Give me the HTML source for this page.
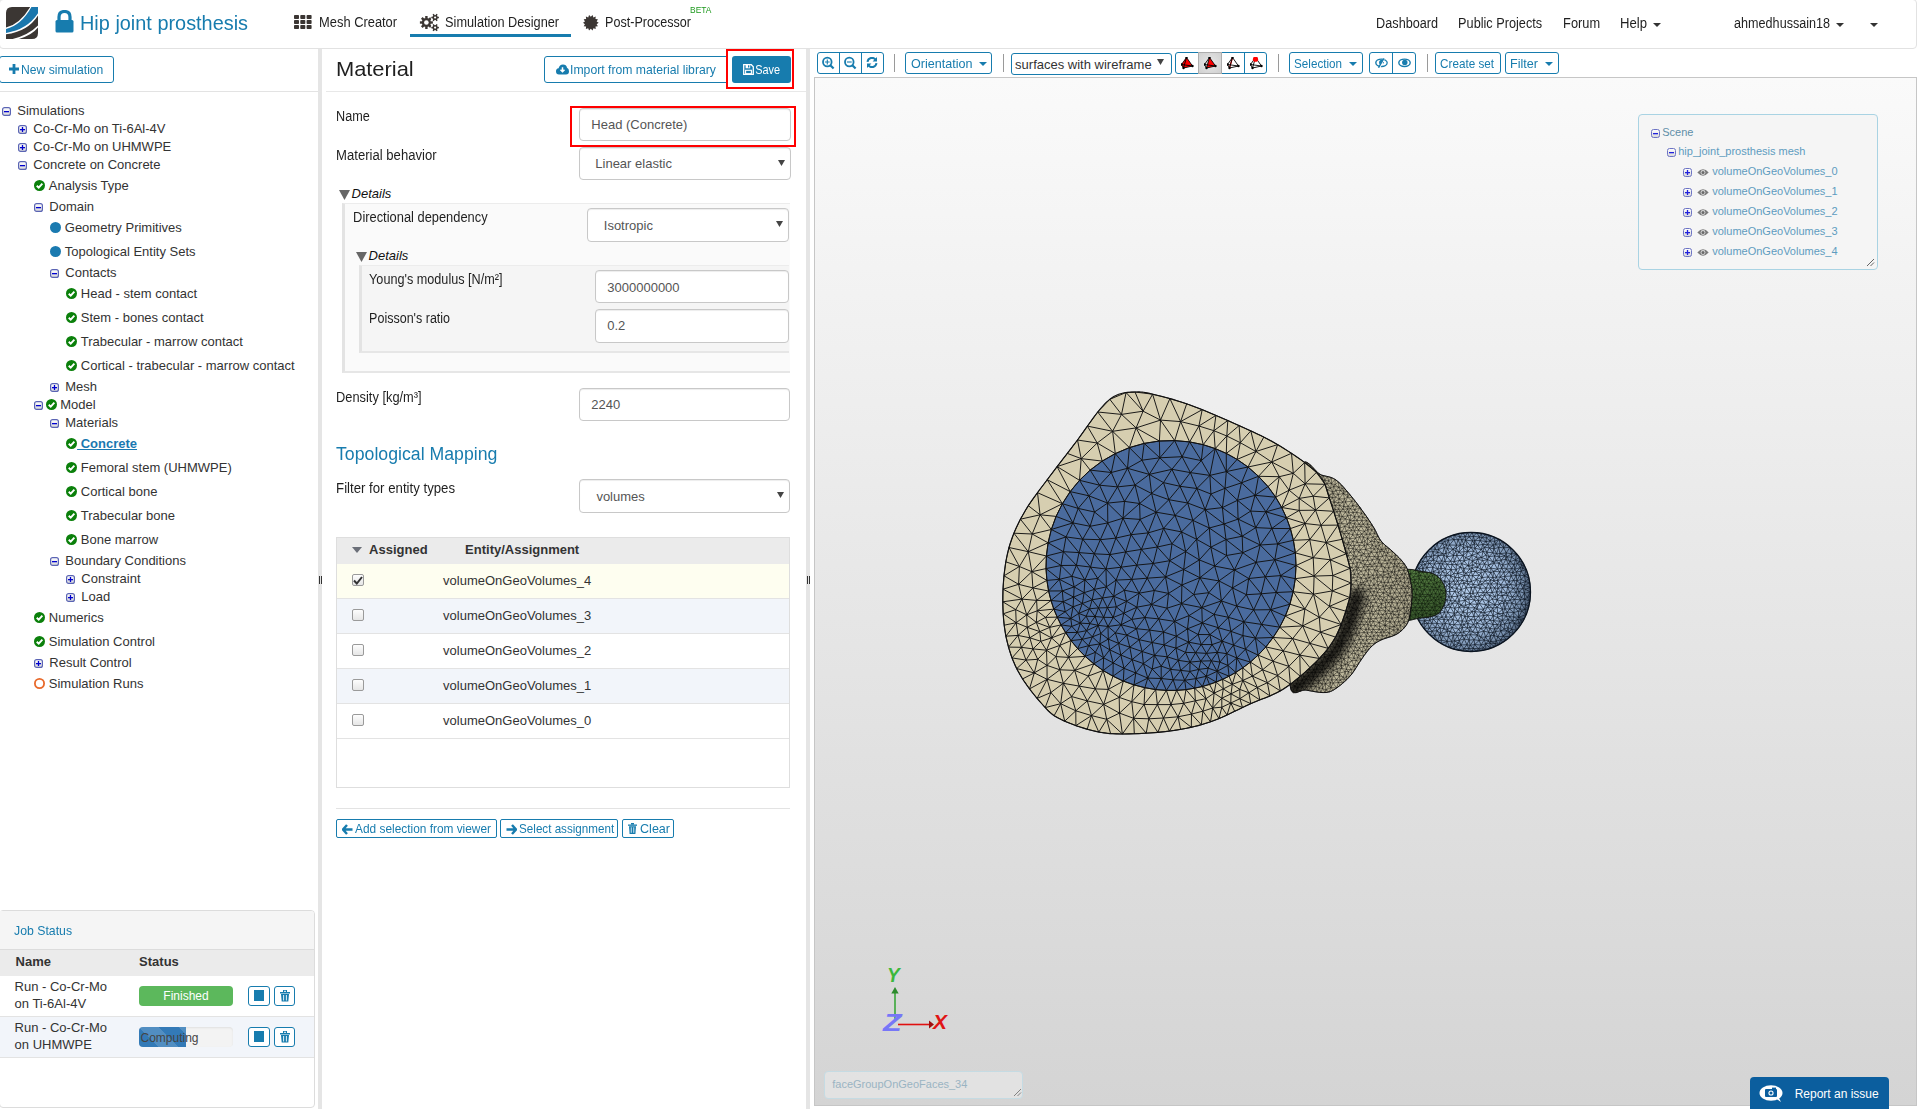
<!DOCTYPE html><html><head><meta charset="utf-8"><style>
*{box-sizing:border-box}
html,body{margin:0;padding:0}
body{width:1918px;height:1109px;overflow:hidden;position:relative;background:#fff;font-family:"Liberation Sans", sans-serif}
.a{position:absolute}
.t{position:absolute;white-space:nowrap}
</style></head><body>
<div class="a" style="left:-1px;top:-1px;width:1918px;height:50px;border:1px solid #e2e2e2;border-radius:4px;background:#fff"></div>
<svg class="a" style="left:6px;top:7px;" width="32" height="32" viewBox="0 0 32 32">
<defs><clipPath id="lc"><path d="M6 0 H32 V26 Q32 32 26 32 H0 V6 Q0 0 6 0Z"/></clipPath></defs>
<g clip-path="url(#lc)">
<rect x="0" y="0" width="32" height="32" fill="#3b3633"/>
<path d="M24.2 0 Q14 17 0 20.6 L0 27.2 Q22 24.4 32 8.4 L32 0Z" fill="#fff"/>
<path d="M25.4 0 Q15.5 18 0 22.1 L0 25.9 Q21 22.8 32 6.3 L32 0Z" fill="#1a77ad"/>
<path d="M32 18.4 Q21 29.5 0 33.5 L6 33.5 Q24 30.5 32 20.6Z" fill="#fff"/>
</g></svg>
<svg class="a" style="left:55px;top:10px;" width="19" height="23" viewBox="0 0 19 23"><path d="M4 11 V7 Q4 1.5 9.5 1.5 Q15 1.5 15 7 V11" fill="none" stroke="#177cae" stroke-width="3.2"/>
<rect x="0.5" y="10" width="18" height="12.5" rx="1.5" fill="#177cae"/></svg>
<div class="t" style="left:79.60px;top:13.07px;font-size:20px;line-height:20px;color:#177cae;font-weight:normal;font-style:normal;transform:scaleX(0.9944);transform-origin:1.40px 0;">Hip joint prosthesis</div>
<svg class="a" style="left:294px;top:15px;" width="19" height="15" viewBox="0 0 19 15"><rect x="0.0" y="0" width="5" height="4" rx="0.8" fill="#3b3633"/><rect x="6.3" y="0" width="5" height="4" rx="0.8" fill="#3b3633"/><rect x="12.6" y="0" width="5" height="4" rx="0.8" fill="#3b3633"/><rect x="0.0" y="5" width="5" height="4" rx="0.8" fill="#3b3633"/><rect x="6.3" y="5" width="5" height="4" rx="0.8" fill="#3b3633"/><rect x="12.6" y="5" width="5" height="4" rx="0.8" fill="#3b3633"/><rect x="0.0" y="10" width="5" height="4" rx="0.8" fill="#3b3633"/><rect x="6.3" y="10" width="5" height="4" rx="0.8" fill="#3b3633"/><rect x="12.6" y="10" width="5" height="4" rx="0.8" fill="#3b3633"/></svg>
<div class="t" style="left:319.02px;top:15.15px;font-size:14px;line-height:14px;color:#1f1f1f;font-weight:normal;font-style:normal;transform:scaleX(0.9196);transform-origin:0.98px 0;">Mesh Creator</div>
<svg class="a" style="left:418px;top:12px;" width="22" height="22" viewBox="0 0 22 22"><circle cx="8.4" cy="10.5" r="4.6" fill="#3b3633"/><rect x="7.20" y="4.00" width="2.4" height="2.70" fill="#3b3633" transform="rotate(0.0 8.4 10.5)"/><rect x="7.20" y="4.00" width="2.4" height="2.70" fill="#3b3633" transform="rotate(45.0 8.4 10.5)"/><rect x="7.20" y="4.00" width="2.4" height="2.70" fill="#3b3633" transform="rotate(90.0 8.4 10.5)"/><rect x="7.20" y="4.00" width="2.4" height="2.70" fill="#3b3633" transform="rotate(135.0 8.4 10.5)"/><rect x="7.20" y="4.00" width="2.4" height="2.70" fill="#3b3633" transform="rotate(180.0 8.4 10.5)"/><rect x="7.20" y="4.00" width="2.4" height="2.70" fill="#3b3633" transform="rotate(225.0 8.4 10.5)"/><rect x="7.20" y="4.00" width="2.4" height="2.70" fill="#3b3633" transform="rotate(270.0 8.4 10.5)"/><rect x="7.20" y="4.00" width="2.4" height="2.70" fill="#3b3633" transform="rotate(315.0 8.4 10.5)"/><circle cx="8.4" cy="10.5" r="2.3" fill="#fff"/><circle cx="17.1" cy="5.5" r="4.4" fill="#fff"/><circle cx="17.1" cy="15.6" r="4.4" fill="#fff"/><circle cx="17.1" cy="5.5" r="2.6" fill="#3b3633"/><rect x="16.35" y="1.70" width="1.5" height="2.00" fill="#3b3633" transform="rotate(30.0 17.1 5.5)"/><rect x="16.35" y="1.70" width="1.5" height="2.00" fill="#3b3633" transform="rotate(90.0 17.1 5.5)"/><rect x="16.35" y="1.70" width="1.5" height="2.00" fill="#3b3633" transform="rotate(150.0 17.1 5.5)"/><rect x="16.35" y="1.70" width="1.5" height="2.00" fill="#3b3633" transform="rotate(210.0 17.1 5.5)"/><rect x="16.35" y="1.70" width="1.5" height="2.00" fill="#3b3633" transform="rotate(270.0 17.1 5.5)"/><rect x="16.35" y="1.70" width="1.5" height="2.00" fill="#3b3633" transform="rotate(330.0 17.1 5.5)"/><circle cx="17.1" cy="5.5" r="1.1" fill="#fff"/><circle cx="17.1" cy="15.6" r="2.6" fill="#3b3633"/><rect x="16.35" y="11.80" width="1.5" height="2.00" fill="#3b3633" transform="rotate(30.0 17.1 15.6)"/><rect x="16.35" y="11.80" width="1.5" height="2.00" fill="#3b3633" transform="rotate(90.0 17.1 15.6)"/><rect x="16.35" y="11.80" width="1.5" height="2.00" fill="#3b3633" transform="rotate(150.0 17.1 15.6)"/><rect x="16.35" y="11.80" width="1.5" height="2.00" fill="#3b3633" transform="rotate(210.0 17.1 15.6)"/><rect x="16.35" y="11.80" width="1.5" height="2.00" fill="#3b3633" transform="rotate(270.0 17.1 15.6)"/><rect x="16.35" y="11.80" width="1.5" height="2.00" fill="#3b3633" transform="rotate(330.0 17.1 15.6)"/><circle cx="17.1" cy="15.6" r="1.1" fill="#fff"/></svg>
<div class="t" style="left:445.02px;top:15.15px;font-size:14px;line-height:14px;color:#1f1f1f;font-weight:normal;font-style:normal;transform:scaleX(0.9095);transform-origin:0.98px 0;">Simulation Designer</div>
<div class="a" style="left:410px;top:34px;width:161px;height:3px;background:#177cae"></div>
<svg class="a" style="left:583px;top:15px;" width="16" height="16" viewBox="0 0 16 16"><path d="M15.70 7.80 L13.65 9.14 L14.92 11.23 L12.49 11.54 L12.73 13.98 L10.40 13.21 L9.56 15.50 L7.80 13.80 L6.04 15.50 L5.20 13.21 L2.87 13.98 L3.11 11.54 L0.68 11.23 L1.95 9.14 L-0.10 7.80 L1.95 6.46 L0.68 4.37 L3.11 4.06 L2.87 1.62 L5.20 2.39 L6.04 0.10 L7.80 1.80 L9.56 0.10 L10.40 2.39 L12.73 1.62 L12.49 4.06 L14.92 4.37 L13.65 6.46Z" fill="#3b3633"/></svg>
<div class="t" style="left:605.02px;top:15.15px;font-size:14px;line-height:14px;color:#1f1f1f;font-weight:normal;font-style:normal;transform:scaleX(0.8981);transform-origin:0.98px 0;">Post-Processor</div>
<div class="t" style="left:690.34px;top:4.96px;font-size:9.5px;line-height:9.5px;color:#1f9a1f;font-weight:normal;font-style:normal;transform:scaleX(0.8880);transform-origin:0.67px 0;">BETA</div>
<div class="t" style="left:1376.02px;top:16.15px;font-size:14px;line-height:14px;color:#1f1f1f;font-weight:normal;font-style:normal;transform:scaleX(0.9054);transform-origin:0.98px 0;">Dashboard</div>
<div class="t" style="left:1458.02px;top:16.15px;font-size:14px;line-height:14px;color:#1f1f1f;font-weight:normal;font-style:normal;transform:scaleX(0.9078);transform-origin:0.98px 0;">Public Projects</div>
<div class="t" style="left:1563.02px;top:16.15px;font-size:14px;line-height:14px;color:#1f1f1f;font-weight:normal;font-style:normal;transform:scaleX(0.9149);transform-origin:0.98px 0;">Forum</div>
<div class="t" style="left:1620.02px;top:16.15px;font-size:14px;line-height:14px;color:#1f1f1f;font-weight:normal;font-style:normal;transform:scaleX(0.9375);transform-origin:0.98px 0;">Help</div>
<svg class="a" style="left:1653px;top:23px;" width="8" height="4" viewBox="0 0 8 4"><path d="M0 0 H8 L4.0 4Z" fill="#333"/></svg>
<div class="t" style="left:1734.02px;top:16.15px;font-size:14px;line-height:14px;color:#1f1f1f;font-weight:normal;font-style:normal;transform:scaleX(0.9000);transform-origin:0.98px 0;">ahmedhussain18</div>
<svg class="a" style="left:1836px;top:23px;" width="8" height="4" viewBox="0 0 8 4"><path d="M0 0 H8 L4.0 4Z" fill="#333"/></svg>
<svg class="a" style="left:1870px;top:23px;" width="8" height="4" viewBox="0 0 8 4"><path d="M0 0 H8 L4.0 4Z" fill="#333"/></svg>
<div class="a" style="left:-1px;top:56px;width:115px;height:27px;border:1px solid #177cae;border-radius:3px"></div>
<svg class="a" style="left:9px;top:64px;" width="10" height="10" viewBox="0 0 10 10"><path d="M3.6 0 H6.4 V3.6 H10 V6.4 H6.4 V10 H3.6 V6.4 H0 V3.6 H3.6Z" fill="#177cae"/></svg>
<div class="t" style="left:20.59px;top:63.00px;font-size:13px;line-height:13px;color:#177cae;font-weight:normal;font-style:normal;transform:scaleX(0.9336);transform-origin:0.91px 0;">New simulation</div>
<div class="a" style="left:0px;top:91px;width:318px;height:1px;background:#e3e3e3"></div>
<div class="a" style="left:318px;top:49px;width:4px;height:1060px;background:#e5e5e5"></div>
<svg class="a" style="left:319px;top:576px;" width="3" height="8" viewBox="0 0 3 8"><rect x="0" y="0" width="1" height="8" fill="#333"/><rect x="2" y="0" width="1" height="8" fill="#333"/></svg>
<svg width="0" height="0" style="position:absolute"><defs><linearGradient id="eg" x1="0" y1="0" x2="0" y2="1"><stop offset="0" stop-color="#ffffff"/><stop offset="1" stop-color="#d8d8d8"/></linearGradient></defs></svg>
<svg class="a" style="left:2px;top:107px;" width="9" height="9" viewBox="0 0 9 9"><rect x="0.6" y="0.6" width="7.8" height="7.8" rx="2" fill="url(#eg)" stroke="#5a64b4" stroke-width="1.2"/><rect x="2" y="4" width="5" height="1.3" fill="#0000d0"/></svg>
<div class="t" style="left:17.29px;top:104.00px;font-size:13px;line-height:13px;color:#333;font-weight:normal;font-style:normal;">Simulations</div>
<svg class="a" style="left:18px;top:125px;" width="9" height="9" viewBox="0 0 9 9"><rect x="0.6" y="0.6" width="7.8" height="7.8" rx="2" fill="url(#eg)" stroke="#5a64b4" stroke-width="1.2"/><rect x="2" y="4" width="5" height="1.3" fill="#0000d0"/><rect x="3.85" y="2" width="1.3" height="5" fill="#0000d0"/></svg>
<div class="t" style="left:33.29px;top:122.00px;font-size:13px;line-height:13px;color:#333;font-weight:normal;font-style:normal;">Co-Cr-Mo on Ti-6Al-4V</div>
<svg class="a" style="left:18px;top:143px;" width="9" height="9" viewBox="0 0 9 9"><rect x="0.6" y="0.6" width="7.8" height="7.8" rx="2" fill="url(#eg)" stroke="#5a64b4" stroke-width="1.2"/><rect x="2" y="4" width="5" height="1.3" fill="#0000d0"/><rect x="3.85" y="2" width="1.3" height="5" fill="#0000d0"/></svg>
<div class="t" style="left:33.29px;top:140.00px;font-size:13px;line-height:13px;color:#333;font-weight:normal;font-style:normal;">Co-Cr-Mo on UHMWPE</div>
<svg class="a" style="left:18px;top:161px;" width="9" height="9" viewBox="0 0 9 9"><rect x="0.6" y="0.6" width="7.8" height="7.8" rx="2" fill="url(#eg)" stroke="#5a64b4" stroke-width="1.2"/><rect x="2" y="4" width="5" height="1.3" fill="#0000d0"/></svg>
<div class="t" style="left:33.29px;top:158.00px;font-size:13px;line-height:13px;color:#333;font-weight:normal;font-style:normal;">Concrete on Concrete</div>
<svg class="a" style="left:34px;top:180px;" width="11" height="11" viewBox="0 0 11 11"><circle cx="5.5" cy="5.5" r="5.5" fill="#0b800b"/><path d="M2.75 5.72 L4.73 7.70 L8.36 3.63" fill="none" stroke="#fff" stroke-width="1.9"/></svg>
<div class="t" style="left:48.79px;top:179.00px;font-size:13px;line-height:13px;color:#333;font-weight:normal;font-style:normal;">Analysis Type</div>
<svg class="a" style="left:34px;top:203px;" width="9" height="9" viewBox="0 0 9 9"><rect x="0.6" y="0.6" width="7.8" height="7.8" rx="2" fill="url(#eg)" stroke="#5a64b4" stroke-width="1.2"/><rect x="2" y="4" width="5" height="1.3" fill="#0000d0"/></svg>
<div class="t" style="left:49.29px;top:200.00px;font-size:13px;line-height:13px;color:#333;font-weight:normal;font-style:normal;">Domain</div>
<svg class="a" style="left:50px;top:222px;" width="11" height="11" viewBox="0 0 11 11"><circle cx="5.5" cy="5.5" r="5.5" fill="#1a7ab0"/></svg>
<div class="t" style="left:64.79px;top:221.00px;font-size:13px;line-height:13px;color:#333;font-weight:normal;font-style:normal;">Geometry Primitives</div>
<svg class="a" style="left:50px;top:246px;" width="11" height="11" viewBox="0 0 11 11"><circle cx="5.5" cy="5.5" r="5.5" fill="#1a7ab0"/></svg>
<div class="t" style="left:64.79px;top:245.00px;font-size:13px;line-height:13px;color:#333;font-weight:normal;font-style:normal;">Topological Entity Sets</div>
<svg class="a" style="left:50px;top:269px;" width="9" height="9" viewBox="0 0 9 9"><rect x="0.6" y="0.6" width="7.8" height="7.8" rx="2" fill="url(#eg)" stroke="#5a64b4" stroke-width="1.2"/><rect x="2" y="4" width="5" height="1.3" fill="#0000d0"/></svg>
<div class="t" style="left:65.29px;top:266.00px;font-size:13px;line-height:13px;color:#333;font-weight:normal;font-style:normal;">Contacts</div>
<svg class="a" style="left:66px;top:288px;" width="11" height="11" viewBox="0 0 11 11"><circle cx="5.5" cy="5.5" r="5.5" fill="#0b800b"/><path d="M2.75 5.72 L4.73 7.70 L8.36 3.63" fill="none" stroke="#fff" stroke-width="1.9"/></svg>
<div class="t" style="left:80.79px;top:287.00px;font-size:13px;line-height:13px;color:#333;font-weight:normal;font-style:normal;">Head - stem contact</div>
<svg class="a" style="left:66px;top:312px;" width="11" height="11" viewBox="0 0 11 11"><circle cx="5.5" cy="5.5" r="5.5" fill="#0b800b"/><path d="M2.75 5.72 L4.73 7.70 L8.36 3.63" fill="none" stroke="#fff" stroke-width="1.9"/></svg>
<div class="t" style="left:80.79px;top:311.00px;font-size:13px;line-height:13px;color:#333;font-weight:normal;font-style:normal;">Stem - bones contact</div>
<svg class="a" style="left:66px;top:336px;" width="11" height="11" viewBox="0 0 11 11"><circle cx="5.5" cy="5.5" r="5.5" fill="#0b800b"/><path d="M2.75 5.72 L4.73 7.70 L8.36 3.63" fill="none" stroke="#fff" stroke-width="1.9"/></svg>
<div class="t" style="left:80.79px;top:335.00px;font-size:13px;line-height:13px;color:#333;font-weight:normal;font-style:normal;">Trabecular - marrow contact</div>
<svg class="a" style="left:66px;top:360px;" width="11" height="11" viewBox="0 0 11 11"><circle cx="5.5" cy="5.5" r="5.5" fill="#0b800b"/><path d="M2.75 5.72 L4.73 7.70 L8.36 3.63" fill="none" stroke="#fff" stroke-width="1.9"/></svg>
<div class="t" style="left:80.79px;top:359.00px;font-size:13px;line-height:13px;color:#333;font-weight:normal;font-style:normal;">Cortical - trabecular - marrow contact</div>
<svg class="a" style="left:50px;top:383px;" width="9" height="9" viewBox="0 0 9 9"><rect x="0.6" y="0.6" width="7.8" height="7.8" rx="2" fill="url(#eg)" stroke="#5a64b4" stroke-width="1.2"/><rect x="2" y="4" width="5" height="1.3" fill="#0000d0"/><rect x="3.85" y="2" width="1.3" height="5" fill="#0000d0"/></svg>
<div class="t" style="left:65.29px;top:380.00px;font-size:13px;line-height:13px;color:#333;font-weight:normal;font-style:normal;">Mesh</div>
<svg class="a" style="left:34px;top:401px;" width="9" height="9" viewBox="0 0 9 9"><rect x="0.6" y="0.6" width="7.8" height="7.8" rx="2" fill="url(#eg)" stroke="#5a64b4" stroke-width="1.2"/><rect x="2" y="4" width="5" height="1.3" fill="#0000d0"/></svg>
<svg class="a" style="left:46px;top:399px;" width="11" height="11" viewBox="0 0 11 11"><circle cx="5.5" cy="5.5" r="5.5" fill="#0b800b"/><path d="M2.75 5.72 L4.73 7.70 L8.36 3.63" fill="none" stroke="#fff" stroke-width="1.9"/></svg>
<div class="t" style="left:60.29px;top:398.00px;font-size:13px;line-height:13px;color:#333;font-weight:normal;font-style:normal;">Model</div>
<svg class="a" style="left:50px;top:419px;" width="9" height="9" viewBox="0 0 9 9"><rect x="0.6" y="0.6" width="7.8" height="7.8" rx="2" fill="url(#eg)" stroke="#5a64b4" stroke-width="1.2"/><rect x="2" y="4" width="5" height="1.3" fill="#0000d0"/></svg>
<div class="t" style="left:65.29px;top:416.00px;font-size:13px;line-height:13px;color:#333;font-weight:normal;font-style:normal;">Materials</div>
<svg class="a" style="left:66px;top:438px;" width="11" height="11" viewBox="0 0 11 11"><circle cx="5.5" cy="5.5" r="5.5" fill="#0b800b"/><path d="M2.75 5.72 L4.73 7.70 L8.36 3.63" fill="none" stroke="#fff" stroke-width="1.9"/></svg>
<div class="t" style="left:77.09px;top:437.00px;font-size:13px;line-height:13px;color:#1a78b0;font-weight:bold;font-style:normal;text-decoration:underline;">&nbsp;Concrete</div>
<svg class="a" style="left:66px;top:462px;" width="11" height="11" viewBox="0 0 11 11"><circle cx="5.5" cy="5.5" r="5.5" fill="#0b800b"/><path d="M2.75 5.72 L4.73 7.70 L8.36 3.63" fill="none" stroke="#fff" stroke-width="1.9"/></svg>
<div class="t" style="left:80.79px;top:461.00px;font-size:13px;line-height:13px;color:#333;font-weight:normal;font-style:normal;">Femoral stem (UHMWPE)</div>
<svg class="a" style="left:66px;top:486px;" width="11" height="11" viewBox="0 0 11 11"><circle cx="5.5" cy="5.5" r="5.5" fill="#0b800b"/><path d="M2.75 5.72 L4.73 7.70 L8.36 3.63" fill="none" stroke="#fff" stroke-width="1.9"/></svg>
<div class="t" style="left:80.79px;top:485.00px;font-size:13px;line-height:13px;color:#333;font-weight:normal;font-style:normal;">Cortical bone</div>
<svg class="a" style="left:66px;top:510px;" width="11" height="11" viewBox="0 0 11 11"><circle cx="5.5" cy="5.5" r="5.5" fill="#0b800b"/><path d="M2.75 5.72 L4.73 7.70 L8.36 3.63" fill="none" stroke="#fff" stroke-width="1.9"/></svg>
<div class="t" style="left:80.79px;top:509.00px;font-size:13px;line-height:13px;color:#333;font-weight:normal;font-style:normal;">Trabecular bone</div>
<svg class="a" style="left:66px;top:534px;" width="11" height="11" viewBox="0 0 11 11"><circle cx="5.5" cy="5.5" r="5.5" fill="#0b800b"/><path d="M2.75 5.72 L4.73 7.70 L8.36 3.63" fill="none" stroke="#fff" stroke-width="1.9"/></svg>
<div class="t" style="left:80.79px;top:533.00px;font-size:13px;line-height:13px;color:#333;font-weight:normal;font-style:normal;">Bone marrow</div>
<svg class="a" style="left:50px;top:557px;" width="9" height="9" viewBox="0 0 9 9"><rect x="0.6" y="0.6" width="7.8" height="7.8" rx="2" fill="url(#eg)" stroke="#5a64b4" stroke-width="1.2"/><rect x="2" y="4" width="5" height="1.3" fill="#0000d0"/></svg>
<div class="t" style="left:65.29px;top:554.00px;font-size:13px;line-height:13px;color:#333;font-weight:normal;font-style:normal;">Boundary Conditions</div>
<svg class="a" style="left:66px;top:575px;" width="9" height="9" viewBox="0 0 9 9"><rect x="0.6" y="0.6" width="7.8" height="7.8" rx="2" fill="url(#eg)" stroke="#5a64b4" stroke-width="1.2"/><rect x="2" y="4" width="5" height="1.3" fill="#0000d0"/><rect x="3.85" y="2" width="1.3" height="5" fill="#0000d0"/></svg>
<div class="t" style="left:81.29px;top:572.00px;font-size:13px;line-height:13px;color:#333;font-weight:normal;font-style:normal;">Constraint</div>
<svg class="a" style="left:66px;top:593px;" width="9" height="9" viewBox="0 0 9 9"><rect x="0.6" y="0.6" width="7.8" height="7.8" rx="2" fill="url(#eg)" stroke="#5a64b4" stroke-width="1.2"/><rect x="2" y="4" width="5" height="1.3" fill="#0000d0"/><rect x="3.85" y="2" width="1.3" height="5" fill="#0000d0"/></svg>
<div class="t" style="left:81.29px;top:590.00px;font-size:13px;line-height:13px;color:#333;font-weight:normal;font-style:normal;">Load</div>
<svg class="a" style="left:34px;top:612px;" width="11" height="11" viewBox="0 0 11 11"><circle cx="5.5" cy="5.5" r="5.5" fill="#0b800b"/><path d="M2.75 5.72 L4.73 7.70 L8.36 3.63" fill="none" stroke="#fff" stroke-width="1.9"/></svg>
<div class="t" style="left:48.79px;top:611.00px;font-size:13px;line-height:13px;color:#333;font-weight:normal;font-style:normal;">Numerics</div>
<svg class="a" style="left:34px;top:636px;" width="11" height="11" viewBox="0 0 11 11"><circle cx="5.5" cy="5.5" r="5.5" fill="#0b800b"/><path d="M2.75 5.72 L4.73 7.70 L8.36 3.63" fill="none" stroke="#fff" stroke-width="1.9"/></svg>
<div class="t" style="left:48.79px;top:635.00px;font-size:13px;line-height:13px;color:#333;font-weight:normal;font-style:normal;">Simulation Control</div>
<svg class="a" style="left:34px;top:659px;" width="9" height="9" viewBox="0 0 9 9"><rect x="0.6" y="0.6" width="7.8" height="7.8" rx="2" fill="url(#eg)" stroke="#5a64b4" stroke-width="1.2"/><rect x="2" y="4" width="5" height="1.3" fill="#0000d0"/><rect x="3.85" y="2" width="1.3" height="5" fill="#0000d0"/></svg>
<div class="t" style="left:49.29px;top:656.00px;font-size:13px;line-height:13px;color:#333;font-weight:normal;font-style:normal;">Result Control</div>
<svg class="a" style="left:34px;top:678px;" width="11" height="11" viewBox="0 0 11 11"><circle cx="5.5" cy="5.5" r="4.6" fill="none" stroke="#e8692a" stroke-width="1.8"/></svg>
<div class="t" style="left:48.79px;top:677.00px;font-size:13px;line-height:13px;color:#333;font-weight:normal;font-style:normal;">Simulation Runs</div>
<div class="a" style="left:-1px;top:910px;width:316px;height:198px;border:1px solid #dcdcdc;border-radius:4px;background:#fff"></div>
<div class="a" style="left:0px;top:911px;width:314px;height:38px;background:#f5f5f5;border-radius:0 3px 0 0"></div>
<div class="a" style="left:0px;top:949px;width:314px;height:1px;background:#dcdcdc"></div>
<div class="t" style="left:13.59px;top:923.50px;font-size:13px;line-height:13px;color:#177cae;font-weight:normal;font-style:normal;transform:scaleX(0.9443);transform-origin:0.91px 0;">Job Status</div>
<div class="a" style="left:0px;top:950px;width:314px;height:26px;background:#ebebeb"></div>
<div class="t" style="left:15.59px;top:955.00px;font-size:13px;line-height:13px;color:#333;font-weight:bold;font-style:normal;">Name</div>
<div class="t" style="left:139.09px;top:955.00px;font-size:13px;line-height:13px;color:#333;font-weight:bold;font-style:normal;">Status</div>
<div class="a" style="left:0px;top:1016px;width:314px;height:1px;background:#e3e3e3"></div>
<div class="a" style="left:0px;top:1017px;width:314px;height:40px;background:#f2f5fa"></div>
<div class="a" style="left:0px;top:1057px;width:314px;height:1px;background:#e3e3e3"></div>
<div class="t" style="left:14.59px;top:979.50px;font-size:13px;line-height:13px;color:#333;font-weight:normal;font-style:normal;">Run - Co-Cr-Mo</div>
<div class="t" style="left:14.59px;top:997.00px;font-size:13px;line-height:13px;color:#333;font-weight:normal;font-style:normal;">on Ti-6Al-4V</div>
<div class="t" style="left:14.59px;top:1020.50px;font-size:13px;line-height:13px;color:#333;font-weight:normal;font-style:normal;">Run - Co-Cr-Mo</div>
<div class="t" style="left:14.59px;top:1038.00px;font-size:13px;line-height:13px;color:#333;font-weight:normal;font-style:normal;">on UHMWPE</div>
<div class="a" style="left:139px;top:986px;width:94px;height:20px;background:#5cb85c;border-radius:4px"></div>
<div class="t" style="left:139px;top:989px;width:94px;text-align:center;font-size:12px;line-height:14px;color:#fff">Finished</div>
<div class="a" style="left:139px;top:1027px;width:94px;height:20px;background:#f3f3f3;border-radius:4px;box-shadow:inset 0 1px 2px rgba(0,0,0,.08)"></div>
<div class="a" style="left:139px;top:1027px;width:47px;height:20px;border-radius:4px 0 0 4px;background-color:#337ab7;background-image:linear-gradient(45deg,rgba(255,255,255,.15) 25%,transparent 25%,transparent 50%,rgba(255,255,255,.15) 50%,rgba(255,255,255,.15) 75%,transparent 75%,transparent);background-size:40px 40px"></div>
<div class="t" style="left:140.5px;top:1030.5px;font-size:12px;line-height:14px;color:#444">Computing</div>
<div class="a" style="left:248px;top:986px;width:22px;height:20px;border:1px solid #177cae;border-radius:3px;background:#fff"></div>
<div class="a" style="left:254px;top:990px;width:10px;height:11px;background:#177cae"></div>
<div class="a" style="left:274px;top:986px;width:21px;height:20px;border:1px solid #177cae;border-radius:3px;background:#fff"></div>
<svg class="a" style="left:280px;top:990px;" width="10" height="12" viewBox="0 0 10 12"><rect x="0" y="2" width="10" height="1.5" fill="#177cae"/><rect x="3.5" y="0.3" width="3" height="2" fill="none" stroke="#177cae" stroke-width="1"/><path d="M1 4 H9 L8.3 11.5 H1.7Z" fill="#177cae"/><rect x="3.2" y="5" width="0.9" height="5.5" fill="#fff"/><rect x="5.9" y="5" width="0.9" height="5.5" fill="#fff"/></svg>
<div class="a" style="left:248px;top:1027px;width:22px;height:20px;border:1px solid #177cae;border-radius:3px;background:#fff"></div>
<div class="a" style="left:254px;top:1031px;width:10px;height:11px;background:#177cae"></div>
<div class="a" style="left:274px;top:1027px;width:21px;height:20px;border:1px solid #177cae;border-radius:3px;background:#fff"></div>
<svg class="a" style="left:280px;top:1031px;" width="10" height="12" viewBox="0 0 10 12"><rect x="0" y="2" width="10" height="1.5" fill="#177cae"/><rect x="3.5" y="0.3" width="3" height="2" fill="none" stroke="#177cae" stroke-width="1"/><path d="M1 4 H9 L8.3 11.5 H1.7Z" fill="#177cae"/><rect x="3.2" y="5" width="0.9" height="5.5" fill="#fff"/><rect x="5.9" y="5" width="0.9" height="5.5" fill="#fff"/></svg>
<div class="t" style="left:336.06px;top:59.31px;font-size:20.6px;line-height:20.6px;color:#1f1f1f;font-weight:normal;font-style:normal;transform:scaleX(1.0621);transform-origin:1.44px 0;">Material</div>
<div class="a" style="left:544px;top:56px;width:184px;height:27px;border:1px solid #177cae;border-radius:3px 0 0 3px;background:#fff"></div>
<svg class="a" style="left:556px;top:64px;" width="13" height="11" viewBox="0 0 13 11"><path d="M3 10.5 Q0 10.5 0 7.3 Q0 4.6 2.6 4.3 Q3.4 0.5 7 0.5 Q10.4 0.5 11 3.8 Q13 4.4 13 7.2 Q13 10.5 10 10.5Z" fill="#177cae"/><path d="M6.5 3.2 V7.6 M4.5 5.8 L6.5 7.8 L8.5 5.8" stroke="#fff" stroke-width="1.5" fill="none"/></svg>
<div class="t" style="left:569.59px;top:63.00px;font-size:13px;line-height:13px;color:#177cae;font-weight:normal;font-style:normal;transform:scaleX(0.9391);transform-origin:0.91px 0;">Import from material library</div>
<div class="a" style="left:732px;top:56px;width:59px;height:27px;background:#177cae;border-radius:3px"></div>
<svg class="a" style="left:743px;top:64px;" width="11" height="11" viewBox="0 0 11 11"><path d="M0.7 0.7 H8.3 L10.3 2.7 V10.3 H0.7Z" fill="none" stroke="#fff" stroke-width="1.3"/><rect x="2.6" y="0.7" width="4.6" height="3.6" fill="#fff"/><rect x="5" y="1.3" width="1.3" height="2.2" fill="#177cae"/><rect x="2.6" y="6.3" width="5.8" height="3.4" fill="none" stroke="#fff" stroke-width="1.1"/></svg>
<div class="t" style="left:754.59px;top:63.00px;font-size:13px;line-height:13px;color:#fff;font-weight:normal;font-style:normal;transform:scaleX(0.8400);transform-origin:0.91px 0;">Save</div>
<div class="a" style="left:726px;top:49px;width:68px;height:40px;border:2px solid #ff0000"></div>
<div class="a" style="left:326px;top:91px;width:480px;height:1px;background:#e8e8e8"></div>
<div class="a" style="left:806px;top:49px;width:4px;height:1060px;background:#e5e5e5"></div>
<svg class="a" style="left:807px;top:576px;" width="3" height="8" viewBox="0 0 3 8"><rect x="0" y="0" width="1" height="8" fill="#333"/><rect x="2" y="0" width="1" height="8" fill="#333"/></svg>
<div class="t" style="left:335.52px;top:109.15px;font-size:14px;line-height:14px;color:#1f1f1f;font-weight:normal;font-style:normal;transform:scaleX(0.9036);transform-origin:0.98px 0;">Name</div>
<div class="a" style="left:579px;top:108px;width:212px;height:33px;border:1px solid #c8c8c8;border-radius:4px;background:#fff;box-shadow:inset 0 1px 1px rgba(0,0,0,.075)"></div>
<div class="t" style="left:591.29px;top:118.00px;font-size:13px;line-height:13px;color:#555;font-weight:normal;font-style:normal;">Head (Concrete)</div>
<div class="a" style="left:570px;top:106px;width:226px;height:41px;border:2px solid #ff0000"></div>
<div class="t" style="left:335.52px;top:148.15px;font-size:14px;line-height:14px;color:#1f1f1f;font-weight:normal;font-style:normal;transform:scaleX(0.9359);transform-origin:0.98px 0;">Material behavior</div>
<div class="a" style="left:579px;top:147px;width:212px;height:33px;border:1px solid #c8c8c8;border-radius:4px;background:#fff;box-shadow:inset 0 1px 1px rgba(0,0,0,.075)"></div>
<div class="t" style="left:595.29px;top:157.00px;font-size:13px;line-height:13px;color:#555;font-weight:normal;font-style:normal;">Linear elastic</div>
<svg class="a" style="left:778px;top:160px;" width="7" height="6" viewBox="0 0 7 6"><path d="M0 0 H7 L3.5 6Z" fill="#444"/></svg>
<svg class="a" style="left:339px;top:190px;" width="11" height="10" viewBox="0 0 11 10"><path d="M0 0 H11 L5.5 10Z" fill="#666"/></svg>
<div class="t" style="left:351.59px;top:187.00px;font-size:13px;line-height:13px;color:#111;font-weight:normal;font-style:italic;">Details</div>
<div class="a" style="left:342px;top:203px;width:448px;height:170px;background:#fafafa;border-left:3px solid #e3e3e3;border-top:1px solid #ececec;border-bottom:2px solid #e6e6e6"></div>
<div class="t" style="left:352.52px;top:210.15px;font-size:14px;line-height:14px;color:#1f1f1f;font-weight:normal;font-style:normal;transform:scaleX(0.9196);transform-origin:0.98px 0;">Directional dependency</div>
<div class="a" style="left:587px;top:208px;width:202px;height:34px;border:1px solid #c8c8c8;border-radius:4px;background:#fff;box-shadow:inset 0 1px 1px rgba(0,0,0,.075)"></div>
<div class="t" style="left:603.79px;top:219.00px;font-size:13px;line-height:13px;color:#555;font-weight:normal;font-style:normal;">Isotropic</div>
<svg class="a" style="left:776px;top:221px;" width="7" height="6" viewBox="0 0 7 6"><path d="M0 0 H7 L3.5 6Z" fill="#444"/></svg>
<svg class="a" style="left:356px;top:252px;" width="11" height="10" viewBox="0 0 11 10"><path d="M0 0 H11 L5.5 10Z" fill="#666"/></svg>
<div class="t" style="left:368.59px;top:249.00px;font-size:13px;line-height:13px;color:#111;font-weight:normal;font-style:italic;">Details</div>
<div class="a" style="left:359px;top:265px;width:430px;height:88px;background:#f5f5f5;border-left:3px solid #e3e3e3;border-top:1px solid #ececec;border-bottom:2px solid #e6e6e6"></div>
<div class="t" style="left:369.02px;top:272.15px;font-size:14px;line-height:14px;color:#1f1f1f;font-weight:normal;font-style:normal;transform:scaleX(0.9033);transform-origin:0.98px 0;">Young's modulus [N/m²]</div>
<div class="a" style="left:595px;top:270px;width:194px;height:33px;border:1px solid #c8c8c8;border-radius:4px;background:#fff;box-shadow:inset 0 1px 1px rgba(0,0,0,.075)"></div>
<div class="t" style="left:607.29px;top:280.50px;font-size:13px;line-height:13px;color:#555;font-weight:normal;font-style:normal;">3000000000</div>
<div class="t" style="left:369.02px;top:310.90px;font-size:14px;line-height:14px;color:#1f1f1f;font-weight:normal;font-style:normal;transform:scaleX(0.8934);transform-origin:0.98px 0;">Poisson's ratio</div>
<div class="a" style="left:595px;top:309px;width:194px;height:34px;border:1px solid #c8c8c8;border-radius:4px;background:#fff;box-shadow:inset 0 1px 1px rgba(0,0,0,.075)"></div>
<div class="t" style="left:607.29px;top:319.00px;font-size:13px;line-height:13px;color:#555;font-weight:normal;font-style:normal;">0.2</div>
<div class="t" style="left:335.52px;top:390.15px;font-size:14px;line-height:14px;color:#1f1f1f;font-weight:normal;font-style:normal;transform:scaleX(0.9160);transform-origin:0.98px 0;">Density [kg/m³]</div>
<div class="a" style="left:579px;top:388px;width:211px;height:33px;border:1px solid #c8c8c8;border-radius:4px;background:#fff;box-shadow:inset 0 1px 1px rgba(0,0,0,.075)"></div>
<div class="t" style="left:591.29px;top:398.00px;font-size:13px;line-height:13px;color:#555;font-weight:normal;font-style:normal;">2240</div>
<div class="t" style="left:336.24px;top:444.76px;font-size:18px;line-height:18px;color:#177cae;font-weight:normal;font-style:normal;transform:scaleX(0.9835);transform-origin:1.26px 0;">Topological Mapping</div>
<div class="t" style="left:335.52px;top:480.65px;font-size:14px;line-height:14px;color:#1f1f1f;font-weight:normal;font-style:normal;transform:scaleX(0.9441);transform-origin:0.98px 0;">Filter for entity types</div>
<div class="a" style="left:579px;top:479px;width:211px;height:34px;border:1px solid #c8c8c8;border-radius:4px;background:#fff;box-shadow:inset 0 1px 1px rgba(0,0,0,.075)"></div>
<div class="t" style="left:596.39px;top:489.60px;font-size:13px;line-height:13px;color:#555;font-weight:normal;font-style:normal;">volumes</div>
<svg class="a" style="left:777px;top:492px;" width="7" height="6" viewBox="0 0 7 6"><path d="M0 0 H7 L3.5 6Z" fill="#444"/></svg>
<div class="a" style="left:336px;top:537px;width:454px;height:251px;border:1px solid #dedede;background:#fff"></div>
<div class="a" style="left:337px;top:538px;width:452px;height:26px;background:#ebebeb"></div>
<svg class="a" style="left:352px;top:547px;" width="10" height="6" viewBox="0 0 10 6"><path d="M0 0 H10 L5.0 6Z" fill="#6b6f78"/></svg>
<div class="t" style="left:369.09px;top:543.00px;font-size:13px;line-height:13px;color:#333;font-weight:bold;font-style:normal;">Assigned</div>
<div class="t" style="left:465.09px;top:543.00px;font-size:13px;line-height:13px;color:#333;font-weight:bold;font-style:normal;">Entity/Assignment</div>
<div class="a" style="left:337px;top:564px;width:452px;height:35px;background:#fefef0;border-bottom:1px solid #e3e3e3"></div>
<div class="a" style="left:352px;top:574px;width:12px;height:12px;border:1px solid #9a9a9a;border-radius:2px;background:linear-gradient(#fdfdfd,#e6e6e6)"></div>
<div class="t" style="left:443.09px;top:574.00px;font-size:13px;line-height:13px;color:#333;font-weight:normal;font-style:normal;">volumeOnGeoVolumes_4</div>
<div class="a" style="left:337px;top:599px;width:452px;height:35px;background:#f2f5fa;border-bottom:1px solid #e3e3e3"></div>
<div class="a" style="left:352px;top:609px;width:12px;height:12px;border:1px solid #9a9a9a;border-radius:2px;background:linear-gradient(#fdfdfd,#e6e6e6)"></div>
<div class="t" style="left:443.09px;top:609.00px;font-size:13px;line-height:13px;color:#333;font-weight:normal;font-style:normal;">volumeOnGeoVolumes_3</div>
<div class="a" style="left:337px;top:634px;width:452px;height:35px;background:#ffffff;border-bottom:1px solid #e3e3e3"></div>
<div class="a" style="left:352px;top:644px;width:12px;height:12px;border:1px solid #9a9a9a;border-radius:2px;background:linear-gradient(#fdfdfd,#e6e6e6)"></div>
<div class="t" style="left:443.09px;top:644.00px;font-size:13px;line-height:13px;color:#333;font-weight:normal;font-style:normal;">volumeOnGeoVolumes_2</div>
<div class="a" style="left:337px;top:669px;width:452px;height:35px;background:#f2f5fa;border-bottom:1px solid #e3e3e3"></div>
<div class="a" style="left:352px;top:679px;width:12px;height:12px;border:1px solid #9a9a9a;border-radius:2px;background:linear-gradient(#fdfdfd,#e6e6e6)"></div>
<div class="t" style="left:443.09px;top:679.00px;font-size:13px;line-height:13px;color:#333;font-weight:normal;font-style:normal;">volumeOnGeoVolumes_1</div>
<div class="a" style="left:337px;top:704px;width:452px;height:35px;background:#ffffff;border-bottom:1px solid #e3e3e3"></div>
<div class="a" style="left:352px;top:714px;width:12px;height:12px;border:1px solid #9a9a9a;border-radius:2px;background:linear-gradient(#fdfdfd,#e6e6e6)"></div>
<div class="t" style="left:443.09px;top:714.00px;font-size:13px;line-height:13px;color:#333;font-weight:normal;font-style:normal;">volumeOnGeoVolumes_0</div>
<svg class="a" style="left:353px;top:576px;" width="10" height="9" viewBox="0 0 10 9"><path d="M1 4.5 L3.8 7.5 L9 1" fill="none" stroke="#333" stroke-width="2"/></svg>
<div class="a" style="left:336px;top:808px;width:454px;height:1px;background:#e3e3e3"></div>
<div class="a" style="left:336px;top:819px;width:161px;height:19px;border:1px solid #177cae;border-radius:2px;background:#fff"></div>
<svg class="a" style="left:342px;top:823.5px" width="11" height="11" viewBox="0 0 11 11"><path d="M5 1 L1 5.5 L5 10 M1.5 5.5 H10.5" stroke="#177cae" stroke-width="2.4" fill="none"/></svg>
<div class="t" style="left:355.09px;top:822.00px;font-size:13px;line-height:13px;color:#177cae;font-weight:normal;font-style:normal;transform:scaleX(0.9129);transform-origin:0.91px 0;">Add selection from viewer</div>
<div class="a" style="left:500px;top:819px;width:118px;height:19px;border:1px solid #177cae;border-radius:2px;background:#fff"></div>
<svg class="a" style="left:506px;top:823.5px" width="11" height="11" viewBox="0 0 11 11"><path d="M6 1 L10 5.5 L6 10 M0.5 5.5 H9.5" stroke="#177cae" stroke-width="2.4" fill="none"/></svg>
<div class="t" style="left:519.09px;top:822.00px;font-size:13px;line-height:13px;color:#177cae;font-weight:normal;font-style:normal;transform:scaleX(0.8946);transform-origin:0.91px 0;">Select assignment</div>
<div class="a" style="left:622px;top:819px;width:52px;height:19px;border:1px solid #177cae;border-radius:2px;background:#fff"></div>
<svg class="a" style="left:628px;top:823px" width="9" height="11" viewBox="0 0 9 11"><rect x="0" y="1.5" width="9" height="1.3" fill="#177cae"/><rect x="3" y="0" width="3" height="1.6" fill="#177cae"/><path d="M1 3.3 H8 L7.4 11 H1.6Z" fill="#177cae"/><rect x="2.8" y="4.3" width="0.8" height="5.5" fill="#fff"/><rect x="5.4" y="4.3" width="0.8" height="5.5" fill="#fff"/></svg>
<div class="t" style="left:640.09px;top:822.00px;font-size:13px;line-height:13px;color:#177cae;font-weight:normal;font-style:normal;transform:scaleX(0.9652);transform-origin:0.91px 0;">Clear</div>
<div class="a" style="left:814px;top:77px;width:1103px;height:1029px;border:1px solid #c6c6c6;background:linear-gradient(#fafafa,#d4d4d4)"></div>
<div class="a" style="left:817px;top:52px;width:67px;height:22px;border:1px solid #177cae;border-radius:3px;background:#fff"></div>
<div class="a" style="left:839px;top:52px;width:1px;height:22px;background:#177cae"></div>
<div class="a" style="left:861px;top:52px;width:1px;height:22px;background:#177cae"></div>
<svg class="a" style="left:822px;top:56px" width="13" height="14" viewBox="0 0 13 14"><circle cx="5.3" cy="6" r="4.3" fill="none" stroke="#177cae" stroke-width="1.8"/><path d="M8.3 9.2 L11.6 12.6" stroke="#177cae" stroke-width="2.2"/><path d="M2.9 6 H7.7 M5.3 3.6 V8.4" stroke="#177cae" stroke-width="1.1"/></svg>
<svg class="a" style="left:844px;top:56px" width="13" height="14" viewBox="0 0 13 14"><circle cx="5.3" cy="6" r="4.3" fill="none" stroke="#177cae" stroke-width="1.8"/><path d="M8.3 9.2 L11.6 12.6" stroke="#177cae" stroke-width="2.2"/><path d="M2.9 6 H7.7" stroke="#177cae" stroke-width="1.1"/></svg>
<svg class="a" style="left:866px;top:57px" width="12" height="11" viewBox="0 0 12 11"><path d="M1.5 4.8 A4.6 4.6 0 0 1 9.6 2.6" fill="none" stroke="#177cae" stroke-width="2"/><path d="M11 0 V4.6 H6.6Z" fill="#177cae"/><path d="M10.5 6.2 A4.6 4.6 0 0 1 2.4 8.4" fill="none" stroke="#177cae" stroke-width="2"/><path d="M1 11 V6.4 H5.4Z" fill="#177cae"/></svg>
<div class="a" style="left:894px;top:54px;width:1px;height:18px;background:#9a9a9a"></div>
<div class="a" style="left:905px;top:52px;width:87px;height:22px;border:1px solid #177cae;border-radius:3px;background:#fff"></div>
<div class="t" style="left:910.59px;top:57.00px;font-size:13px;line-height:13px;color:#177cae;font-weight:normal;font-style:normal;transform:scaleX(0.9670);transform-origin:0.91px 0;">Orientation</div>
<svg class="a" style="left:979px;top:62px;" width="8" height="4" viewBox="0 0 8 4"><path d="M0 0 H8 L4.0 4Z" fill="#177cae"/></svg>
<div class="a" style="left:1003px;top:54px;width:1px;height:18px;background:#9a9a9a"></div>
<div class="a" style="left:1011px;top:53px;width:161px;height:22px;border:1px solid #177cae;border-radius:3px;background:#fff"></div>
<div class="t" style="left:1015.09px;top:58.00px;font-size:13px;line-height:13px;color:#333;font-weight:normal;font-style:normal;">surfaces with wireframe</div>
<svg class="a" style="left:1157px;top:59px;" width="7" height="6" viewBox="0 0 7 6"><path d="M0 0 H7 L3.5 6Z" fill="#444"/></svg>
<div class="a" style="left:1175px;top:52px;width:92px;height:22px;border:1px solid #177cae;border-radius:3px;background:#fff"></div>
<div class="a" style="left:1198px;top:52px;width:24px;height:22px;border:1px solid #adadad;background:radial-gradient(#e8e8e8,#d0d0d0)"></div>
<div class="a" style="left:1244px;top:52px;width:1px;height:22px;background:#177cae"></div>
<svg class="a" style="left:1180.5px;top:57px" width="13" height="13" viewBox="0 0 13 13"><path d="M5.5 0.5 L0.5 7.5 L2.5 11 L11.5 9Z" fill="#f00"/><path d="M5.5 0.5 L0.5 7.5 L2.5 11 L11.5 9Z M5.5 0.5 L2.5 11 M0.5 7.5 L11.5 9" fill="none" stroke="#000" stroke-width="0.9"/><circle cx="5.5" cy="0.5" r="1.2" fill="#000"/><circle cx="0.5" cy="7.5" r="1.2" fill="#000"/><circle cx="2.5" cy="11" r="1.2" fill="#000"/><circle cx="11.5" cy="9" r="1.2" fill="#000"/></svg>
<svg class="a" style="left:1203.5px;top:57px" width="13" height="13" viewBox="0 0 13 13"><path d="M5.5 0.5 L2.5 11 L11.5 9Z" fill="#f00"/><path d="M5.5 0.5 L0.5 7.5 L2.5 11 L11.5 9Z M5.5 0.5 L2.5 11 M0.5 7.5 L11.5 9" fill="none" stroke="#000" stroke-width="0.9"/><circle cx="5.5" cy="0.5" r="1.2" fill="#000"/><circle cx="0.5" cy="7.5" r="1.2" fill="#000"/><circle cx="2.5" cy="11" r="1.2" fill="#000"/><circle cx="11.5" cy="9" r="1.2" fill="#000"/></svg>
<svg class="a" style="left:1226.5px;top:57px" width="13" height="13" viewBox="0 0 13 13"><path d="M5.5 0.5 L2.5 11" stroke="#f00" stroke-width="1.2"/><path d="M5.5 0.5 L0.5 7.5 L2.5 11 L11.5 9Z M5.5 0.5 L2.5 11 M0.5 7.5 L11.5 9" fill="none" stroke="#000" stroke-width="0.9"/><circle cx="5.5" cy="0.5" r="1.2" fill="#000"/><circle cx="0.5" cy="7.5" r="1.2" fill="#000"/><circle cx="2.5" cy="11" r="1.2" fill="#000"/><circle cx="11.5" cy="9" r="1.2" fill="#000"/></svg>
<svg class="a" style="left:1249.5px;top:57px" width="13" height="13" viewBox="0 0 13 13"><path d="M5.5 0.5 L0.5 7.5 L2.5 11 L11.5 9Z M5.5 0.5 L2.5 11 M0.5 7.5 L11.5 9" fill="none" stroke="#000" stroke-width="0.9"/><circle cx="5.5" cy="0.5" r="1.2" fill="#000"/><circle cx="0.5" cy="7.5" r="1.2" fill="#000"/><circle cx="2.5" cy="11" r="1.2" fill="#000"/><circle cx="11.5" cy="9" r="1.2" fill="#000"/><circle cx="5.5" cy="2.2" r="2.6" fill="#f00"/></svg>
<div class="a" style="left:1278px;top:54px;width:1px;height:18px;background:#9a9a9a"></div>
<div class="a" style="left:1289px;top:52px;width:74px;height:22px;border:1px solid #177cae;border-radius:3px;background:#fff"></div>
<div class="t" style="left:1294.09px;top:57.00px;font-size:13px;line-height:13px;color:#177cae;font-weight:normal;font-style:normal;transform:scaleX(0.8968);transform-origin:0.91px 0;">Selection</div>
<svg class="a" style="left:1349px;top:62px;" width="8" height="4" viewBox="0 0 8 4"><path d="M0 0 H8 L4.0 4Z" fill="#177cae"/></svg>
<div class="a" style="left:1369px;top:52px;width:47px;height:22px;border:1px solid #177cae;border-radius:3px;background:#fff"></div>
<div class="a" style="left:1392px;top:52px;width:1px;height:22px;background:#177cae"></div>
<svg class="a" style="left:1374.5px;top:58px" width="14" height="11" viewBox="0 0 14 11"><defs><clipPath id="ecl"><path d="M0 0 H8.6 L3.2 11 H0Z"/></clipPath><clipPath id="ecr"><path d="M10.2 0 H14 V11 H4.8Z"/></clipPath></defs><g clip-path="url(#ecl)"><ellipse cx="6.5" cy="4.8" rx="5.7" ry="3.7" fill="none" stroke="#177cae" stroke-width="1.4"/><circle cx="6.8" cy="4.4" r="2.7" fill="#177cae"/></g><g clip-path="url(#ecr)"><ellipse cx="6.5" cy="4.8" rx="5.7" ry="3.7" fill="none" stroke="#177cae" stroke-width="1.3"/><circle cx="8.2" cy="4.8" r="0.8" fill="#177cae"/></g><path d="M8.2 0.2 L9.6 0.6 L4.2 10 L2.9 9.4Z" fill="#177cae"/></svg>
<svg class="a" style="left:1397.5px;top:58px" width="14" height="11" viewBox="0 0 14 11"><ellipse cx="6.5" cy="4.8" rx="5.7" ry="3.7" fill="none" stroke="#177cae" stroke-width="1.4"/><circle cx="6.8" cy="4.4" r="2.7" fill="#177cae"/></svg>
<div class="a" style="left:1427px;top:54px;width:1px;height:18px;background:#9a9a9a"></div>
<div class="a" style="left:1435px;top:52px;width:66px;height:22px;border:1px solid #177cae;border-radius:3px;background:#fff"></div>
<div class="t" style="left:1440.09px;top:57.00px;font-size:13px;line-height:13px;color:#177cae;font-weight:normal;font-style:normal;transform:scaleX(0.9009);transform-origin:0.91px 0;">Create set</div>
<div class="a" style="left:1505px;top:52px;width:54px;height:22px;border:1px solid #177cae;border-radius:3px;background:#fff"></div>
<div class="t" style="left:1510.09px;top:57.00px;font-size:13px;line-height:13px;color:#177cae;font-weight:normal;font-style:normal;transform:scaleX(0.9688);transform-origin:0.91px 0;">Filter</div>
<svg class="a" style="left:1545px;top:62px;" width="8" height="4" viewBox="0 0 8 4"><path d="M0 0 H8 L4.0 4Z" fill="#177cae"/></svg>
<svg class="a" style="left:0;top:0" width="1918" height="1109" viewBox="0 0 1918 1109"><defs>
<radialGradient id="ballg" cx="0.45" cy="0.48" r="0.56"><stop offset="0" stop-color="#b6d0ef"/><stop offset="0.6" stop-color="#a0badb"/><stop offset="0.88" stop-color="#7890ae"/><stop offset="1" stop-color="#3c4b60"/></radialGradient>
<linearGradient id="stemg" x1="0" y1="0" x2="1" y2="0"><stop offset="0" stop-color="#a8a288"/><stop offset="0.5" stop-color="#c2bca0"/><stop offset="1" stop-color="#b0aa8f"/></linearGradient>
<filter id="blr" x="-50%" y="-50%" width="200%" height="200%"><feGaussianBlur stdDeviation="5"/></filter><clipPath id="stemclip"><path d="M1300.0 470.0L1302.4 463.0L1305.7 461.7L1309.6 464.1L1313.7 468.3L1317.6 472.6L1321.0 475.0L1323.8 475.7L1326.4 476.3L1328.9 476.8L1331.2 477.5L1333.6 478.5L1336.0 480.0L1338.5 482.0L1341.1 484.5L1343.6 487.2L1346.1 490.2L1348.6 493.1L1351.0 496.0L1353.3 498.8L1355.6 501.7L1357.8 504.6L1360.0 507.4L1362.0 510.3L1364.0 513.0L1365.9 515.6L1367.7 518.2L1369.4 520.8L1371.0 523.2L1372.5 525.6L1374.0 528.0L1375.3 530.3L1376.4 532.6L1377.4 534.8L1378.5 537.0L1379.6 539.0L1381.0 541.0L1382.6 542.8L1384.4 544.6L1386.3 546.2L1388.3 547.8L1390.2 549.4L1392.0 551.0L1393.8 552.7L1395.6 554.3L1397.3 556.0L1399.0 557.7L1400.6 559.3L1402.0 561.0L1403.3 562.6L1404.4 564.0L1405.4 565.4L1406.3 566.9L1407.2 568.8L1408.0 571.0L1408.8 573.8L1409.7 576.9L1410.5 580.4L1411.1 584.0L1411.7 587.6L1412.0 591.0L1412.1 594.4L1412.0 597.9L1411.7 601.4L1411.4 604.9L1410.9 608.1L1410.5 611.0L1410.1 613.6L1409.7 616.0L1409.3 618.1L1408.7 620.1L1408.0 622.1L1407.0 624.0L1405.8 625.9L1404.4 627.7L1402.8 629.4L1401.0 631.1L1399.1 632.6L1397.0 634.0L1394.6 635.2L1391.9 636.3L1389.0 637.2L1386.1 638.1L1383.4 639.0L1381.0 640.0L1379.0 641.0L1377.2 642.0L1375.6 643.1L1374.1 644.2L1372.6 645.5L1371.0 647.0L1369.3 648.8L1367.7 650.8L1366.0 653.0L1364.3 655.3L1362.7 657.6L1361.0 660.0L1359.4 662.4L1357.8 665.0L1356.2 667.6L1354.6 670.1L1352.8 672.7L1351.0 675.0L1349.0 677.2L1346.9 679.5L1344.6 681.6L1342.4 683.6L1340.1 685.4L1338.0 687.0L1336.0 688.4L1334.2 689.6L1332.4 690.7L1330.6 691.5L1328.5 692.1L1326.0 692.5L1323.1 692.6L1319.8 692.4L1316.2 691.9L1312.7 691.3L1309.2 690.7L1306.0 690.0L1302.8 690.2L1299.4 691.5L1296.1 692.7L1293.3 692.7L1291.1 690.5L1290.0 685.0L1290.3 676.0L1291.8 664.3L1294.0 650.3L1296.4 634.6L1298.6 617.7L1300.0 600.0L1300.3 579.4L1300.0 555.0L1299.3 529.4L1298.8 505.0L1298.9 484.4Z"/></clipPath><linearGradient id="neckg" x1="0" y1="0" x2="0" y2="1"><stop offset="0" stop-color="#557d42"/><stop offset="1" stop-color="#36542a"/></linearGradient>
</defs><circle cx="1471" cy="592" r="59.5" fill="url(#ballg)"/><path d="M1449.4 591.6L1451.6 596.7M1422.9 601.4L1421.0 605.3M1470.8 619.6L1475.0 619.8M1519.4 626.6L1516.6 630.2M1511.6 553.8L1511.6 557.2M1411.5 594.3L1411.5 589.7M1489.5 595.1L1488.7 601.5M1461.2 589.6L1466.1 587.8M1460.9 605.3L1459.2 607.1M1427.5 561.3L1425.3 564.3M1426.2 556.6L1422.5 561.5M1411.5 589.7L1411.9 585.1M1519.4 557.4L1521.9 561.3M1524.8 599.2L1525.6 604.9M1495.9 560.5L1499.1 563.2M1465.8 605.1L1464.4 607.2M1501.4 592.0L1506.4 593.3M1502.4 609.4L1503.0 613.5M1521.9 561.3L1524.2 565.3M1470.3 545.7L1474.4 543.6M1415.1 612.3L1418.3 607.2M1437.9 569.2L1433.3 571.5M1428.3 617.0L1429.9 620.2M1504.9 608.7L1507.2 612.1M1422.9 601.4L1426.5 599.1M1474.4 543.6L1477.6 545.4M1494.1 563.0L1497.6 569.2M1480.9 620.3L1477.0 622.9M1480.9 573.1L1479.1 575.2M1458.7 643.1L1455.6 646.7M1460.9 605.3L1465.8 605.1M1458.4 650.1L1461.1 645.0M1477.7 553.4L1483.0 551.4M1429.9 620.2L1431.9 623.3M1431.0 573.0L1433.3 576.1M1470.0 627.3L1469.8 630.9M1431.9 623.3L1429.3 628.2M1465.8 605.1L1470.0 603.9M1502.4 609.4L1504.9 608.7M1460.0 536.9L1458.1 539.8M1444.9 561.6L1450.6 561.0M1516.8 580.9L1516.3 585.4M1504.9 608.7L1509.7 609.2M1467.3 581.3L1467.9 584.0M1494.1 563.0L1499.1 563.2M1437.3 542.9L1435.2 549.4M1438.4 587.4L1441.4 592.7M1445.9 616.9L1451.1 617.1M1498.8 547.3L1496.6 553.7M1499.1 563.2L1502.8 565.3M1431.0 573.0L1433.3 571.5M1477.5 592.8L1479.2 596.3M1502.7 541.7L1503.8 547.9M1500.1 621.2L1502.4 620.4M1503.8 547.9L1499.9 553.7M1530.3 587.4L1523.9 585.4M1446.9 556.8L1444.9 561.6M1433.3 571.5L1438.6 572.7M1483.6 592.3L1484.4 595.0M1517.6 595.6L1514.7 599.3M1452.1 627.4L1458.8 629.3M1453.5 555.5L1450.6 561.0M1479.1 575.2L1482.0 577.6M1521.4 597.5L1520.4 599.9M1530.5 592.0L1524.3 593.2M1411.5 589.7L1414.7 594.9M1459.6 560.3L1456.3 564.6M1439.8 635.0L1442.8 635.9M1470.7 596.8L1474.6 600.1M1464.4 607.2L1463.1 612.0M1521.2 579.4L1525.6 581.7M1444.1 605.4L1445.2 607.6M1442.8 635.9L1448.4 636.8M1525.6 604.9L1524.9 609.4M1470.2 645.4L1474.7 644.5M1507.2 612.1L1509.8 616.8M1454.5 615.3L1452.9 619.6M1444.6 581.0L1443.9 587.8M1474.7 644.5L1481.0 645.1M1418.9 563.3L1422.5 561.5M1416.1 588.8L1414.7 594.9M1418.8 568.6L1421.9 572.9M1513.9 612.5L1513.6 616.8M1506.2 552.9L1511.6 553.8M1461.2 614.9L1457.9 621.0M1498.4 627.7L1495.3 631.6M1501.8 568.0L1499.8 571.8M1461.0 624.8L1458.8 629.3M1486.4 537.8L1486.1 541.6M1447.3 629.4L1450.2 631.6M1463.3 571.8L1464.4 575.5M1472.4 561.3L1477.6 559.0M1462.1 620.9L1463.7 624.8M1437.3 576.2L1433.7 580.2M1493.8 581.0L1497.5 583.7M1477.6 559.0L1482.6 560.7M1504.8 576.4L1509.0 581.5M1490.0 540.9L1493.3 545.3M1510.1 547.2L1503.8 547.9M1516.3 585.4L1513.4 588.6M1444.6 581.0L1449.4 583.9M1446.4 545.2L1444.3 547.3M1497.7 580.3L1500.9 584.9M1418.8 568.6L1422.8 568.6M1431.1 584.8L1430.5 587.2M1474.8 548.2L1477.7 553.4M1449.5 545.0L1447.4 548.6M1463.3 571.8L1465.7 573.6M1471.2 587.6L1470.3 593.5M1481.2 549.7L1483.0 551.4M1504.8 576.4L1511.1 576.0M1509.7 591.9L1507.4 595.3M1430.9 556.7L1433.4 559.8M1431.1 584.8L1436.2 585.3M1436.3 561.4L1439.6 563.3M1513.5 633.7L1510.1 636.8M1502.2 595.5L1505.0 601.0M1436.2 585.3L1440.1 583.7M1471.2 587.6L1474.6 587.2M1484.6 563.9L1481.4 569.5M1412.6 580.5L1413.7 576.0M1445.2 607.6L1447.7 612.1M1474.6 587.2L1480.1 588.4M1434.4 564.2L1437.9 569.2M1509.7 591.9L1516.1 592.4M1487.5 615.1L1484.5 619.1M1421.9 572.9L1418.9 576.2M1526.1 569.5L1527.7 573.8M1519.4 557.4L1515.5 559.9M1436.7 616.7L1438.3 619.2M1516.1 592.4L1519.0 591.4M1514.3 607.6L1518.4 611.3M1437.0 623.3L1440.1 628.0M1424.5 573.1L1422.4 577.5M1465.3 536.6L1465.5 540.0M1442.0 617.2L1444.0 619.4M1480.6 628.6L1483.9 631.0M1490.3 620.1L1486.3 622.8M1466.9 644.7L1468.8 648.5M1435.7 598.9L1440.1 601.3M1447.3 631.3L1442.8 635.9M1468.7 575.6L1467.3 581.3M1469.3 536.9L1472.5 541.0M1445.2 607.6L1450.3 607.1M1493.5 620.7L1493.0 624.5M1450.2 631.6L1448.4 636.8M1477.2 604.4L1479.3 603.4M1477.6 545.4L1474.8 548.2M1525.6 581.7L1523.9 585.4M1514.3 607.6L1520.1 609.0M1467.5 651.4L1468.8 648.5M1482.8 544.4L1481.2 549.7M1415.1 583.4L1416.1 588.8M1449.6 587.0L1449.4 591.6M1454.5 615.3L1461.2 614.9M1524.2 618.7L1518.6 617.3M1449.6 552.4L1446.9 556.8M1451.6 587.4L1454.8 591.4M1483.0 551.4L1485.8 555.1M1528.9 605.7L1525.6 604.9M1508.2 619.6L1512.9 621.0M1460.8 595.3L1459.0 601.2M1490.3 648.3L1485.8 649.6M1430.2 635.3L1432.2 631.2M1492.1 592.5L1494.8 596.7M1500.6 625.2L1500.9 630.8M1462.2 627.3L1467.5 628.0M1449.6 536.5L1448.4 540.3M1497.1 599.9L1499.6 604.0M1463.1 555.4L1459.6 560.3M1424.0 555.6L1426.9 552.0M1414.9 601.4L1417.1 605.5M1469.4 559.2L1468.1 565.6M1426.9 552.0L1430.2 548.7M1465.3 536.6L1469.3 536.9M1474.8 607.7L1472.0 611.5M1452.3 603.2L1454.7 608.4M1465.0 616.6L1466.6 621.4M1468.1 565.6L1469.8 569.1M1469.3 536.9L1473.4 536.3M1476.8 609.0L1474.8 611.7M1438.4 549.7L1444.3 547.3M1518.4 611.3L1518.6 617.3M1467.9 616.6L1470.8 619.6M1511.8 568.4L1512.6 573.0M1433.6 638.3L1434.8 635.4M1485.7 643.7L1489.9 643.1M1444.3 547.3L1447.4 548.6M1426.7 567.6L1431.0 573.0M1508.0 627.6L1507.1 631.0M1521.2 619.9L1519.1 623.2M1467.6 623.3L1467.5 628.0M1445.7 575.4L1449.5 581.3M1448.4 636.8L1451.7 641.3M1430.9 556.7L1433.7 555.5M1471.3 571.5L1472.5 575.8M1470.8 619.6L1473.7 624.7M1511.6 629.4L1509.1 631.9M1468.1 565.6L1472.2 565.1M1424.0 555.6L1426.2 556.6M1487.6 559.6L1492.9 561.8M1516.3 575.4L1516.8 580.9M1490.3 648.3L1489.9 643.1M1440.5 613.2L1444.6 612.0M1523.9 585.4L1523.1 588.6M1460.3 545.0L1463.4 547.4M1426.9 552.0L1430.9 556.7M1509.0 581.5L1510.5 584.4M1426.7 567.6L1432.9 567.1M1440.1 583.7L1438.4 587.4M1487.5 615.1L1493.2 615.9M1449.4 591.6L1449.1 596.8M1471.3 571.5L1475.2 571.5M1513.5 633.7L1509.1 631.9M1489.4 547.9L1492.9 552.8M1454.8 591.4L1451.6 596.7M1437.0 623.3L1442.6 624.3M1433.1 551.6L1433.7 555.5M1516.3 575.4L1519.8 575.2M1438.2 555.8L1441.8 560.8M1494.7 629.1L1498.4 627.7M1495.9 560.5L1494.1 563.0M1494.7 555.9L1492.9 561.8M1507.4 595.3L1510.1 600.2M1447.1 599.8L1448.5 604.8M1444.9 561.6L1447.3 564.3M1444.0 555.2L1444.9 561.6M1504.9 608.7L1503.0 613.5M1485.7 604.8L1487.7 606.9M1450.6 561.0L1452.1 564.6M1494.1 563.0L1490.8 568.1M1454.8 591.4L1458.5 592.6M1454.7 608.4L1457.5 612.0M1486.1 588.0L1490.8 588.0M1497.5 617.3L1493.5 620.7M1499.1 563.2L1497.6 569.2M1431.0 573.0L1427.7 576.9M1494.8 596.7L1497.7 595.3M1500.1 621.2L1500.6 625.2M1433.3 571.5L1433.3 576.1M1417.1 605.5L1421.0 605.3M1489.8 628.4L1492.8 632.8M1502.4 620.4L1504.6 623.8M1418.9 563.3L1418.8 568.6M1455.5 633.1L1453.3 635.0M1449.7 624.3L1452.1 627.4M1479.1 575.2L1476.4 579.4M1479.4 537.1L1480.2 540.6M1416.8 616.6L1423.0 614.8M1454.7 608.4L1459.2 607.1M1497.8 613.5L1503.0 613.5M1507.0 584.9L1507.7 587.3M1483.6 592.3L1479.2 596.3M1506.5 544.3L1503.8 547.9M1503.8 572.3L1509.4 571.7M1418.9 563.3L1421.8 565.1M1412.6 603.5L1414.9 601.4M1431.9 591.2L1435.4 597.5M1416.8 616.6L1419.6 612.3M1492.9 552.8L1494.7 555.9M1440.3 579.3L1444.6 581.0M1470.7 596.8L1468.5 599.0M1481.3 650.6L1476.8 651.2M1471.8 555.2L1472.4 561.3M1444.1 605.4L1441.0 609.2M1505.0 601.0L1507.1 603.2M1477.6 559.0L1479.5 564.4M1448.5 604.8L1445.2 607.6M1483.5 609.3L1484.1 612.8M1472.6 631.8L1477.8 632.7M1487.7 606.9L1490.9 611.1M1456.4 545.2L1460.3 545.0M1421.3 559.3L1422.5 561.5M1475.9 563.1L1477.8 567.4M1479.4 537.1L1482.2 537.6M1478.6 616.3L1480.9 620.3M1458.8 552.2L1464.0 551.8M1520.4 567.5L1521.1 571.3M1465.7 573.6L1464.4 575.5M1504.8 576.4L1504.3 579.5M1452.9 549.3L1456.3 548.3M1448.5 604.8L1452.3 603.2M1488.7 632.4L1485.5 637.0M1427.5 561.3L1433.4 559.8M1455.1 577.4L1457.7 581.1M1497.7 580.3L1497.5 583.7M1511.1 576.0L1509.0 581.5M1438.2 555.8L1444.0 555.2M1487.7 606.9L1492.8 608.2M1437.0 630.7L1439.8 635.0M1530.3 587.4L1525.3 589.3M1449.5 581.3L1449.4 583.9M1475.9 563.1L1479.5 564.4M1428.3 617.0L1431.2 615.2M1447.7 612.1L1454.3 613.4M1520.4 567.5L1522.8 568.4M1470.3 545.7L1471.2 547.6M1480.9 620.3L1484.5 619.1M1424.8 589.1L1421.8 593.5M1497.5 617.3L1502.2 615.7M1464.5 593.2L1465.4 597.3M1435.7 627.3L1440.1 628.0M1433.7 555.5L1433.4 559.8M1502.2 595.5L1502.1 600.9M1449.6 647.5L1445.3 645.7M1440.1 628.0L1443.8 628.7M1500.9 630.8L1507.1 631.0M1504.3 579.5L1509.0 581.5M1426.0 605.5L1426.7 609.5M1504.9 555.7L1501.2 560.2M1412.6 580.5L1415.1 583.4M1507.1 631.0L1509.1 631.9M1502.8 565.3L1506.5 569.2M1424.8 589.1L1430.5 587.2M1510.1 561.7L1508.4 563.7M1514.3 607.6L1513.9 612.5M1458.7 643.1L1461.1 645.0M1495.0 605.0L1497.2 607.1M1506.5 639.7L1503.0 636.1M1508.4 563.7L1511.8 568.4M1442.0 617.2L1438.3 619.2M1520.1 609.0L1518.4 611.3M1469.3 536.9L1465.5 540.0M1524.2 618.7L1521.2 619.9M1442.5 571.5L1445.7 575.4M1508.2 619.6L1509.5 622.9M1473.4 536.3L1472.5 541.0M1463.5 632.0L1466.3 635.2M1459.6 560.3L1464.1 561.1M1488.1 576.9L1490.6 579.8M1512.9 621.0L1514.3 623.2M1467.5 651.4L1463.9 648.6M1469.8 630.9L1470.2 634.7M1480.0 581.4L1481.5 584.1M1493.1 577.7L1493.8 581.0M1508.4 563.7L1514.1 564.5M1504.2 629.1L1507.1 631.0M1425.3 564.3L1429.3 563.3M1419.7 584.3L1416.1 588.8M1442.5 571.5L1447.4 573.7M1451.6 587.4L1449.4 591.6M1500.3 543.9L1503.8 547.9M1462.9 651.0L1463.9 648.6M1469.8 569.1L1472.2 568.0M1421.3 559.3L1426.2 556.6M1456.8 588.6L1454.8 591.4M1488.1 576.9L1493.1 577.7M1492.1 592.5L1489.5 595.1M1479.2 596.3L1482.3 599.1M1493.1 577.7L1496.3 576.9M1426.9 632.0L1432.2 631.2M1496.9 591.8L1494.8 596.7M1415.1 583.4L1419.7 584.3M1524.2 618.7L1521.9 622.7M1419.7 584.3L1422.1 584.6M1417.8 599.8L1417.1 605.5M1481.6 557.5L1482.6 560.7M1451.6 587.4L1456.8 588.6M1452.3 603.2L1450.3 607.1M1411.9 598.9L1411.5 594.3M1487.6 559.6L1488.5 565.4M1456.8 588.6L1461.2 589.6M1457.8 603.2L1454.7 608.4M1492.8 608.2L1493.5 610.9M1467.9 616.6L1466.6 621.4M1440.5 613.2L1442.0 617.2M1516.6 553.8L1519.4 557.4M1492.9 561.8L1494.1 563.0M1426.7 567.6L1424.5 573.1M1521.8 611.1L1518.6 617.3M1496.9 591.8L1501.4 592.0M1497.2 607.1L1497.8 613.5M1448.4 636.8L1447.2 641.4M1432.9 567.1L1431.0 573.0M1471.3 571.5L1468.7 575.6M1417.8 599.8L1422.9 601.4M1524.2 565.3L1522.8 568.4M1475.2 571.5L1472.5 575.8M1516.3 575.4L1513.7 580.2M1457.8 603.2L1460.9 605.3M1415.1 571.7L1418.8 568.6M1495.3 631.6L1494.0 635.4M1460.3 545.0L1456.3 548.3M1426.9 552.0L1426.2 556.6M1509.0 581.5L1507.0 584.9M1519.8 575.2L1516.8 580.9M1497.2 607.1L1502.4 609.4M1463.6 544.3L1463.4 547.4M1513.7 580.2L1510.5 584.4M1430.5 587.2L1431.9 591.2M1431.3 605.0L1430.6 610.8M1436.7 616.7L1442.0 617.2M1489.4 547.9L1486.9 552.2M1433.5 587.0L1438.1 592.5M1433.1 551.6L1430.9 556.7M1442.0 617.2L1445.9 616.9M1490.3 620.1L1493.5 620.7M1529.8 582.8L1523.9 585.4M1506.5 639.7L1502.7 642.3M1473.0 593.3L1475.2 596.8M1447.1 599.8L1444.1 605.4M1493.5 620.7L1500.1 621.2M1443.8 628.7L1447.3 629.4M1502.7 642.3L1498.7 644.6M1444.0 555.2L1441.8 560.8M1415.1 571.7L1416.8 567.4M1512.2 597.1L1510.1 600.2M1485.7 604.8L1483.5 609.3M1447.3 629.4L1452.1 627.4M1450.6 561.0L1447.3 564.3M1416.8 567.4L1418.9 563.3M1528.9 578.3L1529.8 582.8M1433.5 604.1L1436.4 607.3M1526.1 614.5L1521.8 611.1M1434.8 635.4L1439.8 635.0M1529.8 582.8L1530.3 587.4M1514.1 564.5L1514.8 569.3M1440.4 604.2L1441.0 609.2M1519.5 561.7L1517.4 563.4M1451.1 617.1L1452.9 619.6M1447.1 599.8L1450.5 600.6M1466.9 644.7L1470.2 645.4M1472.0 611.5L1467.9 616.6M1495.6 544.2L1500.3 543.9M1517.4 563.4L1520.4 567.5M1447.4 573.7L1450.7 575.8M1502.4 620.4L1500.6 625.2M1503.8 572.3L1500.2 577.2M1481.0 645.1L1483.4 647.8M1419.6 612.3L1423.0 614.8M1449.7 624.3L1447.3 629.4M1485.7 604.8L1488.6 604.8M1518.6 617.3L1521.2 619.9M1479.4 537.1L1474.6 540.6M1499.9 553.7L1506.2 552.9M1453.6 573.7L1455.1 577.4M1454.1 624.7L1452.1 627.4M1482.2 537.6L1480.2 540.6M1469.4 559.2L1472.4 561.3M1496.3 576.9L1497.7 580.3M1448.4 540.3L1446.4 545.2M1477.8 632.7L1480.8 637.3M1442.6 543.5L1444.3 547.3M1490.6 579.8L1490.9 584.1M1517.4 563.4L1521.8 565.3M1422.1 584.6L1420.1 589.2M1481.3 533.4L1479.4 537.1M1461.2 589.6L1464.5 593.2M1467.9 616.6L1474.0 616.4M1426.4 585.6L1424.8 589.1M1453.6 573.7L1457.7 573.3M1438.4 549.7L1437.8 552.3M1501.4 592.0L1502.2 595.5M1471.2 547.6L1473.5 551.3M1415.1 612.3L1419.6 612.3M1471.8 555.2L1469.4 559.2M1457.7 573.3L1463.3 571.8M1466.1 587.8L1464.5 593.2M1496.3 576.9L1500.2 577.2M1422.9 601.4L1426.0 605.5M1475.7 626.9L1480.6 628.6M1476.1 557.0L1472.4 561.3M1489.5 595.1L1492.2 598.9M1500.2 577.2L1504.8 576.4M1506.4 593.3L1502.2 595.5M1422.1 584.6L1426.4 585.6M1460.9 605.3L1464.4 607.2M1426.2 556.6L1427.5 561.3M1480.6 628.6L1486.2 627.4M1462.4 635.8L1466.3 635.2M1494.8 596.7L1497.1 599.9M1426.4 585.6L1431.1 584.8M1426.5 599.1L1426.0 605.5M1465.8 605.1L1468.2 607.9M1466.3 635.2L1470.2 634.7M1437.9 569.2L1438.6 572.7M1466.1 587.8L1471.2 587.6M1478.6 616.3L1475.0 619.8M1447.7 612.1L1451.1 617.1M1480.9 573.1L1482.0 577.6M1506.4 593.3L1509.7 591.9M1483.7 615.6L1480.9 620.3M1427.7 623.4L1429.3 628.2M1497.5 617.3L1502.4 620.4M1441.0 568.2L1438.6 572.7M1484.9 571.2L1488.1 576.9M1495.9 560.5L1501.2 560.2M1426.5 599.1L1431.3 601.1M1431.9 623.3L1435.7 627.3M1437.0 630.7L1434.8 635.4M1460.0 536.9L1461.8 539.6M1462.4 635.8L1459.2 640.4M1419.8 581.3L1415.1 583.4M1440.7 633.5L1439.8 635.0M1470.3 545.7L1467.5 547.1M1455.3 584.2L1451.6 587.4M1470.0 603.9L1477.2 604.4M1474.4 543.6L1471.2 547.6M1462.9 533.0L1465.3 536.6M1521.2 579.4L1520.3 583.4M1484.9 571.2L1490.9 572.8M1494.7 587.8L1492.1 592.5M1509.7 609.2L1514.3 607.6M1503.8 547.9L1506.2 552.9M1443.9 587.8L1445.5 591.4M1442.7 553.8L1438.2 555.8M1419.8 581.3L1424.3 580.6M1441.3 540.5L1444.9 541.5M1498.7 644.6L1494.6 646.6M1453.5 555.5L1454.3 561.7M1446.0 553.4L1444.0 555.2M1521.4 597.5L1524.8 599.2M1455.3 584.2L1459.4 584.3M1455.1 601.0L1452.3 603.2M1459.6 560.3L1461.9 563.6M1494.6 646.6L1490.3 648.3M1456.7 555.5L1459.6 560.3M1418.9 563.3L1421.3 559.3M1459.4 584.3L1463.8 583.0M1459.0 601.2L1457.8 603.2M1494.7 587.8L1497.8 588.5M1495.0 605.0L1492.8 608.2M1421.3 559.3L1424.0 555.6M1425.3 564.3L1422.8 568.6M1497.8 588.5L1502.2 587.5M1499.6 604.0L1497.2 607.1M1419.9 595.7L1425.0 597.1M1460.0 536.9L1465.3 536.6M1513.9 612.5L1518.6 617.3M1516.6 630.2L1511.6 629.4M1469.8 569.1L1465.7 573.6M1461.2 614.9L1462.1 620.9M1425.0 597.1L1429.6 596.8M1455.1 601.0L1459.0 601.2M1461.0 624.8L1462.2 627.3M1435.2 549.4L1438.4 549.7M1486.4 537.8L1490.0 540.9M1512.9 621.0L1509.5 622.9M1459.0 601.2L1465.0 600.3M1469.8 630.9L1466.3 635.2M1495.0 605.0L1499.6 604.0M1439.8 635.0L1441.3 640.2M1493.1 577.7L1490.6 579.8M1517.8 619.5L1514.3 623.2M1504.2 629.1L1500.9 630.8M1463.7 624.8L1462.2 627.3M1499.6 604.0L1503.9 603.0M1500.3 543.9L1498.8 547.3M1431.1 584.8L1433.5 587.0M1411.9 585.1L1416.1 588.8M1430.6 610.8L1434.3 612.8M1449.5 545.0L1452.9 549.3M1482.6 560.7L1487.6 559.6M1436.2 585.3L1438.4 587.4M1471.2 587.6L1473.0 593.3M1478.6 616.3L1483.7 615.6M1456.4 545.2L1456.3 548.3M1504.3 579.5L1507.0 584.9M1422.8 568.6L1426.7 567.6M1474.6 587.2L1477.5 592.8M1509.7 591.9L1512.2 597.1M1427.7 623.4L1431.9 623.3M1467.5 651.4L1462.9 651.0M1481.6 557.5L1477.6 559.0M1516.1 592.4L1517.6 595.6M1486.2 627.4L1489.8 628.4M1441.3 540.5L1445.3 538.3M1440.5 613.2L1436.7 616.7M1489.8 628.4L1494.7 629.1M1421.3 624.7L1424.5 620.8M1492.9 561.8L1488.5 565.4M1470.2 634.7L1477.3 635.1M1497.2 607.1L1493.5 610.9M1477.2 604.4L1476.8 609.0M1477.3 635.1L1480.8 637.3M1463.9 648.6L1468.8 648.5M1444.9 541.5L1448.4 540.3M1519.4 557.4L1519.5 561.7M1463.4 547.4L1467.5 547.1M1424.5 573.1L1427.7 576.9M1468.8 648.5L1473.1 648.3M1467.5 547.1L1471.2 547.6M1451.0 569.7L1453.6 573.7M1446.9 556.8L1453.5 555.5M1493.2 615.9L1490.3 620.1M1447.3 631.3L1448.4 636.8M1493.0 624.5L1489.8 628.4M1468.7 575.6L1471.4 581.5M1453.5 555.5L1456.7 555.5M1493.5 620.7L1497.4 624.5M1493.4 571.4L1496.3 576.9M1416.8 567.4L1418.8 568.6M1450.2 631.6L1453.3 635.0M1442.6 624.3L1443.8 628.7M1418.9 620.7L1423.0 614.8M1470.2 634.7L1469.1 640.1M1477.6 545.4L1481.2 549.7M1510.1 561.7L1515.5 559.9M1482.8 544.4L1484.3 547.3M1451.0 569.7L1456.2 569.7M1463.8 583.0L1461.2 589.6M1472.2 532.5L1473.4 536.3M1449.6 552.4L1453.5 555.5M1493.4 571.4L1499.8 571.8M1413.7 576.0L1418.9 576.2M1516.6 630.2L1514.3 623.2M1502.2 587.5L1501.4 592.0M1498.7 644.6L1495.6 643.6M1461.0 624.8L1463.7 624.8M1430.7 581.6L1433.7 580.2M1465.5 540.0L1467.5 547.1M1449.6 536.5L1454.0 539.5M1463.1 555.4L1464.1 561.1M1432.2 631.2L1437.0 630.7M1433.7 580.2L1440.3 579.3M1463.8 583.0L1467.9 584.0M1453.9 535.0L1458.1 539.8M1465.5 557.7L1469.4 559.2M1440.4 604.2L1436.4 607.3M1467.9 584.0L1473.3 584.4M1502.2 587.5L1507.7 587.3M1510.1 547.2L1506.2 552.9M1517.4 563.4L1514.8 569.3M1476.8 609.0L1481.0 612.2M1507.7 587.3L1513.4 588.6M1507.1 603.2L1504.9 608.7M1429.6 596.8L1435.4 597.5M1518.6 617.3L1517.8 619.5M1521.8 565.3L1520.4 567.5M1426.6 611.2L1423.0 614.8M1435.4 597.5L1440.0 596.9M1467.6 623.3L1470.0 627.3M1457.7 573.3L1455.1 577.4M1440.4 604.2L1444.1 605.4M1474.0 616.4L1475.0 619.8M1468.5 599.0L1474.6 600.1M1477.8 632.7L1477.3 635.1M1473.7 624.7L1475.7 626.9M1429.3 628.2L1432.2 631.2M1500.2 577.2L1497.7 580.3M1483.9 631.0L1480.8 637.3M1507.1 603.2L1511.9 603.0M1498.7 644.6L1500.8 639.7M1440.1 583.7L1443.9 587.8M1497.5 583.7L1494.7 587.8M1430.2 548.7L1435.2 549.4M1446.8 585.5L1449.6 587.0M1421.8 593.5L1419.9 595.7M1454.8 591.4L1457.5 596.3M1486.1 588.0L1486.5 592.7M1494.8 596.7L1492.2 598.9M1458.4 650.1L1453.9 649.0M1494.7 555.9L1495.9 560.5M1524.3 593.2L1527.3 597.4M1497.5 583.7L1500.9 584.9M1417.1 605.5L1418.3 607.2M1453.9 649.0L1449.6 647.5M1431.3 601.1L1426.0 605.5M1449.6 536.5L1453.9 535.0M1447.7 612.1L1445.9 616.9M1411.9 598.9L1414.7 594.9M1421.8 593.5L1426.6 593.3M1501.2 560.2L1499.1 563.2M1453.9 535.0L1458.4 533.9M1448.4 540.3L1454.0 539.5M1454.3 613.4L1451.1 617.1M1497.5 617.3L1500.1 621.2M1499.1 563.2L1501.8 568.0M1505.9 559.2L1502.8 565.3M1484.9 571.2L1482.0 577.6M1454.0 539.5L1458.1 539.8M1509.7 609.2L1507.2 612.1M1502.2 615.7L1502.4 620.4M1483.0 551.4L1486.9 552.2M1433.3 571.5L1437.3 576.2M1474.8 548.2L1481.2 549.7M1460.4 567.0L1463.3 571.8M1455.5 633.1L1457.5 635.6M1502.1 600.9L1505.0 601.0M1450.6 561.0L1454.3 561.7M1500.6 625.2L1498.4 627.7M1463.1 555.4L1465.5 557.7M1460.7 632.5L1462.4 635.8M1462.9 533.0L1460.0 536.9M1451.1 617.1L1454.5 615.3M1472.0 611.5L1474.8 611.7M1443.9 587.8L1441.4 592.7M1493.3 545.3L1493.9 548.9M1460.4 567.0L1463.8 568.7M1502.4 620.4L1508.2 619.6M1437.3 641.1L1441.3 640.2M1411.5 589.7L1416.1 588.8M1458.8 629.3L1462.2 627.3M1456.7 555.5L1454.3 561.7M1486.5 592.7L1484.4 595.0M1467.6 623.3L1473.7 624.7M1442.4 596.9L1440.1 601.3M1448.5 604.8L1450.3 607.1M1481.3 533.4L1485.8 534.4M1478.5 600.8L1479.3 603.4M1426.9 552.0L1433.1 551.6M1430.6 610.8L1431.2 615.2M1481.0 645.1L1485.7 643.7M1516.1 604.4L1520.1 609.0M1441.3 540.5L1442.6 543.5M1482.6 560.7L1484.6 563.9M1486.5 592.7L1492.1 592.5M1434.3 612.8L1436.7 616.7M1422.8 568.6L1421.9 572.9M1465.7 573.6L1468.7 575.6M1433.1 551.6L1437.8 552.3M1442.8 635.9L1441.3 640.2M1488.7 632.4L1490.6 635.8M1511.1 576.0L1513.7 580.2M1461.8 539.6L1460.3 545.0M1494.7 555.9L1499.3 557.0M1492.8 632.8L1494.0 635.4M1483.6 625.0L1486.2 627.4M1436.2 585.3L1433.5 587.0M1419.8 581.3L1422.1 584.6M1447.3 564.3L1452.1 564.6M1421.3 624.7L1424.3 623.6M1456.4 545.2L1452.9 549.3M1504.3 579.5L1500.9 584.9M1465.7 573.6L1471.3 571.5M1474.6 587.2L1473.0 593.3M1490.8 568.1L1497.6 569.2M1424.8 589.1L1426.6 593.3M1480.1 588.4L1477.5 592.8M1511.1 576.0L1516.3 575.4M1516.1 592.4L1512.2 597.1M1427.7 576.9L1433.3 576.1M1521.9 561.3L1521.8 565.3M1519.0 591.4L1517.6 595.6M1435.7 598.9L1433.5 604.1M1419.9 595.7L1422.9 601.4M1471.4 581.5L1476.4 579.4M1504.9 555.7L1505.9 559.2M1440.1 601.3L1440.4 604.2M1477.2 604.4L1474.8 607.7M1418.9 620.7L1424.5 620.8M1510.1 636.8L1503.0 636.1M1510.1 561.7L1514.1 564.5M1480.1 588.4L1486.1 588.0M1479.3 603.4L1476.8 609.0M1527.7 573.8L1528.9 578.3M1521.9 561.3L1519.5 561.7M1515.5 559.9L1517.4 563.4M1451.0 569.7L1447.4 573.7M1519.0 591.4L1524.3 593.2M1520.1 609.0L1521.8 611.1M1463.1 612.0L1461.2 614.9M1487.7 544.7L1493.3 545.3M1456.2 569.7L1453.6 573.7M1493.4 571.4L1493.1 577.7M1440.1 601.3L1447.1 599.8M1442.6 624.3L1440.1 628.0M1509.8 616.8L1512.9 621.0M1473.4 536.3L1474.6 540.6M1492.9 552.8L1496.6 553.7M1459.2 640.4L1461.1 645.0M1499.8 571.8L1496.3 576.9M1445.1 623.2L1443.8 628.7M1479.3 603.4L1485.7 604.8M1444.9 541.5L1446.4 545.2M1520.1 609.0L1524.9 609.4M1529.8 601.2L1527.3 597.4M1436.4 607.3L1441.0 609.2M1419.7 584.3L1420.1 589.2M1472.2 532.5L1469.3 536.9M1461.2 614.9L1465.0 616.6M1476.8 532.8L1473.4 536.3M1481.0 612.2L1484.1 612.8M1456.8 588.6L1458.5 592.6M1415.1 571.7L1418.9 576.2M1494.6 646.6L1495.6 643.6M1512.9 621.0L1517.8 619.5M1481.3 650.6L1478.4 648.8M1485.8 649.6L1481.3 650.6M1496.9 591.8L1497.7 595.3M1517.8 619.5L1521.2 619.9M1467.5 628.0L1470.0 627.3M1453.9 535.0L1454.0 539.5M1465.5 557.7L1464.1 561.1M1417.8 599.8L1421.0 605.3M1481.6 557.5L1487.6 559.6M1470.0 627.3L1475.7 626.9M1453.3 635.0L1457.5 635.6M1457.8 603.2L1459.2 607.1M1415.1 571.7L1421.9 572.9M1457.5 635.6L1462.4 635.8M1488.7 601.5L1488.6 604.8M1473.4 536.3L1479.4 537.1M1489.9 643.1L1495.6 643.6M1493.5 610.9L1493.2 615.9M1447.4 548.6L1452.9 549.3M1432.9 567.1L1433.3 571.5M1481.4 569.5L1475.2 571.5M1474.0 616.4L1470.8 619.6M1444.6 612.0L1445.9 616.9M1473.7 624.7L1470.0 627.3M1444.0 619.4L1442.6 624.3M1433.7 555.5L1438.2 555.8M1475.2 571.5L1479.1 575.2M1477.0 622.9L1475.7 626.9M1498.7 644.6L1496.1 641.2M1435.7 627.3L1432.2 631.2M1453.3 635.0L1451.7 641.3M1495.3 631.6L1497.8 637.0M1492.9 561.8L1495.9 560.5M1519.8 575.2L1521.2 579.4M1472.5 541.0L1470.3 545.7M1504.9 555.7L1506.8 556.9M1500.9 630.8L1503.0 636.1M1463.6 544.3L1467.5 547.1M1513.7 580.2L1516.3 585.4M1524.5 575.8L1525.6 581.7M1432.9 567.1L1437.9 569.2M1446.8 585.5L1443.9 587.8M1430.7 581.6L1431.1 584.8M1528.9 578.3L1524.5 575.8M1456.3 564.6L1461.9 563.6M1449.4 583.9L1449.6 587.0M1475.2 571.5L1480.9 573.1M1486.1 588.0L1483.6 592.3M1463.4 547.4L1458.8 552.2M1490.8 588.0L1486.5 592.7M1519.8 575.2L1524.5 575.8M1524.3 593.2L1521.4 597.5M1437.8 552.3L1433.7 555.5M1512.2 597.1L1514.7 599.3M1446.8 585.5L1449.4 583.9M1429.6 596.8L1431.3 601.1M1485.5 637.0L1490.6 635.8M1449.4 583.9L1455.3 584.2M1450.5 600.6L1448.5 604.8M1426.7 609.5L1426.6 611.2M1478.4 648.8L1483.4 647.8M1519.5 561.7L1521.8 565.3M1490.8 588.0L1494.7 587.8M1488.6 604.8L1487.7 606.9M1472.0 611.5L1474.0 616.4M1421.8 565.1L1418.8 568.6M1461.2 589.6L1460.8 595.3M1460.4 567.0L1457.7 573.3M1503.8 572.3L1504.8 576.4M1414.7 594.9L1419.9 595.7M1506.2 616.2L1502.4 620.4M1509.1 631.9L1503.0 636.1M1463.8 568.7L1463.3 571.8M1426.9 632.0L1429.3 628.2M1450.5 600.6L1455.1 601.0M1454.1 624.7L1458.8 629.3M1460.7 632.5L1457.5 635.6M1482.2 537.6L1486.1 541.6M1485.5 637.0L1484.2 639.9M1457.7 573.3L1464.4 575.5M1469.1 640.1L1470.2 645.4M1448.4 540.3L1449.5 545.0M1509.4 571.7L1504.8 576.4M1488.6 604.8L1495.0 605.0M1493.3 545.3L1489.4 547.9M1454.0 539.5L1456.4 545.2M1422.1 584.6L1424.8 589.1M1481.3 533.4L1482.2 537.6M1478.8 585.1L1474.6 587.2M1495.6 544.2L1493.9 548.9M1426.4 585.6L1430.5 587.2M1438.4 549.7L1442.7 553.8M1517.5 589.0L1516.1 592.4M1426.6 611.2L1430.6 610.8M1485.8 534.4L1482.2 537.6M1466.1 587.8L1470.3 593.5M1464.0 551.8L1463.1 555.4M1474.0 616.4L1478.6 616.3M1411.9 598.9L1414.9 601.4M1476.8 651.2L1472.2 651.5M1476.1 557.0L1477.6 559.0M1467.8 551.3L1465.5 557.7M1506.4 593.3L1507.4 595.3M1449.6 647.5L1451.7 641.3M1478.8 585.1L1481.5 584.1M1478.5 600.8L1477.2 604.4M1424.3 623.6L1427.7 623.4M1472.2 651.5L1467.5 651.4M1433.6 545.7L1437.3 542.9M1482.3 599.1L1479.3 603.4M1517.5 589.0L1523.1 588.6M1516.1 604.4L1514.3 607.6M1482.6 560.7L1479.5 564.4M1437.3 542.9L1441.3 540.5M1460.3 545.0L1458.8 552.2M1431.3 601.1L1433.5 604.1M1447.3 564.3L1445.3 569.0M1434.3 612.8L1431.2 615.2M1521.5 604.0L1520.1 609.0M1442.4 596.9L1449.1 596.8M1482.2 537.6L1486.4 537.8M1470.0 603.9L1474.8 607.7M1490.8 568.1L1490.9 572.8M1483.7 615.6L1484.5 619.1M1449.1 596.8L1451.6 596.7M1478.5 600.8L1482.3 599.1M1503.0 613.5L1502.2 615.7M1516.6 553.8L1515.5 559.9M1441.0 568.2L1442.5 571.5M1427.7 576.9L1424.3 580.6M1482.3 599.1L1488.7 601.5M1483.6 625.0L1480.6 628.6M1492.8 632.8L1490.6 635.8M1516.1 604.4L1521.5 604.0M1413.7 608.0L1417.1 605.5M1462.4 635.8L1464.2 638.9M1452.9 619.6L1449.7 624.3M1444.0 555.2L1446.9 556.8M1419.8 581.3L1419.7 584.3M1440.7 633.5L1442.8 635.9M1486.3 622.8L1486.2 627.4M1521.5 604.0L1525.6 604.9M1466.3 635.2L1469.1 640.1M1443.8 628.7L1440.7 633.5M1501.2 560.2L1505.9 559.2M1455.3 584.2L1456.8 588.6M1530.5 592.0L1527.3 597.4M1454.3 613.4L1457.5 612.0M1474.4 543.6L1474.8 548.2M1505.9 559.2L1510.1 561.7M1441.0 568.2L1445.3 569.0M1459.4 584.3L1461.2 589.6M1494.7 587.8L1496.9 591.8M1472.2 651.5L1468.8 648.5M1502.2 615.7L1506.2 616.2M1442.7 553.8L1444.0 555.2M1445.3 569.0L1451.0 569.7M1497.8 588.5L1501.4 592.0M1530.3 596.6L1527.3 597.4M1419.9 595.7L1417.8 599.8M1506.2 616.2L1509.8 616.8M1449.7 624.3L1454.1 624.7M1446.0 553.4L1446.9 556.8M1440.1 601.3L1433.5 604.1M1490.9 572.8L1493.4 571.4M1425.0 597.1L1422.9 601.4M1455.1 601.0L1457.8 603.2M1454.1 624.7L1461.0 624.8M1508.0 627.6L1511.6 629.4M1494.6 537.4L1494.7 541.3M1506.8 556.9L1505.9 559.2M1462.9 533.0L1467.5 532.6M1424.3 580.6L1430.7 581.6M1459.0 601.2L1460.9 605.3M1445.3 538.3L1448.4 540.3M1515.5 559.9L1514.1 564.5M1494.0 635.4L1497.8 637.0M1461.8 539.6L1465.5 540.0M1425.3 564.3L1426.7 567.6M1499.6 604.0L1502.4 609.4M1436.4 607.3L1434.3 612.8M1497.8 637.0L1503.0 636.1M1429.3 563.3L1432.9 567.1M1484.3 547.3L1489.4 547.9M1469.8 569.1L1471.3 571.5M1509.8 616.8L1508.2 619.6M1481.0 612.2L1483.7 615.6M1459.2 640.4L1458.7 643.1M1472.2 568.0L1475.2 571.5M1471.8 555.2L1476.1 557.0M1513.6 616.8L1512.9 621.0M1514.3 623.2L1511.6 629.4M1444.9 541.5L1442.6 543.5M1461.1 645.0L1463.9 648.6M1476.1 557.0L1481.6 557.5M1517.8 619.5L1519.1 623.2M1516.4 571.8L1519.8 575.2M1463.7 624.8L1467.5 628.0M1494.0 635.4L1490.6 641.4M1429.3 563.3L1434.4 564.2M1472.6 631.8L1470.2 634.7M1494.6 646.6L1489.9 643.1M1472.2 568.0L1477.8 567.4M1488.3 583.7L1486.1 588.0M1477.8 567.4L1481.4 569.5M1516.4 571.8L1521.1 571.3M1525.3 589.3L1524.3 593.2M1476.8 651.2L1478.4 648.8M1473.5 551.3L1471.8 555.2M1453.8 581.1L1457.7 581.1M1485.8 555.1L1487.6 559.6M1477.7 553.4L1476.1 557.0M1457.7 581.1L1462.5 580.3M1488.3 583.7L1490.9 584.1M1488.7 601.5L1485.7 604.8M1462.9 651.0L1458.4 650.1M1488.9 556.6L1492.9 561.8M1459.2 640.4L1464.2 638.9M1490.9 584.1L1497.5 583.7M1526.1 569.5L1521.1 571.3M1468.2 607.9L1467.1 613.2M1445.3 538.3L1449.6 536.5M1444.6 612.0L1442.0 617.2M1456.3 564.6L1456.2 569.7M1417.8 592.7L1421.8 593.5M1418.3 607.2L1419.6 612.3M1451.6 596.7L1457.5 596.3M1493.2 615.9L1493.5 620.7M1529.8 601.2L1524.8 599.2M1457.5 596.3L1460.8 595.3M1488.7 601.5L1492.2 598.9M1493.0 624.5L1494.7 629.1M1492.2 598.9L1497.1 599.9M1500.9 630.8L1497.8 637.0M1526.1 569.5L1522.8 568.4M1497.4 624.5L1498.4 627.7M1470.2 634.7L1474.1 639.7M1524.5 575.8L1521.2 579.4M1452.1 627.4L1455.5 633.1M1430.7 581.6L1426.4 585.6M1507.1 631.0L1503.0 636.1M1418.3 607.2L1424.1 608.8M1477.3 635.1L1479.2 640.5M1433.7 580.2L1431.1 584.8M1463.8 583.0L1466.1 587.8M1463.1 612.0L1467.1 613.2M1467.9 584.0L1471.2 587.6M1502.2 587.5L1506.4 593.3M1509.8 616.8L1513.6 616.8M1487.7 544.7L1489.4 547.9M1507.7 587.3L1509.7 591.9M1506.2 552.9L1504.9 555.7M1429.6 596.8L1426.5 599.1M1455.7 551.1L1456.7 555.5M1437.3 641.1L1433.6 638.3M1435.4 597.5L1431.3 601.1M1520.4 599.9L1516.1 604.4M1463.7 624.8L1467.6 623.3M1433.6 638.3L1430.2 635.3M1472.2 532.5L1476.8 532.8M1468.5 599.0L1470.0 603.9M1510.1 547.2L1511.6 553.8M1437.0 630.7L1440.7 633.5M1476.8 532.8L1481.3 533.4M1472.5 541.0L1474.6 540.6M1507.1 603.2L1509.7 609.2M1488.5 565.4L1486.6 569.7M1474.8 611.7L1474.0 616.4M1521.8 565.3L1522.8 568.4M1484.4 595.0L1489.5 595.1M1441.3 640.2L1447.2 641.4M1474.6 540.6L1480.2 540.6M1439.6 563.3L1441.0 568.2M1426.6 611.2L1428.3 617.0M1493.9 548.9L1498.8 547.3M1424.5 620.8L1424.3 623.6M1457.7 573.3L1459.1 577.6M1520.4 599.9L1524.8 599.2M1469.1 640.1L1466.9 644.7M1446.8 585.5L1445.5 591.4M1424.0 628.4L1429.3 628.2M1481.4 569.5L1484.9 571.2M1498.8 547.3L1503.8 547.9M1481.6 557.5L1485.8 555.1M1500.2 577.2L1504.3 579.5M1474.1 639.7L1470.2 645.4M1454.0 539.5L1449.5 545.0M1470.2 645.4L1473.1 648.3M1485.8 555.1L1488.9 556.6M1418.9 576.2L1419.8 581.3M1483.9 631.0L1485.5 637.0M1450.3 607.1L1454.7 608.4M1458.1 539.8L1456.4 545.2M1439.6 563.3L1442.3 563.9M1497.5 583.7L1497.8 588.5M1493.5 610.9L1497.8 613.5M1444.3 547.3L1442.7 553.8M1481.4 569.5L1486.6 569.7M1421.8 593.5L1425.0 597.1M1467.8 551.3L1463.1 555.4M1444.0 619.4L1448.0 620.1M1449.6 647.5L1447.2 641.4M1418.9 576.2L1422.4 577.5M1493.0 624.5L1497.4 624.5M1486.9 552.2L1488.9 556.6M1422.4 577.5L1427.7 576.9M1462.5 580.3L1467.3 581.3M1465.4 597.3L1465.0 600.3M1445.3 645.7L1447.2 641.4M1431.3 601.1L1431.3 605.0M1463.5 632.0L1469.8 630.9M1414.7 594.9L1417.8 599.8M1467.3 581.3L1471.4 581.5M1502.1 600.9L1503.9 603.0M1501.2 560.2L1502.8 565.3M1499.3 557.0L1501.2 560.2M1470.0 603.9L1468.2 607.9M1469.1 640.1L1474.1 639.7M1454.3 613.4L1454.5 615.3M1500.9 584.9L1507.0 584.9M1505.9 559.2L1508.4 563.7M1452.9 549.3L1453.5 555.5M1509.7 609.2L1513.9 612.5M1449.6 647.5L1454.1 645.3M1457.5 612.0L1461.2 614.9M1426.6 593.3L1431.9 591.2M1445.3 569.0L1442.5 571.5M1431.3 601.1L1435.7 598.9M1412.6 603.5L1417.1 605.5M1466.3 635.2L1464.2 638.9M1500.6 625.2L1504.2 629.1M1451.7 641.3L1454.1 645.3M1490.9 572.8L1488.1 576.9M1440.3 579.3L1440.1 583.7M1450.7 575.8L1453.8 581.1M1504.6 623.8L1508.0 627.6M1462.2 627.3L1463.5 632.0M1459.4 584.3L1456.8 588.6M1472.2 565.1L1475.9 563.1M1497.8 588.5L1496.9 591.8M1444.6 581.0L1440.1 583.7M1514.8 569.3L1520.4 567.5M1467.5 532.6L1465.3 536.6M1450.7 575.8L1455.1 577.4M1494.6 537.4L1490.0 540.9M1486.5 592.7L1489.5 595.1M1442.4 596.9L1447.1 599.8M1445.3 538.3L1444.9 541.5M1493.8 581.0L1497.7 580.3M1498.7 539.4L1494.7 541.3M1527.3 597.4L1524.8 599.2M1430.2 635.3L1426.9 632.0M1465.0 600.3L1460.9 605.3M1416.1 588.8L1420.1 589.2M1429.3 563.3L1426.7 567.6M1426.9 632.0L1424.0 628.4M1503.9 603.0L1502.4 609.4M1481.0 612.2L1478.6 616.3M1413.7 608.0L1418.3 607.2M1472.2 568.0L1471.3 571.5M1485.8 534.4L1490.3 535.7M1484.1 612.8L1483.7 615.6M1422.8 568.6L1424.5 573.1M1513.5 633.7L1511.6 629.4M1461.1 645.0L1455.6 646.7M1477.8 567.4L1475.2 571.5M1516.4 571.8L1516.3 575.4M1486.1 541.6L1490.0 540.9M1465.0 600.3L1468.5 599.0M1442.8 635.9L1447.2 641.4M1433.2 619.1L1431.9 623.3M1497.7 595.3L1502.2 595.5M1426.2 556.6L1430.9 556.7M1521.1 571.3L1519.8 575.2M1461.8 539.6L1463.6 544.3M1503.9 603.0L1507.1 603.2M1421.0 605.3L1426.0 605.5M1484.2 639.9L1481.0 645.1M1434.3 612.8L1440.5 613.2M1471.4 581.5L1467.9 584.0M1459.2 607.1L1464.4 607.2M1465.5 540.0L1463.6 544.3M1476.8 651.2L1473.1 648.3M1483.7 615.6L1487.5 615.1M1503.0 613.5L1507.2 612.1M1480.1 588.4L1483.6 592.3M1516.6 553.8L1511.6 557.2M1452.9 549.3L1449.6 552.4M1431.9 623.3L1437.0 623.3M1451.0 569.7L1450.7 575.8M1477.7 553.4L1471.8 555.2M1452.9 619.6L1457.9 621.0M1519.0 591.4L1521.4 597.5M1527.7 610.2L1526.1 614.5M1438.1 592.5L1440.0 596.9M1488.9 556.6L1487.6 559.6M1500.6 625.2L1504.6 623.8M1440.1 601.3L1444.1 605.4M1496.6 553.7L1499.3 557.0M1413.7 608.0L1412.6 603.5M1475.2 596.8L1474.6 600.1M1468.2 607.9L1463.1 612.0M1479.3 603.4L1483.5 609.3M1510.1 547.2L1513.5 550.3M1480.8 637.3L1485.5 637.0M1510.1 600.2L1511.9 603.0M1424.1 608.8L1419.6 612.3M1463.1 612.0L1465.0 616.6M1473.1 648.3L1478.4 648.8M1456.2 569.7L1457.7 573.3M1467.1 613.2L1467.9 616.6M1497.4 624.5L1494.7 629.1M1452.1 627.4L1450.2 631.6M1466.6 621.4L1463.7 624.8M1456.7 555.5L1463.1 555.4M1499.8 571.8L1500.2 577.2M1445.1 623.2L1447.3 629.4M1464.0 551.8L1467.8 551.3M1477.3 635.1L1474.1 639.7M1458.8 629.3L1455.5 633.1M1515.5 559.9L1519.5 561.7M1494.7 541.3L1493.3 545.3M1433.4 559.8L1436.3 561.4M1480.8 637.3L1479.2 640.5M1456.2 569.7L1460.4 567.0M1467.9 584.0L1466.1 587.8M1453.8 581.1L1455.3 584.2M1479.5 564.4L1484.6 563.9M1487.7 544.7L1484.3 547.3M1476.8 532.8L1479.4 537.1M1473.3 584.4L1471.2 587.6M1499.8 571.8L1503.8 572.3M1507.7 587.3L1506.4 593.3M1484.3 547.3L1483.0 551.4M1481.3 650.6L1483.4 647.8M1455.7 551.1L1453.5 555.5M1435.2 549.4L1437.8 552.3M1513.4 588.6L1509.7 591.9M1484.5 619.1L1490.3 620.1M1459.1 577.6L1464.4 575.5M1458.8 552.2L1456.7 555.5M1451.6 596.7L1455.1 601.0M1473.3 584.4L1478.8 585.1M1474.6 600.1L1470.0 603.9M1513.5 550.3L1511.6 553.8M1450.3 607.1L1447.7 612.1M1488.7 601.5L1495.0 605.0M1430.2 548.7L1433.6 545.7M1439.6 563.3L1437.9 569.2M1513.4 588.6L1517.5 589.0M1511.9 603.0L1509.7 609.2M1442.3 563.9L1441.0 568.2M1481.4 569.5L1480.9 573.1M1528.9 578.3L1525.6 581.7M1440.0 596.9L1442.4 596.9M1444.0 619.4L1445.1 623.2M1502.7 541.7L1500.3 543.9M1503.0 636.1L1500.8 639.7M1470.2 645.4L1468.8 648.5M1486.6 569.7L1484.9 571.2M1474.6 600.1L1478.5 600.8M1477.0 622.9L1480.6 628.6M1453.3 635.0L1454.3 640.9M1435.7 627.3L1437.0 630.7M1448.0 620.1L1449.7 624.3M1474.7 644.5L1473.1 648.3M1490.6 641.4L1495.6 643.6M1422.4 577.5L1419.8 581.3M1472.5 541.0L1474.4 543.6M1511.9 603.0L1516.1 604.4M1457.5 635.6L1459.2 640.4M1431.3 605.0L1433.5 604.1M1474.6 540.6L1477.6 545.4M1444.6 612.0L1447.7 612.1M1453.9 535.0L1460.0 536.9M1449.4 583.9L1451.6 587.4M1463.4 547.4L1464.0 551.8M1493.2 615.9L1497.5 617.3M1486.9 552.2L1485.8 555.1M1490.8 588.0L1492.1 592.5M1467.5 547.1L1467.8 551.3M1442.6 624.3L1445.1 623.2M1437.8 552.3L1438.2 555.8M1502.1 600.9L1499.6 604.0M1445.1 623.2L1449.7 624.3M1484.4 595.0L1488.7 601.5M1441.3 643.5L1447.2 641.4M1499.3 557.0L1495.9 560.5M1450.5 600.6L1452.3 603.2M1472.4 561.3L1468.1 565.6M1426.7 609.5L1430.6 610.8M1504.2 629.1L1508.0 627.6M1490.3 535.7L1490.0 540.9M1458.4 533.9L1462.9 533.0M1422.5 561.5L1421.8 565.1M1488.6 604.8L1492.8 608.2M1457.5 612.0L1454.5 615.3M1432.8 607.0L1434.3 612.8M1465.4 597.3L1470.7 596.8M1490.6 635.8L1494.0 635.4M1458.1 539.8L1461.8 539.6M1421.8 565.1L1422.8 568.6M1506.2 616.2L1508.2 619.6M1514.8 569.3L1512.6 573.0M1423.0 614.8L1424.5 620.8M1481.2 549.7L1484.3 547.3M1463.8 568.7L1465.7 573.6M1450.7 575.8L1449.5 581.3M1504.6 623.8L1504.2 629.1M1454.3 640.9L1454.1 645.3M1485.5 637.0L1488.4 641.2M1462.2 627.3L1460.7 632.5M1475.0 619.8L1473.7 624.7M1465.5 557.7L1471.8 555.2M1509.4 571.7L1511.1 576.0M1473.5 551.3L1477.7 553.4M1509.5 622.9L1508.0 627.6M1432.8 607.0L1436.4 607.3M1467.5 628.0L1463.5 632.0M1512.6 573.0L1516.3 575.4M1421.8 565.1L1425.3 564.3M1478.8 585.1L1480.1 588.4M1441.8 560.8L1444.9 561.6M1490.6 635.8L1488.4 641.2M1474.8 611.7L1481.0 612.2M1495.6 544.2L1498.8 547.3M1463.8 568.7L1469.8 569.1M1517.5 589.0L1519.0 591.4M1462.5 580.3L1463.8 583.0M1424.5 620.8L1429.9 620.2M1485.8 534.4L1486.4 537.8M1481.5 584.1L1480.1 588.4M1510.1 636.8L1509.1 631.9M1509.4 571.7L1512.6 573.0M1493.9 548.9L1492.9 552.8M1424.0 628.4L1427.7 623.4M1411.9 598.9L1417.8 599.8M1473.7 624.7L1477.0 622.9M1467.8 551.3L1471.8 555.2M1512.6 573.0L1516.4 571.8M1523.1 588.6L1519.0 591.4M1444.6 581.0L1449.5 581.3M1449.1 596.8L1447.1 599.8M1477.0 622.9L1483.6 625.0M1447.3 631.3L1450.2 631.6M1449.5 581.3L1453.8 581.1M1482.3 599.1L1485.7 604.8M1530.5 592.0L1530.3 587.4M1450.2 631.6L1455.5 633.1M1451.7 641.3L1454.3 640.9M1447.3 564.3L1451.0 569.7M1481.5 584.1L1488.3 583.7M1454.3 561.7L1452.1 564.6M1521.5 604.0L1524.9 609.4M1459.2 607.1L1457.5 612.0M1454.3 640.9L1459.2 640.4M1430.2 548.7L1433.1 551.6M1490.8 568.1L1493.4 571.4M1523.1 588.6L1525.3 589.3M1503.0 613.5L1506.2 616.2M1452.1 564.6L1451.0 569.7M1497.6 569.2L1499.8 571.8M1427.7 576.9L1430.7 581.6M1452.9 619.6L1454.1 624.7M1494.7 629.1L1492.8 632.8M1433.3 576.1L1433.7 580.2M1482.0 577.6L1476.4 579.4M1486.3 622.8L1489.8 628.4M1443.8 628.7L1447.3 631.3M1457.9 621.0L1461.0 624.8M1485.7 643.7L1483.4 647.8M1424.3 580.6L1422.1 584.6M1486.1 541.6L1487.7 544.7M1472.2 651.5L1473.1 648.3M1510.5 584.4L1507.7 587.3M1497.6 569.2L1501.8 568.0M1433.3 576.1L1437.3 576.2M1438.1 592.5L1435.4 597.5M1412.6 580.5L1418.9 576.2M1519.4 626.6L1514.3 623.2M1496.6 553.7L1494.7 555.9M1425.0 597.1L1426.5 599.1M1441.4 592.7L1440.0 596.9M1476.4 579.4L1480.0 581.4M1445.3 645.7L1441.3 643.5M1506.8 556.9L1510.1 561.7M1499.9 553.7L1499.3 557.0M1480.0 581.4L1485.4 581.0M1510.5 584.4L1516.3 585.4M1510.1 600.2L1507.1 603.2M1441.3 643.5L1437.3 641.1M1511.6 557.2L1515.5 559.9M1465.0 600.3L1470.0 603.9M1433.4 559.8L1434.4 564.2M1516.3 585.4L1520.3 583.4M1514.7 599.3L1511.9 603.0M1438.1 592.5L1441.4 592.7M1436.4 607.3L1440.5 613.2M1467.5 532.6L1472.2 532.5M1479.5 564.4L1477.8 567.4M1467.1 613.2L1465.0 616.6M1441.4 592.7L1445.5 591.4M1441.0 609.2L1444.6 612.0M1475.2 596.8L1479.2 596.3M1465.5 540.0L1472.5 541.0M1522.8 568.4L1521.1 571.3M1513.6 616.8L1517.8 619.5M1479.2 596.3L1484.4 595.0M1510.1 600.2L1514.7 599.3M1431.2 615.2L1433.2 619.1M1484.5 619.1L1486.3 622.8M1489.4 547.9L1493.9 548.9M1459.1 577.6L1457.7 581.1M1514.7 599.3L1520.4 599.9M1506.5 639.7L1500.8 639.7M1464.2 638.9L1461.1 645.0M1475.7 626.9L1477.8 632.7M1494.0 635.4L1496.1 641.2M1453.8 581.1L1449.4 583.9M1472.6 631.8L1477.3 635.1M1464.4 575.5L1462.5 580.3M1441.0 609.2L1445.2 607.6M1497.8 637.0L1500.8 639.7M1457.7 581.1L1455.3 584.2M1488.3 583.7L1490.8 588.0M1484.1 612.8L1490.9 611.1M1435.2 549.4L1433.1 551.6M1434.4 564.2L1439.6 563.3M1490.9 584.1L1494.7 587.8M1526.1 569.5L1524.5 575.8M1490.9 611.1L1493.5 610.9M1433.2 619.1L1438.3 619.2M1530.5 592.0L1530.3 596.6M1417.8 592.7L1419.9 595.7M1451.6 596.7L1450.5 600.6M1438.3 619.2L1444.0 619.4M1483.6 625.0L1486.3 622.8M1477.7 553.4L1481.6 557.5M1421.3 624.7L1418.9 620.7M1457.5 596.3L1455.1 601.0M1486.3 622.8L1493.0 624.5M1455.5 633.1L1460.7 632.5M1418.9 620.7L1416.8 616.6M1494.6 537.4L1498.7 539.4M1492.2 598.9L1495.0 605.0M1468.2 607.9L1472.0 611.5M1460.7 632.5L1463.5 632.0M1498.7 539.4L1502.7 541.7M1456.3 564.6L1460.4 567.0M1464.1 561.1L1461.9 563.6M1464.2 638.9L1469.1 640.1M1529.8 582.8L1525.6 581.7M1442.6 543.5L1446.4 545.2M1461.9 563.6L1463.8 568.7M1442.7 553.8L1446.0 553.4M1497.8 613.5L1493.2 615.9M1521.9 622.7L1521.2 619.9M1448.0 620.1L1445.1 623.2M1490.6 641.4L1489.9 643.1M1446.0 553.4L1449.6 552.4M1506.5 569.2L1509.4 571.7M1457.5 635.6L1454.3 640.9M1440.1 628.0L1437.0 630.7M1496.1 641.2L1495.6 643.6M1474.6 540.6L1474.4 543.6M1468.2 607.9L1474.8 607.7M1506.8 556.9L1511.6 557.2M1480.2 540.6L1477.6 545.4M1433.7 580.2L1436.2 585.3M1461.9 563.6L1468.1 565.6M1458.4 533.9L1460.0 536.9M1458.4 650.1L1463.9 648.6M1506.5 569.2L1511.8 568.4M1520.3 583.4L1517.5 589.0M1466.6 621.4L1470.8 619.6M1506.2 552.9L1506.8 556.9M1511.8 568.4L1514.8 569.3M1440.7 575.1L1445.7 575.4M1445.5 591.4L1442.4 596.9M1484.4 595.0L1482.3 599.1M1441.3 643.5L1441.3 640.2M1514.3 623.2L1519.1 623.2M1435.4 597.5L1435.7 598.9M1445.7 575.4L1450.7 575.8M1485.4 581.0L1490.6 579.8M1520.4 599.9L1521.5 604.0M1488.7 632.4L1492.8 632.8M1511.6 553.8L1506.8 556.9M1440.0 596.9L1440.1 601.3M1432.8 607.0L1430.6 610.8M1490.6 579.8L1493.8 581.0M1520.3 583.4L1523.9 585.4M1492.8 632.8L1495.3 631.6M1490.6 641.4L1496.1 641.2M1441.8 560.8L1442.3 563.9M1488.5 565.4L1490.8 568.1M1474.8 611.7L1478.6 616.3M1524.8 599.2L1521.5 604.0M1445.5 591.4L1449.4 591.6M1502.4 609.4L1497.8 613.5M1496.1 641.2L1500.8 639.7M1426.6 611.2L1431.2 615.2M1437.3 542.9L1442.6 543.5M1424.5 620.8L1427.7 623.4M1449.4 591.6L1454.8 591.4M1428.3 617.0L1424.5 620.8M1489.5 595.1L1494.8 596.7M1474.1 639.7L1474.7 644.5M1512.6 573.0L1511.1 576.0M1429.9 620.2L1427.7 623.4M1472.5 575.8L1476.4 579.4M1488.5 565.4L1494.1 563.0M1479.2 640.5L1481.0 645.1M1458.1 539.8L1460.3 545.0M1486.2 627.4L1488.7 632.4M1524.3 593.2L1524.8 599.2M1462.5 580.3L1459.4 584.3M1444.3 547.3L1446.0 553.4M1467.3 581.3L1463.8 583.0M1424.0 628.4L1424.3 623.6M1438.4 587.4L1438.1 592.5M1490.3 535.7L1486.4 537.8M1447.4 548.6L1449.6 552.4M1500.9 584.9L1502.2 587.5M1472.5 575.8L1479.1 575.2M1477.5 592.8L1475.2 596.8M1529.8 601.2L1528.9 605.7M1426.6 593.3L1429.6 596.8M1465.4 597.3L1468.5 599.0M1516.8 580.9L1521.2 579.4M1528.9 605.7L1527.7 610.2M1416.8 616.6L1415.1 612.3M1438.4 587.4L1443.9 587.8M1415.1 612.3L1413.7 608.0M1502.7 541.7L1506.5 544.3M1472.4 561.3L1475.9 563.1M1477.5 592.8L1483.6 592.3M1497.6 569.2L1493.4 571.4M1506.5 544.3L1510.1 547.2M1446.4 545.2L1449.5 545.0M1472.2 565.1L1477.8 567.4M1507.2 612.1L1506.2 616.2M1483.6 592.3L1486.5 592.7M1445.3 569.0L1447.4 573.7M1517.6 595.6L1521.4 597.5M1433.3 576.1L1430.7 581.6M1449.5 545.0L1456.4 545.2M1513.9 612.5L1509.8 616.8M1457.9 621.0L1454.1 624.7M1490.9 572.8L1493.1 577.7M1530.5 592.0L1525.3 589.3M1455.7 551.1L1458.8 552.2M1447.3 629.4L1447.3 631.3M1462.1 620.9L1461.0 624.8M1444.1 605.4L1448.5 604.8M1486.1 541.6L1482.8 544.4M1422.5 561.5L1427.5 561.3M1457.5 612.0L1463.1 612.0M1493.8 581.0L1490.9 584.1M1483.5 609.3L1487.7 606.9M1490.0 540.9L1487.7 544.7M1444.6 581.0L1446.8 585.5M1416.1 588.8L1417.8 592.7M1467.5 532.6L1469.3 536.9M1423.0 614.8L1428.3 617.0M1474.8 548.2L1473.5 551.3M1420.1 589.2L1421.8 593.5M1485.8 649.6L1483.4 647.8M1475.0 619.8L1480.9 620.3M1481.2 549.7L1477.7 553.4M1516.6 630.2L1513.5 633.7M1458.5 592.6L1460.8 595.3M1511.6 557.2L1510.1 561.7M1429.3 628.2L1435.7 627.3M1465.0 600.3L1465.8 605.1M1433.4 559.8L1429.3 563.3M1430.9 556.7L1427.5 561.3M1411.9 585.1L1412.6 580.5M1455.1 577.4L1459.1 577.6M1497.7 595.3L1497.1 599.9M1411.9 585.1L1415.1 583.4M1495.3 631.6L1500.9 630.8M1436.3 561.4L1434.4 564.2M1503.9 603.0L1504.9 608.7M1524.2 565.3L1526.1 569.5M1441.0 609.2L1440.5 613.2M1421.0 605.3L1424.1 608.8M1445.2 607.6L1444.6 612.0M1477.6 545.4L1482.8 544.4M1484.1 612.8L1487.5 615.1M1431.2 615.2L1429.9 620.2M1484.5 619.1L1483.6 625.0M1434.4 564.2L1432.9 567.1M1454.1 645.3L1458.7 643.1M1482.8 544.4L1487.7 544.7M1490.9 611.1L1493.2 615.9M1433.2 619.1L1437.0 623.3M1436.7 616.7L1433.2 619.1M1498.7 539.4L1500.3 543.9M1475.7 626.9L1472.6 631.8M1437.0 623.3L1435.7 627.3M1521.1 571.3L1524.5 575.8M1465.3 536.6L1461.8 539.6M1502.7 642.3L1500.8 639.7M1438.3 619.2L1442.6 624.3M1438.6 572.7L1440.7 575.1M1486.9 552.2L1492.9 552.8M1497.8 637.0L1496.1 641.2M1480.6 628.6L1477.8 632.7M1466.9 644.7L1463.9 648.6M1484.2 639.9L1485.7 643.7M1471.4 581.5L1473.3 584.4M1454.3 561.7L1459.6 560.3M1482.0 577.6L1485.4 581.0M1488.4 641.2L1489.9 643.1M1465.5 540.0L1470.3 545.7M1490.9 584.1L1490.8 588.0M1476.4 579.4L1478.8 585.1M1502.8 565.3L1508.4 563.7M1525.6 581.7L1520.3 583.4M1452.9 549.3L1455.7 551.1M1527.7 573.8L1524.5 575.8M1417.8 592.7L1414.7 594.9M1438.6 572.7L1442.5 571.5M1449.6 587.0L1445.5 591.4M1456.3 548.3L1458.8 552.2M1521.9 622.7L1519.1 623.2M1482.0 577.6L1488.1 576.9M1483.0 551.4L1481.6 557.5M1475.2 596.8L1478.5 600.8M1526.1 614.5L1524.2 618.7M1497.1 599.9L1495.0 605.0M1448.4 636.8L1453.3 635.0M1449.6 587.0L1451.6 587.4M1461.9 563.6L1460.4 567.0M1424.1 608.8L1426.6 611.2M1465.0 616.6L1462.1 620.9M1468.1 565.6L1463.8 568.7M1506.5 569.2L1503.8 572.3M1460.8 595.3L1465.4 597.3M1466.6 621.4L1467.6 623.3M1492.1 592.5L1496.9 591.8M1471.2 547.6L1474.8 548.2M1511.8 568.4L1509.4 571.7M1440.7 575.1L1440.3 579.3M1497.1 599.9L1502.1 600.9M1458.8 629.3L1460.7 632.5M1414.9 601.4L1417.8 599.8M1494.7 541.3L1495.6 544.2M1445.7 575.4L1444.6 581.0M1424.1 608.8L1426.7 609.5M1480.8 637.3L1484.2 639.9M1470.8 619.6L1467.6 623.3M1452.3 603.2L1457.8 603.2M1458.4 650.1L1455.6 646.7M1467.1 613.2L1472.0 611.5M1490.3 648.3L1485.7 643.7M1492.8 608.2L1497.2 607.1M1473.3 584.4L1474.6 587.2M1484.3 547.3L1486.9 552.2M1513.6 616.8L1518.6 617.3M1431.2 615.2L1436.7 616.7M1513.4 588.6L1516.1 592.4M1458.8 552.2L1463.1 555.4M1440.0 596.9L1435.7 598.9M1510.1 636.8L1506.5 639.7M1470.3 593.5L1470.7 596.8M1474.6 600.1L1477.2 604.4M1441.8 560.8L1439.6 563.3M1438.2 555.8L1436.3 561.4M1413.7 576.0L1415.1 571.7M1450.3 607.1L1454.3 613.4M1440.7 633.5L1447.3 631.3M1507.4 595.3L1505.0 601.0M1444.9 561.6L1442.3 563.9M1511.9 603.0L1514.3 607.6M1447.2 641.4L1451.7 641.3M1431.3 605.0L1432.8 607.0M1480.2 540.6L1486.1 541.6M1442.3 563.9L1445.3 569.0M1454.7 608.4L1454.3 613.4M1445.9 616.9L1448.0 620.1M1486.6 569.7L1490.9 572.8M1472.5 575.8L1471.4 581.5M1493.3 545.3L1495.6 544.2M1497.8 613.5L1502.2 615.7M1479.2 640.5L1474.7 644.5M1500.1 621.2L1497.4 624.5M1486.2 627.4L1483.9 631.0M1474.7 644.5L1478.4 648.8M1488.9 556.6L1494.7 555.9M1422.4 577.5L1424.3 580.6M1527.7 610.2L1524.9 609.4M1437.3 641.1L1439.8 635.0M1496.6 553.7L1499.9 553.7M1489.8 628.4L1488.7 632.4M1442.3 563.9L1447.3 564.3M1464.1 561.1L1469.4 559.2M1447.4 548.6L1446.0 553.4M1526.1 614.5L1524.9 609.4M1486.6 569.7L1490.8 568.1M1463.4 547.4L1467.8 551.3M1500.9 584.9L1497.8 588.5M1485.4 581.0L1488.3 583.7M1514.1 564.5L1517.4 563.4M1448.0 620.1L1452.9 619.6M1507.0 584.9L1502.2 587.5M1465.0 616.6L1467.9 616.6M1426.6 593.3L1425.0 597.1M1497.4 624.5L1500.6 625.2M1431.9 591.2L1429.6 596.8M1469.8 630.9L1472.6 631.8M1492.9 552.8L1488.9 556.6M1472.4 561.3L1472.2 565.1M1474.1 639.7L1479.2 640.5M1422.5 561.5L1425.3 564.3M1472.2 565.1L1472.2 568.0M1507.0 584.9L1510.5 584.4M1505.0 601.0L1503.9 603.0M1477.6 559.0L1475.9 563.1M1483.5 609.3L1481.0 612.2M1479.2 640.5L1484.2 639.9M1427.5 561.3L1429.3 563.3M1514.8 569.3L1516.4 571.8M1431.9 591.2L1438.1 592.5M1487.7 606.9L1484.1 612.8M1430.2 635.3L1434.8 635.4M1470.7 596.8L1475.2 596.8M1454.3 640.9L1458.7 643.1M1475.0 619.8L1477.0 622.9M1454.1 645.3L1455.6 646.7M1432.2 631.2L1434.8 635.4M1520.4 567.5L1516.4 571.8M1505.0 601.0L1510.1 600.2M1509.5 622.9L1511.6 629.4M1480.9 620.3L1483.6 625.0M1467.5 628.0L1469.8 630.9M1455.1 577.4L1453.8 581.1M1490.6 635.8L1490.6 641.4M1470.0 627.3L1472.6 631.8M1420.1 589.2L1417.8 592.7M1433.6 545.7L1435.2 549.4M1516.8 580.9L1520.3 583.4M1437.9 569.2L1441.0 568.2M1481.5 584.1L1486.1 588.0M1493.9 548.9L1496.6 553.7M1458.5 592.6L1457.5 596.3M1437.3 542.9L1438.4 549.7M1480.9 573.1L1484.9 571.2M1523.1 588.6L1524.3 593.2M1498.8 547.3L1499.9 553.7M1449.1 596.8L1450.5 600.6M1464.5 593.2L1460.8 595.3M1497.7 580.3L1504.3 579.5M1429.9 620.2L1433.2 619.1M1502.2 595.5L1497.1 599.9M1446.9 556.8L1450.6 561.0M1420.1 589.2L1424.8 589.1M1421.0 605.3L1418.3 607.2M1517.6 595.6L1520.4 599.9M1424.0 628.4L1421.3 624.7M1411.5 594.3L1414.7 594.9M1454.3 561.7L1456.3 564.6M1426.0 605.5L1424.1 608.8M1459.2 607.1L1463.1 612.0M1490.3 535.7L1494.6 537.4M1490.9 611.1L1487.5 615.1M1502.8 565.3L1501.8 568.0M1464.5 593.2L1470.3 593.5M1498.7 539.4L1495.6 544.2M1490.0 540.9L1494.7 541.3M1452.1 564.6L1456.2 569.7M1508.4 563.7L1506.5 569.2M1438.3 619.2L1437.0 623.3M1438.6 572.7L1437.3 576.2M1502.2 595.5L1507.4 595.3M1454.5 615.3L1457.9 621.0M1494.7 629.1L1495.3 631.6M1437.8 552.3L1442.7 553.8M1442.5 571.5L1440.7 575.1M1482.0 577.6L1480.0 581.4M1426.0 605.5L1431.3 605.0M1488.4 641.2L1485.7 643.7M1508.2 619.6L1504.6 623.8M1498.4 627.7L1500.9 630.8M1412.6 580.5L1419.8 581.3M1501.8 568.0L1503.8 572.3M1463.5 632.0L1462.4 635.8M1499.3 557.0L1504.9 555.7M1476.4 579.4L1473.3 584.4M1488.1 576.9L1485.4 581.0M1464.4 607.2L1468.2 607.9M1424.3 580.6L1426.4 585.6M1437.3 576.2L1440.3 579.3M1452.1 564.6L1456.3 564.6M1480.0 581.4L1478.8 585.1M1510.5 584.4L1513.4 588.6M1507.2 612.1L1513.9 612.5M1456.3 548.3L1455.7 551.1M1424.1 608.8L1423.0 614.8M1516.3 585.4L1517.5 589.0M1446.4 545.2L1447.4 548.6M1513.9 612.5L1518.4 611.3M1457.9 621.0L1462.1 620.9M1519.4 626.6L1519.1 623.2M1501.8 568.0L1506.5 569.2M1441.4 592.7L1442.4 596.9M1462.1 620.9L1466.6 621.4M1504.6 623.8L1509.5 622.9M1499.9 553.7L1504.9 555.7M1412.6 603.5L1411.9 598.9M1437.3 576.2L1440.7 575.1M1479.2 596.3L1478.5 600.8M1509.5 622.9L1514.3 623.2M1477.8 632.7L1483.9 631.0M1513.5 550.3L1516.6 553.8M1514.7 599.3L1516.1 604.4M1483.9 631.0L1488.7 632.4M1484.2 639.9L1488.4 641.2M1460.3 545.0L1463.6 544.3M1479.5 564.4L1481.4 569.5M1487.6 559.6L1484.6 563.9M1492.8 608.2L1490.9 611.1M1488.4 641.2L1490.6 641.4M1484.6 563.9L1486.6 569.7M1487.5 615.1L1490.3 620.1M1445.7 575.4L1440.3 579.3M1467.8 551.3L1473.5 551.3M1421.9 572.9L1422.4 577.5M1459.1 577.6L1462.5 580.3M1464.2 638.9L1466.9 644.7M1436.3 561.4L1441.8 560.8M1464.4 575.5L1467.3 581.3M1453.9 649.0L1455.6 646.7M1490.3 620.1L1493.0 624.5M1457.7 581.1L1459.4 584.3M1484.6 563.9L1488.5 565.4M1485.8 649.6L1485.7 643.7M1528.9 605.7L1524.9 609.4M1421.9 572.9L1424.5 573.1M1430.5 587.2L1426.6 593.3M1424.5 573.1L1431.0 573.0M1433.5 587.0L1431.9 591.2M1524.2 565.3L1521.8 565.3M1464.4 575.5L1468.7 575.6M1470.3 593.5L1465.4 597.3M1526.1 614.5L1518.6 617.3M1529.8 601.2L1525.6 604.9M1438.2 555.8L1433.4 559.8M1457.5 596.3L1459.0 601.2M1468.7 575.6L1472.5 575.8M1473.0 593.3L1470.7 596.8M1509.0 581.5L1513.7 580.2M1530.3 596.6L1529.8 601.2M1460.8 595.3L1465.0 600.3M1513.7 580.2L1516.8 580.9M1430.5 587.2L1433.5 587.0M1431.3 605.0L1426.7 609.5M1461.1 645.0L1466.9 644.7M1516.6 553.8L1511.6 553.8M1464.1 561.1L1468.1 565.6M1433.5 587.0L1438.4 587.4M1433.5 604.1L1432.8 607.0M1470.3 593.5L1473.0 593.3M1445.9 616.9L1444.0 619.4M1524.9 609.4L1521.8 611.1M1497.8 613.5L1497.5 617.3M1514.1 564.5L1511.8 568.4M1473.0 593.3L1477.5 592.8M1451.1 617.1L1448.0 620.1M1474.8 607.7L1474.8 611.7M1507.4 595.3L1512.2 597.1M1453.9 649.0L1454.1 645.3M1468.1 565.6L1472.2 568.0M1437.3 641.1L1434.8 635.4M1440.1 628.0L1440.7 633.5M1447.4 573.7L1445.7 575.4M1512.2 597.1L1517.6 595.6M1481.0 645.1L1478.4 648.8M1453.6 573.7L1450.7 575.8M1433.5 604.1L1440.4 604.2M1480.2 540.6L1482.8 544.4M1508.0 627.6L1509.1 631.9M1433.7 580.2L1440.1 583.7M1485.4 581.0L1481.5 584.1M1496.3 576.9L1493.8 581.0M1474.8 607.7L1476.8 609.0M1442.6 543.5L1438.4 549.7M1490.6 579.8L1488.3 583.7M1520.3 583.4L1523.1 588.6M1461.2 589.6L1458.5 592.6M1476.8 609.0L1483.5 609.3M1518.4 611.3L1521.8 611.1M1523.9 585.4L1525.3 589.3M1445.5 591.4L1449.1 596.8M1501.4 592.0L1497.7 595.3M1471.2 547.6L1467.8 551.3M1521.9 622.7L1519.4 626.6" stroke="#0b1420" stroke-width="0.7" stroke-opacity="0.95" fill="none"/><circle cx="1471" cy="592" r="59.5" fill="none" stroke="#0b1420" stroke-width="1.3"/><path d="M1400.0 573.0L1402.9 570.3L1407.0 569.3L1411.8 569.5L1416.7 570.4L1421.3 571.4L1425.0 572.0L1427.8 572.3L1430.1 572.8L1432.1 573.4L1433.9 574.1L1435.4 575.0L1437.0 576.0L1438.5 577.2L1439.9 578.6L1441.1 580.1L1442.2 581.7L1443.2 583.3L1444.0 585.0L1444.7 586.7L1445.2 588.5L1445.6 590.4L1445.9 592.3L1446.0 594.1L1446.0 596.0L1445.8 597.9L1445.5 599.8L1445.1 601.7L1444.5 603.6L1443.8 605.3L1443.0 607.0L1442.2 608.6L1441.3 610.1L1440.3 611.5L1439.1 612.8L1437.7 614.0L1436.0 615.0L1433.9 615.8L1431.5 616.5L1428.8 617.1L1426.0 617.5L1423.0 617.8L1420.0 618.0L1416.7 618.6L1412.9 619.6L1409.0 620.4L1405.3 620.7L1402.2 619.7L1400.0 617.0L1398.6 611.7L1397.6 603.9L1397.2 595.0L1397.4 586.1L1398.3 578.3Z" fill="url(#neckg)"/><path d="M1406.1 582.8L1408.4 583.9M1400.2 593.6L1402.8 593.9M1401.5 590.3L1402.8 593.9M1412.3 610.2L1416.1 610.4M1407.7 608.6L1408.9 611.8M1418.9 618.2L1415.6 614.6M1418.0 583.4L1419.6 587.0M1431.1 573.1L1434.8 574.6M1412.3 610.2L1415.6 614.6M1402.8 593.9L1408.4 594.0M1440.7 597.5L1442.6 600.5M1438.7 599.6L1442.6 600.5M1411.1 607.9L1412.3 610.2M1404.1 572.6L1408.0 572.7M1428.6 583.4L1433.8 584.3M1407.0 569.3L1404.1 572.6M1445.7 591.0L1446.0 595.0M1433.8 584.3L1436.4 582.9M1427.7 594.7L1431.5 594.4M1430.0 590.0L1431.5 594.4M1411.0 569.5L1408.0 572.7M1402.5 615.1L1406.2 615.1M1446.0 595.0L1445.6 599.1M1401.2 576.9L1405.0 577.4M1401.2 576.9L1403.1 578.6M1433.7 589.8L1435.6 593.5M1431.5 594.4L1435.6 593.5M1423.7 600.0L1424.9 603.8M1410.3 579.0L1408.4 583.9M1405.0 577.4L1408.1 575.6M1414.1 582.0L1415.2 585.7M1411.3 586.6L1415.2 585.7M1446.0 595.0L1443.8 592.9M1405.0 577.4L1407.8 579.7M1411.3 586.6L1410.2 589.7M1427.7 601.2L1428.3 604.1M1408.3 595.9L1406.5 599.7M1424.9 603.8L1428.3 604.1M1415.2 585.7L1419.6 587.0M1410.5 593.2L1414.2 597.4M1415.2 585.7L1413.4 589.3M1416.2 573.6L1418.3 576.1M1430.1 614.6L1435.5 613.3M1431.0 616.6L1427.0 617.3M1414.2 597.4L1416.2 597.7M1439.1 586.7L1441.0 590.3M1415.8 594.3L1416.2 597.7M1403.0 619.9L1404.4 617.2M1408.9 611.8L1406.2 615.1M1397.8 605.3L1398.5 606.5M1444.8 587.0L1439.1 586.7M1432.5 575.6L1434.4 580.2M1401.5 590.3L1400.2 593.6M1409.4 604.3L1411.1 607.9M1407.7 608.6L1411.1 607.9M1407.7 608.6L1404.2 610.7M1407.8 579.7L1406.1 582.8M1440.7 597.5L1438.7 599.6M1435.0 606.5L1436.2 610.8M1410.4 573.9L1413.5 576.9M1436.2 610.8L1435.5 613.3M1410.4 573.9L1410.3 579.0M1430.0 590.0L1427.7 594.7M1436.4 605.1L1440.2 607.1M1434.4 580.2L1433.8 584.3M1401.2 576.9L1400.3 578.5M1423.7 600.0L1422.0 603.4M1434.9 615.4L1431.0 616.6M1414.1 582.0L1411.3 586.6M1408.3 595.9L1414.2 597.4M1428.4 577.2L1432.5 575.6M1398.0 580.9L1401.7 584.1M1428.4 577.2L1430.8 580.2M1410.5 593.2L1408.3 595.9M1402.2 606.8L1407.7 608.6M1402.2 606.8L1400.7 610.8M1443.2 583.3L1440.4 582.6M1439.1 586.7L1437.7 589.4M1405.8 604.3L1402.2 606.8M1407.0 620.6L1403.0 619.9M1438.4 613.4L1435.5 613.3M1401.5 590.3L1406.2 590.1M1440.4 582.6L1439.1 586.7M1439.6 594.5L1440.7 597.5M1437.6 596.5L1440.7 597.5M1419.0 570.9L1418.9 572.1M1409.4 604.3L1407.7 608.6M1403.0 619.9L1400.2 617.2M1419.1 578.7L1422.7 580.2M1419.1 578.7L1421.4 582.3M1423.0 617.8L1422.1 615.2M1423.0 571.7L1422.9 572.5M1434.0 602.8L1435.0 606.5M1432.3 607.5L1435.0 606.5M1407.0 569.3L1411.0 569.5M1432.3 607.5L1430.2 610.4M1422.7 580.2L1426.8 579.0M1424.2 589.7L1430.0 590.0M1435.5 600.0L1440.0 603.5M1443.8 592.9L1440.7 597.5M1435.0 606.5L1440.2 607.1M1411.0 569.5L1415.0 570.1M1435.0 606.5L1433.8 610.2M1397.3 597.1L1397.2 593.1M1410.4 573.9L1408.1 575.6M1430.0 590.0L1433.7 589.8M1419.0 599.9L1423.7 600.0M1420.1 596.2L1423.7 600.0M1436.4 605.1L1435.0 606.5M1397.2 593.1L1397.3 589.0M1408.4 583.9L1414.1 582.0M1445.7 591.0L1441.0 590.3M1408.4 583.9L1404.1 585.6M1423.7 600.0L1427.7 601.2M1425.4 596.8L1427.7 601.2M1416.1 610.4L1421.9 610.5M1416.1 610.4L1418.4 613.6M1414.1 582.0L1418.0 583.4M1408.4 594.0L1410.5 593.2M1410.2 589.7L1410.5 593.2M1421.9 610.5L1424.6 610.6M1400.7 604.3L1398.5 606.5M1438.2 576.9L1441.0 579.9M1421.9 610.5L1422.1 615.2M1398.0 580.9L1400.3 578.5M1410.5 593.2L1415.8 594.3M1436.4 582.9L1435.6 587.8M1413.4 589.3L1415.8 594.3M1402.2 600.9L1405.8 604.3M1428.4 577.2L1426.8 579.0M1415.0 570.1L1416.2 573.6M1410.4 573.9L1416.2 573.6M1411.0 620.0L1409.4 618.0M1405.8 604.3L1409.4 604.3M1406.5 599.7L1409.4 604.3M1435.6 593.5L1434.0 598.1M1397.3 589.0L1399.6 585.8M1397.8 605.3L1400.7 604.3M1437.7 589.4L1439.6 594.5M1439.6 594.5L1437.6 596.5M1410.1 615.2L1415.6 614.6M1398.3 609.3L1400.7 610.8M1441.0 590.3L1443.8 592.9M1431.1 573.1L1432.5 575.6M1419.6 587.0L1421.8 591.3M1419.1 578.7L1418.0 583.4M1434.0 602.8L1432.3 607.5M1424.3 585.9L1424.2 589.7M1435.5 600.0L1436.4 605.1M1416.2 597.7L1415.9 600.0M1425.3 576.8L1422.7 580.2M1424.6 584.2L1427.5 586.7M1420.1 596.2L1419.0 599.9M1434.8 574.6L1438.2 576.9M1406.2 590.1L1402.8 593.9M1427.0 617.3L1430.1 614.6M1415.4 607.2L1416.1 610.4M1416.1 610.4L1415.6 614.6M1408.0 572.7L1410.4 573.9M1410.2 589.7L1408.4 594.0M1400.7 604.3L1405.8 604.3M1414.7 579.9L1414.1 582.0M1444.6 603.0L1440.0 603.5M1436.4 582.9L1440.4 582.6M1402.2 600.9L1400.7 604.3M1415.0 570.1L1410.4 573.9M1445.6 599.1L1444.6 603.0M1435.6 593.5L1439.6 594.5M1408.1 575.6L1410.3 579.0M1439.6 594.5L1443.8 592.9M1427.1 572.2L1425.3 576.8M1437.7 589.4L1435.6 593.5M1431.1 600.2L1434.0 602.8M1398.3 609.3L1402.2 606.8M1413.5 576.9L1418.3 576.1M1421.4 582.3L1424.3 585.9M1419.6 587.0L1424.3 585.9M1400.0 573.0L1404.1 572.6M1431.1 573.1L1428.4 577.2M1419.6 587.0L1416.7 589.0M1434.0 602.8L1436.4 605.1M1427.0 617.3L1423.0 617.8M1414.9 619.0L1415.6 614.6M1424.3 585.9L1427.5 586.7M1416.2 597.7L1420.1 596.2M1420.0 594.3L1420.1 596.2M1404.4 617.2L1409.4 618.0M1423.0 617.8L1418.9 618.2M1400.3 578.5L1403.1 578.6M1400.3 578.5L1401.7 584.1M1400.2 617.2L1402.5 615.1M1420.1 596.2L1425.4 596.8M1422.5 594.3L1425.4 596.8M1412.2 603.6L1415.4 607.2M1400.2 617.2L1404.4 617.2M1406.2 615.1L1410.1 615.2M1403.1 578.6L1407.8 579.7M1406.2 590.1L1410.2 589.7M1418.1 603.5L1420.0 607.5M1415.4 607.2L1420.0 607.5M1427.0 617.3L1426.1 613.2M1415.4 607.2L1412.3 610.2M1400.2 617.2L1399.0 613.3M1445.6 599.1L1442.6 600.5M1410.2 589.7L1413.4 589.3M1402.2 596.8L1402.2 600.9M1428.3 604.1L1434.0 602.8M1399.0 613.3L1398.3 609.3M1402.2 600.9L1406.5 599.7M1404.5 596.2L1406.5 599.7M1418.9 572.1L1420.2 575.2M1430.8 580.2L1434.4 580.2M1400.7 610.8L1404.2 610.7M1419.0 570.9L1423.0 571.7M1400.7 610.8L1402.5 615.1M1437.7 589.4L1441.0 590.3M1418.0 583.4L1415.2 585.7M1412.3 610.2L1410.1 615.2M1430.2 595.8L1431.1 600.2M1397.2 593.1L1401.5 590.3M1431.1 600.2L1428.3 604.1M1411.1 607.9L1415.4 607.2M1411.1 607.9L1408.9 611.8M1421.4 582.3L1419.6 587.0M1434.0 598.1L1435.5 600.0M1400.0 573.0L1398.8 576.9M1443.1 606.8L1440.2 607.1M1414.9 619.0L1410.1 615.2M1398.4 600.7L1402.2 600.9M1421.8 591.3L1422.5 594.3M1402.5 615.1L1404.4 617.2M1441.1 610.4L1436.2 610.8M1412.2 603.6L1411.1 607.9M1433.7 589.8L1431.5 594.4M1404.1 585.6L1406.2 590.1M1415.9 600.0L1418.1 603.5M1406.2 615.1L1409.4 618.0M1405.0 577.4L1403.1 578.6M1427.7 601.2L1424.9 603.8M1426.8 579.0L1430.8 580.2M1426.8 579.0L1428.6 583.4M1402.2 596.8L1398.4 600.7M1415.0 570.1L1419.0 570.9M1416.2 573.6L1413.5 576.9M1440.0 603.5L1440.2 607.1M1438.2 576.9L1436.4 582.9M1415.8 594.3L1414.2 597.4M1397.3 589.0L1397.5 584.9M1418.9 572.1L1418.3 576.1M1432.1 586.9L1433.7 589.8M1432.5 575.6L1430.8 580.2M1418.0 583.4L1421.4 582.3M1431.1 600.2L1435.5 600.0M1430.2 595.8L1427.7 601.2M1397.3 597.1L1398.4 600.7M1399.6 585.8L1401.5 590.3M1441.0 579.9L1443.2 583.3M1416.7 589.0L1420.0 594.3M1422.5 608.2L1424.6 610.6M1430.2 610.4L1433.8 610.2M1422.7 580.2L1424.6 584.2M1404.1 572.6L1408.1 575.6M1416.2 573.6L1418.9 572.1M1411.0 600.1L1412.2 603.6M1401.7 584.1L1404.1 585.6M1440.2 607.1L1436.2 610.8M1434.9 615.4L1435.5 613.3M1412.2 603.6L1418.1 603.5M1433.7 589.8L1437.7 589.4M1443.1 606.8L1441.1 610.4M1397.5 601.2L1398.4 600.7M1397.3 597.1L1400.2 593.6M1400.2 593.6L1402.2 596.8M1418.9 618.2L1422.1 615.2M1434.8 574.6L1434.4 580.2M1418.4 613.6L1422.1 615.2M1427.7 601.2L1431.1 600.2M1402.2 596.8L1404.5 596.2M1402.8 593.9L1404.5 596.2M1438.7 599.6L1440.0 603.5M1424.6 610.6L1430.2 610.4M1428.6 583.4L1432.1 586.9M1424.6 610.6L1426.1 613.2M1415.8 594.3L1420.0 594.3M1432.1 586.9L1435.6 587.8M1427.7 594.7L1430.2 595.8M1409.4 604.3L1412.2 603.6M1431.5 594.4L1434.0 598.1M1430.2 595.8L1434.0 598.1M1422.0 603.4L1422.5 608.2M1399.6 585.8L1404.1 585.6M1398.8 576.9L1401.2 576.9M1423.0 571.7L1418.9 572.1M1415.6 614.6L1418.4 613.6M1398.8 576.9L1400.3 578.5M1446.0 595.0L1440.7 597.5M1416.7 589.0L1415.8 594.3M1424.9 603.8L1426.6 606.7M1422.5 608.2L1426.6 606.7M1422.7 580.2L1421.4 582.3M1443.1 606.8L1440.0 603.5M1407.0 620.6L1409.4 618.0M1418.3 576.1L1420.2 575.2M1411.0 600.1L1409.4 604.3M1418.3 576.1L1419.1 578.7M1427.5 586.7L1430.0 590.0M1436.4 605.1L1440.0 603.5M1401.7 584.1L1399.6 585.8M1414.2 597.4L1415.9 600.0M1434.9 615.4L1430.1 614.6M1425.4 596.8L1423.7 600.0M1434.8 574.6L1432.5 575.6M1418.9 618.2L1418.4 613.6M1420.0 607.5L1421.9 610.5M1421.9 610.5L1418.4 613.6M1413.4 589.3L1410.5 593.2M1418.9 618.2L1414.9 619.0M1428.6 583.4L1427.5 586.7M1424.6 610.6L1422.1 615.2M1407.0 569.3L1408.0 572.7M1406.5 599.7L1405.8 604.3M1444.6 603.0L1443.1 606.8M1427.7 594.7L1425.4 596.8M1445.7 591.0L1443.8 592.9M1397.5 584.9L1399.6 585.8M1397.5 601.2L1400.7 604.3M1422.0 603.4L1420.0 607.5M1413.5 576.9L1414.7 579.9M1441.0 590.3L1439.6 594.5M1411.3 586.6L1413.4 589.3M1408.3 595.9L1411.0 600.1M1435.5 600.0L1434.0 602.8M1407.0 620.6L1404.4 617.2M1424.6 584.2L1424.3 585.9M1427.5 586.7L1432.1 586.9M1418.3 576.1L1414.7 579.9M1403.0 570.3L1404.1 572.6M1427.5 586.7L1424.2 589.7M1443.2 583.3L1439.1 586.7M1403.1 578.6L1406.1 582.8M1425.4 596.8L1430.2 595.8M1437.6 596.5L1438.7 599.6M1407.8 579.7L1410.3 579.0M1407.8 579.7L1408.4 583.9M1420.0 607.5L1422.5 608.2M1420.0 607.5L1416.1 610.4M1413.4 589.3L1416.7 589.0M1424.2 589.7L1427.7 594.7M1398.3 609.3L1397.8 605.3M1430.8 580.2L1433.8 584.3M1406.5 599.7L1411.0 600.1M1422.9 572.5L1425.3 576.8M1419.0 599.9L1422.0 603.4M1434.4 580.2L1436.4 582.9M1408.1 575.6L1407.8 579.7M1404.2 610.7L1408.9 611.8M1408.4 583.9L1411.3 586.6M1423.0 571.7L1427.1 572.2M1398.3 609.3L1398.5 606.5M1404.2 610.7L1406.2 615.1M1410.1 615.2L1409.4 618.0M1422.0 603.4L1424.9 603.8M1413.5 576.9L1410.3 579.0M1408.4 594.0L1408.3 595.9M1398.0 580.9L1398.8 576.9M1426.1 613.2L1430.1 614.6M1435.5 600.0L1438.7 599.6M1441.0 579.9L1440.4 582.6M1424.6 584.2L1428.6 583.4M1402.2 606.8L1404.2 610.7M1422.5 594.3L1420.1 596.2M1433.8 610.2L1436.2 610.8M1433.8 610.2L1435.5 613.3M1405.8 604.3L1407.7 608.6M1397.3 589.0L1401.5 590.3M1403.1 578.6L1401.7 584.1M1399.0 613.3L1402.5 615.1M1418.1 603.5L1415.4 607.2M1427.0 617.3L1422.1 615.2M1437.6 596.5L1435.5 600.0M1407.4 587.6L1410.2 589.7M1444.6 603.0L1442.6 600.5M1432.3 607.5L1433.8 610.2M1404.5 596.2L1402.2 600.9M1424.2 589.7L1422.5 594.3M1430.8 580.2L1428.6 583.4M1397.5 584.9L1398.0 580.9M1422.9 572.5L1420.2 575.2M1419.0 599.9L1418.1 603.5M1435.6 587.8L1437.7 589.4M1397.5 584.9L1401.7 584.1M1408.4 583.9L1407.4 587.6M1404.2 610.7L1402.5 615.1M1421.4 582.3L1424.6 584.2M1434.0 598.1L1431.1 600.2M1443.2 583.3L1444.8 587.0M1430.2 610.4L1430.1 614.6M1408.4 594.0L1404.5 596.2M1400.7 604.3L1402.2 606.8M1420.0 594.3L1422.5 594.3M1441.0 579.9L1436.4 582.9M1426.6 606.7L1430.2 610.4M1436.4 582.9L1439.1 586.7M1444.8 587.0L1445.7 591.0M1415.0 570.1L1418.9 572.1M1418.9 572.1L1422.9 572.5M1441.1 610.4L1440.2 607.1M1421.8 591.3L1420.0 594.3M1411.0 620.0L1410.1 615.2M1422.5 594.3L1427.7 594.7M1433.8 610.2L1430.1 614.6M1435.6 593.5L1437.6 596.5M1404.1 585.6L1407.4 587.6M1399.0 613.3L1400.7 610.8M1404.1 585.6L1401.5 590.3M1406.2 615.1L1404.4 617.2M1427.1 572.2L1422.9 572.5M1418.1 603.5L1422.0 603.4M1415.9 600.0L1412.2 603.6M1438.4 613.4L1436.2 610.8M1441.1 610.4L1438.4 613.4M1407.4 587.6L1411.3 586.6M1407.4 587.6L1406.2 590.1M1426.8 579.0L1424.6 584.2M1408.0 572.7L1408.1 575.6M1422.1 615.2L1426.1 613.2M1419.6 587.0L1424.2 589.7M1438.4 613.4L1434.9 615.4M1420.2 575.2L1425.3 576.8M1420.2 575.2L1422.7 580.2M1404.5 596.2L1408.3 595.9M1438.2 576.9L1434.4 580.2M1416.2 597.7L1419.0 599.9M1425.3 576.8L1428.4 577.2M1433.8 584.3L1435.6 587.8M1425.3 576.8L1426.8 579.0M1432.1 586.9L1430.0 590.0M1398.5 606.5L1402.2 606.8M1414.9 619.0L1411.0 620.0M1435.6 587.8L1439.1 586.7M1435.6 587.8L1433.7 589.8M1406.2 590.1L1408.4 594.0M1411.0 620.0L1407.0 620.6M1434.0 598.1L1437.6 596.5M1422.5 608.2L1421.9 610.5M1400.0 573.0L1401.2 576.9M1404.1 572.6L1405.0 577.4M1430.2 610.4L1426.1 613.2M1414.7 579.9L1419.1 578.7M1414.7 579.9L1418.0 583.4M1428.3 604.1L1432.3 607.5M1426.6 606.7L1432.3 607.5M1403.0 570.3L1407.0 569.3M1426.6 606.7L1424.6 610.6M1421.8 591.3L1424.2 589.7M1444.8 587.0L1441.0 590.3M1406.1 582.8L1404.1 585.6M1415.9 600.0L1419.0 599.9M1427.1 572.2L1428.4 577.2M1445.6 599.1L1440.7 597.5M1397.2 593.1L1400.2 593.6M1402.8 593.9L1402.2 596.8M1431.0 616.6L1430.1 614.6M1420.2 575.2L1419.1 578.7M1442.6 600.5L1440.0 603.5M1433.8 584.3L1432.1 586.9M1398.4 600.7L1400.7 604.3M1411.0 569.5L1410.4 573.9M1410.3 579.0L1414.7 579.9M1410.3 579.0L1414.1 582.0M1431.5 594.4L1430.2 595.8M1397.3 597.1L1402.2 596.8M1400.0 573.0L1403.0 570.3M1416.7 589.0L1421.8 591.3M1424.9 603.8L1422.5 608.2M1397.8 605.3L1397.5 601.2M1404.1 572.6L1401.2 576.9M1415.2 585.7L1416.7 589.0M1411.0 600.1L1415.9 600.0M1428.3 604.1L1426.6 606.7M1397.5 601.2L1397.3 597.1M1401.7 584.1L1406.1 582.8M1415.8 594.3L1420.1 596.2M1414.2 597.4L1411.0 600.1M1408.9 611.8L1412.3 610.2M1427.1 572.2L1431.1 573.1M1408.9 611.8L1410.1 615.2" stroke="#0a1408" stroke-width="0.5" fill="none"/><path d="M1400.0 573.0L1402.9 570.3L1407.0 569.3L1411.8 569.5L1416.7 570.4L1421.3 571.4L1425.0 572.0L1427.8 572.3L1430.1 572.8L1432.1 573.4L1433.9 574.1L1435.4 575.0L1437.0 576.0L1438.5 577.2L1439.9 578.6L1441.1 580.1L1442.2 581.7L1443.2 583.3L1444.0 585.0L1444.7 586.7L1445.2 588.5L1445.6 590.4L1445.9 592.3L1446.0 594.1L1446.0 596.0L1445.8 597.9L1445.5 599.8L1445.1 601.7L1444.5 603.6L1443.8 605.3L1443.0 607.0L1442.2 608.6L1441.3 610.1L1440.3 611.5L1439.1 612.8L1437.7 614.0L1436.0 615.0L1433.9 615.8L1431.5 616.5L1428.8 617.1L1426.0 617.5L1423.0 617.8L1420.0 618.0L1416.7 618.6L1412.9 619.6L1409.0 620.4L1405.3 620.7L1402.2 619.7L1400.0 617.0L1398.6 611.7L1397.6 603.9L1397.2 595.0L1397.4 586.1L1398.3 578.3Z" fill="none" stroke="#111" stroke-width="0.8"/><path d="M1300.0 470.0L1302.4 463.0L1305.7 461.7L1309.6 464.1L1313.7 468.3L1317.6 472.6L1321.0 475.0L1323.8 475.7L1326.4 476.3L1328.9 476.8L1331.2 477.5L1333.6 478.5L1336.0 480.0L1338.5 482.0L1341.1 484.5L1343.6 487.2L1346.1 490.2L1348.6 493.1L1351.0 496.0L1353.3 498.8L1355.6 501.7L1357.8 504.6L1360.0 507.4L1362.0 510.3L1364.0 513.0L1365.9 515.6L1367.7 518.2L1369.4 520.8L1371.0 523.2L1372.5 525.6L1374.0 528.0L1375.3 530.3L1376.4 532.6L1377.4 534.8L1378.5 537.0L1379.6 539.0L1381.0 541.0L1382.6 542.8L1384.4 544.6L1386.3 546.2L1388.3 547.8L1390.2 549.4L1392.0 551.0L1393.8 552.7L1395.6 554.3L1397.3 556.0L1399.0 557.7L1400.6 559.3L1402.0 561.0L1403.3 562.6L1404.4 564.0L1405.4 565.4L1406.3 566.9L1407.2 568.8L1408.0 571.0L1408.8 573.8L1409.7 576.9L1410.5 580.4L1411.1 584.0L1411.7 587.6L1412.0 591.0L1412.1 594.4L1412.0 597.9L1411.7 601.4L1411.4 604.9L1410.9 608.1L1410.5 611.0L1410.1 613.6L1409.7 616.0L1409.3 618.1L1408.7 620.1L1408.0 622.1L1407.0 624.0L1405.8 625.9L1404.4 627.7L1402.8 629.4L1401.0 631.1L1399.1 632.6L1397.0 634.0L1394.6 635.2L1391.9 636.3L1389.0 637.2L1386.1 638.1L1383.4 639.0L1381.0 640.0L1379.0 641.0L1377.2 642.0L1375.6 643.1L1374.1 644.2L1372.6 645.5L1371.0 647.0L1369.3 648.8L1367.7 650.8L1366.0 653.0L1364.3 655.3L1362.7 657.6L1361.0 660.0L1359.4 662.4L1357.8 665.0L1356.2 667.6L1354.6 670.1L1352.8 672.7L1351.0 675.0L1349.0 677.2L1346.9 679.5L1344.6 681.6L1342.4 683.6L1340.1 685.4L1338.0 687.0L1336.0 688.4L1334.2 689.6L1332.4 690.7L1330.6 691.5L1328.5 692.1L1326.0 692.5L1323.1 692.6L1319.8 692.4L1316.2 691.9L1312.7 691.3L1309.2 690.7L1306.0 690.0L1302.8 690.2L1299.4 691.5L1296.1 692.7L1293.3 692.7L1291.1 690.5L1290.0 685.0L1290.3 676.0L1291.8 664.3L1294.0 650.3L1296.4 634.6L1298.6 617.7L1300.0 600.0L1300.3 579.4L1300.0 555.0L1299.3 529.4L1298.8 505.0L1298.9 484.4Z" fill="url(#stemg)"/><g clip-path="url(#stemclip)"><path d="M1357.0 589.3L1357.0 591.4L1356.8 593.6L1356.6 595.9L1356.2 598.4L1355.7 601.0L1354.9 603.9L1354.0 607.0L1352.9 610.5L1351.7 614.3L1350.5 618.3L1349.0 622.6L1347.4 627.0L1345.6 631.5L1343.6 636.0L1341.4 640.4L1338.8 644.8L1336.0 649.0L1332.8 653.2L1329.1 657.5L1325.0 661.8L1320.7 666.2L1316.2 670.5L1311.7 674.7L1307.1 678.7L1302.5 682.4L1298.1 685.9L1294.0 689.0L1290.0 691.7L1286.2 694.0" stroke="#000" stroke-width="16" fill="none" opacity="0.85" filter="url(#blr)"/></g><path d="M1375.9 618.4L1379.2 622.7M1340.6 607.5L1345.3 607.2M1329.0 577.0L1328.8 581.2M1329.5 546.0L1332.5 548.3M1378.7 562.7L1381.4 564.0M1383.3 586.5L1384.4 589.2M1323.2 475.6L1327.3 476.5M1409.2 575.0L1410.2 579.1M1381.1 617.6L1382.8 620.8M1299.4 625.0L1301.7 629.4M1340.0 549.7L1342.0 551.5M1368.6 610.4L1371.8 611.6M1332.7 497.8L1334.0 502.3M1360.5 582.5L1358.4 585.4M1326.6 530.2L1330.0 531.5M1311.7 572.0L1314.4 570.2M1297.5 666.5L1302.7 666.5M1410.2 579.1L1411.0 583.2M1343.3 682.7L1340.1 685.4M1305.2 625.0L1306.3 628.4M1331.0 630.1L1334.2 632.3M1371.8 611.6L1375.5 611.2M1319.2 505.0L1322.5 510.1M1387.6 553.1L1391.7 557.2M1394.0 614.6L1398.6 614.8M1349.8 494.5L1347.6 497.1M1304.1 509.4L1303.8 513.8M1385.8 585.7L1384.4 589.2M1299.8 550.0L1300.9 553.2M1313.0 537.0L1316.1 539.2M1303.0 593.1L1305.1 597.0M1376.3 532.4L1374.7 533.5M1311.9 672.4L1315.2 672.3M1340.1 685.4L1336.7 687.9M1301.8 635.6L1300.6 640.3M1336.4 629.2L1337.9 632.7M1299.3 608.9L1299.6 604.7M1340.1 511.5L1339.3 515.8M1398.6 614.8L1404.4 613.5M1314.1 622.6L1319.5 622.7M1374.4 541.5L1378.4 542.4M1329.0 595.6L1333.1 599.9M1298.9 644.1L1295.1 646.6M1299.6 604.7L1300.0 600.5M1301.7 519.8L1304.1 524.6M1345.4 512.0L1342.1 516.7M1319.5 622.7L1324.0 622.6M1332.1 652.0L1330.1 655.4M1363.3 560.7L1364.7 564.7M1353.1 548.6L1356.3 549.8M1357.6 600.8L1359.3 603.3M1339.7 562.7L1339.3 566.9M1351.4 624.1L1355.5 626.0M1394.0 566.4L1394.6 572.0M1309.1 662.6L1311.0 665.8M1356.3 549.8L1360.2 549.9M1312.0 555.4L1315.3 556.5M1385.5 602.6L1385.5 607.6M1299.1 520.5L1301.7 519.8M1350.4 632.3L1356.1 633.3M1302.3 527.5L1304.5 529.6M1308.5 479.2L1307.0 483.8M1318.3 488.4L1320.4 486.9M1367.8 529.6L1366.7 534.3M1382.4 629.7L1386.0 629.9M1396.9 566.0L1398.9 570.5M1365.1 514.6L1361.4 513.3M1317.3 574.9L1319.0 578.4M1315.3 556.5L1319.2 556.9M1388.6 602.6L1390.8 605.9M1299.8 611.4L1302.8 613.9M1343.3 682.7L1338.4 682.4M1313.3 480.1L1309.9 483.1M1371.8 530.1L1369.9 534.2M1325.7 675.4L1323.8 679.6M1311.6 533.3L1313.0 537.0M1319.4 635.7L1323.5 636.2M1300.3 575.2L1303.2 578.6M1321.2 573.4L1322.4 576.9M1363.3 560.7L1367.6 560.4M1304.4 611.9L1306.8 614.6M1327.5 614.1L1329.5 619.3M1319.5 499.2L1324.3 499.3M1347.9 506.4L1352.5 505.8M1383.6 571.9L1388.7 573.7M1362.9 640.0L1366.6 640.1M1333.2 690.2L1331.0 687.6M1353.4 577.7L1356.2 580.7M1304.5 567.2L1308.2 566.2M1332.5 614.8L1333.1 617.6M1352.5 505.8L1356.8 506.4M1354.1 545.7L1353.1 548.6M1373.4 621.2L1370.9 625.7M1384.3 582.5L1383.3 586.5M1335.9 571.8L1340.2 571.6M1347.8 495.0L1347.6 497.1M1404.9 617.2L1404.1 622.3M1308.3 516.2L1312.4 516.0M1365.6 549.4L1364.0 553.9M1308.4 500.5L1311.7 504.4M1388.1 582.3L1385.8 585.7M1298.9 486.8L1302.8 483.7M1368.5 574.5L1373.1 575.4M1329.6 625.9L1328.2 628.1M1313.3 524.2L1316.1 523.9M1327.0 635.2L1326.7 640.8M1323.4 555.1L1322.2 560.8M1314.4 618.6L1316.4 617.2M1335.3 509.7L1333.0 512.1M1305.7 588.4L1303.0 593.1M1328.5 593.8L1325.4 596.5M1373.1 575.4L1377.0 574.8M1400.0 577.9L1404.3 577.9M1359.3 639.2L1360.8 643.0M1376.5 632.5L1378.0 635.8M1318.9 512.4L1322.0 516.8M1300.3 579.5L1300.3 575.2M1360.5 628.5L1359.2 633.1M1347.9 506.4L1347.9 509.0M1322.4 644.7L1321.4 646.1M1332.6 637.2L1331.1 641.0M1309.2 529.8L1313.1 531.1M1305.1 517.1L1301.7 519.8M1344.0 620.7L1349.0 622.3M1357.8 650.3L1355.1 653.4M1324.9 559.1L1323.1 563.6M1328.3 555.9L1324.9 559.1M1331.1 593.4L1329.0 595.6M1354.3 596.5L1352.0 599.4M1404.3 577.9L1407.7 578.3M1381.0 632.4L1382.0 635.8M1319.1 584.6L1323.1 586.2M1324.0 512.8L1324.5 516.3M1328.7 644.7L1326.8 646.9M1328.4 519.7L1324.7 522.7M1308.5 675.8L1313.4 676.8M1312.1 651.5L1312.2 653.2M1328.9 559.5L1328.9 564.7M1363.7 656.1L1362.0 651.6M1300.3 579.5L1303.9 582.9M1358.5 596.9L1357.6 600.8M1299.0 512.1L1304.1 509.4M1382.6 600.1L1381.5 604.0M1323.1 586.2L1327.9 585.3M1331.9 520.0L1329.6 522.8M1315.9 649.9L1316.7 654.7M1370.0 564.4L1367.7 566.6M1333.0 683.2L1338.4 682.4M1315.6 593.6L1319.3 592.0M1338.0 660.9L1341.5 665.9M1386.5 600.1L1385.5 602.6M1408.4 604.2L1407.1 607.1M1354.4 523.8L1356.3 527.0M1350.0 588.2L1356.2 589.9M1327.7 526.4L1326.6 530.2M1354.0 666.1L1351.2 669.5M1303.4 490.4L1305.6 490.5M1303.5 633.4L1307.8 633.8M1293.9 679.9L1292.1 682.7M1314.4 570.2L1312.2 574.4M1307.1 462.6L1303.8 465.3M1303.7 606.9L1299.8 611.4M1351.5 530.0L1352.7 535.1M1377.3 592.3L1383.3 592.9M1406.4 567.0L1403.9 570.2M1344.5 498.8L1347.6 497.1M1309.3 669.7L1311.9 672.4M1297.5 680.1L1296.8 683.7M1319.7 571.7L1317.3 574.9M1349.8 636.3L1351.9 635.0M1345.9 574.9L1344.7 578.2M1329.7 610.7L1327.5 614.1M1316.8 692.0L1315.8 686.3M1339.5 538.1L1337.0 541.2M1405.7 596.1L1409.9 595.2M1308.5 675.8L1311.4 680.6M1318.4 508.9L1322.5 510.1M1349.9 574.5L1347.8 578.1M1311.6 642.3L1314.7 643.1M1323.6 540.6L1325.3 546.4M1312.1 614.1L1316.4 617.2M1356.8 614.9L1355.5 618.1M1408.0 570.9L1403.9 570.2M1300.2 587.9L1300.2 588.0M1324.3 499.3L1320.3 502.9M1322.5 602.6L1324.9 604.4M1301.3 653.3L1304.3 655.2M1369.9 521.5L1367.4 524.1M1333.4 515.0L1339.3 515.8M1363.4 582.6L1364.6 584.8M1382.9 576.9L1381.2 582.1M1298.0 649.6L1301.8 650.9M1385.6 618.5L1385.8 621.2M1337.5 546.1L1340.0 549.7M1338.9 523.6L1341.3 523.1M1367.2 580.8L1369.4 585.6M1391.0 585.8L1391.7 588.0M1295.0 658.5L1299.0 657.8M1331.4 477.6L1335.1 479.5M1348.4 548.4L1350.3 552.2M1360.0 624.5L1357.0 628.2M1341.3 523.1L1347.4 524.3M1333.7 531.4L1337.6 530.1M1394.5 585.1L1396.5 589.2M1353.8 555.9L1350.7 559.7M1307.3 593.7L1307.7 596.0M1411.6 587.3L1412.0 591.5M1336.7 534.9L1337.0 541.2M1313.0 626.3L1316.4 629.5M1348.5 512.1L1350.6 515.2M1307.0 555.3L1310.0 559.3M1389.5 628.6L1389.2 633.1M1337.6 530.1L1341.9 532.0M1300.1 596.3L1301.4 595.7M1320.5 538.6L1325.9 537.5M1312.2 593.6L1313.4 596.2M1370.7 618.8L1375.9 618.4M1333.2 690.2L1329.3 691.9M1384.1 597.4L1382.6 600.1M1307.9 644.3L1309.4 647.4M1343.9 628.8L1347.6 631.8M1314.3 636.8L1317.3 640.8M1310.0 559.3L1312.1 563.7M1357.0 520.4L1354.4 523.8M1339.5 675.7L1343.2 677.4M1411.0 583.2L1407.3 586.3M1338.5 482.0L1338.8 487.4M1325.9 537.5L1328.7 537.1M1337.8 595.3L1341.3 599.4M1311.8 520.0L1313.3 524.2M1307.9 469.0L1305.2 472.1M1348.0 563.7L1351.7 567.6M1392.0 571.9L1390.2 576.9M1362.0 520.7L1359.0 524.3M1297.1 629.8L1297.0 632.4M1300.1 592.1L1301.4 595.7M1304.9 662.2L1302.7 666.5M1315.8 686.3L1319.2 688.0M1341.5 485.0L1342.1 488.4M1299.3 528.9L1299.7 526.6M1340.5 650.4L1338.6 654.8M1372.2 560.0L1374.4 563.8M1353.1 526.9L1351.5 530.0M1308.7 546.3L1313.0 544.6M1366.7 599.0L1367.4 604.4M1328.9 686.3L1325.8 690.0M1328.2 628.1L1331.0 630.1M1315.4 519.4L1316.1 523.9M1324.6 656.8L1322.1 662.2M1350.3 552.2L1353.9 551.9M1301.6 533.2L1300.4 538.1M1411.6 587.3L1407.3 586.3M1356.3 527.0L1354.4 531.1M1313.7 472.7L1315.2 476.2M1361.3 659.6L1356.2 660.5M1298.8 499.4L1299.6 501.0M1400.6 567.7L1403.9 570.2M1365.6 549.4L1370.8 548.1M1313.1 567.7L1308.0 570.8M1369.1 600.5L1370.8 602.4M1391.9 602.3L1395.1 608.3M1359.2 633.1L1364.1 632.2M1309.8 527.2L1313.1 531.1M1305.0 640.4L1304.7 646.4M1335.6 664.1L1337.1 669.2M1316.7 478.7L1316.2 484.0M1372.2 525.1L1371.8 530.1M1299.2 524.7L1299.7 526.6M1333.4 675.3L1336.6 679.8M1323.4 555.1L1328.3 555.9M1397.3 603.3L1398.2 608.2M1307.7 611.1L1312.1 614.1M1377.0 574.8L1374.0 578.6M1321.9 479.7L1320.1 482.9M1359.2 610.7L1356.8 614.9M1367.6 538.6L1364.8 541.2M1324.6 600.7L1327.4 598.7M1302.8 483.7L1299.9 487.4M1339.5 675.7L1340.0 680.2M1331.0 573.9L1331.0 578.0M1291.4 667.3L1293.6 671.4M1372.2 560.0L1377.3 558.6M1312.3 611.2L1316.2 614.1M1310.9 491.8L1309.9 494.1M1374.4 528.7L1371.8 530.1M1386.1 613.9L1385.6 618.5M1350.2 604.4L1354.2 602.7M1349.8 619.2L1349.0 622.3M1361.1 577.9L1363.4 582.6M1313.1 567.7L1316.5 568.2M1339.3 614.6L1343.5 618.7M1341.5 610.9L1347.1 611.8M1305.6 546.2L1302.1 548.7M1307.2 499.2L1308.4 500.5M1349.8 494.5L1352.5 497.8M1347.1 491.3L1343.3 493.4M1305.8 620.6L1309.0 624.8M1378.3 606.4L1381.2 607.9M1374.2 549.3L1377.0 552.6M1367.2 544.3L1370.8 548.1M1392.8 582.2L1391.0 585.8M1335.1 479.5L1331.4 483.5M1308.8 588.2L1312.2 593.6M1345.6 570.4L1347.8 572.0M1410.3 612.5L1409.6 616.7M1338.8 626.0L1340.7 627.9M1331.3 556.5L1332.9 558.8M1338.5 482.0L1335.1 484.7M1314.9 512.0L1312.4 516.0M1337.1 593.1L1337.8 595.3M1409.6 616.7L1408.5 620.7M1308.5 690.5L1304.3 690.1M1328.7 511.9L1333.4 515.0M1368.6 629.1L1371.9 631.9M1378.0 548.7L1377.0 552.6M1397.9 633.4L1395.9 632.5M1331.7 643.5L1334.9 647.6M1312.6 587.8L1312.2 593.6M1362.6 597.1L1366.7 599.0M1366.6 640.1L1368.8 643.5M1304.3 690.1L1300.3 691.2M1300.2 571.0L1300.1 566.8M1332.9 558.8L1332.9 563.8M1339.8 636.2L1337.9 640.9M1312.4 516.0L1311.8 520.0M1335.3 555.7L1332.9 558.8M1304.7 646.4L1301.8 650.9M1381.2 582.1L1384.3 582.5M1339.8 592.9L1337.8 595.3M1303.9 582.9L1308.1 582.4M1326.5 625.9L1329.6 625.9M1300.1 566.8L1300.1 562.6M1340.4 519.2L1341.3 523.1M1337.1 560.3L1335.5 564.5M1348.5 657.4L1347.4 662.7M1336.7 644.4L1334.9 647.6M1296.3 654.8L1299.0 657.8M1331.4 483.5L1335.1 484.7M1367.8 596.5L1366.7 599.0M1394.1 598.9L1397.3 603.3M1299.7 474.2L1302.2 469.7M1302.8 657.6L1304.9 662.2M1357.0 628.2L1360.5 628.5M1310.2 475.8L1315.2 476.2M1378.7 562.7L1376.8 566.3M1335.1 526.7L1337.6 530.1M1300.7 669.1L1298.7 673.6M1354.0 658.4L1351.9 660.6M1359.3 603.3L1357.3 608.0M1324.8 650.5L1324.6 654.3M1323.0 593.7L1328.5 593.8M1338.3 494.6L1343.3 493.4M1310.7 606.5L1312.3 611.2M1339.9 528.2L1341.9 532.0M1304.7 668.6L1302.6 671.5M1310.9 491.8L1314.5 491.6M1344.3 488.1L1343.8 491.2M1385.5 607.6L1385.4 611.2M1341.5 575.4L1336.1 577.4M1360.2 507.8L1361.4 513.3M1302.1 680.3L1299.7 684.5M1350.8 597.5L1354.3 596.5M1296.8 683.7L1297.5 687.7M1301.3 479.0L1302.8 483.7M1353.8 555.9L1356.0 556.9M1337.2 611.7L1339.3 614.6M1378.1 536.2L1372.9 537.1M1295.2 642.3L1295.1 646.6M1346.4 536.9L1348.5 542.7M1403.9 570.2L1402.1 574.4M1337.9 640.9L1341.8 640.8M1299.6 501.0L1303.6 502.1M1306.3 678.8L1303.9 682.9M1357.1 635.1L1360.6 636.4M1358.2 573.7L1361.1 577.9M1353.0 614.6L1347.0 617.3M1320.4 486.9L1320.4 491.3M1302.5 564.5L1307.4 563.5M1364.7 613.5L1368.5 618.8M1329.0 577.0L1325.9 582.5M1318.3 648.2L1321.4 646.1M1329.5 546.0L1328.8 549.2M1325.2 510.1L1328.8 509.1M1318.3 642.7L1322.4 644.7M1390.2 576.9L1392.8 582.2M1381.1 617.6L1379.2 622.7M1341.7 566.6L1347.9 568.2M1370.0 613.2L1370.7 618.8M1332.7 497.8L1329.1 501.0M1290.2 679.9L1292.1 682.7M1334.7 544.1L1332.5 548.3M1309.2 654.1L1312.2 653.2M1342.1 516.7L1347.7 515.8M1310.6 585.0L1308.8 588.2M1305.2 625.0L1301.7 629.4M1374.7 569.9L1377.2 570.8M1335.4 497.0L1334.0 502.3M1312.2 653.2L1316.7 654.7M1312.8 662.7L1316.1 662.1M1347.4 524.3L1349.8 522.8M1377.1 581.3L1378.1 584.8M1312.2 551.6L1312.0 555.4M1325.7 610.2L1329.7 610.7M1336.4 629.2L1334.2 632.3M1323.2 505.1L1322.5 510.1M1337.3 589.0L1337.1 593.1M1352.5 497.8L1347.6 497.1M1316.1 662.1L1322.1 662.2M1403.0 586.3L1405.3 588.3M1361.3 555.1L1359.5 559.7M1364.5 591.4L1362.6 597.1M1348.9 533.5L1352.7 535.1M1319.4 635.7L1321.3 639.0M1356.7 512.3L1358.8 516.8M1333.0 670.2L1337.1 669.2M1360.8 643.0L1359.5 648.4M1363.3 560.7L1360.7 562.6M1346.2 531.3L1351.5 530.0M1323.5 636.2L1326.7 640.8M1316.4 559.3L1319.8 562.6M1361.4 513.3L1362.5 517.0M1367.6 560.4L1364.7 564.7M1309.1 662.6L1307.7 664.4M1347.9 651.5L1351.8 653.4M1326.0 588.0L1329.1 587.9M1331.4 657.5L1333.9 662.1M1311.5 548.5L1314.3 548.5M1396.9 566.0L1394.6 572.0M1312.8 662.7L1311.0 665.8M1353.8 650.8L1355.1 653.4M1388.6 602.6L1385.5 607.6M1300.0 470.0L1299.7 474.2M1354.0 592.8L1357.0 592.3M1311.9 604.3L1310.7 606.5M1351.7 567.6L1353.7 570.0M1352.5 497.8L1351.9 501.2M1324.8 480.3L1327.1 483.8M1358.9 551.8L1364.0 553.9M1311.6 533.3L1307.8 536.8M1366.7 527.5L1364.5 531.6M1299.6 541.6L1302.1 542.3M1304.4 611.9L1302.8 613.9M1340.1 685.4L1338.4 682.4M1379.8 596.0L1384.1 597.4M1328.8 481.0L1331.4 483.5M1314.9 535.5L1313.0 537.0M1305.1 597.0L1307.7 596.0M1372.9 537.1L1370.5 541.6M1343.2 677.4L1344.3 679.1M1332.5 614.8L1329.5 619.3M1295.9 638.2L1300.6 640.3M1368.6 610.4L1364.7 613.5M1320.4 491.3L1322.6 494.0M1333.1 599.9L1335.2 599.7M1374.9 538.9L1374.4 541.5M1329.3 691.9L1331.0 687.6M1357.7 576.9L1356.2 580.7M1360.3 617.6L1361.5 621.6M1322.4 606.7L1326.9 606.0M1313.0 544.6L1314.3 548.5M1394.0 614.6L1392.0 618.3M1308.4 500.5L1306.4 505.1M1306.2 520.9L1311.8 520.0M1390.1 621.9L1394.2 626.6M1400.4 581.0L1403.0 586.3M1326.9 606.0L1333.0 606.4M1350.7 611.1L1356.3 609.7M1314.2 497.1L1316.1 501.1M1355.1 501.0L1357.7 504.4M1314.1 622.6L1317.6 624.9M1381.5 549.8L1384.2 551.7M1375.7 546.6L1378.0 548.7M1299.0 482.6L1302.8 483.7M1404.4 582.9L1407.3 586.3M1302.6 504.2L1304.1 509.4M1356.3 609.7L1359.2 610.7M1319.5 499.2L1320.3 502.9M1378.4 613.9L1382.6 614.7M1303.5 633.4L1305.6 635.7M1326.1 573.4L1331.0 573.9M1385.7 548.7L1387.6 553.1M1293.6 671.4L1298.7 673.6M1322.7 589.5L1323.0 593.7M1381.0 632.4L1378.0 635.8M1324.0 512.8L1322.0 516.8M1382.6 614.7L1386.1 613.9M1341.6 643.5L1341.7 646.1M1349.8 636.3L1351.2 639.4M1313.4 596.2L1316.4 600.1M1344.0 555.5L1346.5 559.3M1314.3 679.7L1318.8 681.0M1298.1 621.5L1298.6 617.3M1349.4 593.8L1350.8 597.5M1301.8 622.4L1305.8 620.6M1315.9 649.9L1312.2 653.2M1296.3 692.6L1292.5 691.9M1343.7 643.5L1347.2 647.1M1346.5 559.3L1348.0 563.7M1341.3 599.4L1341.3 604.8M1313.7 646.1L1312.1 651.5M1338.0 660.9L1335.6 664.1M1299.0 482.6L1299.4 478.4M1376.0 595.9L1378.6 598.9M1334.0 625.2L1338.8 626.0M1303.8 465.3L1307.9 469.0M1300.0 558.4L1299.9 554.2M1350.0 520.4L1349.8 522.8M1357.9 657.7L1356.2 660.5M1387.4 563.4L1388.6 567.9M1340.0 549.7L1345.6 547.9M1304.3 655.2L1306.3 657.5M1299.9 487.4L1305.3 488.3M1404.1 600.4L1404.5 603.6M1366.0 629.6L1368.6 629.1M1296.5 634.0L1301.4 632.6M1296.2 662.2L1297.5 666.5M1381.4 566.0L1383.6 571.9M1344.8 526.1L1346.2 531.3M1309.3 669.7L1307.7 672.7M1293.6 671.4L1292.6 675.2M1304.5 567.2L1308.0 570.8M1299.8 550.0L1302.1 548.7M1318.7 607.4L1322.2 610.5M1308.5 675.8L1306.3 678.8M1301.8 635.6L1305.6 635.7M1305.6 574.9L1305.7 577.4M1313.9 669.9L1311.9 672.4M1346.5 559.3L1350.7 559.7M1323.6 540.6L1321.5 546.0M1314.3 679.7L1318.4 682.9M1335.9 571.8L1339.1 573.9M1312.6 691.3L1315.8 686.3M1330.6 488.3L1332.6 491.9M1361.3 555.1L1366.5 557.1M1332.1 505.0L1335.1 505.5M1347.1 611.8L1347.8 613.4M1355.7 538.0L1357.1 542.4M1347.4 640.4L1351.2 639.4M1336.1 577.4L1338.3 581.6M1387.4 563.4L1390.9 562.7M1368.5 574.5L1369.1 577.3M1312.1 563.7L1314.1 562.3M1373.0 614.3L1375.9 618.4M1359.6 536.8L1362.0 542.5M1351.2 639.4L1354.2 641.0M1337.5 546.1L1336.1 549.4M1326.8 646.9L1329.5 646.0M1367.2 580.8L1364.6 584.8M1290.3 675.7L1290.8 672.5M1319.7 571.7L1323.9 571.2M1400.0 577.9L1400.4 581.0M1388.7 618.1L1385.8 621.2M1344.5 498.8L1345.5 502.0M1329.5 646.0L1334.9 647.6M1372.2 525.1L1374.4 528.7M1343.3 545.5L1340.0 549.7M1344.0 620.7L1345.5 624.3M1394.5 585.1L1391.7 588.0M1323.9 571.2L1328.2 570.5M1349.9 574.5L1354.1 574.3M1319.1 584.6L1316.4 589.3M1313.0 626.3L1312.2 628.6M1318.4 508.9L1314.9 512.0M1320.9 653.5L1324.6 654.3M1365.6 549.4L1371.4 552.0M1354.1 574.3L1358.2 573.7M1380.2 539.8L1378.4 542.4M1343.9 628.8L1342.4 632.6M1314.3 636.8L1314.3 641.1M1361.1 526.3L1366.7 527.5M1332.1 505.0L1328.8 509.1M1393.7 629.9L1389.2 633.1M1327.9 622.9L1330.9 621.6M1326.9 661.5L1330.7 660.7M1315.6 593.6L1313.4 596.2M1352.1 673.6L1351.2 669.5M1331.4 477.6L1331.4 483.5M1387.7 577.5L1390.2 576.9M1307.2 512.9L1308.3 516.2M1349.3 628.0L1347.6 631.8M1341.5 485.0L1338.8 487.4M1360.0 624.5L1364.0 624.8M1378.0 635.8L1377.0 639.5M1372.2 560.0L1370.0 564.4M1342.4 595.6L1341.3 599.4M1368.8 643.5L1367.2 646.4M1307.7 584.1L1310.6 585.0M1315.4 519.4L1313.3 524.2M1299.3 528.9L1301.6 533.2M1313.7 472.7L1310.2 475.8M1389.5 628.6L1393.7 629.9M1377.3 558.6L1374.4 563.8M1310.0 524.7L1307.7 526.9M1322.1 662.2L1323.2 665.7M1369.1 600.5L1367.4 604.4M1331.0 687.6L1325.8 690.0M1334.9 588.3L1337.3 589.0M1412.0 591.5L1409.9 595.2M1309.8 527.2L1309.2 529.8M1330.6 488.3L1333.7 486.3M1341.0 658.1L1341.6 662.2M1393.7 629.9L1398.1 629.7M1359.0 663.1L1356.2 660.5M1404.3 567.6L1403.9 570.2M1304.5 529.6L1301.6 533.2M1337.1 669.2L1337.4 672.0M1397.3 603.3L1395.1 608.3M1360.7 592.0L1364.5 591.4M1328.3 496.9L1332.7 497.8M1349.2 606.5L1350.7 611.1M1339.5 675.7L1336.6 679.8M1301.5 570.2L1301.6 573.9M1332.6 637.2L1334.9 636.1M1331.0 573.9L1329.0 577.0M1341.5 668.2L1339.3 673.2M1300.2 495.4L1303.7 494.1M1312.3 611.2L1312.1 614.1M1388.4 595.3L1392.0 597.3M1303.7 606.9L1307.7 611.1M1293.3 654.8L1296.3 654.8M1293.9 650.7L1295.1 646.6M1301.6 508.3L1304.1 509.4M1375.5 611.2L1378.4 613.9M1324.6 535.1L1320.5 538.6M1334.0 573.3L1331.0 578.0M1307.5 540.6L1308.7 546.3M1338.6 502.6L1343.0 502.0M1339.3 614.6L1338.9 618.1M1392.0 597.3L1397.3 596.9M1304.4 603.1L1309.4 603.4M1305.8 620.6L1305.2 625.0M1316.4 517.1L1322.0 516.8M1366.1 578.7L1363.4 582.6M1355.2 646.9L1359.5 648.4M1367.2 544.3L1365.6 549.4M1368.5 618.8L1369.9 621.8M1309.4 603.4L1311.9 604.3M1333.0 606.4L1337.2 608.2M1312.0 621.5L1309.0 624.8M1322.0 516.8L1324.5 516.3M1324.3 499.3L1329.1 501.0M1338.8 626.0L1336.4 629.2M1321.8 523.1L1324.7 522.7M1350.4 580.8L1352.1 584.3M1332.6 491.9L1333.0 493.5M1321.5 546.0L1324.3 549.1M1359.5 648.4L1363.5 646.6M1316.3 471.2L1319.4 473.9M1370.7 618.8L1373.4 621.2M1302.1 548.7L1300.9 553.2M1398.7 621.7L1400.4 625.0M1337.2 608.2L1340.6 607.5M1332.5 548.3L1334.0 551.5M1341.7 625.5L1340.7 627.9M1324.7 522.7L1329.6 522.8M1368.6 629.1L1367.4 633.2M1356.8 506.4L1354.8 509.9M1320.3 502.9L1319.2 505.0M1378.1 584.8L1379.3 589.2M1318.5 531.9L1322.6 532.0M1351.8 653.4L1355.1 653.4M1351.9 660.6L1356.2 660.5M1408.0 570.9L1409.2 575.0M1302.0 584.3L1305.7 588.4M1364.0 611.8L1368.6 610.4M1380.2 551.4L1382.5 556.2M1373.2 629.5L1371.9 631.9M1322.6 532.0L1326.6 530.2M1312.2 633.8L1314.3 636.8M1405.3 588.3L1407.1 593.0M1316.4 589.3L1312.2 593.6M1305.5 552.8L1307.0 555.3M1302.6 671.5L1307.7 672.7M1346.4 679.9L1343.3 682.7M1329.1 587.9L1331.1 593.4M1316.3 504.5L1318.4 508.9M1330.9 585.3L1336.4 584.1M1390.9 613.3L1394.0 614.6M1337.1 560.3L1332.9 563.8M1307.8 536.8L1313.0 537.0M1296.3 654.8L1295.0 658.5M1357.1 635.1L1359.3 639.2M1350.7 559.7L1353.1 563.4M1322.0 596.4L1324.6 600.7M1307.7 672.7L1311.9 672.4M1321.4 646.1L1324.8 650.5M1323.8 679.6L1327.8 680.0M1394.1 598.9L1391.9 602.3M1357.0 592.3L1358.5 596.9M1337.0 511.7L1333.4 515.0M1358.5 588.6L1362.9 588.6M1345.6 518.8L1341.3 523.1M1324.8 650.5L1320.9 653.5M1301.3 653.3L1299.0 657.8M1352.6 643.7L1355.2 646.9M1354.1 558.6L1357.1 562.8M1370.5 541.6L1374.4 541.5M1347.9 600.3L1350.2 604.4M1327.8 680.0L1331.9 679.9M1386.2 591.9L1390.0 593.5M1339.9 528.2L1337.6 530.1M1348.4 548.4L1353.1 548.6M1394.6 564.0L1396.9 566.0M1316.7 668.9L1319.8 672.3M1375.9 602.4L1378.3 606.4M1351.9 660.6L1348.0 664.9M1382.2 639.5L1378.0 635.8M1296.8 683.7L1295.0 686.0M1347.1 491.3L1343.8 491.2M1317.5 676.4L1318.8 681.0M1388.6 567.9L1392.0 571.9M1322.1 669.6L1323.1 672.5M1307.0 555.3L1312.0 555.4M1358.2 573.7L1357.7 576.9M1302.6 671.5L1301.3 675.1M1341.5 610.9L1339.3 614.6M1297.5 687.7L1297.0 690.3M1299.4 478.4L1301.3 479.0M1306.0 600.8L1312.0 599.0M1379.3 629.4L1382.4 629.7M1312.2 574.4L1315.2 579.1M1352.7 535.1L1349.7 538.7M1354.1 558.6L1359.5 559.7M1390.2 576.9L1388.1 582.3M1323.8 679.6L1325.3 683.7M1345.6 570.4L1345.9 574.9M1370.0 613.2L1368.5 618.8M1338.8 487.4L1340.3 490.4M1333.8 604.0L1339.0 602.6M1306.8 533.3L1307.8 536.8M1347.7 544.4L1348.4 548.4M1344.7 578.2L1347.1 581.8M1359.5 559.7L1363.3 560.7M1337.0 541.2L1334.7 544.1M1394.6 564.0L1398.5 563.6M1324.1 614.4L1325.0 618.8M1338.5 482.0L1341.5 485.0M1398.0 617.2L1398.7 621.7M1362.1 608.2L1366.3 605.9M1350.3 545.2L1353.1 548.6M1377.1 581.3L1374.0 585.0M1328.2 570.5L1333.1 571.0M1341.5 485.0L1344.3 488.1M1412.0 595.8L1411.8 600.0M1339.2 499.0L1334.0 502.3M1320.7 625.2L1324.4 629.8M1366.3 605.9L1370.3 606.9M1388.9 610.6L1392.7 611.9M1299.6 501.0L1302.6 504.2M1381.2 582.1L1378.1 584.8M1374.9 643.6L1377.0 639.5M1403.0 586.3L1401.4 588.3M1333.1 571.0L1335.9 571.8M1300.0 600.5L1302.9 601.1M1411.8 600.0L1411.4 604.2M1325.2 692.5L1320.9 692.4M1326.5 625.9L1328.2 628.1M1353.9 629.2L1356.1 633.3M1339.4 505.2L1343.2 509.3M1360.2 549.9L1358.9 551.8M1392.7 611.9L1397.5 611.1M1304.0 617.4L1308.7 618.6M1398.1 629.7L1395.9 632.5M1325.2 510.1L1324.0 512.8M1407.3 586.3L1405.3 588.3M1364.1 575.3L1368.5 574.5M1320.9 692.4L1316.8 692.0M1357.0 628.2L1359.2 633.1M1343.7 506.5L1347.9 509.0M1323.5 636.2L1321.3 639.0M1361.4 513.3L1358.8 516.8M1308.7 618.6L1314.4 618.6M1319.2 556.9L1316.4 559.3M1335.5 622.4L1339.4 620.9M1323.0 593.7L1322.0 596.4M1317.4 546.3L1321.5 546.0M1379.2 559.7L1381.4 564.0M1396.1 578.7L1400.0 577.9M1382.5 556.2L1385.2 560.5M1296.8 683.7L1299.7 684.5M1300.3 583.7L1300.3 579.5M1323.8 520.7L1324.7 522.7M1339.4 620.9L1344.0 620.7M1353.8 650.8L1351.8 653.4M1368.1 624.5L1370.9 625.7M1350.8 597.5L1347.9 600.3M1385.2 560.5L1387.4 563.4M1374.2 549.3L1378.0 548.7M1378.6 598.9L1381.5 604.0M1316.4 584.9L1319.1 584.6M1306.0 650.6L1309.2 654.1M1308.6 473.4L1313.7 472.7M1320.0 527.6L1322.6 532.0M1302.9 601.1L1304.4 603.1M1370.9 625.7L1375.1 625.7M1316.1 523.9L1314.4 525.9M1330.7 660.7L1333.2 666.0M1403.9 607.8L1404.4 613.5M1331.3 556.5L1335.3 555.7M1404.5 603.6L1407.1 607.1M1310.5 465.0L1311.2 469.4M1328.8 481.0L1327.1 483.8M1338.8 487.4L1342.1 488.4M1329.5 603.5L1333.0 606.4M1297.0 632.4L1301.4 632.6M1409.6 616.7L1404.9 617.2M1313.1 531.1L1311.6 533.3M1346.4 669.4L1345.1 671.6M1322.2 610.5L1324.1 614.4M1295.9 638.2L1297.4 640.7M1335.4 497.0L1339.2 499.0M1316.2 484.0L1314.2 488.2M1346.4 676.8L1344.3 679.1M1311.7 572.0L1307.9 575.3M1339.8 636.2L1343.8 635.5M1332.3 534.8L1332.8 538.2M1341.5 575.4L1344.7 578.2M1351.2 669.5L1348.4 671.4M1385.2 560.5L1388.9 560.0M1292.0 663.1L1296.2 662.2M1361.3 659.6L1358.4 655.0M1373.9 591.4L1377.3 592.3M1339.2 499.0L1344.5 498.8M1308.6 508.3L1312.3 510.2M1343.9 659.1L1345.3 664.3M1314.1 541.4L1317.4 546.3M1374.0 578.6L1377.1 581.3M1325.7 610.2L1324.1 614.4M1324.5 567.7L1330.2 567.3M1353.0 614.6L1355.5 618.1M1312.3 510.2L1318.4 508.9M1314.1 622.6L1313.0 626.3M1324.5 516.3L1328.6 516.0M1368.8 649.4L1367.2 646.4M1356.7 666.7L1354.0 666.1M1375.7 546.6L1374.2 549.3M1363.5 646.6L1367.2 646.4M1404.4 582.9L1403.0 586.3M1356.8 569.7L1361.1 571.4M1319.5 499.2L1316.1 501.1M1319.5 622.7L1317.6 624.9M1328.6 516.0L1333.4 515.0M1303.5 633.4L1301.8 635.6M1329.6 522.8L1334.9 522.6M1385.7 548.7L1384.2 551.7M1299.0 613.1L1302.8 613.9M1379.3 545.1L1378.0 548.7M1360.5 582.5L1361.2 584.4M1355.1 653.4L1358.4 655.0M1322.7 589.5L1319.3 592.0M1361.1 571.4L1365.7 570.3M1351.4 624.1L1349.3 628.0M1334.9 522.6L1338.9 523.6M1349.8 636.3L1347.4 640.4M1304.1 509.4L1307.2 512.9M1329.1 501.0L1327.1 505.3M1344.0 555.5L1343.2 559.4M1412.0 591.5L1409.1 588.2M1354.8 509.9L1353.2 512.6M1385.8 585.7L1389.7 587.9M1326.0 588.0L1323.0 593.7M1349.4 593.8L1346.0 597.0M1394.1 574.6L1397.0 575.3M1313.7 581.0L1316.3 580.5M1301.8 635.6L1305.0 640.4M1340.1 511.5L1342.1 516.7M1382.4 629.7L1381.0 632.4M1343.7 643.5L1341.7 646.1M1308.6 508.3L1310.9 512.0M1348.1 555.6L1346.5 559.3M1330.0 531.5L1333.7 531.4M1305.0 640.4L1307.9 644.3M1302.7 666.5L1307.7 664.4M1376.0 595.9L1374.4 599.2M1316.3 580.5L1321.5 581.2M1298.9 644.1L1300.1 647.0M1341.1 585.8L1344.9 586.0M1345.4 512.0L1347.7 515.8M1349.3 643.9L1347.2 647.1M1332.1 652.0L1333.6 655.2M1316.1 539.2L1320.5 538.6M1304.3 655.2L1302.8 657.6M1396.4 625.6L1400.4 625.0M1315.2 672.3L1319.8 672.3M1312.1 563.7L1308.2 566.2M1379.8 596.0L1378.6 598.9M1404.1 600.4L1401.5 602.4M1344.9 586.0L1349.7 585.7M1307.9 465.4L1307.9 469.0M1368.8 589.5L1371.0 588.4M1354.0 520.5L1349.8 522.8M1296.5 634.0L1297.0 632.4M1337.0 651.7L1338.6 654.8M1320.4 491.3L1323.8 490.2M1309.2 654.1L1306.3 657.5M1304.5 567.2L1301.5 570.2M1336.6 679.8L1340.0 680.2M1298.1 621.5L1301.8 622.4M1407.1 600.3L1404.5 603.6M1297.5 666.5L1300.7 669.1M1318.7 607.4L1318.0 611.7M1371.0 588.4L1376.1 588.3M1349.5 527.9L1346.2 531.3M1305.2 472.1L1307.5 476.9M1308.2 566.2L1308.0 570.8M1361.1 600.6L1364.4 604.2M1314.3 679.7L1312.7 683.9M1335.9 571.8L1334.0 573.3M1299.7 545.8L1302.1 548.7M1312.6 691.3L1311.0 686.5M1311.9 672.4L1313.4 676.8M1322.4 606.7L1322.2 610.5M1313.3 480.1L1316.2 484.0M1410.9 608.3L1407.1 607.1M1399.7 593.2L1404.6 592.6M1371.8 530.1L1374.7 533.5M1325.7 675.4L1327.8 680.0M1360.2 549.9L1365.6 549.4M1330.5 668.1L1331.3 672.3M1340.2 571.6L1339.1 573.9M1368.5 574.5L1366.1 578.7M1309.4 683.7L1306.5 687.0M1350.7 611.1L1347.8 613.4M1296.3 692.6L1297.0 690.3M1359.6 536.8L1357.1 542.4M1316.4 600.1L1318.2 599.8M1303.4 490.4L1303.7 494.1M1314.4 618.6L1312.0 621.5M1338.7 509.1L1343.2 509.3M1319.2 556.9L1323.4 555.1M1361.6 533.9L1359.6 536.8M1373.1 575.4L1369.1 577.3M1331.7 643.5L1336.7 644.4M1400.0 577.9L1396.5 581.1M1378.4 613.9L1375.9 618.4M1341.3 604.8L1347.6 603.5M1326.1 573.4L1329.0 577.0M1290.9 671.5L1290.8 672.5M1354.5 516.7L1358.8 516.8M1329.3 691.9L1325.8 690.0M1344.0 620.7L1341.7 625.5M1344.0 542.9L1343.3 545.5M1384.3 582.5L1385.8 585.7M1354.1 545.7L1356.3 549.8M1404.3 577.9L1400.4 581.0M1318.9 649.9L1324.8 650.5M1344.3 488.1L1347.1 491.3M1305.6 490.5L1303.7 494.1M1300.2 571.0L1301.6 573.9M1370.3 606.9L1372.8 606.0M1359.4 545.2L1360.2 549.9M1359.0 524.3L1363.0 524.2M1388.1 582.3L1391.0 585.8M1314.8 657.5L1320.5 657.8M1347.1 491.3L1349.8 494.5M1411.4 604.2L1410.9 608.3M1301.8 622.4L1305.2 625.0M1329.6 625.9L1331.0 630.1M1372.8 606.0L1378.3 606.4M1370.8 548.1L1371.4 552.0M1397.5 611.1L1400.3 610.1M1363.0 524.2L1367.4 524.1M1335.3 509.7L1337.0 511.7M1354.4 531.1L1358.5 529.9M1305.7 588.4L1307.3 593.7M1328.4 666.2L1333.2 666.0M1410.9 608.3L1410.3 612.5M1316.8 692.0L1312.6 691.3M1334.0 625.2L1336.4 629.2M1347.9 506.4L1350.4 508.5M1360.5 628.5L1364.1 632.2M1332.6 637.2L1334.3 639.4M1305.1 517.1L1306.2 520.9M1328.3 555.9L1328.9 559.5M1338.7 509.1L1340.1 511.5M1358.5 529.9L1364.5 531.6M1342.9 538.6L1346.4 536.9M1331.1 593.4L1333.4 596.9M1339.3 673.2L1345.1 671.6M1312.6 691.3L1308.5 690.5M1324.0 512.8L1328.6 516.0M1366.0 629.6L1367.4 633.2M1352.5 505.8L1354.8 509.9M1328.7 644.7L1329.5 646.0M1328.9 559.5L1332.9 563.8M1316.4 617.2L1322.5 617.4M1406.7 624.5L1404.1 622.3M1354.5 516.7L1350.0 520.4M1295.2 642.3L1298.9 644.1M1346.4 536.9L1349.7 538.7M1333.6 655.2L1331.4 657.5M1358.5 596.9L1361.1 600.6M1325.3 546.4L1329.5 546.0M1300.3 575.2L1300.2 571.0M1334.9 636.1L1334.3 639.4M1331.9 520.0L1334.9 522.6M1308.3 516.2L1306.2 520.9M1370.0 564.4L1372.2 566.3M1349.0 622.3L1353.2 621.3M1362.0 651.6L1358.4 655.0M1329.5 546.0L1334.7 544.1M1393.9 559.5L1394.6 564.0M1412.0 595.8L1409.9 595.2M1381.5 549.8L1385.7 548.7M1386.5 600.1L1388.6 602.6M1309.4 683.7L1312.7 683.9M1349.3 628.0L1353.9 629.2M1303.3 475.0L1307.5 476.9M1349.2 606.5L1347.1 611.8M1327.7 526.4L1330.0 531.5M1379.9 626.3L1385.2 625.4M1341.5 668.2L1337.4 672.0M1314.4 570.2L1317.3 574.9M1307.1 462.6L1307.9 465.4M1391.6 599.4L1391.9 602.3M1303.7 606.9L1304.4 611.9M1333.1 527.2L1333.7 531.4M1375.5 611.2L1373.0 614.3M1297.5 680.1L1299.7 684.5M1319.7 571.7L1321.2 573.4M1344.0 555.5L1348.1 555.6M1307.1 606.1L1307.7 611.1M1329.7 610.7L1332.5 614.8M1316.8 692.0L1319.2 688.0M1293.9 650.7L1296.3 654.8M1305.6 490.5L1310.9 491.8M1316.3 471.2L1315.2 476.2M1323.2 482.9L1320.4 486.9M1339.2 534.3L1342.9 538.6M1349.9 574.5L1353.4 577.7M1292.1 682.7L1295.0 686.0M1393.9 559.5L1395.9 559.2M1333.9 609.7L1335.9 614.8M1356.8 614.9L1360.3 617.6M1332.6 491.9L1329.3 495.4M1355.1 501.0L1352.5 505.8M1370.8 602.4L1375.9 602.4M1370.7 618.8L1369.9 621.8M1382.9 576.9L1384.3 582.5M1335.0 568.4L1339.3 566.9M1361.7 614.4L1362.9 618.1M1299.0 482.6L1301.3 479.0M1328.3 496.9L1329.1 501.0M1290.0 684.1L1292.1 682.7M1362.7 511.2L1365.1 514.6M1357.7 504.4L1356.8 506.4M1335.9 490.6L1333.0 493.5M1327.9 622.9L1329.6 625.9M1320.3 502.9L1316.3 504.5M1398.2 608.2L1403.9 607.8M1387.7 577.5L1388.1 582.3M1404.1 622.3L1400.4 625.0M1365.7 570.3L1368.6 569.6M1401.2 630.9L1397.9 633.4M1360.0 624.5L1360.5 628.5M1312.2 633.8L1310.5 636.7M1305.5 552.8L1301.7 557.2M1382.2 639.5L1377.0 639.5M1338.6 502.6L1339.4 505.2M1316.2 614.1L1319.5 615.2M1353.8 555.9L1354.1 558.6M1307.7 584.1L1305.7 588.4M1316.3 504.5L1312.3 510.2M1368.6 569.6L1374.7 569.9M1329.1 587.9L1328.5 593.8M1397.0 575.3L1402.1 574.4M1290.7 688.2L1290.0 684.1M1318.3 631.6L1314.3 636.8M1357.1 635.1L1354.2 641.0M1309.7 553.4L1307.0 555.3M1343.5 618.7L1347.0 617.3M1321.4 646.1L1318.9 649.9M1334.9 588.3L1331.1 593.4M1357.0 592.3L1354.3 596.5M1402.1 574.4L1405.0 573.5M1384.1 597.4L1386.5 600.1M1321.5 581.2L1325.9 582.5M1290.7 688.2L1295.0 686.0M1290.0 684.1L1290.2 679.9M1324.9 668.6L1330.5 668.1M1360.6 636.4L1359.3 639.2M1352.6 643.7L1350.5 646.8M1299.8 550.0L1299.7 545.8M1356.0 556.9L1354.1 558.6M1333.4 515.0L1331.9 520.0M1314.3 641.1L1314.7 643.1M1360.7 592.0L1358.5 596.9M1325.9 582.5L1328.8 581.2M1353.2 512.6L1354.5 516.7M1356.6 644.1L1355.2 646.9M1362.0 520.7L1363.0 524.2M1299.7 545.8L1299.6 541.6M1304.9 662.2L1307.7 664.4M1304.3 480.8L1308.5 479.2M1359.5 559.7L1357.1 562.8M1340.5 650.4L1341.4 654.8M1316.7 654.7L1320.5 657.8M1316.4 589.3L1322.7 589.5M1388.4 595.3L1386.5 600.1M1352.1 584.3L1358.4 585.4M1324.6 656.8L1326.9 661.5M1308.5 479.2L1313.3 480.1M1398.5 563.6L1396.9 566.0M1356.3 527.0L1358.5 529.9M1322.1 669.6L1319.8 672.3M1344.6 650.4L1345.8 653.8M1301.7 629.4L1306.3 628.4M1345.8 592.9L1349.4 593.8M1313.1 567.7L1311.7 572.0M1304.4 603.1L1303.7 606.9M1311.2 469.4L1308.6 473.4M1379.3 589.2L1384.4 589.2M1314.3 636.8L1319.4 635.7M1332.6 491.9L1335.9 490.6M1316.5 568.2L1314.4 570.2M1334.2 632.3L1337.9 632.7M1323.8 679.6L1322.2 684.0M1345.6 570.4L1341.5 575.4M1377.0 574.8L1377.8 577.3M1333.0 606.4L1329.7 610.7M1321.9 479.7L1323.2 482.9M1359.2 610.7L1361.7 614.4M1306.8 533.3L1304.1 536.9M1367.6 538.6L1370.5 541.6M1359.3 639.2L1362.9 640.0M1302.8 483.7L1305.3 488.3M1320.3 502.9L1325.4 502.0M1327.8 680.0L1325.3 683.7M1369.9 534.2L1372.9 537.1M1378.0 635.8L1382.0 635.8M1347.8 572.0L1345.9 574.9M1318.4 682.9L1315.8 686.3M1310.9 491.8L1313.1 494.8M1386.1 613.9L1388.7 618.1M1307.0 483.8L1309.9 488.1M1350.3 545.2L1348.4 548.4M1339.4 646.1L1341.7 646.1M1347.9 509.0L1350.4 508.5M1353.0 541.3L1354.1 545.7M1341.6 643.5L1343.7 643.5M1380.5 575.2L1377.8 577.3M1327.3 476.5L1328.8 481.0M1305.6 546.2L1307.3 547.9M1363.7 566.9L1367.7 566.6M1314.5 491.6L1316.8 495.6M1347.1 491.3L1347.8 495.0M1392.8 582.2L1394.5 585.1M1326.7 651.1L1332.1 652.0M1326.5 625.9L1324.4 629.8M1330.9 585.3L1329.1 587.9M1394.6 572.0L1398.9 570.5M1303.6 502.1L1302.6 504.2M1356.3 622.0L1355.5 626.0M1301.7 519.8L1306.2 520.9M1396.5 581.1L1398.3 584.2M1334.0 551.5L1331.3 556.5M1357.0 628.2L1356.1 633.3M1343.7 506.5L1343.2 509.3M1358.5 588.6L1357.0 592.3M1319.0 578.4L1322.4 576.9M1378.0 548.7L1380.2 551.4M1299.7 526.6L1302.3 527.5M1339.2 551.4L1335.3 555.7M1364.5 531.6L1367.8 529.6M1382.5 556.2L1379.2 559.7M1301.4 632.6L1301.8 635.6M1299.1 520.5L1300.2 516.4M1339.8 636.2L1341.8 640.8M1335.3 555.7L1337.1 560.3M1290.8 672.5L1293.6 671.4M1304.7 646.4L1306.0 650.6M1385.2 560.5L1381.4 564.0M1367.8 529.6L1371.8 530.1M1386.2 555.4L1385.2 560.5M1312.4 516.0L1315.4 519.4M1349.7 538.7L1355.7 538.0M1339.8 592.9L1342.4 595.6M1341.8 640.8L1343.7 643.5M1402.5 618.9L1404.9 617.2M1302.9 601.1L1300.5 604.7M1395.5 554.3L1391.7 557.2M1343.8 635.5L1347.4 640.4M1337.1 560.3L1339.7 562.7M1336.7 644.4L1339.4 646.1M1339.6 556.3L1343.2 559.4M1316.4 517.1L1318.9 519.1M1311.4 680.6L1314.3 679.7M1355.7 538.0L1359.6 536.8M1346.4 679.9L1344.3 679.1M1367.8 596.5L1369.1 600.5M1306.0 600.8L1304.4 603.1M1329.5 603.5L1326.9 606.0M1383.3 586.5L1385.8 585.7M1354.0 658.4L1356.2 660.5M1378.7 562.7L1381.4 566.0M1332.5 548.3L1336.1 549.4M1333.9 662.1L1333.2 666.0M1337.5 546.1L1343.3 545.5M1372.7 595.2L1374.4 599.2M1341.7 566.6L1340.2 571.6M1333.8 604.0L1333.0 606.4M1304.7 668.6L1307.7 672.7M1305.5 552.8L1309.7 553.4M1399.6 600.1L1401.5 602.4M1401.6 596.2L1405.7 596.1M1374.7 569.9L1373.1 575.4M1378.1 536.2L1374.9 538.9M1362.1 608.2L1359.2 610.7M1336.7 534.9L1332.8 538.2M1325.4 596.5L1329.0 595.6M1306.3 678.8L1309.4 683.7M1328.2 570.5L1331.0 573.9M1353.0 614.6L1349.8 619.2M1315.0 606.3L1318.0 611.7M1317.9 603.1L1322.5 602.6M1388.9 610.6L1386.1 613.9M1319.4 540.6L1317.4 546.3M1352.0 599.4L1357.6 600.8M1311.4 680.6L1312.7 683.9M1345.3 607.2L1349.2 606.5M1304.0 617.4L1305.8 620.6M1340.3 490.4L1338.3 494.6M1354.5 670.2L1354.0 666.1M1381.5 604.0L1385.5 602.6M1310.6 585.0L1312.6 587.8M1357.8 650.3L1362.0 651.6M1367.5 518.0L1369.9 521.5M1343.8 491.2L1343.3 493.4M1335.5 622.4L1338.8 626.0M1312.2 551.6L1315.3 556.5M1323.1 527.2L1327.7 526.4M1337.3 589.0L1339.8 592.9M1323.2 505.1L1325.2 510.1M1339.2 499.0L1343.0 502.0M1369.9 521.5L1372.2 525.1M1308.6 508.3L1307.2 512.9M1394.2 635.4L1390.2 636.8M1368.1 624.5L1368.6 629.1M1305.0 640.4L1301.8 642.9M1318.2 553.7L1319.2 556.9M1361.3 555.1L1363.3 560.7M1316.4 584.9L1312.6 587.8M1320.2 534.4L1324.6 535.1M1342.8 588.1L1345.8 592.9M1364.5 591.4L1367.8 596.5M1404.4 613.5L1407.9 613.6M1312.3 510.2L1310.9 512.0M1390.2 636.8L1386.2 638.1M1309.7 639.4L1307.9 644.3M1290.2 679.9L1290.3 675.7M1325.0 632.0L1323.5 636.2M1360.8 643.0L1363.5 646.6M1377.8 577.3L1382.9 576.9M1366.5 557.1L1367.6 560.4M1382.9 543.1L1381.5 549.8M1370.5 592.1L1372.7 595.2M1324.0 622.6L1327.9 622.9M1337.0 651.7L1333.6 655.2M1290.3 675.7L1290.9 671.5M1370.3 636.7L1366.6 640.1M1367.6 560.4L1370.0 564.4M1365.1 643.9L1367.2 646.4M1342.1 516.7L1340.4 519.2M1334.9 647.6L1332.1 652.0M1297.5 666.5L1297.3 667.8M1302.2 469.7L1307.9 469.0M1397.3 596.9L1399.6 600.1M1355.5 626.0L1360.0 624.5M1305.2 472.1L1303.3 475.0M1299.5 537.3L1299.4 533.1M1312.8 662.7L1315.8 664.1M1361.1 600.6L1359.3 603.3M1311.9 672.4L1308.5 675.8M1367.2 544.3L1372.2 545.0M1320.4 486.9L1324.9 486.5M1311.9 604.3L1315.0 606.3M1308.6 473.4L1307.5 476.9M1386.0 629.9L1389.5 628.6M1304.1 524.6L1302.3 527.5M1316.1 662.1L1318.2 664.9M1366.7 527.5L1367.8 529.6M1316.7 478.7L1321.9 479.7M1330.5 668.1L1327.3 671.9M1324.5 567.7L1328.2 570.5M1334.0 551.5L1339.2 551.4M1340.6 607.5L1341.5 610.9M1314.9 535.5L1316.1 539.2M1323.5 636.2L1327.0 635.2M1369.0 527.0L1371.8 530.1M1340.3 490.4L1343.8 491.2M1333.0 670.2L1331.3 672.3M1367.6 560.4L1372.2 560.0M1301.3 466.0L1303.8 465.3M1342.4 632.6L1347.6 631.8M1356.8 569.7L1358.2 573.7M1292.5 691.9L1297.0 690.3M1325.3 683.7L1328.9 686.3M1382.5 556.2L1386.2 555.4M1368.6 610.4L1370.0 613.2M1326.1 573.4L1322.4 576.9M1366.6 640.1L1372.7 638.8M1374.9 538.9L1378.4 542.4M1316.2 484.0L1320.4 486.9M1329.1 501.0L1334.0 502.3M1308.2 566.2L1313.1 567.7M1336.6 679.8L1333.0 683.2M1388.7 573.7L1390.2 576.9M1332.9 563.8L1335.5 564.5M1371.8 611.6L1373.0 614.3M1302.1 542.3L1305.6 546.2M1394.0 614.6L1398.0 617.2M1359.4 545.2L1356.3 549.8M1347.2 647.1L1350.5 646.8M1322.6 494.0L1319.5 499.2M1340.2 571.6L1345.6 570.4M1313.7 581.0L1310.6 585.0M1301.8 622.4L1299.4 625.0M1372.2 566.3L1376.8 566.3M1398.6 614.8L1402.5 618.9M1323.8 490.2L1325.4 494.0M1364.5 545.8L1360.2 549.9M1350.5 646.8L1355.2 646.9M1338.6 654.8L1341.4 654.8M1334.0 625.2L1331.0 630.1M1341.1 585.8L1337.3 589.0M1291.4 667.3L1297.5 666.5M1295.9 638.2L1301.8 635.6M1313.6 502.5L1311.7 504.4M1338.7 509.1L1337.0 511.7M1341.4 654.8L1345.8 653.8M1368.8 649.4L1366.2 652.7M1396.4 625.6L1398.1 629.7M1342.0 551.5L1339.6 556.3M1352.5 505.8L1350.4 508.5M1366.0 629.6L1364.1 632.2M1368.8 589.5L1364.5 591.4M1347.4 662.7L1351.9 660.6M1356.1 633.3L1351.9 635.0M1391.7 557.2L1388.9 560.0M1349.4 593.8L1354.3 596.5M1307.8 633.8L1310.5 636.7M1404.2 627.9L1404.1 622.3M1300.4 538.1L1304.1 536.9M1298.7 673.6L1302.6 671.5M1313.7 646.1L1315.9 649.9M1393.9 559.5L1390.9 562.7M1327.9 585.3L1330.9 585.3M1404.0 563.5L1398.5 563.6M1362.0 542.5L1364.8 541.2M1351.9 635.0L1354.2 641.0M1324.5 516.3L1328.4 519.7M1318.3 648.2L1318.9 649.9M1395.9 559.2L1394.6 564.0M1318.8 681.0L1323.8 679.6M1411.8 600.0L1409.9 595.2M1298.9 507.9L1298.8 503.7M1391.6 599.4L1388.6 602.6M1356.2 589.9L1358.5 588.6M1333.1 527.2L1330.0 531.5M1292.5 691.9L1295.0 686.0M1341.6 662.2L1341.5 665.9M1316.2 484.0L1320.1 482.9M1293.6 671.4L1296.0 676.0M1383.3 592.9L1386.2 591.9M1341.3 604.8L1340.6 607.5M1307.3 593.7L1312.2 593.6M1313.9 669.9L1315.2 672.3M1323.9 571.2L1321.2 573.4M1339.2 534.3L1339.5 538.1M1322.6 494.0L1325.4 494.0M1333.9 609.7L1332.5 614.8M1299.0 512.1L1303.8 513.8M1370.3 606.9L1368.6 610.4M1322.5 510.1L1325.2 510.1M1344.2 533.6L1342.9 538.6M1333.4 596.9L1337.8 595.3M1354.1 574.3L1353.4 577.7M1298.7 673.6L1296.0 676.0M1314.7 643.1L1318.3 642.7M1306.4 505.1L1311.7 504.4M1361.7 614.4L1360.3 617.6M1324.9 604.4L1329.5 603.5M1357.7 504.4L1352.5 505.8M1327.9 622.9L1326.5 625.9M1339.3 515.8L1342.1 516.7M1397.5 611.1L1394.0 614.6M1314.4 618.6L1319.5 622.7M1300.2 495.4L1302.8 498.3M1328.1 542.6L1325.3 546.4M1387.7 577.5L1384.3 582.5M1318.8 681.0L1322.2 684.0M1301.8 650.9L1306.0 650.6M1328.7 511.9L1333.0 512.1M1388.7 618.1L1390.1 621.9M1360.2 507.8L1356.8 506.4M1352.5 608.1L1357.3 608.0M1343.3 545.5L1345.6 547.9M1303.7 494.1L1307.2 499.2M1338.6 502.6L1335.1 505.5M1299.0 657.8L1302.8 657.6M1335.1 521.0L1340.4 519.2M1299.1 520.5L1300.6 522.9M1319.1 584.6L1322.7 589.5M1357.3 608.0L1362.1 608.2M1379.1 610.2L1385.4 611.2M1318.4 508.9L1318.9 512.4M1343.0 502.0L1339.4 505.2M1365.1 514.6L1362.5 517.0M1311.0 665.8L1315.8 664.1M1299.6 541.6L1300.4 538.1M1323.1 586.2L1326.0 588.0M1371.4 552.0L1369.2 556.4M1332.1 505.0L1335.3 509.7M1385.4 611.2L1388.9 610.6M1347.6 497.1L1351.9 501.2M1393.7 629.9L1395.9 632.5M1322.5 510.1L1324.0 512.8M1341.9 532.0L1346.2 531.3M1314.3 641.1L1311.6 642.3M1315.6 593.6L1317.4 597.1M1334.2 632.3L1334.9 636.1M1326.2 552.6L1328.3 555.9M1315.8 664.1L1318.2 664.9M1323.1 672.5L1327.3 671.9M1329.3 691.9L1325.2 692.5M1349.3 628.0L1350.4 632.3M1350.0 588.2L1354.0 592.8M1290.0 684.1L1295.0 686.0M1353.2 512.6L1350.6 515.2M1300.7 617.3L1304.0 617.4M1317.3 640.8L1314.7 643.1M1328.7 537.1L1332.8 538.2M1316.7 654.7L1314.8 657.5M1342.4 595.6L1344.4 598.8M1374.5 556.6L1377.3 558.6M1327.3 671.9L1331.3 672.3M1341.7 646.1L1344.6 650.4M1300.1 592.1L1300.2 587.9M1377.3 592.3L1379.8 596.0M1330.9 621.6L1335.5 622.4M1344.6 650.4L1341.4 654.8M1313.0 544.6L1317.4 546.3M1377.3 558.6L1378.7 562.7M1310.0 524.7L1309.8 527.2M1292.1 682.7L1296.8 683.7M1405.7 596.1L1407.1 600.3M1364.0 624.8L1368.1 624.5M1370.8 548.1L1374.2 549.3M1304.5 529.6L1306.8 533.3M1311.0 665.8L1309.3 669.7M1408.0 570.9L1405.0 573.5M1322.5 602.6L1322.4 606.7M1301.5 570.2L1305.6 574.9M1326.9 661.5L1328.4 666.2M1341.5 668.2L1345.1 671.6M1369.9 534.2L1367.6 538.6M1328.3 555.9L1331.3 556.5M1323.1 672.5L1322.5 676.0M1335.0 568.4L1335.9 571.8M1342.0 551.5L1347.3 553.6M1307.0 483.8L1305.3 488.3M1324.6 535.1L1325.9 537.5M1309.2 529.8L1306.8 533.3M1334.0 573.3L1336.1 577.4M1374.7 533.5L1372.9 537.1M1377.3 558.6L1379.2 559.7M1353.0 541.3L1350.3 545.2M1327.3 476.5L1324.8 480.3M1365.7 570.3L1368.5 574.5M1314.5 491.6L1313.1 494.8M1309.9 483.1L1309.9 488.1M1300.0 558.4L1301.7 557.2M1334.9 636.1L1339.8 636.2M1401.2 630.9L1400.4 625.0M1327.7 533.4L1328.7 537.1M1366.1 578.7L1367.2 580.8M1357.1 542.4L1354.1 545.7M1316.5 568.2L1320.9 567.7M1395.5 554.3L1393.9 559.5M1352.5 497.8L1355.1 501.0M1397.0 575.3L1400.0 577.9M1312.0 621.5L1313.0 626.3M1381.2 607.9L1385.5 607.6M1312.1 541.8L1313.0 544.6M1298.9 644.1L1301.8 642.9M1359.0 663.1L1354.0 666.1M1343.5 618.7L1344.0 620.7M1396.5 581.1L1394.5 585.1M1320.9 567.7L1324.5 567.7M1329.3 495.4L1328.3 496.9M1347.8 572.0L1353.7 570.0M1302.1 548.7L1305.5 552.8M1321.5 581.2L1319.1 584.6M1341.7 625.5L1343.9 628.8M1320.3 502.9L1323.2 505.1M1372.2 545.0L1370.8 548.1M1353.7 570.0L1356.8 569.7M1380.5 575.2L1383.9 575.0M1373.2 629.5L1376.5 632.5M1325.0 618.8L1329.5 619.3M1347.9 509.0L1345.4 512.0M1316.4 589.3L1315.6 593.6M1341.8 640.8L1341.6 643.5M1383.9 575.0L1388.7 573.7M1353.9 551.9L1356.0 556.9M1300.3 691.2L1296.3 692.6M1345.5 624.3L1343.9 628.8M1299.0 516.3L1300.2 516.4M1343.8 635.5L1341.8 640.8M1410.3 612.5L1408.5 610.1M1339.6 556.3L1337.1 560.3M1329.5 619.3L1333.1 617.6M1297.4 640.7L1298.9 644.1M1350.4 508.5L1348.5 512.1M1356.3 622.0L1361.5 621.6M1299.9 554.2L1300.9 553.2M1316.4 517.1L1315.4 519.4M1364.1 632.2L1360.6 636.4M1345.8 592.9L1342.4 595.6M1302.5 564.5L1304.5 567.2M1308.1 582.4L1313.7 581.0M1337.0 511.7L1339.3 515.8M1379.3 629.4L1376.5 632.5M1345.6 518.8L1347.4 524.3M1300.1 562.6L1300.0 558.4M1407.1 593.0L1409.9 595.2M1322.0 516.8L1318.9 519.1M1300.6 640.3L1301.8 642.9M1361.5 621.6L1366.6 622.1M1301.3 653.3L1302.8 657.6M1389.8 626.3L1394.2 626.6M1372.7 595.2L1369.1 600.5M1336.4 584.1L1341.1 585.8M1315.2 476.2L1319.4 476.9M1324.6 600.7L1324.9 604.4M1394.2 626.6L1396.4 625.6M1312.2 633.8L1318.3 631.6M1338.9 523.6L1335.1 526.7M1307.4 563.5L1304.5 567.2M1351.9 660.6L1354.0 666.1M1382.2 639.5L1382.0 635.8M1399.6 600.1L1397.3 603.3M1362.9 588.6L1368.8 589.5M1314.5 491.6L1320.4 491.3M1350.2 604.4L1352.5 608.1M1318.3 631.6L1321.1 632.9M1328.2 570.5L1326.1 573.4M1323.2 482.9L1327.1 483.8M1333.7 531.4L1332.3 534.8M1302.6 671.5L1303.9 676.8M1315.0 606.3L1312.3 611.2M1341.5 610.9L1344.9 613.6M1390.0 593.5L1394.6 592.7M1380.2 539.8L1374.9 538.9M1303.6 502.1L1308.4 500.5M1378.3 606.4L1379.1 610.2M1311.4 680.6L1309.4 683.7M1333.1 571.0L1331.0 573.9M1360.6 636.4L1366.4 636.2M1352.7 535.1L1355.7 538.0M1307.7 672.7L1308.5 675.8M1299.7 684.5L1297.5 687.7M1329.3 495.4L1333.0 493.5M1394.6 592.7L1399.7 593.2M1300.3 691.2L1297.0 690.3M1304.0 617.4L1301.8 622.4M1328.8 509.1L1335.3 509.7M1324.9 668.6L1327.3 671.9M1357.1 534.8L1359.6 536.8M1364.1 575.3L1361.1 577.9M1303.9 682.9L1302.2 686.7M1322.4 644.7L1328.7 644.7M1337.0 541.2L1337.5 546.1M1312.0 599.0L1316.4 600.1M1319.2 556.9L1319.8 562.6M1308.7 618.6L1305.8 620.6M1335.5 622.4L1334.0 625.2M1347.7 515.8L1350.6 515.2M1340.7 542.3L1343.3 545.5M1328.7 644.7L1331.7 643.5M1396.1 578.7L1392.8 582.2M1312.1 651.5L1315.9 649.9M1377.2 570.8L1383.6 571.9M1339.2 499.0L1338.6 502.6M1339.0 602.6L1341.3 604.8M1339.4 620.9L1338.8 626.0M1350.6 515.2L1354.5 516.7M1368.1 624.5L1366.0 629.6M1349.8 522.8L1354.4 523.8M1381.2 582.1L1383.3 586.5M1313.1 494.8L1314.2 497.1M1318.2 553.7L1315.3 556.5M1315.9 649.9L1318.9 649.9M1306.3 657.5L1312.0 658.1M1342.8 588.1L1339.8 592.9M1303.9 582.9L1307.7 584.1M1402.5 618.9L1404.1 622.3M1303.2 578.6L1305.7 577.4M1360.2 549.9L1364.0 553.9M1370.9 625.7L1368.6 629.1M1354.4 523.8L1359.0 524.3M1325.2 510.1L1328.7 511.9M1351.9 501.2L1347.9 506.4M1407.3 586.3L1409.1 588.2M1366.5 557.1L1363.3 560.7M1312.0 658.1L1314.8 657.5M1318.2 664.9L1323.2 665.7M1370.5 592.1L1367.8 596.5M1410.2 579.1L1407.7 578.3M1333.3 581.5L1338.3 581.6M1319.2 556.9L1322.2 560.8M1365.1 643.9L1363.5 646.6M1328.8 509.1L1333.0 512.1M1351.5 530.0L1354.4 531.1M1292.6 659.0L1295.0 658.5M1369.2 556.4L1367.6 560.4M1342.4 632.6L1343.8 635.5M1386.0 545.9L1381.5 549.8M1323.0 593.7L1325.4 596.5M1326.7 640.8L1328.7 644.7M1323.2 665.7L1328.4 666.2M1397.3 596.9L1394.1 598.9M1338.3 581.6L1341.5 580.6M1361.2 584.4L1364.6 584.8M1300.2 516.4L1301.7 519.8M1332.8 538.2L1334.7 544.1M1339.5 538.1L1342.9 538.6M1324.6 654.3L1324.6 656.8M1350.8 597.5L1352.0 599.4M1337.4 672.0L1339.3 673.2M1401.6 596.2L1399.6 600.1M1332.9 563.8L1330.2 567.3M1364.6 584.8L1369.4 585.6M1389.7 587.9L1391.7 588.0M1304.1 524.6L1299.7 526.6M1316.1 662.1L1315.8 664.1M1300.3 583.7L1303.9 582.9M1330.1 655.4L1327.4 658.8M1316.1 523.9L1320.0 527.6M1321.5 546.0L1325.3 546.4M1324.5 567.7L1323.9 571.2M1299.7 684.5L1303.9 682.9M1317.9 603.1L1315.0 606.3M1391.7 588.0L1396.5 589.2M1299.3 608.9L1303.7 606.9M1369.0 527.0L1367.8 529.6M1321.8 523.1L1323.1 527.2M1378.0 548.7L1381.5 549.8M1313.1 531.1L1314.9 535.5M1346.4 669.4L1348.4 671.4M1356.8 569.7L1354.1 574.3M1318.2 664.9L1316.7 668.9M1325.3 683.7L1322.5 688.4M1345.3 607.2L1341.5 610.9M1307.7 596.0L1313.4 596.2M1316.2 484.0L1318.3 488.4M1392.4 551.4L1387.6 553.1M1311.7 572.0L1312.2 574.4M1318.5 531.9L1320.2 534.4M1335.3 555.7L1339.6 556.3M1361.1 571.4L1358.2 573.7M1388.7 573.7L1387.7 577.5M1330.4 682.6L1328.9 686.3M1320.9 692.4L1319.2 688.0M1331.3 672.3L1330.7 676.5M1371.8 611.6L1370.0 613.2M1335.2 599.7L1341.3 599.4M1339.6 556.3L1344.0 555.5M1304.1 536.9L1302.1 542.3M1325.7 610.2L1327.5 614.1M1394.1 574.6L1390.2 576.9M1398.5 557.2L1395.9 559.2M1398.6 614.8L1398.0 617.2M1323.8 490.2L1322.6 494.0M1341.3 599.4L1344.4 598.8M1364.4 604.2L1367.4 604.4M1388.9 560.0L1393.9 559.5M1364.8 541.2L1364.5 545.8M1300.1 592.1L1300.2 588.0M1404.4 613.5L1402.5 618.9M1357.7 504.4L1360.2 507.8M1327.1 489.7L1325.4 494.0M1319.5 622.7L1320.7 625.2M1367.4 604.4L1370.8 602.4M1390.8 605.9L1395.1 608.3M1379.3 545.1L1381.5 549.8M1377.8 577.3L1381.2 582.1M1307.7 526.9L1309.8 527.2M1330.2 567.3L1335.0 568.4M1335.6 657.2L1341.0 658.1M1360.2 507.8L1362.7 511.2M1406.7 624.5L1404.2 627.9M1296.5 634.0L1301.8 635.6M1324.0 622.6L1326.5 625.9M1351.4 624.1L1353.9 629.2M1395.1 608.3L1398.2 608.2M1300.9 553.2L1301.7 557.2M1306.8 614.6L1312.1 614.1M1329.1 501.0L1332.1 505.0M1408.6 582.7L1407.3 586.3M1354.8 509.9L1356.7 512.3M1301.6 533.2L1306.8 533.3M1326.0 588.0L1328.5 593.8M1348.0 664.9L1354.0 666.1M1404.2 627.9L1401.2 630.9M1307.8 633.8L1305.6 635.7M1355.5 626.0L1357.0 628.2M1382.4 629.7L1383.8 631.8M1312.1 614.1L1316.2 614.1M1348.1 555.6L1350.7 559.7M1333.1 617.6L1338.9 618.1M1371.9 631.9L1373.7 635.8M1372.2 525.1L1369.0 527.0M1354.0 592.8L1354.3 596.5M1364.0 553.9L1366.5 557.1M1363.3 536.9L1367.6 538.6M1301.3 675.1L1303.9 676.8M1292.5 691.9L1290.7 688.2M1386.0 629.9L1389.2 633.1M1349.3 643.9L1350.5 646.8M1351.9 635.0L1351.2 639.4M1324.5 516.3L1323.8 520.7M1338.9 618.1L1343.5 618.7M1318.3 648.2L1315.9 649.9M1366.6 622.1L1369.9 621.8M1354.2 641.0L1352.6 643.7M1367.6 538.6L1372.9 537.1M1347.7 544.4L1350.3 545.2M1312.1 563.7L1313.1 567.7M1379.8 596.0L1382.6 600.1M1303.9 676.8L1308.5 675.8M1325.3 683.7L1330.4 682.6M1299.9 554.2L1299.8 550.0M1354.0 520.5L1354.4 523.8M1305.1 597.0L1306.0 600.8M1328.6 516.0L1328.4 519.7M1369.9 621.8L1373.4 621.2M1309.2 654.1L1312.0 658.1M1350.3 545.2L1354.1 545.7M1314.1 562.3L1316.5 568.2M1312.2 551.6L1318.2 553.7M1407.1 600.3L1408.4 604.2M1302.2 469.7L1305.2 472.1M1330.4 682.6L1333.0 683.2M1301.3 479.0L1304.3 480.8M1349.5 527.9L1351.5 530.0M1299.5 537.3L1301.6 533.2M1333.1 599.9L1333.8 604.0M1312.2 653.2L1314.8 657.5M1322.5 688.4L1325.8 690.0M1347.4 524.3L1344.8 526.1M1318.2 553.7L1320.6 552.2M1300.0 470.0L1302.2 469.7M1322.4 606.7L1325.7 610.2M1348.0 664.9L1346.4 669.4M1323.8 490.2L1327.1 489.7M1298.8 503.7L1299.6 501.0M1325.0 632.0L1331.1 633.7M1340.2 571.6L1341.5 575.4M1302.7 666.5L1304.7 668.6M1309.4 683.7L1311.0 686.5M1326.9 606.0L1329.7 610.7M1366.5 557.1L1369.2 556.4M1350.7 611.1L1353.0 614.6M1301.3 675.1L1302.1 680.3M1327.1 489.7L1332.6 491.9M1313.6 502.5L1316.1 501.1M1314.4 618.6L1314.1 622.6M1318.8 681.0L1318.4 682.9M1298.6 617.3L1300.7 617.3M1361.6 533.9L1363.3 536.9M1370.3 636.7L1373.7 635.8M1373.1 575.4L1374.0 578.6M1301.3 466.0L1302.2 469.7M1312.7 683.9L1315.8 686.3M1315.2 672.3L1317.5 676.4M1314.1 562.3L1319.8 562.6M1356.3 609.7L1356.8 614.9M1378.4 613.9L1381.1 617.6M1316.1 501.1L1320.3 502.9M1303.7 494.1L1302.8 498.3M1290.9 671.5L1293.6 671.4M1298.9 507.9L1302.6 504.2M1344.0 542.9L1347.7 544.4M1347.9 651.5L1348.5 657.4M1404.3 577.9L1404.4 582.9M1319.8 562.6L1323.1 563.6M1356.2 566.5L1358.1 567.9M1382.6 614.7L1385.6 618.5M1305.6 490.5L1309.9 494.1M1343.2 509.3L1347.9 509.0M1348.5 542.7L1350.3 545.2M1407.7 578.3L1408.6 582.7M1323.2 475.6L1324.8 480.3M1323.1 586.2L1322.7 589.5M1358.1 567.9L1363.7 566.9M1387.5 570.9L1392.0 571.9M1347.6 497.1L1345.5 502.0M1322.5 510.1L1318.9 512.4M1349.0 622.3L1345.5 624.3M1382.2 639.5L1378.4 641.3M1358.8 516.8L1362.5 517.0M1298.8 503.7L1302.6 504.2M1326.2 552.6L1323.4 555.1M1335.9 614.8L1339.3 614.6M1324.8 650.5L1326.7 651.1M1327.9 585.3L1326.0 588.0M1350.0 588.2L1349.4 593.8M1404.0 563.5L1404.3 567.6M1392.0 571.9L1394.6 572.0M1311.4 579.1L1315.2 579.1M1291.4 667.3L1292.0 663.1M1379.9 626.3L1379.3 629.4M1337.9 632.7L1334.9 636.1M1330.1 552.9L1328.3 555.9M1374.5 556.6L1372.2 560.0M1362.9 618.1L1368.5 618.8M1341.7 646.1L1340.5 650.4M1356.2 589.9L1354.0 592.8M1377.3 592.3L1376.0 595.9M1315.2 579.1L1319.0 578.4M1341.5 580.6L1347.1 581.8M1295.1 646.6L1298.0 649.6M1299.3 528.9L1299.2 524.7M1354.5 516.7L1354.0 520.5M1378.1 556.8L1377.3 558.6M1334.3 639.4L1336.7 644.4M1394.4 622.0L1398.7 621.7M1333.6 655.2L1335.6 657.2M1383.3 592.9L1379.8 596.0M1405.7 596.1L1404.1 600.4M1300.0 558.4L1303.8 559.4M1347.1 581.8L1350.4 580.8M1334.9 636.1L1337.9 640.9M1369.4 585.6L1374.0 585.0M1308.3 516.2L1311.8 520.0M1300.1 647.0L1301.8 650.9M1324.8 480.3L1328.8 481.0M1318.8 628.1L1324.4 629.8M1314.8 657.5L1312.8 662.7M1409.9 595.2L1407.1 600.3M1374.0 585.0L1378.1 584.8M1396.5 589.2L1401.4 588.3M1326.9 661.5L1323.2 665.7M1338.6 654.8L1335.6 657.2M1324.4 629.8L1328.2 628.1M1335.0 568.4L1333.1 571.0M1328.4 666.2L1330.5 668.1M1324.9 604.4L1322.4 606.7M1401.4 588.3L1405.3 588.3M1303.7 494.1L1309.9 494.1M1329.6 522.8L1333.1 527.2M1339.3 566.9L1335.9 571.8M1356.1 633.3L1359.2 633.1M1365.7 570.3L1364.1 575.3M1308.7 546.3L1307.3 547.9M1339.3 673.2L1343.2 677.4M1352.5 608.1L1350.7 611.1M1302.2 469.7L1303.3 475.0M1327.7 533.4L1325.9 537.5M1317.4 597.1L1322.0 596.4M1323.2 482.9L1324.9 486.5M1343.0 502.0L1345.5 502.0M1368.6 569.6L1368.5 574.5M1305.0 640.4L1309.7 639.4M1313.0 537.0L1314.1 541.4M1397.0 575.3L1396.1 578.7M1299.9 554.2L1301.7 557.2M1379.1 610.2L1378.4 613.9M1312.1 541.8L1308.7 546.3M1344.4 598.8L1347.9 600.3M1327.1 483.8L1330.6 488.3M1345.5 502.0L1351.9 501.2M1343.5 618.7L1339.4 620.9M1310.9 512.0L1314.9 512.0M1374.4 541.5L1375.7 546.6M1360.8 643.0L1365.1 643.9M1402.1 574.4L1400.0 577.9M1407.9 613.6L1404.9 617.2M1335.9 490.6L1338.3 494.6M1347.0 617.3L1344.0 620.7M1314.9 512.0L1318.9 512.4M1318.9 519.1L1323.8 520.7M1347.9 651.5L1353.8 650.8M1300.7 617.3L1301.8 622.4M1325.4 502.0L1323.2 505.1M1375.9 602.4L1381.5 604.0M1379.2 622.7L1375.1 625.7M1323.8 520.7L1328.4 519.7M1314.4 525.9L1320.0 527.6M1307.7 584.1L1308.8 588.2M1353.9 551.9L1353.8 555.9M1299.7 545.8L1305.6 546.2M1343.9 659.1L1348.5 657.4M1365.1 514.6L1367.5 518.0M1330.9 621.6L1334.0 625.2M1341.5 578.5L1344.7 578.2M1318.3 631.6L1319.4 635.7M1403.9 607.8L1407.1 607.1M1309.7 553.4L1312.0 555.4M1301.7 629.4L1301.4 632.6M1320.0 527.6L1323.1 527.2M1311.6 533.3L1314.9 535.5M1334.9 588.3L1337.1 593.1M1299.0 512.1L1300.2 516.4M1297.3 667.8L1300.7 669.1M1397.9 633.4L1394.2 635.4M1407.1 593.0L1405.7 596.1M1300.6 640.3L1298.9 644.1M1321.1 632.9L1323.5 636.2M1364.0 624.8L1366.0 629.6M1360.6 636.4L1362.9 640.0M1319.5 615.2L1324.1 614.4M1356.0 556.9L1359.5 559.7M1333.4 515.0L1335.1 521.0M1314.9 535.5L1320.2 534.4M1290.2 679.9L1292.6 675.2M1372.9 537.1L1374.9 538.9M1360.7 592.0L1362.6 597.1M1324.6 600.7L1322.5 602.6M1366.4 636.2L1366.6 640.1M1356.6 644.1L1359.5 648.4M1398.3 584.2L1403.0 586.3M1339.3 515.8L1340.4 519.2M1359.5 559.7L1360.7 562.6M1326.8 646.9L1324.8 650.5M1331.9 679.9L1336.6 679.8M1295.0 658.5L1296.2 662.2M1388.4 595.3L1391.6 599.4M1354.1 545.7L1359.4 545.2M1313.4 676.8L1317.5 676.4M1350.2 604.4L1349.2 606.5M1398.5 563.6L1400.6 567.7M1329.5 646.0L1326.7 651.1M1356.2 660.5L1354.0 666.1M1313.1 567.7L1314.4 570.2M1299.0 657.8L1301.4 661.9M1392.0 597.3L1394.1 598.9M1323.1 563.6L1324.5 567.7M1359.4 545.2L1364.5 545.8M1304.4 603.1L1307.1 606.1M1363.7 566.9L1361.1 571.4M1311.2 469.4L1313.7 472.7M1366.7 520.7L1367.4 524.1M1401.2 630.9L1398.1 629.7M1319.3 592.0L1323.0 593.7M1378.3 606.4L1375.5 611.2M1320.9 653.5L1324.6 656.8M1307.7 672.7L1303.9 676.8M1316.5 568.2L1319.7 571.7M1326.2 552.6L1330.1 552.9M1309.4 603.4L1310.7 606.5M1333.0 606.4L1333.9 609.7M1394.6 572.0L1394.1 574.6M1361.1 526.3L1364.5 531.6M1381.2 607.9L1379.1 610.2M1303.3 475.0L1301.3 479.0M1324.9 668.6L1323.1 672.5M1346.0 597.0L1350.8 597.5M1357.1 534.8L1355.7 538.0M1327.8 680.0L1330.4 682.6M1347.8 572.0L1349.9 574.5M1318.4 682.9L1319.2 688.0M1337.2 608.2L1337.2 611.7M1374.5 556.6L1378.1 556.8M1319.0 578.4L1316.3 580.5M1408.5 610.1L1407.9 613.6M1340.7 542.3L1337.5 546.1M1374.4 599.2L1378.6 598.9M1331.9 679.9L1333.0 683.2M1380.5 575.2L1382.9 576.9M1322.2 684.0L1322.5 688.4M1323.1 563.6L1328.9 564.7M1364.0 611.8L1364.7 613.5M1298.9 491.0L1300.2 495.4M1325.0 618.8L1327.9 622.9M1313.1 494.8L1310.3 496.9M1401.5 602.4L1404.5 603.6M1383.9 575.0L1387.7 577.5M1303.9 582.9L1302.0 584.3M1402.5 618.9L1398.7 621.7M1330.9 585.3L1334.9 588.3M1390.9 613.3L1392.0 618.3M1303.6 502.1L1306.4 505.1M1316.8 495.6L1314.2 497.1M1378.1 536.2L1380.2 539.8M1356.3 622.0L1360.0 624.5M1322.0 596.4L1322.5 602.6M1318.0 611.7L1322.2 610.5M1334.0 551.5L1335.3 555.7M1308.1 582.4L1307.7 584.1M1367.7 566.6L1372.2 566.3M1358.5 588.6L1360.7 592.0M1380.2 539.8L1382.9 543.1M1328.8 509.1L1328.7 511.9M1374.9 643.6L1371.7 646.3M1389.8 626.3L1389.5 628.6M1326.7 640.8L1322.4 644.7M1342.4 632.6L1339.8 636.2M1339.2 551.4L1339.6 556.3M1344.9 613.6L1347.8 613.4M1336.4 584.1L1334.9 588.3M1398.9 570.5L1403.9 570.2M1386.2 591.9L1388.4 595.3M1392.4 551.4L1391.7 557.2M1371.7 646.3L1368.8 649.4M1293.3 654.8L1295.0 658.5M1292.6 659.0L1293.3 654.8M1347.6 631.8L1343.8 635.5M1386.2 555.4L1388.9 560.0M1362.9 588.6L1360.7 592.0M1323.6 540.6L1328.1 542.6M1322.4 576.9L1329.0 577.0M1293.3 654.8L1293.9 650.7M1330.1 655.4L1324.6 656.8M1299.1 520.5L1299.0 516.3M1362.5 517.0L1362.0 520.7M1355.2 646.9L1353.8 650.8M1390.0 593.5L1388.4 595.3M1302.1 548.7L1307.3 547.9M1306.0 600.8L1309.4 603.4M1394.2 635.4L1393.7 629.9M1375.1 625.7L1379.9 626.3M1309.4 647.4L1312.1 651.5M1388.9 560.0L1387.4 563.4M1321.8 523.1L1320.0 527.6M1333.9 662.1L1335.6 664.1M1302.8 483.7L1307.0 483.8M1299.0 516.3L1299.0 512.1M1299.4 625.0L1305.2 625.0M1345.8 653.8L1348.5 657.4M1345.9 589.7L1350.0 588.2M1341.7 566.6L1345.6 570.4M1353.1 563.4L1356.2 566.5M1333.8 604.0L1337.2 608.2M1301.4 632.6L1303.5 633.4M1324.7 522.7L1323.1 527.2M1307.0 483.8L1309.9 483.1M1318.5 531.9L1314.9 535.5M1331.0 630.1L1336.4 629.2M1313.4 468.1L1311.2 469.4M1374.7 569.9L1377.0 574.8M1353.9 551.9L1358.9 551.8M1362.1 608.2L1364.0 611.8M1408.5 620.7L1404.9 617.2M1336.7 534.9L1339.5 538.1M1343.8 635.5L1349.8 636.3M1322.6 532.0L1320.2 534.4M1290.8 672.5L1292.6 675.2M1313.1 494.8L1316.8 495.6M1347.9 568.2L1345.6 570.4M1364.1 632.2L1367.4 633.2M1377.2 570.8L1380.5 575.2M1312.3 559.0L1316.4 559.3M1366.3 605.9L1368.6 610.4M1388.9 610.6L1390.9 613.3M1319.4 540.6L1321.5 546.0M1307.9 644.3L1311.6 642.3M1300.0 600.5L1300.5 604.7M1320.5 538.6L1323.6 540.6M1314.3 641.1L1317.3 640.8M1401.4 560.3L1395.9 559.2M1303.2 578.6L1303.9 582.9M1353.1 563.4L1357.1 562.8M1392.7 611.9L1394.0 614.6M1340.3 490.4L1343.3 493.4M1335.1 484.7L1338.8 487.4M1377.8 577.3L1377.1 581.3M1343.3 493.4L1339.2 499.0M1318.9 512.4L1324.0 512.8M1324.0 622.6L1320.7 625.2M1333.3 581.5L1330.9 585.3M1394.0 566.4L1396.9 566.0M1355.5 618.1L1353.2 621.3M1324.0 512.8L1328.7 511.9M1328.4 519.7L1331.9 520.0M1299.3 528.9L1304.5 529.6M1314.3 548.5L1312.2 551.6M1300.1 566.8L1302.5 564.5M1355.5 626.0L1353.9 629.2M1361.2 584.4L1358.5 588.6M1317.3 574.9L1321.2 573.4M1334.0 502.3L1332.1 505.0M1385.8 621.2L1385.2 625.4M1331.9 520.0L1335.1 521.0M1371.9 631.9L1370.3 636.7M1316.4 584.9L1316.4 589.3M1364.0 553.9L1361.3 555.1M1386.0 629.9L1383.8 631.8M1389.7 587.9L1386.2 591.9M1312.3 510.2L1314.9 512.0M1347.8 578.1L1353.4 577.7M1309.7 639.4L1311.6 642.3M1325.0 632.0L1327.0 635.2M1307.7 664.4L1311.0 665.8M1312.2 628.6L1307.8 633.8M1327.7 526.4L1333.1 527.2M1368.8 553.7L1366.5 557.1M1305.1 597.0L1302.9 601.1M1331.1 633.7L1332.6 637.2M1354.5 670.2L1351.2 669.5M1370.3 636.7L1372.7 638.8M1320.6 552.2L1323.4 555.1M1342.1 516.7L1345.6 518.8M1319.8 672.3L1323.1 672.5M1298.9 491.0L1298.9 486.8M1334.9 647.6L1337.0 651.7M1314.1 562.3L1313.1 567.7M1324.6 535.1L1327.7 533.4M1349.7 585.7L1352.1 584.3M1307.7 596.0L1306.0 600.8M1333.1 599.9L1329.5 603.5M1384.3 582.5L1388.1 582.3M1312.2 653.2L1312.0 658.1M1373.7 635.8L1377.0 639.5M1305.6 546.2L1308.7 546.3M1347.7 515.8L1350.0 520.4M1339.4 646.1L1340.5 650.4M1319.8 562.6L1316.5 568.2M1340.0 680.2L1344.3 679.1M1373.9 591.4L1376.0 595.9M1376.1 588.3L1379.3 589.2M1299.4 533.1L1301.6 533.2M1308.6 473.4L1310.2 475.8M1335.2 599.7L1333.8 604.0M1304.1 524.6L1307.7 526.9M1300.2 588.0L1305.7 588.4M1302.7 666.5L1300.7 669.1M1374.0 578.6L1374.0 585.0M1326.9 606.0L1325.7 610.2M1306.3 657.5L1309.1 662.6M1404.6 592.6L1407.1 593.0M1301.3 675.1L1297.5 680.1M1317.9 603.1L1322.4 606.7M1372.2 566.3L1368.6 569.6M1364.4 604.2L1362.1 608.2M1328.5 593.8L1331.1 593.4M1333.0 670.2L1337.4 672.0M1310.2 475.8L1313.3 480.1M1307.7 664.4L1304.7 668.6M1312.7 683.9L1311.0 686.5M1315.2 672.3L1313.4 676.8M1343.3 493.4L1347.8 495.0M1356.3 609.7L1353.0 614.6M1303.9 676.8L1302.1 680.3M1325.2 692.5L1322.5 688.4M1390.8 605.9L1388.9 610.6M1299.0 613.1L1300.7 617.3M1366.7 534.3L1363.3 536.9M1354.3 596.5L1358.5 596.9M1319.8 672.3L1317.5 676.4M1336.6 679.8L1338.4 682.4M1327.1 505.3L1332.1 505.0M1382.6 614.7L1381.1 617.6M1313.4 468.1L1313.7 472.7M1341.8 640.8L1347.4 640.4M1347.6 603.5L1350.2 604.4M1306.8 614.6L1304.0 617.4M1412.0 591.5L1407.1 593.0M1382.6 600.1L1386.5 600.1M1348.5 542.7L1347.7 544.4M1407.7 578.3L1404.4 582.9M1322.6 494.0L1324.3 499.3M1323.2 475.6L1321.9 479.7M1324.9 486.5L1323.8 490.2M1348.5 512.1L1353.2 512.6M1313.7 581.0L1316.4 584.9M1321.4 646.1L1326.8 646.9M1364.5 545.8L1365.6 549.4M1333.1 617.6L1335.5 622.4M1320.5 657.8L1324.6 656.8M1357.0 520.4L1362.0 520.7M1316.3 580.5L1319.1 584.6M1404.0 563.5L1400.6 567.7M1341.1 585.8L1342.8 588.1M1313.6 502.5L1316.3 504.5M1382.9 543.1L1386.0 545.9M1325.4 494.0L1324.3 499.3M1366.6 622.1L1368.1 624.5M1342.0 551.5L1344.0 555.5M1333.2 666.0L1335.6 664.1M1406.4 567.0L1404.3 567.6M1297.6 625.7L1299.4 625.0M1353.1 526.9L1356.3 527.0M1344.9 586.0L1345.9 589.7M1368.8 589.5L1370.5 592.1M1406.2 612.0L1408.5 610.1M1386.0 545.9L1389.2 548.6M1378.1 536.2L1374.7 533.5M1356.1 633.3L1357.1 635.1M1334.3 639.4L1331.7 643.5M1347.3 553.6L1348.1 555.6M1391.7 557.2L1393.9 559.5M1345.1 671.6L1348.4 671.4M1361.3 659.6L1357.9 657.7M1371.0 588.4L1373.9 591.4M1322.5 617.4L1325.0 618.8M1300.1 647.0L1298.0 649.6M1343.2 509.3L1340.1 511.5M1366.2 652.7L1363.7 656.1M1337.9 640.9L1336.7 644.4M1306.2 520.9L1304.1 524.6M1399.7 593.2L1401.6 596.2M1353.2 621.3L1356.3 622.0M1294.6 646.5L1295.2 642.3M1334.7 544.1L1337.5 546.1M1395.9 559.2L1398.5 563.6M1363.5 646.6L1362.0 651.6M1312.7 683.9L1318.4 682.9M1328.4 666.2L1324.9 668.6M1337.0 541.2L1340.7 542.3M1307.5 476.9L1310.2 475.8M1291.4 667.3L1297.3 667.8M1316.4 600.1L1317.9 603.1M1385.2 625.4L1389.8 626.3M1329.6 522.8L1327.7 526.4M1341.6 662.2L1345.3 664.3M1300.9 553.2L1305.5 552.8M1326.6 530.2L1327.7 533.4M1307.7 526.9L1304.5 529.6M1355.1 653.4L1357.9 657.7M1333.2 666.0L1330.5 668.1M1339.3 673.2L1339.5 675.7M1314.3 548.5L1320.0 549.7M1341.3 604.8L1345.3 607.2M1307.8 633.8L1312.2 633.8M1334.9 522.6L1333.1 527.2M1323.9 571.2L1326.1 573.4M1308.5 690.5L1306.5 687.0M1347.4 662.7L1348.0 664.9M1348.1 555.6L1353.8 555.9M1313.0 537.0L1312.1 541.8M1345.1 671.6L1343.2 677.4M1356.2 566.5L1356.8 569.7M1364.0 553.9L1368.8 553.7M1370.3 606.9L1371.8 611.6M1327.1 483.8L1324.9 486.5M1344.2 533.6L1346.4 536.9M1351.9 635.0L1357.1 635.1M1330.0 531.5L1327.7 533.4M1354.1 574.3L1357.7 576.9M1298.7 673.6L1301.3 675.1M1374.4 541.5L1372.2 545.0M1295.0 686.0L1297.0 690.3M1387.5 570.9L1388.7 573.7M1322.2 560.8L1324.9 559.1M1331.4 483.5L1330.6 488.3M1348.9 533.5L1349.7 538.7M1397.5 611.1L1398.6 614.8M1328.1 542.6L1329.5 546.0M1335.9 614.8L1333.1 617.6M1305.3 488.3L1305.6 490.5M1300.5 604.7L1304.4 603.1M1339.3 566.9L1341.7 566.6M1297.1 629.8L1298.8 628.0M1311.4 579.1L1313.7 581.0M1360.7 562.6L1364.7 564.7M1400.3 610.1L1404.4 613.5M1331.1 542.8L1334.7 544.1M1310.5 465.0L1313.4 468.1M1362.9 618.1L1366.6 622.1M1330.9 621.6L1329.6 625.9M1341.5 580.6L1341.1 585.8M1400.6 567.7L1404.3 567.6M1343.0 502.0L1343.7 506.5M1306.0 650.6L1312.1 651.5M1404.0 563.5L1406.4 567.0M1394.4 622.0L1396.4 625.6M1324.3 549.1L1320.6 552.2M1371.4 552.0L1374.5 556.6M1321.1 632.9L1319.4 635.7M1364.0 624.8L1360.5 628.5M1369.4 585.6L1368.8 589.5M1378.4 641.3L1377.0 639.5M1345.5 502.0L1347.9 506.4M1347.0 617.3L1349.8 619.2M1302.8 657.6L1306.3 657.5M1352.1 673.6L1349.3 676.9M1318.8 628.1L1321.1 632.9M1306.4 505.1L1308.6 508.3M1366.4 636.2L1362.9 640.0M1396.5 589.2L1394.6 592.7M1339.3 515.8L1335.1 521.0M1317.3 640.8L1318.3 642.7M1379.2 622.7L1382.8 620.8M1383.8 631.8L1382.0 635.8M1290.3 675.7L1292.6 675.2M1377.0 552.6L1374.5 556.6M1328.8 581.2L1333.3 581.5M1360.2 507.8L1354.8 509.9M1321.3 639.0L1322.4 644.7M1299.0 657.8L1296.2 662.2M1392.0 597.3L1391.6 599.4M1323.1 563.6L1320.9 567.7M1318.9 649.9L1316.7 654.7M1358.4 585.4L1361.2 584.4M1383.3 592.9L1388.4 595.3M1366.7 520.7L1363.0 524.2M1313.3 480.1L1316.7 478.7M1320.9 653.5L1320.5 657.8M1306.3 628.4L1312.2 628.6M1299.4 478.4L1299.7 474.2M1359.0 524.3L1356.3 527.0M1328.9 564.7L1324.5 567.7M1311.0 665.8L1313.9 669.9M1309.4 603.4L1307.1 606.1M1347.2 647.1L1347.9 651.5M1384.4 589.2L1389.7 587.9M1361.1 526.3L1358.5 529.9M1344.4 598.8L1341.3 604.8M1335.9 490.6L1340.3 490.4M1370.8 602.4L1372.8 606.0M1313.3 524.2L1314.4 525.9M1320.9 567.7L1319.7 571.7M1337.9 632.7L1342.4 632.6M1352.1 673.6L1348.4 671.4M1315.8 664.1L1316.7 668.9M1305.3 488.3L1309.9 488.1M1354.4 531.1L1352.7 535.1M1323.1 672.5L1325.7 675.4M1337.2 608.2L1333.9 609.7M1301.4 595.7L1305.1 597.0M1325.4 502.0L1329.1 501.0M1398.2 608.2L1400.3 610.1M1309.2 529.8L1311.6 533.3M1331.9 679.9L1330.4 682.6M1319.4 476.9L1321.9 479.7M1382.0 635.8L1386.7 635.6M1353.7 570.0L1349.9 574.5M1322.2 684.0L1319.2 688.0M1390.2 636.8L1386.7 635.6M1295.2 642.3L1297.4 640.7M1327.3 671.9L1330.7 676.5M1364.0 611.8L1361.7 614.4M1313.4 676.8L1311.4 680.6M1302.8 498.3L1307.2 499.2M1327.4 598.7L1333.1 599.9M1309.9 483.1L1314.2 488.2M1325.0 618.8L1324.0 622.6M1350.4 508.5L1354.8 509.9M1316.2 614.1L1316.4 617.2M1357.1 542.4L1359.4 545.2M1343.7 643.5L1349.3 643.9M1363.7 656.1L1358.4 655.0M1383.9 575.0L1382.9 576.9M1335.1 505.5L1339.4 505.2M1395.5 554.3L1395.9 559.2M1390.9 613.3L1388.7 618.1M1354.2 602.7L1359.3 603.3M1329.5 619.3L1327.9 622.9M1341.5 578.5L1341.5 580.6M1390.9 562.7L1394.6 564.0M1329.3 495.4L1332.7 497.8M1349.3 643.9L1352.6 643.7M1332.1 652.0L1337.0 651.7M1331.4 477.6L1328.8 481.0M1356.7 512.3L1361.4 513.3M1321.5 581.2L1323.1 586.2M1359.3 603.3L1364.4 604.2M1371.7 646.3L1367.2 646.4M1361.5 621.6L1360.0 624.5M1370.9 580.8L1369.4 585.6M1372.2 545.0L1374.2 549.3M1362.0 542.5L1359.4 545.2M1333.0 493.5L1335.4 497.0M1337.0 651.7L1340.5 650.4M1327.4 658.8L1331.4 657.5M1353.1 548.6L1350.3 552.2M1325.9 582.5L1327.9 585.3M1385.5 607.6L1390.8 605.9M1394.2 626.6L1389.5 628.6M1398.3 584.2L1396.5 589.2M1347.9 509.0L1348.5 512.1M1316.4 589.3L1319.3 592.0M1307.3 547.9L1309.7 553.4M1331.4 657.5L1335.6 657.2M1341.5 665.9L1345.3 664.3M1408.5 620.7L1406.7 624.5M1345.5 624.3L1349.3 628.0M1352.1 584.3L1356.2 589.9M1356.2 580.7L1360.5 582.5M1312.0 555.4L1310.0 559.3M1302.8 613.9L1306.8 614.6M1411.6 587.3L1409.1 588.2M1350.4 508.5L1353.2 512.6M1364.1 632.2L1366.4 636.2M1345.8 592.9L1346.0 597.0M1345.3 664.3L1348.0 664.9M1311.6 642.3L1309.4 647.4M1312.3 559.0L1312.1 563.7M1292.6 675.2L1296.0 676.0M1379.3 629.4L1381.0 632.4M1379.3 589.2L1383.3 592.9M1322.0 516.8L1323.8 520.7M1309.4 647.4L1306.0 650.6M1359.6 536.8L1363.3 536.9M1347.4 640.4L1343.7 643.5M1345.8 653.8L1343.9 659.1M1296.0 676.0L1301.3 675.1M1298.0 649.6L1301.3 653.3M1353.1 563.4L1351.7 567.6M1318.4 682.9L1322.2 684.0M1324.6 600.7L1329.5 603.5M1343.3 545.5L1347.7 544.4M1338.9 523.6L1339.9 528.2M1307.4 563.5L1308.2 566.2M1351.8 653.4L1348.5 657.4M1357.1 562.8L1356.2 566.5M1322.2 684.0L1325.3 683.7M1303.0 593.1L1307.3 593.7M1298.9 491.0L1303.4 490.4M1341.3 523.1L1344.8 526.1M1309.7 553.4L1312.2 551.6M1333.7 531.4L1336.7 534.9M1314.4 525.9L1313.1 531.1M1377.2 570.8L1377.0 574.8M1341.5 665.9L1337.1 669.2M1366.3 605.9L1364.0 611.8M1324.3 549.1L1328.8 549.2M1329.0 595.6L1333.4 596.9M1333.1 571.0L1334.0 573.3M1337.6 530.1L1339.2 534.3M1299.7 684.5L1302.2 686.7M1356.0 556.9L1361.3 555.1M1320.5 538.6L1319.4 540.6M1292.6 675.2L1293.9 679.9M1392.7 611.9L1390.9 613.3M1357.6 600.8L1361.1 600.6M1335.1 484.7L1333.7 486.3M1364.1 575.3L1366.1 578.7M1303.9 682.9L1306.5 687.0M1325.9 537.5L1323.6 540.6M1307.4 563.5L1312.1 563.7M1308.7 618.6L1312.0 621.5M1385.5 602.6L1388.6 602.6M1344.9 613.6L1343.5 618.7M1396.1 578.7L1396.5 581.1M1314.2 488.2L1314.5 491.6M1310.3 496.9L1308.4 500.5M1347.9 568.2L1351.7 567.6M1339.4 620.9L1341.7 625.5M1388.6 602.6L1391.9 602.3M1299.8 611.4L1304.4 611.9M1351.7 567.6L1356.2 566.5M1300.1 562.6L1302.5 564.5M1409.2 575.0L1407.7 578.3M1300.3 575.2L1301.6 573.9M1370.9 625.7L1373.2 629.5M1304.4 611.9L1307.7 611.1M1390.1 621.9L1385.2 625.4M1327.5 614.1L1332.5 614.8M1351.9 501.2L1352.5 505.8M1383.6 571.9L1387.5 570.9M1336.1 549.4L1339.2 551.4M1386.2 638.1L1382.2 639.5M1394.2 635.4L1395.9 632.5M1375.1 625.7L1379.3 629.4M1331.1 633.7L1327.0 635.2M1320.6 552.2L1319.2 556.9M1332.5 614.8L1335.9 614.8M1369.2 556.4L1372.2 560.0M1355.5 618.1L1360.3 617.6M1386.0 545.9L1385.7 548.7M1345.9 589.7L1345.8 592.9M1372.7 638.8L1368.8 643.5M1307.5 540.6L1312.1 541.8M1305.7 577.4L1311.4 579.1M1384.2 551.7L1386.2 555.4M1322.5 676.0L1325.7 675.4M1290.9 671.5L1291.4 667.3M1373.7 635.8L1372.7 638.8M1347.7 515.8L1345.6 518.8M1293.9 650.7L1298.0 649.6M1360.3 617.6L1362.9 618.1M1339.4 646.1L1337.0 651.7M1385.8 621.2L1390.1 621.9M1373.9 591.4L1372.7 595.2M1401.6 596.2L1404.1 600.4M1367.5 518.0L1366.7 520.7M1300.1 562.6L1303.8 559.4M1332.9 563.8L1335.0 568.4M1297.5 687.7L1302.2 686.7M1299.4 533.1L1299.3 528.9M1408.5 620.7L1404.1 622.3M1325.4 596.5L1327.4 598.7M1350.6 515.2L1350.0 520.4M1331.1 641.0L1331.7 643.5M1390.1 621.9L1394.4 622.0M1343.3 682.7L1340.0 680.2M1330.1 655.4L1331.4 657.5M1312.2 628.6L1316.4 629.5M1306.3 657.5L1304.9 662.2M1335.5 564.5L1339.3 566.9M1317.9 603.1L1318.7 607.4M1326.7 651.1L1324.6 654.3M1300.3 691.2L1297.5 687.7M1321.9 479.7L1324.8 480.3M1310.2 475.8L1308.5 479.2M1352.0 599.4L1354.2 602.7M1316.4 629.5L1318.8 628.1M1303.8 465.3L1307.9 465.4M1367.4 524.1L1366.7 527.5M1312.0 658.1L1309.1 662.6M1318.2 664.9L1322.1 669.6M1339.2 551.4L1342.0 551.5M1345.3 607.2L1347.1 611.8M1362.7 511.2L1361.4 513.3M1315.2 476.2L1313.3 480.1M1381.5 604.0L1381.2 607.9M1330.2 567.3L1328.2 570.5M1347.6 631.8L1350.4 632.3M1304.3 480.8L1302.8 483.7M1361.1 571.4L1364.1 575.3M1323.2 665.7L1324.9 668.6M1364.5 531.6L1361.6 533.9M1314.2 488.2L1318.3 488.4M1330.4 682.6L1331.0 687.6M1320.9 692.4L1322.5 688.4M1386.2 555.4L1391.7 557.2M1331.3 672.3L1333.4 675.3M1322.5 676.0L1323.8 679.6M1300.3 579.5L1303.2 578.6M1334.0 502.3L1338.6 502.6M1407.1 607.1L1408.5 610.1M1322.6 532.0L1327.7 533.4M1340.0 680.2L1338.4 682.4M1304.1 536.9L1307.5 540.6M1297.4 640.7L1300.6 640.3M1394.1 574.6L1396.1 578.7M1337.4 672.0L1339.5 675.7M1316.3 471.2L1313.7 472.7M1335.5 564.5L1339.7 562.7M1320.1 482.9L1320.4 486.9M1336.7 687.9L1331.0 687.6M1333.1 617.6L1330.9 621.6M1303.8 513.8L1307.2 512.9M1307.8 536.8L1312.1 541.8M1300.6 640.3L1305.0 640.4M1364.8 541.2L1367.2 544.3M1333.0 683.2L1331.0 687.6M1352.6 643.7L1356.6 644.1M1316.3 580.5L1316.4 584.9M1342.1 488.4L1343.8 491.2M1376.8 566.3L1381.4 566.0M1404.4 613.5L1404.9 617.2M1327.1 489.7L1329.3 495.4M1338.9 618.1L1335.5 622.4M1347.8 578.1L1350.4 580.8M1307.2 512.9L1310.9 512.0M1366.6 622.1L1364.0 624.8M1311.8 520.0L1315.4 519.4M1343.3 493.4L1347.6 497.1M1356.6 644.1L1360.8 643.0M1370.5 541.6L1372.2 545.0M1340.5 650.4L1344.6 650.4M1344.9 586.0L1342.8 588.1M1381.4 566.0L1384.6 567.5M1301.6 573.9L1305.6 574.9M1316.1 501.1L1316.3 504.5M1369.9 621.8L1368.1 624.5M1315.4 519.4L1318.9 519.1M1347.3 553.6L1344.0 555.5M1298.1 621.5L1299.4 625.0M1344.6 650.4L1347.9 651.5M1292.0 663.1L1297.5 666.5M1371.0 588.4L1370.5 592.1M1305.6 574.9L1307.9 575.3M1331.0 578.0L1336.1 577.4M1400.4 625.0L1398.1 629.7M1309.8 527.2L1314.4 525.9M1350.3 552.2L1348.1 555.6M1300.2 587.9L1302.0 584.3M1299.2 524.7L1304.1 524.6M1341.0 658.1L1343.9 659.1M1376.1 588.3L1373.9 591.4M1399.7 593.2L1397.3 596.9M1336.1 577.4L1341.5 578.5M1363.4 582.6L1367.2 580.8M1306.8 533.3L1311.6 533.3M1354.2 641.0L1356.6 644.1M1309.0 624.8L1313.0 626.3M1318.3 642.7L1318.3 648.2M1404.6 592.6L1401.6 596.2M1322.2 560.8L1319.8 562.6M1316.4 600.1L1311.9 604.3M1367.2 580.8L1370.9 580.8M1391.0 585.8L1394.5 585.1M1328.6 516.0L1331.9 520.0M1355.1 653.4L1354.0 658.4M1340.7 627.9L1343.9 628.8M1335.6 657.2L1333.9 662.1M1360.7 562.6L1358.1 567.9M1318.2 599.8L1317.9 603.1M1394.5 585.1L1398.3 584.2M1347.4 662.7L1345.3 664.3M1358.4 655.0L1357.9 657.7M1347.4 524.3L1349.5 527.9M1356.2 566.5L1353.7 570.0M1371.9 631.9L1376.5 632.5M1364.7 564.7L1363.7 566.9M1323.1 527.2L1326.6 530.2M1348.0 664.9L1351.2 669.5M1347.6 603.5L1345.3 607.2M1312.2 593.6L1315.6 593.6M1304.3 690.1L1306.5 687.0M1336.7 687.9L1338.4 682.4M1349.8 522.8L1353.1 526.9M1374.9 643.6L1368.8 643.5M1358.1 567.9L1356.8 569.7M1382.9 543.1L1379.3 545.1M1411.0 583.2L1408.6 582.7M1372.8 606.0L1371.8 611.6M1348.9 533.5L1346.4 536.9M1337.8 595.3L1342.4 595.6M1305.3 488.3L1303.4 490.4M1311.7 504.4L1316.3 504.5M1320.6 552.2L1326.2 552.6M1346.2 531.3L1348.9 533.5M1392.0 571.9L1388.7 573.7M1326.7 640.8L1331.1 641.0M1300.1 592.1L1303.0 593.1M1311.4 579.1L1308.1 582.4M1325.3 683.7L1325.8 690.0M1400.3 610.1L1398.6 614.8M1342.4 595.6L1346.0 597.0M1331.1 542.8L1329.5 546.0M1366.7 599.0L1369.1 600.5M1309.9 488.1L1305.6 490.5M1362.9 618.1L1361.5 621.6M1333.0 512.1L1337.0 511.7M1332.8 538.2L1331.1 542.8M1297.6 625.7L1298.8 628.0M1315.2 579.1L1313.7 581.0M1304.7 646.4L1309.4 647.4M1317.4 546.3L1314.3 548.5M1406.2 612.0L1404.4 613.5M1316.4 617.2L1319.5 622.7M1369.1 600.5L1374.4 599.2M1391.9 602.3L1397.3 603.3M1394.4 622.0L1394.2 626.6M1340.4 519.2L1345.6 518.8M1296.3 654.8L1301.3 653.3M1322.5 617.4L1324.0 622.6M1374.4 528.7L1376.3 532.4M1309.9 494.1L1307.2 499.2M1349.0 622.3L1351.4 624.1M1397.3 603.3L1401.5 602.4M1345.5 502.0L1343.7 506.5M1307.7 611.1L1312.3 611.2M1345.6 518.8L1350.0 520.4M1318.8 628.1L1318.3 631.6M1306.4 505.1L1304.1 509.4M1335.1 526.7L1339.9 528.2M1327.9 585.3L1329.1 587.9M1301.4 661.9L1304.9 662.2M1376.3 532.4L1378.1 536.2M1353.2 621.3L1355.5 626.0M1379.9 626.3L1382.4 629.7M1312.3 611.2L1318.0 611.7M1337.9 632.7L1339.8 636.2M1330.1 552.9L1331.3 556.5M1324.4 629.8L1321.1 632.9M1411.8 600.0L1407.1 600.3M1339.9 528.2L1344.8 526.1M1311.7 504.4L1308.6 508.3M1332.3 534.8L1336.7 534.9M1356.2 589.9L1357.0 592.3M1345.6 547.9L1347.3 553.6M1304.9 662.2L1309.1 662.6M1316.7 668.9L1322.1 669.6M1378.4 641.3L1374.9 643.6M1385.2 625.4L1386.0 629.9M1321.3 639.0L1318.3 642.7M1339.3 614.6L1344.9 613.6M1354.5 516.7L1357.0 520.4M1378.1 556.8L1379.2 559.7M1298.9 507.9L1301.6 508.3M1336.7 534.9L1339.2 534.3M1305.6 635.7L1309.7 639.4M1383.3 592.9L1384.1 597.4M1314.1 541.4L1319.4 540.6M1301.7 557.2L1303.8 559.4M1322.1 669.6L1324.9 668.6M1330.7 676.5L1333.4 675.3M1292.0 663.1L1292.6 659.0M1308.8 588.2L1312.6 587.8M1368.5 618.8L1370.7 618.8M1347.2 647.1L1344.6 650.4M1301.8 642.9L1304.7 646.4M1303.8 559.4L1307.4 563.5M1319.4 540.6L1323.6 540.6M1375.7 546.6L1379.3 545.1M1314.8 657.5L1316.1 662.1M1333.4 675.3L1339.5 675.7M1390.9 562.7L1388.6 567.9M1306.5 687.0L1311.0 686.5M1299.2 524.7L1299.1 520.5M1370.8 602.4L1370.3 606.9M1313.3 524.2L1309.8 527.2M1358.8 516.8L1357.0 520.4M1333.4 596.9L1335.2 599.7M1350.5 646.8L1347.9 651.5M1337.1 593.1L1339.8 592.9M1398.7 621.7L1404.1 622.3M1315.8 664.1L1313.9 669.9M1338.6 654.8L1341.0 658.1M1320.5 657.8L1322.1 662.2M1344.7 563.6L1347.9 568.2M1324.9 604.4L1326.9 606.0M1301.4 661.9L1297.5 666.5M1311.0 686.5L1315.8 686.3M1398.2 608.2L1397.5 611.1M1319.4 476.9L1316.7 478.7M1349.3 676.9L1348.4 671.4M1341.4 654.8L1343.9 659.1M1362.6 597.1L1367.8 596.5M1327.3 671.9L1325.7 675.4M1339.3 566.9L1340.2 571.6M1347.3 553.6L1350.3 552.2M1333.2 666.0L1337.1 669.2M1352.5 608.1L1356.3 609.7M1386.2 638.1L1386.7 635.6M1368.6 569.6L1373.1 575.4M1303.8 559.4L1310.0 559.3M1357.3 608.0L1359.2 610.7M1379.1 610.2L1382.6 614.7M1330.7 676.5L1331.9 679.9M1341.5 578.5L1338.3 581.6M1309.9 494.1L1313.1 494.8M1394.1 598.9L1399.6 600.1M1402.1 574.4L1404.3 577.9M1310.0 559.3L1312.3 559.0M1363.3 536.9L1362.0 542.5M1344.7 563.6L1348.0 563.7M1385.4 611.2L1386.1 613.9M1300.0 470.0L1301.3 466.0M1347.0 617.3L1349.0 622.3M1333.0 493.5L1332.7 497.8M1310.7 606.5L1315.0 606.3M1316.1 539.2L1319.4 540.6M1405.0 573.5L1407.7 578.3M1325.9 582.5L1323.1 586.2M1348.0 563.7L1353.1 563.4M1384.6 567.5L1388.6 567.9M1325.4 502.0L1327.1 505.3M1392.4 551.4L1395.5 554.3M1338.3 494.6L1335.4 497.0M1379.2 622.7L1379.9 626.3M1307.3 547.9L1305.5 552.8M1337.2 611.7L1341.5 610.9M1378.4 542.4L1379.3 545.1M1302.8 498.3L1303.6 502.1M1328.8 581.2L1327.9 585.3M1352.1 584.3L1350.0 588.2M1388.6 567.9L1394.0 566.4M1307.9 575.3L1312.2 574.4M1395.5 554.3L1398.5 557.2M1361.3 659.6L1359.0 663.1M1301.7 629.4L1303.5 633.4M1311.5 548.5L1309.7 553.4M1364.7 613.5L1370.0 613.2M1358.4 585.4L1356.2 589.9M1379.3 589.2L1377.3 592.3M1312.2 574.4L1317.3 574.9M1359.0 663.1L1356.7 666.7M1295.9 638.2L1296.5 634.0M1367.4 633.2L1366.4 636.2M1306.3 628.4L1307.8 633.8M1358.9 551.8L1356.0 556.9M1370.0 613.2L1373.0 614.3M1310.9 512.0L1308.3 516.2M1392.0 618.3L1398.0 617.2M1298.0 649.6L1296.3 654.8M1384.4 589.2L1383.3 592.9M1344.7 578.2L1347.8 578.1M1296.5 634.0L1297.1 629.8M1326.8 646.9L1326.7 651.1M1298.8 499.4L1298.9 495.2M1398.0 617.2L1402.5 618.9M1301.8 650.9L1301.3 653.3M1362.9 640.0L1365.1 643.9M1317.6 624.9L1320.7 625.2M1377.1 581.3L1381.2 582.1M1329.5 646.0L1332.1 652.0M1341.3 523.1L1339.9 528.2M1298.9 495.2L1298.9 491.0M1320.7 625.2L1326.5 625.9M1335.1 521.0L1338.9 523.6M1363.7 566.9L1365.7 570.3M1343.9 659.1L1341.6 662.2M1374.4 563.8L1376.8 566.3M1371.4 552.0L1377.0 552.6M1403.0 586.3L1407.3 586.3M1321.1 632.9L1325.0 632.0M1327.1 483.8L1331.4 483.5M1337.6 530.1L1336.7 534.9M1353.9 629.2L1357.0 628.2M1394.6 572.0L1397.0 575.3M1297.3 667.8L1293.6 671.4M1354.2 602.7L1352.5 608.1M1381.2 607.9L1385.4 611.2M1303.3 475.0L1304.3 480.8M1366.4 636.2L1370.3 636.7M1341.9 532.0L1339.2 534.3M1333.0 493.5L1338.3 494.6M1296.0 676.0L1293.9 679.9M1290.2 679.9L1293.9 679.9M1383.8 631.8L1389.2 633.1M1367.7 566.6L1365.7 570.3M1337.2 608.2L1341.5 610.9M1319.0 578.4L1321.5 581.2M1307.5 476.9L1308.5 479.2M1314.2 488.2L1310.9 491.8M1319.2 505.0L1323.2 505.1M1342.9 538.6L1344.0 542.9M1334.3 639.4L1337.9 640.9M1398.9 570.5L1397.0 575.3M1319.4 473.9L1319.4 476.9M1374.4 563.8L1378.7 562.7M1298.9 491.0L1303.7 494.1M1318.3 488.4L1314.5 491.6M1323.2 505.1L1327.1 505.3M1340.1 511.5L1345.4 512.0M1322.4 576.9L1321.5 581.2M1313.7 646.1L1318.3 648.2M1325.3 546.4L1324.3 549.1M1356.2 580.7L1352.1 584.3M1302.8 613.9L1300.7 617.3M1410.3 612.5L1407.9 613.6M1308.0 570.8L1311.7 572.0M1316.8 495.6L1319.5 499.2M1375.9 618.4L1373.4 621.2M1345.4 512.0L1348.5 512.1M1350.0 520.4L1354.0 520.5M1308.1 582.4L1310.6 585.0M1336.1 549.4L1334.0 551.5M1304.3 655.2L1309.2 654.1M1394.2 635.4L1389.2 633.1M1375.1 625.7L1373.2 629.5M1383.3 586.5L1379.3 589.2M1339.1 573.9L1341.5 575.4M1299.4 625.0L1298.8 628.0M1354.0 520.5L1357.0 520.4M1340.0 549.7L1339.2 551.4M1344.8 526.1L1349.5 527.9M1384.2 551.7L1382.5 556.2M1336.4 584.1L1337.3 589.0M1309.1 662.6L1312.8 662.7M1409.1 588.2L1407.1 593.0M1341.5 575.4L1345.9 574.9M1298.9 491.0L1299.9 487.4M1394.2 626.6L1398.1 629.7M1389.2 548.6L1385.7 548.7M1347.6 631.8L1349.8 636.3M1369.1 577.3L1374.0 578.6M1331.0 630.1L1331.1 633.7M1319.2 505.0L1318.4 508.9M1349.5 527.9L1353.1 526.9M1387.6 553.1L1386.2 555.4M1339.2 534.3L1344.2 533.6M1362.9 588.6L1364.5 591.4M1303.0 593.1L1301.4 595.7M1325.4 596.5L1324.6 600.7M1374.0 578.6L1377.8 577.3M1350.4 632.3L1351.9 635.0M1331.1 641.0L1328.7 644.7M1400.4 581.0L1404.4 582.9M1362.5 517.0L1366.7 520.7M1355.2 646.9L1357.8 650.3M1335.5 564.5L1335.0 568.4M1369.9 521.5L1366.7 520.7M1344.2 533.6L1348.9 533.5M1390.0 593.5L1392.0 597.3M1320.4 486.9L1323.8 490.2M1330.5 668.1L1333.0 670.2M1329.0 595.6L1327.4 598.7M1298.9 486.8L1299.9 487.4M1352.0 599.4L1350.2 604.4M1404.4 582.9L1408.6 582.7M1388.9 560.0L1390.9 562.7M1301.7 519.8L1300.6 522.9M1359.5 648.4L1362.0 651.6M1303.9 682.9L1309.4 683.7M1401.4 560.3L1398.5 563.6M1328.1 542.6L1331.1 542.8M1394.6 592.7L1397.3 596.9M1343.2 677.4L1346.4 676.8M1357.6 600.8L1354.2 602.7M1324.7 522.7L1327.7 526.4M1322.7 589.5L1326.0 588.0M1381.5 604.0L1378.3 606.4M1323.2 665.7L1322.1 669.6M1310.3 496.9L1314.2 497.1M1327.4 658.8L1330.7 660.7M1312.0 599.0L1311.9 604.3M1307.3 547.9L1311.5 548.5M1322.5 676.0L1318.8 681.0M1394.0 566.4L1392.0 571.9M1308.7 618.6L1309.0 624.8M1313.4 596.2L1317.4 597.1M1319.2 688.0L1322.5 688.4M1299.7 545.8L1302.1 542.3M1407.1 607.1L1406.2 612.0M1349.4 593.8L1354.0 592.8M1322.6 532.0L1324.6 535.1M1337.4 672.0L1333.4 675.3M1347.9 568.2L1347.8 572.0M1300.1 566.8L1304.5 567.2M1339.0 602.6L1340.6 607.5M1317.3 574.9L1315.2 579.1M1307.8 536.8L1307.5 540.6M1376.0 595.9L1379.8 596.0M1342.1 488.4L1340.3 490.4M1303.9 582.9L1305.7 588.4M1347.8 578.1L1347.1 581.8M1327.5 614.1L1325.0 618.8M1343.3 493.4L1344.5 498.8M1404.1 600.4L1407.1 600.3M1370.5 541.6L1367.2 544.3M1383.6 571.9L1383.9 575.0M1305.1 517.1L1308.3 516.2M1410.2 579.1L1408.6 582.7M1333.3 581.5L1336.4 584.1M1353.4 577.7L1350.4 580.8M1341.7 646.1L1347.2 647.1M1303.3 462.6L1307.1 462.6M1299.9 487.4L1303.4 490.4M1355.5 618.1L1356.3 622.0M1318.7 607.4L1322.4 606.7M1314.3 548.5L1318.2 553.7M1411.4 604.2L1408.4 604.2M1305.7 577.4L1308.1 582.4M1308.7 546.3L1311.5 548.5M1310.0 524.7L1313.3 524.2M1338.3 581.6L1341.1 585.8M1361.2 584.4L1362.9 588.6M1333.6 655.2L1338.6 654.8M1307.1 462.6L1310.5 465.0M1334.0 502.3L1335.1 505.5M1398.5 557.2L1401.4 560.3M1320.0 549.7L1320.6 552.2M1347.1 611.8L1350.7 611.1M1299.2 524.7L1300.6 522.9M1304.5 529.6L1309.2 529.8M1364.6 584.8L1368.8 589.5M1389.7 587.9L1390.0 593.5M1338.0 660.9L1341.6 662.2M1401.4 560.3L1404.0 563.5M1356.7 666.7L1354.5 670.2M1300.3 583.7L1302.0 584.3M1312.2 628.6L1312.2 633.8M1368.8 553.7L1369.2 556.4M1373.0 614.3L1378.4 613.9M1369.9 534.2L1374.7 533.5M1299.3 608.9L1299.8 611.4M1391.7 588.0L1394.6 592.7M1331.1 633.7L1334.9 636.1M1354.5 670.2L1352.1 673.6M1367.6 538.6L1367.2 544.3M1297.1 629.8L1297.6 625.7M1376.5 632.5L1373.7 635.8M1316.4 629.5L1318.3 631.6M1359.3 639.2L1356.6 644.1M1318.9 512.4L1316.4 517.1M1353.0 541.3L1357.1 542.4M1307.7 596.0L1312.0 599.0M1373.4 621.2L1379.2 622.7M1297.6 625.7L1298.1 621.5M1319.8 562.6L1320.9 567.7M1312.1 651.5L1309.2 654.1M1323.1 527.2L1322.6 532.0M1300.2 571.0L1301.5 570.2M1357.1 542.4L1362.0 542.5M1343.2 559.4L1344.7 563.6M1335.2 599.7L1339.0 602.6M1304.3 690.1L1302.2 686.7M1298.8 628.0L1301.7 629.4M1336.7 687.9L1333.0 683.2M1299.0 512.1L1301.6 508.3M1298.9 486.8L1299.0 482.6M1349.8 522.8L1349.5 527.9M1329.6 625.9L1334.0 625.2M1372.2 566.3L1374.7 569.9M1336.1 549.4L1340.0 549.7M1381.4 564.0L1384.6 567.5M1299.7 474.2L1303.3 475.0M1364.4 604.2L1366.3 605.9M1331.1 633.7L1334.2 632.3M1354.4 523.8L1353.1 526.9M1307.7 664.4L1309.3 669.7M1371.7 646.3L1368.8 643.5M1346.2 531.3L1344.2 533.6M1369.2 556.4L1374.5 556.6M1360.5 628.5L1366.0 629.6M1303.9 676.8L1306.3 678.8M1376.8 566.3L1377.2 570.8M1384.2 551.7L1387.6 553.1M1367.4 604.4L1370.3 606.9M1390.8 605.9L1392.7 611.9M1366.7 534.3L1367.6 538.6M1373.7 635.8L1378.0 635.8M1351.5 530.0L1348.9 533.5M1292.6 659.0L1296.2 662.2M1319.8 672.3L1322.5 676.0M1301.6 573.9L1303.2 578.6M1343.2 559.4L1346.5 559.3M1395.1 608.3L1397.5 611.1M1306.8 614.6L1308.7 618.6M1336.7 644.4L1341.6 643.5M1324.9 486.5L1327.1 489.7M1349.7 538.7L1353.0 541.3M1322.5 617.4L1319.5 622.7M1331.0 578.0L1333.3 581.5M1404.2 627.9L1400.4 625.0M1381.4 564.0L1387.4 563.4M1312.1 614.1L1314.4 618.6M1327.3 476.5L1331.4 477.6M1349.2 606.5L1352.5 608.1M1353.2 621.3L1351.4 624.1M1363.4 582.6L1361.2 584.4M1314.4 570.2L1319.7 571.7M1325.4 494.0L1328.3 496.9M1333.0 670.2L1333.4 675.3M1411.0 583.2L1411.6 587.3M1385.6 618.5L1382.8 620.8M1353.2 512.6L1356.7 512.3M1309.0 624.8L1312.2 628.6M1345.6 547.9L1342.0 551.5M1375.5 611.2L1379.1 610.2M1344.9 586.0L1350.0 588.2M1385.2 625.4L1382.4 629.7M1391.0 585.8L1389.7 587.9M1345.9 574.9L1349.9 574.5M1324.6 656.8L1327.4 658.8M1336.7 687.9L1333.2 690.2M1305.6 635.7L1305.0 640.4M1348.4 548.4L1347.3 553.6M1340.7 627.9L1342.4 632.6M1327.1 505.3L1328.8 509.1M1307.3 593.7L1305.1 597.0M1343.2 509.3L1345.4 512.0M1337.9 640.9L1341.6 643.5M1335.6 664.1L1341.5 665.9M1300.0 600.5L1300.1 596.3M1310.5 636.7L1309.7 639.4M1301.8 642.9L1300.1 647.0M1348.5 512.1L1347.7 515.8M1303.8 559.4L1302.5 564.5M1350.4 580.8L1356.2 580.7M1306.2 520.9L1310.0 524.7M1307.0 555.3L1303.8 559.4M1410.9 608.3L1408.5 610.1M1312.2 593.6L1307.7 596.0M1333.4 596.9L1333.1 599.9M1382.9 576.9L1387.7 577.5M1359.2 633.1L1360.6 636.4M1368.8 649.4L1365.7 650.2M1303.8 513.8L1305.1 517.1M1300.1 596.3L1300.1 592.1M1307.9 644.3L1304.7 646.4M1310.0 559.3L1307.4 563.5M1320.5 657.8L1316.1 662.1M1344.7 563.6L1341.7 566.6M1363.5 646.6L1365.7 650.2M1378.1 584.8L1383.3 586.5M1337.8 595.3L1335.2 599.7M1341.4 654.8L1341.0 658.1M1311.8 520.0L1310.0 524.7M1307.9 469.0L1311.2 469.4M1348.0 563.7L1347.9 568.2M1307.7 526.9L1309.2 529.8M1333.2 666.0L1333.0 670.2M1405.3 588.3L1409.1 588.2M1366.7 599.0L1364.4 604.2M1366.2 652.7L1365.7 650.2M1334.9 522.6L1335.1 526.7M1329.1 587.9L1334.9 588.3M1308.5 690.5L1311.0 686.5M1386.2 638.1L1382.0 635.8M1324.9 486.5L1330.6 488.3M1345.1 671.6L1346.4 676.8M1357.3 608.0L1356.3 609.7M1322.0 596.4L1325.4 596.5M1400.6 567.7L1398.9 570.5M1330.7 676.5L1327.8 680.0M1391.9 602.3L1390.8 605.9M1330.0 531.5L1332.3 534.8M1357.0 592.3L1360.7 592.0M1309.7 639.4L1314.3 641.1M1324.3 499.3L1328.3 496.9M1385.4 611.2L1382.6 614.7M1333.4 675.3L1331.9 679.9M1320.2 534.4L1320.5 538.6M1327.0 635.2L1332.6 637.2M1347.9 600.3L1352.0 599.4M1331.4 483.5L1333.7 486.3M1349.0 622.3L1349.3 628.0M1307.7 611.1L1306.8 614.6M1335.9 614.8L1338.9 618.1M1316.1 539.2L1314.1 541.4M1405.0 573.5L1404.3 577.9M1365.1 643.9L1368.8 643.5M1348.4 671.4L1346.4 676.8M1297.1 629.8L1301.7 629.4M1372.7 638.8L1377.0 639.5M1325.2 692.5L1325.8 690.0M1378.4 542.4L1375.7 546.6M1302.8 498.3L1299.6 501.0M1353.8 650.8L1357.8 650.3M1312.4 516.0L1316.4 517.1M1341.5 580.6L1344.9 586.0M1361.1 577.9L1360.5 582.5M1298.8 499.4L1300.2 495.4M1307.2 499.2L1303.6 502.1M1324.3 549.1L1326.2 552.6M1348.5 657.4L1354.0 658.4M1316.1 523.9L1321.8 523.1M1374.2 549.3L1371.4 552.0M1347.1 581.8L1349.7 585.7M1369.4 585.6L1371.0 588.4M1313.4 468.1L1316.3 471.2M1308.8 588.2L1307.3 593.7M1306.3 628.4L1303.5 633.4M1377.0 574.8L1380.5 575.2M1328.8 549.2L1330.1 552.9M1354.0 658.4L1357.9 657.7M1300.7 669.1L1304.7 668.6M1313.1 531.1L1318.5 531.9M1374.0 585.0L1376.1 588.3M1331.3 556.5L1328.9 559.5M1396.5 589.2L1399.7 593.2M1324.1 614.4L1327.5 614.1M1337.1 593.1L1333.4 596.9M1383.8 631.8L1386.7 635.6M1362.9 640.0L1360.8 643.0M1377.0 552.6L1378.1 556.8M1304.7 668.6L1309.3 669.7M1331.7 643.5L1329.5 646.0M1328.7 511.9L1328.6 516.0M1401.4 588.3L1404.6 592.6M1349.8 619.2L1355.5 618.1M1362.6 597.1L1361.1 600.6M1366.6 640.1L1365.1 643.9M1302.1 542.3L1307.5 540.6M1333.0 512.1L1333.4 515.0M1335.1 521.0L1334.9 522.6M1317.5 676.4L1322.5 676.0M1318.9 649.9L1320.9 653.5M1374.4 563.8L1372.2 566.3M1304.1 536.9L1307.8 536.8M1299.6 541.6L1299.5 537.3M1317.4 597.1L1318.2 599.8M1382.8 620.8L1385.8 621.2M1364.5 545.8L1367.2 544.3M1359.0 524.3L1361.1 526.3M1328.9 564.7L1330.2 567.3M1340.4 519.2L1338.9 523.6M1295.0 686.0L1297.5 687.7M1344.4 598.8L1347.6 603.5M1310.5 465.0L1307.9 465.4M1320.9 567.7L1323.9 571.2M1302.8 657.6L1301.4 661.9M1363.0 524.2L1366.7 527.5M1330.1 552.9L1334.0 551.5M1354.4 531.1L1357.1 534.8M1335.1 526.7L1333.7 531.4M1397.9 633.4L1398.1 629.7M1345.6 547.9L1348.4 548.4M1307.5 476.9L1304.3 480.8M1310.7 606.5L1307.7 611.1M1353.7 570.0L1354.1 574.3M1358.5 529.9L1361.6 533.9M1378.1 556.8L1382.5 556.2M1342.9 538.6L1340.7 542.3M1313.4 676.8L1314.3 679.7M1384.6 567.5L1387.5 570.9M1360.2 507.8L1356.7 512.3M1319.4 473.9L1315.2 476.2M1301.7 557.2L1307.0 555.3M1389.2 548.6L1387.6 553.1M1378.6 598.9L1382.6 600.1M1337.2 611.7L1335.9 614.8M1346.4 536.9L1344.0 542.9M1302.9 601.1L1306.0 600.8M1328.9 564.7L1332.9 563.8M1323.2 475.6L1319.4 476.9M1307.9 575.3L1311.4 579.1M1329.5 619.3L1330.9 621.6M1350.7 559.7L1354.1 558.6M1403.9 607.8L1406.2 612.0M1404.5 603.6L1408.4 604.2M1300.4 538.1L1302.1 542.3M1364.7 613.5L1362.9 618.1M1299.3 608.9L1300.5 604.7M1333.7 486.3L1335.9 490.6M1374.0 578.6L1370.9 580.8M1329.5 603.5L1333.8 604.0M1409.6 616.7L1407.9 613.6M1361.5 621.6L1364.0 624.8M1370.9 580.8L1374.0 585.0M1319.5 615.2L1322.5 617.4M1322.2 610.5L1325.7 610.2M1362.0 542.5L1364.5 545.8M1335.1 479.5L1338.5 482.0M1392.0 618.3L1394.4 622.0M1390.2 636.8L1389.2 633.1M1353.1 548.6L1353.9 551.9M1394.2 626.6L1393.7 629.9M1398.3 584.2L1401.4 588.3M1347.8 613.4L1353.0 614.6M1331.0 630.1L1325.0 632.0M1412.0 591.5L1412.0 595.8M1317.6 624.9L1318.8 628.1M1356.3 549.8L1358.9 551.8M1312.0 555.4L1312.3 559.0M1350.4 632.3L1349.8 636.3M1353.0 614.6L1356.8 614.9M1375.9 618.4L1381.1 617.6M1311.6 642.3L1313.7 646.1M1335.1 505.5L1338.7 509.1M1329.0 577.0L1331.0 578.0M1312.3 559.0L1314.1 562.3M1315.3 556.5L1316.4 559.3M1293.9 650.7L1294.6 646.5M1316.8 495.6L1316.1 501.1M1319.3 592.0L1322.0 596.4M1381.1 617.6L1385.6 618.5M1347.4 640.4L1349.3 643.9M1359.5 648.4L1357.8 650.3M1314.7 643.1L1318.3 648.2M1394.6 592.7L1392.0 597.3M1319.4 635.7L1317.3 640.8M1356.7 512.3L1354.5 516.7M1360.5 582.5L1363.4 582.6M1299.0 512.1L1298.9 507.9M1346.0 597.0L1347.9 600.3M1351.2 639.4L1352.6 643.7M1305.2 625.0L1309.0 624.8M1351.8 653.4L1354.0 658.4M1300.2 587.9L1300.3 583.7M1318.9 519.1L1321.8 523.1M1316.4 559.3L1314.1 562.3M1327.4 658.8L1326.9 661.5M1357.1 562.8L1358.1 567.9M1312.0 599.0L1309.4 603.4M1385.8 585.7L1391.0 585.8M1344.3 488.1L1342.1 488.4M1347.9 651.5L1345.8 653.8M1309.9 483.1L1316.2 484.0M1374.4 599.2L1375.9 602.4M1336.4 629.2L1340.7 627.9M1305.2 472.1L1308.6 473.4M1331.4 657.5L1330.7 660.7M1314.4 525.9L1318.5 531.9M1341.5 665.9L1341.5 668.2M1339.0 602.6L1337.2 608.2M1316.8 495.6L1322.6 494.0M1401.5 602.4L1403.9 607.8M1351.7 567.6L1347.8 572.0M1367.4 633.2L1371.9 631.9M1324.8 480.3L1323.2 482.9M1345.3 664.3L1346.4 669.4M1333.7 486.3L1338.8 487.4M1308.0 570.8L1307.9 575.3M1302.6 504.2L1306.4 505.1M1318.0 611.7L1319.5 615.2M1383.6 571.9L1380.5 575.2M1317.3 640.8L1321.3 639.0M1325.9 537.5L1328.1 542.6M1332.7 497.8L1335.4 497.0M1357.1 562.8L1360.7 562.6M1343.2 677.4L1340.0 680.2M1298.1 621.5L1300.7 617.3M1379.2 559.7L1385.2 560.5M1344.9 613.6L1347.0 617.3M1321.3 639.0L1326.7 640.8M1328.7 537.1L1331.1 542.8M1305.7 577.4L1303.9 582.9M1295.1 646.6L1300.1 647.0M1310.3 496.9L1313.6 502.5M1320.4 491.3L1316.8 495.6M1349.8 494.5L1347.8 495.0M1304.1 509.4L1308.6 508.3M1338.3 581.6L1336.4 584.1M1396.9 566.0L1400.6 567.7M1374.9 538.9L1370.5 541.6M1361.1 600.6L1366.7 599.0M1360.3 617.6L1356.3 622.0M1369.1 577.3L1370.9 580.8M1320.0 549.7L1318.2 553.7M1410.9 608.3L1408.4 604.2M1313.0 544.6L1311.5 548.5M1300.1 647.0L1304.7 646.4M1362.0 651.6L1365.7 650.2M1364.6 584.8L1362.9 588.6M1321.2 573.4L1326.1 573.4M1390.1 621.9L1389.8 626.3M1400.4 581.0L1398.3 584.2M1314.2 497.1L1313.6 502.5M1391.7 588.0L1390.0 593.5M1381.5 549.8L1380.2 551.4M1353.4 577.7L1357.7 576.9M1316.4 629.5L1312.2 633.8M1302.6 504.2L1301.6 508.3M1333.1 527.2L1335.1 526.7M1345.9 589.7L1349.4 593.8M1296.2 662.2L1301.4 661.9M1309.3 669.7L1313.9 669.9M1357.7 576.9L1361.1 577.9M1374.4 528.7L1374.7 533.5M1327.7 533.4L1332.3 534.8M1313.9 669.9L1316.7 668.9M1341.6 643.5L1339.4 646.1M1313.4 596.2L1312.0 599.0M1343.2 559.4L1339.7 562.7M1388.1 582.3L1392.8 582.2M1343.3 682.7L1344.3 679.1M1312.1 541.8L1314.1 541.4M1300.1 566.8L1301.5 570.2M1346.5 559.3L1344.7 563.6M1325.7 675.4L1330.7 676.5M1326.7 651.1L1330.1 655.4M1381.4 564.0L1381.4 566.0M1341.3 599.4L1339.0 602.6M1300.3 691.2L1302.2 686.7M1305.7 588.4L1308.8 588.2M1303.8 465.3L1302.2 469.7M1367.4 524.1L1369.0 527.0M1312.0 658.1L1312.8 662.7M1350.0 520.4L1347.4 524.3M1376.8 566.3L1374.7 569.9M1372.2 545.0L1375.7 546.6M1387.4 563.4L1384.6 567.5M1302.2 686.7L1306.5 687.0M1367.4 604.4L1366.3 605.9M1331.1 593.4L1337.1 593.1M1315.2 476.2L1316.7 478.7M1381.5 604.0L1385.5 607.6M1330.2 567.3L1333.1 571.0M1339.7 562.7L1341.7 566.6M1304.3 480.8L1307.0 483.8M1364.5 531.6L1366.7 534.3M1381.4 566.0L1377.2 570.8M1344.8 526.1L1341.9 532.0M1395.1 608.3L1392.7 611.9M1358.5 596.9L1362.6 597.1M1308.5 479.2L1309.9 483.1M1367.8 529.6L1369.9 534.2M1305.6 574.9L1303.2 578.6M1349.7 538.7L1348.5 542.7M1331.0 578.0L1328.8 581.2M1308.4 500.5L1313.6 502.5M1317.3 574.9L1322.4 576.9M1312.1 614.1L1308.7 618.6M1386.5 600.1L1391.6 599.4M1330.6 488.3L1327.1 489.7M1347.1 611.8L1344.9 613.6M1355.7 538.0L1353.0 541.3M1336.1 577.4L1333.3 581.5M1335.3 509.7L1338.7 509.1M1338.9 618.1L1339.4 620.9M1391.6 599.4L1394.1 598.9M1303.7 606.9L1307.1 606.1M1309.0 624.8L1306.3 628.4M1362.0 520.7L1366.7 520.7M1373.0 614.3L1370.7 618.8M1339.7 562.7L1344.7 563.6M1337.5 546.1L1332.5 548.3M1316.7 654.7L1320.9 653.5M1369.9 621.8L1370.9 625.7M1307.1 606.1L1310.7 606.5M1329.7 610.7L1333.9 609.7M1340.7 627.9L1337.9 632.7M1327.1 505.3L1325.2 510.1M1344.5 498.8L1343.0 502.0M1356.3 527.0L1361.1 526.3M1349.7 585.7L1350.0 588.2M1322.1 662.2L1326.9 661.5M1389.2 548.6L1392.4 551.4M1373.4 621.2L1375.1 625.7M1333.9 609.7L1337.2 611.7M1350.3 552.2L1353.8 555.9M1356.8 614.9L1361.7 614.4M1352.7 535.1L1357.1 534.8M1376.1 588.3L1377.3 592.3M1365.6 549.4L1368.8 553.7M1337.1 669.2L1341.5 668.2M1363.7 656.1L1361.3 659.6M1300.2 588.0L1303.0 593.1M1359.2 633.1L1357.1 635.1M1303.8 513.8L1300.2 516.4M1361.7 614.4L1364.7 613.5M1314.3 636.8L1309.7 639.4M1385.6 618.5L1388.7 618.1M1357.1 534.8L1361.6 533.9M1327.0 635.2L1331.1 641.0M1404.6 592.6L1405.7 596.1M1318.3 642.7L1321.4 646.1M1322.2 560.8L1323.1 563.6M1341.5 668.2L1346.4 669.4M1323.4 555.1L1324.9 559.1M1293.9 679.9L1297.5 680.1M1295.2 642.3L1295.9 638.2M1328.5 593.8L1329.0 595.6M1307.2 512.9L1305.1 517.1M1388.7 618.1L1392.0 618.3M1367.2 646.4L1365.7 650.2M1322.4 644.7L1326.8 646.9M1324.9 559.1L1328.9 564.7M1340.7 542.3L1344.0 542.9M1335.6 657.2L1338.0 660.9M1318.2 599.8L1322.5 602.6M1360.7 562.6L1363.7 566.9M1297.5 680.1L1302.1 680.3M1357.8 650.3L1358.4 655.0M1366.2 652.7L1362.0 651.6M1328.9 686.3L1331.0 687.6M1298.8 503.7L1298.8 499.4M1354.3 596.5L1357.6 600.8M1313.0 626.3L1317.6 624.9M1328.4 519.7L1329.6 522.8M1320.0 549.7L1324.3 549.1M1364.7 564.7L1367.7 566.6M1347.6 603.5L1349.2 606.5M1322.1 662.2L1318.2 664.9M1320.1 482.9L1323.2 482.9M1382.6 600.1L1385.5 602.6M1384.1 597.4L1388.4 595.3M1343.9 628.8L1349.3 628.0M1358.1 567.9L1361.1 571.4M1341.0 658.1L1338.0 660.9M1355.1 501.0L1351.9 501.2M1368.8 553.7L1371.4 552.0M1320.2 534.4L1316.1 539.2M1372.8 606.0L1375.5 611.2M1303.3 462.6L1303.8 465.3M1325.4 494.0L1329.3 495.4M1376.5 632.5L1381.0 632.4M1392.0 571.9L1394.1 574.6M1324.9 559.1L1328.9 559.5M1293.9 679.9L1296.8 683.7M1309.9 488.1L1310.9 491.8M1381.0 632.4L1383.8 631.8M1332.8 538.2L1337.0 541.2M1315.2 579.1L1316.3 580.5M1328.9 559.5L1332.9 558.8M1307.5 540.6L1305.6 546.2M1317.4 546.3L1320.0 549.7M1364.7 564.7L1370.0 564.4M1406.2 612.0L1407.9 613.6M1361.1 577.9L1356.2 580.7M1345.9 574.9L1347.8 578.1M1316.3 504.5L1319.2 505.0M1339.5 538.1L1340.7 542.3M1331.1 641.0L1334.3 639.4M1347.1 581.8L1344.9 586.0M1370.0 564.4L1374.4 563.8M1298.9 495.2L1300.2 495.4M1309.9 494.1L1310.3 496.9M1368.5 618.8L1366.6 622.1M1406.4 567.0L1408.0 570.9M1337.0 511.7L1340.1 511.5M1304.1 524.6L1304.5 529.6M1328.8 549.2L1326.2 552.6M1300.2 587.9L1305.7 588.4M1359.2 610.7L1364.0 611.8M1309.4 647.4L1313.7 646.1M1324.3 499.3L1325.4 502.0M1350.4 580.8L1349.7 585.7M1321.5 546.0L1320.0 549.7M1374.0 585.0L1371.0 588.4M1301.5 570.2L1308.0 570.8M1331.0 573.9L1334.0 573.3M1398.7 621.7L1396.4 625.6M1349.3 676.9L1346.4 679.9M1324.4 629.8L1325.0 632.0M1311.7 504.4L1312.3 510.2M1332.5 548.3L1330.1 552.9M1386.1 613.9L1390.9 613.3M1378.1 584.8L1376.1 588.3M1401.4 588.3L1399.7 593.2M1334.0 573.3L1339.1 573.9M1361.1 577.9L1366.1 578.7M1385.2 625.4L1389.5 628.6M1298.6 617.3L1299.0 613.1M1389.2 633.1L1386.7 635.6M1380.2 551.4L1378.1 556.8M1405.3 588.3L1404.6 592.6M1317.4 597.1L1316.4 600.1M1366.1 578.7L1369.1 577.3M1300.0 600.5L1301.4 595.7M1298.8 499.4L1302.8 498.3M1392.8 582.2L1396.5 581.1M1299.0 613.1L1299.3 608.9M1328.2 628.1L1325.0 632.0M1312.0 621.5L1314.1 622.6M1338.8 626.0L1341.7 625.5M1350.7 559.7L1348.0 563.7M1322.0 596.4L1318.2 599.8M1390.9 562.7L1394.0 566.4M1396.5 581.1L1400.4 581.0M1358.8 516.8L1362.0 520.7M1350.5 646.8L1353.8 650.8M1363.0 524.2L1361.1 526.3M1341.7 625.5L1345.5 624.3M1368.6 629.1L1373.2 629.5M1357.0 520.4L1359.0 524.3M1354.1 558.6L1353.1 563.4M1301.4 661.9L1302.7 666.5M1347.9 600.3L1347.6 603.5M1312.6 587.8L1316.4 589.3M1309.9 488.1L1314.2 488.2M1358.5 529.9L1357.1 534.8M1300.5 604.7L1303.7 606.9M1307.9 469.0L1308.6 473.4M1373.2 629.5L1379.3 629.4M1384.6 567.5L1383.6 571.9M1305.6 635.7L1310.5 636.7M1297.1 629.8L1301.4 632.6M1394.6 564.0L1394.0 566.4M1316.7 668.9L1315.2 672.3M1375.9 602.4L1372.8 606.0M1299.3 528.9L1302.3 527.5M1353.1 526.9L1354.4 531.1M1339.8 592.9L1345.8 592.9M1307.2 499.2L1310.3 496.9M1317.5 676.4L1314.3 679.7M1388.6 567.9L1387.5 570.9M1310.5 636.7L1314.3 636.8M1301.6 533.2L1304.1 536.9M1307.9 575.3L1305.7 577.4M1372.2 525.1L1367.4 524.1M1403.9 607.8L1400.3 610.1M1367.8 596.5L1372.7 595.2M1333.7 486.3L1332.6 491.9M1339.4 505.2L1343.7 506.5M1316.7 478.7L1320.1 482.9M1312.2 574.4L1311.4 579.1M1354.2 641.0L1359.3 639.2M1363.3 536.9L1364.8 541.2M1319.5 615.2L1316.4 617.2M1372.7 595.2L1376.0 595.9M1299.7 474.2L1301.3 479.0M1299.6 604.7L1300.5 604.7M1343.7 506.5L1347.9 506.4M1338.8 487.4L1335.9 490.6M1392.0 618.3L1390.1 621.9M1347.7 544.4L1345.6 547.9M1334.9 647.6L1339.4 646.1M1344.7 578.2L1341.5 580.6M1324.1 614.4L1322.5 617.4M1338.3 494.6L1339.2 499.0M1399.6 600.1L1404.1 600.4M1379.2 622.7L1385.2 625.4M1349.3 676.9L1346.4 676.8M1398.0 617.2L1394.4 622.0M1411.8 600.0L1408.4 604.2M1317.6 624.9L1316.4 629.5M1300.2 516.4L1305.1 517.1M1300.6 522.9L1304.1 524.6M1356.3 549.8L1353.9 551.9M1328.8 581.2L1330.9 585.3M1324.6 654.3L1330.1 655.4M1301.3 466.0L1303.3 462.6M1349.8 619.2L1353.2 621.3M1358.2 573.7L1364.1 575.3M1367.5 518.0L1362.5 517.0M1315.0 606.3L1318.7 607.4M1299.5 537.3L1300.4 538.1M1311.5 548.5L1312.2 551.6M1320.7 625.2L1318.8 628.1M1304.1 524.6L1310.0 524.7M1335.1 505.5L1335.3 509.7M1366.7 527.5L1369.0 527.0M1358.4 585.4L1358.5 588.6M1315.3 556.5L1312.3 559.0M1374.9 643.6L1372.7 638.8M1330.1 655.4L1333.6 655.2M1330.7 660.7L1333.9 662.1M1319.3 592.0L1317.4 597.1M1382.9 543.1L1378.4 542.4M1382.8 620.8L1385.2 625.4M1346.4 679.9L1346.4 676.8M1335.1 479.5L1335.1 484.7M1367.4 633.2L1370.3 636.7M1390.2 576.9L1396.1 578.7M1358.9 551.8L1361.3 555.1M1310.9 512.0L1312.4 516.0M1314.7 643.1L1313.7 646.1M1339.4 505.2L1338.7 509.1M1353.9 629.2L1350.4 632.3M1361.6 533.9L1366.7 534.3M1299.0 613.1L1299.8 611.4M1384.4 589.2L1386.2 591.9M1333.9 662.1L1338.0 660.9M1346.4 669.4L1351.2 669.5M1346.0 597.0L1344.4 598.8M1351.2 639.4L1349.3 643.9M1310.6 585.0L1316.4 584.9M1314.9 512.0L1316.4 517.1M1318.9 519.1L1316.1 523.9M1301.8 650.9L1304.3 655.2M1366.7 534.3L1369.9 534.2M1344.0 542.9L1348.5 542.7M1301.4 595.7L1302.9 601.1M1379.2 559.7L1378.7 562.7M1302.1 680.3L1306.3 678.8M1374.4 599.2L1370.8 602.4M1337.3 589.0L1342.8 588.1M1323.8 520.7L1321.8 523.1M1348.5 542.7L1353.0 541.3M1343.9 659.1L1347.4 662.7M1327.4 598.7L1329.5 603.5M1306.3 678.8L1311.4 680.6M1378.6 598.9L1375.9 602.4M1401.5 602.4L1398.2 608.2M1342.8 588.1L1345.9 589.7M1306.0 650.6L1304.3 655.2M1364.5 591.4L1370.5 592.1M1409.2 575.0L1405.0 573.5M1345.3 664.3L1341.5 668.2M1320.0 527.6L1318.5 531.9M1348.5 657.4L1351.9 660.6M1328.8 549.2L1332.5 548.3M1297.3 667.8L1298.7 673.6M1308.0 570.8L1305.6 574.9M1354.2 602.7L1357.3 608.0M1330.7 660.7L1328.4 666.2M1404.5 603.6L1403.9 607.8M1318.0 611.7L1316.2 614.1M1310.5 465.0L1307.9 469.0M1370.5 592.1L1373.9 591.4M1341.9 532.0L1344.2 533.6M1296.0 676.0L1297.5 680.1M1367.7 566.6L1368.6 569.6M1300.7 669.1L1302.6 671.5M1377.0 552.6L1380.2 551.4M1359.3 603.3L1362.1 608.2M1339.1 573.9L1336.1 577.4M1322.2 610.5L1319.5 615.2M1328.7 537.1L1328.1 542.6M1397.3 596.9L1401.6 596.2M1294.6 646.5L1295.1 646.6M1380.2 551.4L1384.2 551.7M1398.9 570.5L1402.1 574.4M1332.3 534.8L1328.7 537.1M1332.9 558.8L1337.1 560.3M1385.5 607.6L1388.9 610.6M1341.5 575.4L1341.5 578.5M1369.1 577.3L1367.2 580.8M1302.1 680.3L1303.9 682.9M1347.8 613.4L1347.0 617.3M1318.3 488.4L1320.4 491.3M1311.9 604.3L1317.9 603.1M1403.9 570.2L1405.0 573.5M1322.4 576.9L1325.9 582.5M1337.1 560.3L1343.2 559.4M1325.3 546.4L1328.8 549.2M1356.2 580.7L1358.4 585.4M1314.1 541.4L1313.0 544.6M1302.8 613.9L1304.0 617.4M1319.4 473.9L1323.2 475.6" stroke="#000" stroke-width="0.5" stroke-opacity="0.9" fill="none"/><path d="M1300.0 470.0L1302.4 463.0L1305.7 461.7L1309.6 464.1L1313.7 468.3L1317.6 472.6L1321.0 475.0L1323.8 475.7L1326.4 476.3L1328.9 476.8L1331.2 477.5L1333.6 478.5L1336.0 480.0L1338.5 482.0L1341.1 484.5L1343.6 487.2L1346.1 490.2L1348.6 493.1L1351.0 496.0L1353.3 498.8L1355.6 501.7L1357.8 504.6L1360.0 507.4L1362.0 510.3L1364.0 513.0L1365.9 515.6L1367.7 518.2L1369.4 520.8L1371.0 523.2L1372.5 525.6L1374.0 528.0L1375.3 530.3L1376.4 532.6L1377.4 534.8L1378.5 537.0L1379.6 539.0L1381.0 541.0L1382.6 542.8L1384.4 544.6L1386.3 546.2L1388.3 547.8L1390.2 549.4L1392.0 551.0L1393.8 552.7L1395.6 554.3L1397.3 556.0L1399.0 557.7L1400.6 559.3L1402.0 561.0L1403.3 562.6L1404.4 564.0L1405.4 565.4L1406.3 566.9L1407.2 568.8L1408.0 571.0L1408.8 573.8L1409.7 576.9L1410.5 580.4L1411.1 584.0L1411.7 587.6L1412.0 591.0L1412.1 594.4L1412.0 597.9L1411.7 601.4L1411.4 604.9L1410.9 608.1L1410.5 611.0L1410.1 613.6L1409.7 616.0L1409.3 618.1L1408.7 620.1L1408.0 622.1L1407.0 624.0L1405.8 625.9L1404.4 627.7L1402.8 629.4L1401.0 631.1L1399.1 632.6L1397.0 634.0L1394.6 635.2L1391.9 636.3L1389.0 637.2L1386.1 638.1L1383.4 639.0L1381.0 640.0L1379.0 641.0L1377.2 642.0L1375.6 643.1L1374.1 644.2L1372.6 645.5L1371.0 647.0L1369.3 648.8L1367.7 650.8L1366.0 653.0L1364.3 655.3L1362.7 657.6L1361.0 660.0L1359.4 662.4L1357.8 665.0L1356.2 667.6L1354.6 670.1L1352.8 672.7L1351.0 675.0L1349.0 677.2L1346.9 679.5L1344.6 681.6L1342.4 683.6L1340.1 685.4L1338.0 687.0L1336.0 688.4L1334.2 689.6L1332.4 690.7L1330.6 691.5L1328.5 692.1L1326.0 692.5L1323.1 692.6L1319.8 692.4L1316.2 691.9L1312.7 691.3L1309.2 690.7L1306.0 690.0L1302.8 690.2L1299.4 691.5L1296.1 692.7L1293.3 692.7L1291.1 690.5L1290.0 685.0L1290.3 676.0L1291.8 664.3L1294.0 650.3L1296.4 634.6L1298.6 617.7L1300.0 600.0L1300.3 579.4L1300.0 555.0L1299.3 529.4L1298.8 505.0L1298.9 484.4Z" fill="none" stroke="#111" stroke-width="1"/><path d="M1135.0 392.0L1136.6 392.0L1138.1 391.9L1139.5 391.9L1140.9 392.0L1142.2 392.1L1143.7 392.3L1145.4 392.6L1147.3 392.9L1149.5 393.4L1152.0 394.0L1154.9 394.7L1158.1 395.5L1161.5 396.3L1165.1 397.3L1168.9 398.3L1172.9 399.4L1177.1 400.7L1181.3 402.0L1185.6 403.5L1190.0 405.0L1194.6 406.7L1199.4 408.6L1204.4 410.6L1209.6 412.7L1214.9 414.9L1220.1 417.2L1225.4 419.5L1230.4 421.7L1235.4 423.9L1240.0 426.0L1244.4 428.0L1248.7 429.9L1252.8 431.8L1256.8 433.7L1260.8 435.6L1264.6 437.5L1268.5 439.4L1272.3 441.5L1276.1 443.7L1280.0 446.0L1284.0 448.5L1288.1 451.1L1292.4 453.9L1296.6 456.7L1300.8 459.6L1304.8 462.6L1308.6 465.5L1312.1 468.4L1315.3 471.2L1318.0 474.0L1320.2 476.5L1322.0 478.8L1323.3 480.9L1324.4 482.9L1325.2 485.0L1326.0 487.2L1326.8 489.8L1327.6 492.7L1328.7 496.0L1330.0 500.0L1331.6 504.8L1333.5 510.5L1335.4 516.8L1337.5 523.5L1339.6 530.4L1341.6 537.2L1343.5 543.9L1345.3 550.0L1346.8 555.5L1348.0 560.0L1348.9 563.6L1349.7 566.5L1350.2 568.8L1350.6 570.7L1350.8 572.2L1351.0 573.6L1351.0 575.0L1351.0 576.4L1351.0 578.0L1351.0 580.0L1351.0 582.2L1351.0 584.3L1351.0 586.3L1351.0 588.4L1350.8 590.6L1350.6 592.9L1350.2 595.4L1349.7 598.0L1348.9 600.9L1348.0 604.0L1346.9 607.5L1345.7 611.3L1344.5 615.3L1343.0 619.6L1341.4 624.0L1339.6 628.5L1337.6 633.0L1335.4 637.4L1332.8 641.8L1330.0 646.0L1326.8 650.2L1323.1 654.5L1319.0 658.8L1314.7 663.2L1310.2 667.5L1305.7 671.7L1301.1 675.7L1296.5 679.4L1292.1 682.9L1288.0 686.0L1284.0 688.7L1280.2 691.0L1276.4 693.0L1272.6 694.8L1268.9 696.4L1265.2 697.9L1261.4 699.3L1257.7 700.8L1253.9 702.3L1250.0 704.0L1246.1 705.8L1242.1 707.7L1238.1 709.7L1234.1 711.6L1230.1 713.6L1226.1 715.4L1222.1 717.3L1218.0 719.0L1214.0 720.6L1210.0 722.0L1206.0 723.3L1202.2 724.5L1198.3 725.6L1194.5 726.5L1190.6 727.4L1186.7 728.3L1182.7 729.0L1178.6 729.7L1174.4 730.4L1170.0 731.0L1165.3 731.6L1160.3 732.1L1155.1 732.6L1149.8 733.0L1144.4 733.3L1139.0 733.6L1133.8 733.8L1128.9 733.9L1124.2 734.0L1120.0 734.0L1116.2 733.9L1112.8 733.8L1109.6 733.6L1106.7 733.3L1103.9 732.9L1101.2 732.5L1098.5 732.0L1095.8 731.4L1093.0 730.8L1090.0 730.0L1086.8 729.1L1083.5 728.1L1080.0 727.1L1076.6 725.9L1073.1 724.6L1069.7 723.3L1066.5 722.0L1063.4 720.7L1060.6 719.3L1058.0 718.0L1055.8 716.7L1053.8 715.5L1052.1 714.3L1050.6 713.1L1049.2 711.9L1047.9 710.6L1046.6 709.1L1045.2 707.6L1043.7 705.9L1042.0 704.0L1040.1 701.9L1038.1 699.6L1036.0 697.1L1033.9 694.5L1031.8 691.8L1029.6 689.0L1027.5 686.2L1025.6 683.4L1023.7 680.7L1022.0 678.0L1020.5 675.4L1019.0 672.9L1017.6 670.4L1016.4 667.9L1015.1 665.4L1014.0 662.8L1012.9 660.2L1011.9 657.6L1010.9 654.8L1010.0 652.0L1009.1 649.1L1008.3 646.1L1007.5 643.1L1006.7 640.0L1006.0 636.9L1005.4 633.7L1004.9 630.4L1004.4 627.0L1004.0 623.6L1003.6 620.0L1003.3 616.3L1003.1 612.4L1002.9 608.5L1002.8 604.4L1002.8 600.2L1002.8 596.1L1002.9 592.0L1003.1 587.9L1003.3 583.9L1003.6 580.0L1003.9 576.2L1004.3 572.5L1004.8 568.8L1005.3 565.2L1005.9 561.6L1006.5 558.0L1007.2 554.5L1008.1 550.9L1009.0 547.5L1010.0 544.0L1011.1 540.6L1012.3 537.2L1013.6 533.9L1014.9 530.7L1016.3 527.4L1017.9 524.2L1019.5 521.0L1021.2 517.7L1023.1 514.4L1025.0 511.0L1027.1 507.6L1029.3 504.1L1031.7 500.6L1034.2 497.1L1036.8 493.6L1039.4 490.0L1042.1 486.5L1044.8 483.0L1047.4 479.5L1050.0 476.0L1052.6 472.6L1055.2 469.1L1057.8 465.7L1060.4 462.3L1063.0 458.9L1065.6 455.6L1068.2 452.2L1070.8 448.8L1073.4 445.4L1076.0 442.0L1078.6 438.5L1081.2 434.9L1083.9 431.1L1086.5 427.4L1089.1 423.7L1091.7 420.1L1094.2 416.7L1096.6 413.5L1098.9 410.5L1101.0 408.0L1103.0 405.8L1104.7 403.9L1106.4 402.2L1108.0 400.8L1109.4 399.6L1110.9 398.5L1112.3 397.5L1113.8 396.6L1115.4 395.8L1117.0 395.0L1118.7 394.3L1120.5 393.7L1122.3 393.2L1124.1 392.8L1125.9 392.6L1127.8 392.4L1129.6 392.2L1131.4 392.1L1133.2 392.1Z" fill="#d6ceb0"/><circle cx="1171" cy="565.5" r="125" fill="#4a6b9e"/><path d="M1088.3 676.1L1079.2 686.1M1305.1 483.8L1289.1 490.2M1005.8 561.8L1009.0 547.5M1293.3 473.3L1289.1 490.2M1047.0 665.4L1055.9 656.6M1119.5 713.1L1103.7 704.4M1186.0 689.6L1176.6 690.4M1163.5 718.0L1178.0 716.8M1250.8 430.9L1263.8 437.1M1201.3 724.7L1191.3 727.3M1036.3 622.4L1049.7 627.4M1176.6 690.4L1166.4 690.4M1159.4 441.0L1174.7 440.6M1269.9 695.9L1267.4 682.7M1279.3 476.7L1289.1 490.2M1248.9 692.8L1239.8 689.4M1191.3 727.3L1180.6 729.4M1047.2 479.7L1057.1 466.6M1087.3 700.9L1095.3 688.9M1325.0 484.3L1313.2 496.2M1258.1 655.1L1262.6 669.8M1037.2 610.8L1026.7 614.8M1174.7 440.6L1189.6 441.9M1273.1 637.5L1292.7 638.6M1289.1 490.2L1299.2 498.4M1194.6 688.2L1206.0 698.7M1325.0 484.3L1329.3 497.9M1330.3 559.8L1326.1 542.5M1057.1 466.6L1067.3 453.4M1113.0 676.2L1103.1 670.5M1115.3 453.6L1097.2 443.0M1351.0 583.0L1332.3 590.9M1329.3 497.9L1333.7 511.3M1219.0 718.6L1212.7 708.0M1122.4 734.0L1110.6 733.6M1103.1 670.5L1093.8 663.8M1051.0 600.5L1036.6 600.4M1206.0 698.7L1195.4 700.8M1110.6 733.6L1098.8 732.1M1157.4 704.6L1144.1 704.5M1063.3 683.3L1050.9 692.5M1329.4 606.4L1319.3 617.3M1293.2 591.7L1304.9 608.9M1258.5 476.3L1268.0 486.6M1349.8 597.5L1332.3 590.9M1202.4 686.5L1214.1 693.1M1051.3 529.5L1040.1 514.8M1216.2 682.0L1223.3 688.9M1036.3 622.4L1026.7 614.8M1252.4 676.1L1242.8 680.4M1296.0 565.5L1295.3 578.7M1071.0 640.6L1068.6 657.4M1349.8 597.5L1345.8 611.2M1189.6 441.9L1198.9 426.0M1034.3 672.9L1047.0 665.4M1048.6 591.0L1032.9 587.9M1071.5 696.5L1063.3 683.3M1037.7 659.3L1033.0 648.9M1028.3 551.7L1031.8 571.7M1057.2 617.1L1053.8 609.1M1170.9 704.6L1157.4 704.6M1065.6 632.6L1059.8 645.4M1338.0 525.1L1326.1 542.5M1047.0 665.4L1037.7 659.3M1040.8 641.3L1039.8 631.6M1053.8 609.1L1045.5 617.4M1037.1 698.4L1029.5 688.9M1053.8 609.1L1037.2 610.8M1293.3 473.3L1271.7 462.0M1302.7 625.9L1320.4 632.1M1295.4 552.9L1313.2 557.7M1286.5 517.8L1305.0 523.5M1016.2 622.7L1027.2 627.3M1221.8 698.2L1231.0 693.9M1226.3 453.4L1226.8 436.0M1304.7 462.5L1293.3 473.3M1350.1 568.3L1332.8 575.5M1222.6 679.3L1232.3 684.3M1148.8 718.8L1144.1 704.5M1313.2 496.2L1299.2 498.4M1037.1 698.4L1047.1 679.3M1144.9 687.7L1144.1 704.5M1087.3 700.9L1103.7 704.4M1279.3 476.7L1271.7 462.0M1152.6 394.2L1143.1 411.2M1054.1 715.7L1060.7 703.7M1077.5 440.0L1081.2 458.6M1122.4 734.0L1106.7 719.3M1176.6 690.4L1183.7 703.3M1126.1 392.5L1143.1 411.2M1305.1 483.8L1293.3 473.3M1098.8 732.1L1091.5 715.6M1063.3 683.3L1079.2 686.1M1004.2 625.2L1016.2 622.7M1319.4 658.5L1299.8 655.1M1155.7 689.6L1157.4 704.6M1290.4 684.2L1288.8 666.4M1351.0 583.0L1349.8 597.5M1221.8 698.2L1230.8 703.0M1277.6 675.5L1262.6 669.8M1061.0 624.9L1057.2 617.1M1279.3 476.7L1293.3 473.3M1265.9 646.9L1273.0 661.2M1045.2 707.6L1037.1 698.4M1059.9 669.8L1068.6 657.4M1335.6 637.1L1320.4 632.1M1293.4 540.3L1295.4 552.9M1079.2 686.1L1095.3 688.9M1273.1 637.5L1265.9 646.9M1174.7 440.6L1180.6 421.6M1109.8 399.3L1121.5 414.4M1315.5 510.2L1299.2 510.4M1112.6 431.3L1097.2 443.0M1310.0 667.7L1300.3 676.3M1302.7 625.9L1319.3 617.3M1319.4 658.5L1310.0 643.4M1265.9 646.9L1258.1 655.1M1046.4 556.0L1048.1 542.8M1250.8 430.9L1255.9 451.5M1302.7 625.9L1292.7 638.6M1093.8 663.8L1088.3 676.1M1057.2 617.1L1049.7 627.4M1300.3 676.3L1290.4 684.2M1313.2 557.7L1314.1 576.1M1103.7 704.4L1091.5 715.6M1005.9 636.2L1004.2 625.2M1048.1 542.8L1051.3 529.5M1203.2 444.7L1213.9 430.7M1169.9 398.6L1186.7 403.8M1103.1 670.5L1095.3 688.9M1271.7 462.0L1255.9 451.5M1079.5 480.3L1081.2 458.6M1004.2 625.2L1003.2 613.8M1160.5 420.1L1180.6 421.6M1222.6 679.3L1216.2 682.0M1028.3 551.7L1019.4 566.5M1098.8 732.1L1106.7 719.3M1186.7 403.8L1202.2 409.7M1227.0 715.0L1230.8 703.0M1231.0 693.9L1232.3 684.3M1283.2 650.8L1292.7 638.6M1242.5 707.5L1234.7 711.3M1134.0 684.9L1131.8 701.7M1216.2 682.0L1209.5 684.4M1202.9 711.2L1212.7 708.0M1090.2 470.1L1102.2 461.1M1159.4 441.0L1136.1 427.9M1315.5 510.2L1313.2 496.2M1234.7 711.3L1227.0 715.0M1239.8 689.4L1231.0 693.9M1009.0 547.5L1013.9 533.2M1195.4 700.8L1202.9 711.2M1296.0 565.5L1314.1 576.1M1093.8 663.8L1074.7 670.4M1102.2 461.1L1115.3 453.6M1239.8 689.4L1232.3 684.3M1242.8 667.8L1242.8 680.4M1051.3 529.5L1032.2 534.0M1169.4 731.1L1163.5 718.0M1008.5 647.1L1018.0 635.4M1049.7 627.4L1051.5 637.9M1022.0 599.1L1032.9 587.9M1013.9 533.2L1020.4 519.2M1319.3 617.3L1320.4 632.1M1166.4 690.4L1155.7 689.6M1262.6 669.8L1252.4 676.1M1265.9 646.9L1283.2 650.8M1277.6 675.5L1273.0 661.2M1277.6 444.6L1291.5 453.3M1191.3 727.3L1178.0 716.8M1122.4 734.0L1119.5 713.1M1321.0 525.3L1326.1 542.5M1155.7 689.6L1144.9 687.7M1310.0 643.4L1320.4 632.1M1016.7 668.6L1034.3 672.9M1231.0 693.9L1230.8 703.0M1248.9 692.8L1257.3 687.4M1009.0 547.5L1019.4 566.5M1169.4 731.1L1157.9 732.3M1296.0 565.5L1295.4 552.9M1133.6 718.3L1144.1 704.5M1203.2 444.7L1215.2 448.6M1020.4 519.2L1040.1 514.8M1057.1 466.6L1079.5 480.3M1163.5 718.0L1170.9 704.6M1029.8 637.8L1027.2 627.3M1077.5 440.0L1087.4 426.1M1071.5 696.5L1060.7 703.7M1029.8 637.8L1039.8 631.6M1242.8 667.8L1252.4 676.1M1240.3 442.7L1255.9 451.5M1191.3 727.3L1191.5 714.1M1036.3 622.4L1045.5 617.4M1304.7 462.5L1305.1 483.8M1333.7 511.3L1321.0 525.3M1281.7 507.5L1299.2 498.4M1273.0 661.2L1288.8 666.4M1202.2 409.7L1198.9 426.0M1102.2 461.1L1081.2 458.6M1248.0 467.0L1255.9 451.5M1028.3 551.7L1032.2 534.0M1018.0 635.4L1029.8 637.8M1040.8 641.3L1029.8 637.8M1046.4 556.0L1031.8 571.7M1047.0 665.4L1046.5 650.2M1239.1 425.6L1226.8 436.0M1112.6 431.3L1136.1 427.9M1263.8 437.1L1277.6 444.6M1131.8 701.7L1119.2 697.4M1045.5 617.4L1037.2 610.8M1180.6 729.4L1169.4 731.1M1341.2 624.5L1329.4 606.4M1277.6 444.6L1271.7 462.0M1152.6 394.2L1160.5 420.1M1189.6 441.9L1203.2 444.7M1003.0 589.2L1018.6 584.3M1214.1 693.1L1221.8 698.2M1009.0 547.5L1028.3 551.7M1330.3 559.8L1313.2 557.7M1123.3 681.1L1119.2 697.4M1146.2 733.2L1133.6 718.3M1279.7 627.2L1302.7 625.9M1067.3 453.4L1077.5 440.0M1036.6 600.4L1026.7 614.8M1310.0 643.4L1292.7 638.6M1333.7 511.3L1338.0 525.1M1047.2 479.7L1062.4 503.7M1087.3 700.9L1091.5 715.6M1093.8 663.8L1085.2 656.4M1194.6 688.2L1195.4 700.8M1329.4 606.4L1332.3 590.9M1057.1 466.6L1070.2 491.6M1098.8 732.1L1087.2 729.2M1085.2 656.4L1077.6 648.6M1016.2 622.7L1026.7 614.8M1267.4 682.7L1257.3 687.4M1237.1 459.4L1240.3 442.7M1157.9 732.3L1148.8 718.8M1087.2 729.2L1075.9 725.6M1295.3 578.7L1293.2 591.7M1113.0 676.2L1108.3 689.4M1032.2 534.0L1040.1 514.8M1250.8 703.7L1248.9 692.8M1275.7 497.2L1281.7 507.5M1345.8 611.2L1341.2 624.5M1186.7 403.8L1180.6 421.6M1248.9 692.8L1242.8 680.4M1293.2 591.7L1289.9 604.2M1053.8 609.1L1051.0 600.5M1087.4 426.1L1112.6 431.3M1283.2 650.8L1299.8 655.1M1046.9 580.4L1032.9 587.9M1341.2 624.5L1335.6 637.1M1029.5 688.9L1022.6 678.9M1040.8 641.3L1033.0 648.9M1309.7 539.6L1305.0 523.5M1051.0 600.5L1048.6 591.0M1342.2 539.3L1326.1 542.5M1012.0 657.9L1021.4 647.3M1034.3 672.9L1037.7 659.3M1112.6 431.3L1121.5 414.4M1280.3 690.9L1277.6 675.5M1022.6 678.9L1016.7 668.6M1034.3 672.9L1026.0 660.1M1018.6 584.3L1032.9 587.9M1258.1 655.1L1250.4 662.1M1215.9 415.4L1213.9 430.7M1047.1 679.3L1034.3 672.9M1216.2 682.0L1214.1 693.1M1123.3 681.1L1108.3 689.4M1262.6 669.8L1267.4 682.7M1290.4 684.2L1280.3 690.9M1250.4 662.1L1242.8 667.8M1210.5 721.8L1212.7 708.0M1321.0 525.3L1309.7 539.6M1085.2 656.4L1068.6 657.4M1081.2 458.6L1097.2 443.0M1268.0 486.6L1275.7 497.2M1280.3 690.9L1269.9 695.9M1248.0 467.0L1271.7 462.0M1329.3 497.9L1315.5 510.2M1299.2 510.4L1305.0 523.5M1219.0 718.6L1221.8 707.2M1268.0 486.6L1279.3 476.7M1056.1 516.4L1062.4 503.7M1020.4 519.2L1032.2 534.0M1269.9 695.9L1257.3 687.4M1002.8 601.8L1003.0 589.2M1003.0 589.2L1022.0 599.1M1131.8 701.7L1133.6 718.3M1077.6 648.6L1068.6 657.4M1215.9 415.4L1227.8 420.5M1235.8 672.4L1232.3 684.3M1350.1 568.3L1330.3 559.8M1223.3 688.9L1232.3 684.3M1143.1 411.2L1136.1 427.9M1202.4 686.5L1194.6 688.2M1203.2 444.7L1198.9 426.0M1057.2 617.1L1045.5 617.4M1056.1 516.4L1040.1 514.8M1063.3 683.3L1060.7 703.7M1029.5 688.9L1034.3 672.9M1045.2 707.6L1050.9 692.5M1057.1 466.6L1081.2 458.6M1229.1 676.2L1232.3 684.3M1258.1 655.1L1273.0 661.2M1239.1 425.6L1240.3 442.7M1074.7 670.4L1068.6 657.4M1242.5 707.5L1230.8 703.0M1329.3 497.9L1313.2 496.2M1051.3 529.5L1056.1 516.4M1250.4 662.1L1262.6 669.8M1003.2 613.8L1015.7 609.6M1037.1 698.4L1050.9 692.5M1071.5 696.5L1075.8 710.8M1126.1 392.5L1121.5 414.4M1281.7 507.5L1299.2 510.4M1016.7 668.6L1026.0 660.1M1103.7 704.4L1108.3 689.4M1351.0 583.0L1332.8 575.5M1242.8 680.4L1232.3 684.3M1305.1 483.8L1299.2 498.4M1029.5 688.9L1047.1 679.3M1315.5 510.2L1305.0 523.5M1046.4 556.0L1028.3 551.7M1003.2 613.8L1002.8 601.8M1002.8 601.8L1015.7 609.6M1210.5 721.8L1202.9 711.2M1048.6 591.0L1036.6 600.4M1226.8 436.0L1213.9 430.7M1045.2 707.6L1060.7 703.7M1202.2 409.7L1215.9 415.4M1159.4 441.0L1160.5 420.1M1289.9 604.2L1304.9 608.9M1183.7 703.3L1191.5 714.1M1275.7 497.2L1289.1 490.2M1295.3 578.7L1313.5 594.2M1095.3 688.9L1108.3 689.4M1037.7 659.3L1026.0 660.1M1227.0 715.0L1219.0 718.6M1077.5 440.0L1097.2 443.0M1176.6 690.4L1170.9 704.6M1003.2 613.8L1016.2 622.7M1299.8 655.1L1292.7 638.6M1310.0 667.7L1299.8 655.1M1267.4 682.7L1252.4 676.1M1328.1 648.4L1320.4 632.1M1191.5 714.1L1202.9 711.2M1020.4 519.2L1028.3 505.7M1143.1 411.2L1121.5 414.4M1129.4 447.6L1144.2 443.4M1281.7 507.5L1289.1 490.2M1332.3 590.9L1313.5 594.2M1046.5 650.2L1040.8 641.3M1214.1 693.1L1206.0 698.7M1291.5 453.3L1304.7 462.5M1051.0 600.5L1037.2 610.8M1206.0 698.7L1212.7 708.0M1290.4 528.6L1305.0 523.5M1115.3 453.6L1112.6 431.3M1288.8 666.4L1299.8 655.1M1198.9 426.0L1213.9 430.7M1087.3 700.9L1079.2 686.1M1157.9 732.3L1146.2 733.2M1036.6 600.4L1037.2 610.8M1129.4 447.6L1136.1 427.9M1189.6 441.9L1180.6 421.6M1046.9 580.4L1031.8 571.7M1226.3 453.4L1237.1 459.4M1110.6 733.6L1106.7 719.3M1163.5 718.0L1157.4 704.6M1209.5 684.4L1202.4 686.5M1263.8 437.1L1255.9 451.5M1342.2 539.3L1346.3 553.8M1018.6 584.3L1031.8 571.7M1018.6 584.3L1022.0 599.1M1087.2 729.2L1091.5 715.6M1148.8 718.8L1157.4 704.6M1115.3 453.6L1129.4 447.6M1349.8 597.5L1329.4 606.4M1313.2 557.7L1326.1 542.5M1071.0 640.6L1065.6 632.6M1075.9 725.6L1075.8 710.8M1004.0 575.8L1019.4 566.5M1214.1 693.1L1212.7 708.0M1050.9 692.5L1060.7 703.7M1015.7 609.6L1016.2 622.7M1286.5 517.8L1290.4 528.6M1068.6 657.4L1055.9 656.6M1144.9 687.7L1134.0 684.9M1285.3 616.1L1279.7 627.2M1235.8 672.4L1242.8 680.4M1005.9 636.2L1018.0 635.4M1157.9 732.3L1163.5 718.0M1215.2 448.6L1226.3 453.4M1046.9 580.4L1046.0 568.6M1087.4 426.1L1097.7 412.0M1049.7 627.4L1039.8 631.6M1314.1 576.1L1332.8 575.5M1036.3 622.4L1037.2 610.8M1221.8 698.2L1212.7 708.0M1077.6 648.6L1071.0 640.6M1283.2 650.8L1273.0 661.2M1215.2 448.6L1213.9 430.7M1075.9 725.6L1064.7 721.2M1281.7 507.5L1286.5 517.8M1215.9 415.4L1198.9 426.0M1321.0 525.3L1305.0 523.5M1059.8 645.4L1055.9 656.6M1061.0 624.9L1051.5 637.9M1280.3 690.9L1267.4 682.7M1031.8 571.7L1032.9 587.9M1085.2 656.4L1074.7 670.4M1214.1 693.1L1223.3 688.9M1202.4 686.5L1206.0 698.7M1059.9 669.8L1063.3 683.3M1335.6 637.1L1328.1 648.4M1131.8 701.7L1119.5 713.1M1102.2 461.1L1097.2 443.0M1059.8 645.4L1051.5 637.9M1018.0 635.4L1021.4 647.3M1160.5 420.1L1136.1 427.9M1293.4 540.3L1309.7 539.6M1018.6 584.3L1019.4 566.5M1338.0 525.1L1342.2 539.3M1037.5 492.7L1062.4 503.7M1028.3 505.7L1040.1 514.8M1148.8 718.8L1133.6 718.3M1291.5 453.3L1271.7 462.0M1302.7 625.9L1304.9 608.9M1221.8 707.2L1230.8 703.0M1169.9 398.6L1160.5 420.1M1313.5 594.2L1314.1 576.1M1222.6 679.3L1223.3 688.9M1221.8 698.2L1223.3 688.9M1004.0 575.8L1018.6 584.3M1027.2 627.3L1039.8 631.6M1087.3 700.9L1071.5 696.5M1316.4 472.4L1305.1 483.8M1338.0 525.1L1321.0 525.3M1059.9 669.8L1047.0 665.4M1075.8 710.8L1091.5 715.6M1037.5 492.7L1040.1 514.8M1330.3 559.8L1314.1 576.1M1071.0 640.6L1059.8 645.4M1289.9 604.2L1285.3 616.1M1279.7 627.2L1292.7 638.6M1036.6 600.4L1032.9 587.9M1302.7 625.9L1310.0 643.4M1329.4 606.4L1313.5 594.2M1239.8 689.4L1242.8 680.4M1048.6 591.0L1046.9 580.4M1291.5 453.3L1293.3 473.3M1313.2 557.7L1309.7 539.6M1016.7 668.6L1012.0 657.9M1155.7 689.6L1144.1 704.5M1103.7 704.4L1119.2 697.4M1026.7 614.8L1027.2 627.3M1008.5 647.1L1021.4 647.3M1277.6 675.5L1267.4 682.7M1202.2 409.7L1180.6 421.6M1064.7 721.2L1060.7 703.7M1121.5 414.4L1136.1 427.9M1097.7 412.0L1112.6 431.3M1242.8 667.8L1235.8 672.4M1033.0 648.9L1021.4 647.3M1186.0 689.6L1183.7 703.3M1160.5 420.1L1143.1 411.2M1106.7 719.3L1091.5 715.6M1250.8 703.7L1239.9 698.7M1269.9 695.9L1259.9 699.9M1013.9 533.2L1028.3 551.7M1134.3 733.8L1133.6 718.3M1062.4 503.7L1070.2 491.6M1040.8 641.3L1051.5 637.9M1005.9 636.2L1016.2 622.7M1013.9 533.2L1032.2 534.0M1003.0 589.2L1004.0 575.8M1166.4 690.4L1157.4 704.6M1015.7 609.6L1022.0 599.1M1227.8 420.5L1239.1 425.6M1248.0 467.0L1258.5 476.3M1045.5 617.4L1049.7 627.4M1194.6 688.2L1186.0 689.6M1119.5 713.1L1119.2 697.4M1333.7 511.3L1315.5 510.2M1215.2 448.6L1226.8 436.0M1210.5 721.8L1201.3 724.7M1146.2 733.2L1148.8 718.8M1275.7 497.2L1279.3 476.7M1313.5 594.2L1304.9 608.9M1047.1 679.3L1050.9 692.5M1103.1 670.5L1108.3 689.4M1144.2 443.4L1159.4 441.0M1259.9 699.9L1257.3 687.4M1285.3 616.1L1304.9 608.9M1231.0 693.9L1223.3 688.9M1037.5 492.7L1047.2 479.7M1097.7 412.0L1121.5 414.4M1183.7 703.3L1178.0 716.8M1328.1 648.4L1310.0 643.4M1163.5 718.0L1148.8 718.8M1166.4 690.4L1170.9 704.6M1018.0 635.4L1027.2 627.3M1240.3 442.7L1226.8 436.0M1346.3 553.8L1326.1 542.5M1135.0 392.0L1143.1 411.2M1067.3 453.4L1081.2 458.6M1319.3 617.3L1304.9 608.9M1227.8 420.5L1213.9 430.7M1209.5 684.4L1214.1 693.1M1221.8 707.2L1212.7 708.0M1026.7 614.8L1022.0 599.1M1310.0 643.4L1299.8 655.1M1074.7 670.4L1079.2 686.1M1135.0 392.0L1126.1 392.5M1248.9 692.8L1239.9 698.7M1258.5 476.3L1271.7 462.0M1231.0 693.9L1239.9 698.7M1341.2 624.5L1320.4 632.1M1286.5 517.8L1299.2 510.4M1012.0 657.9L1026.0 660.1M1219.0 718.6L1210.5 721.8M1029.8 637.8L1021.4 647.3M1191.5 714.1L1178.0 716.8M1239.8 689.4L1239.9 698.7M1242.8 680.4L1257.3 687.4M1273.1 637.5L1283.2 650.8M1201.3 724.7L1202.9 711.2M1028.3 505.7L1037.5 492.7M1103.1 670.5L1088.3 676.1M1304.7 462.5L1316.4 472.4M1062.4 503.7L1040.1 514.8M1022.6 678.9L1034.3 672.9M1134.0 684.9L1123.3 681.1M1036.3 622.4L1027.2 627.3M1075.8 710.8L1060.7 703.7M1036.3 622.4L1039.8 631.6M1033.0 648.9L1026.0 660.1M1316.4 472.4L1325.0 484.3M1146.2 733.2L1134.3 733.8M1250.8 430.9L1240.3 442.7M1123.3 681.1L1113.0 676.2M1061.0 624.9L1049.7 627.4M1234.7 711.3L1230.8 703.0M1296.0 565.5L1313.2 557.7M1088.3 676.1L1095.3 688.9M1250.4 662.1L1252.4 676.1M1029.8 637.8L1033.0 648.9M1144.9 687.7L1131.8 701.7M1134.3 733.8L1122.4 734.0M1036.6 600.4L1022.0 599.1M1097.7 412.0L1109.8 399.3M1201.3 724.7L1191.5 714.1M1144.2 443.4L1136.1 427.9M1131.8 701.7L1144.1 704.5M1237.1 459.4L1248.0 467.0M1016.2 622.7L1018.0 635.4M1300.3 676.3L1288.8 666.4M1346.3 553.8L1350.1 568.3M1119.5 713.1L1133.6 718.3M1221.8 707.2L1221.8 698.2M1293.4 540.3L1305.0 523.5M1109.8 399.3L1126.1 392.5M1198.9 426.0L1180.6 421.6M1090.2 470.1L1081.2 458.6M1129.4 447.6L1112.6 431.3M1046.5 650.2L1033.0 648.9M1332.3 590.9L1332.8 575.5M1277.6 444.6L1255.9 451.5M1350.1 568.3L1351.0 583.0M1064.7 721.2L1054.1 715.7M1046.5 650.2L1055.9 656.6M1059.8 645.4L1068.6 657.4M1048.1 542.8L1028.3 551.7M1065.6 632.6L1061.0 624.9M1059.8 645.4L1046.5 650.2M1075.9 725.6L1091.5 715.6M1341.2 624.5L1319.3 617.3M1174.7 440.6L1160.5 420.1M1054.1 715.7L1045.2 707.6M1048.1 542.8L1032.2 534.0M1295.3 578.7L1314.1 576.1M1290.4 528.6L1293.4 540.3M1015.7 609.6L1026.7 614.8M1059.9 669.8L1055.9 656.6M1170.9 704.6L1178.0 716.8M1328.1 648.4L1319.4 658.5M1293.2 591.7L1313.5 594.2M1103.7 704.4L1095.3 688.9M1279.7 627.2L1273.1 637.5M1087.4 426.1L1097.2 443.0M1345.8 611.2L1329.4 606.4M1206.0 698.7L1202.9 711.2M1300.3 676.3L1299.8 655.1M1319.4 658.5L1310.0 667.7M1332.3 590.9L1314.1 576.1M1180.6 729.4L1178.0 716.8M1262.6 669.8L1273.0 661.2M1064.7 721.2L1075.8 710.8M1134.0 684.9L1119.2 697.4M1046.0 568.6L1046.4 556.0M1239.9 698.7L1230.8 703.0M1285.3 616.1L1302.7 625.9M1074.7 670.4L1059.9 669.8M1046.5 650.2L1051.5 637.9M1008.5 647.1L1005.9 636.2M1299.2 510.4L1299.2 498.4M1074.7 670.4L1063.3 683.3M1152.6 394.2L1169.9 398.6M1183.7 703.3L1195.4 700.8M1169.4 731.1L1178.0 716.8M1229.1 676.2L1222.6 679.3M1047.2 479.7L1070.2 491.6M1108.3 689.4L1119.2 697.4M1046.0 568.6L1031.8 571.7M1226.3 453.4L1240.3 442.7M1103.7 704.4L1106.7 719.3M1079.5 480.3L1090.2 470.1M1021.4 647.3L1026.0 660.1M1227.8 420.5L1226.8 436.0M1047.1 679.3L1059.9 669.8M1313.2 496.2L1305.1 483.8M1065.6 632.6L1051.5 637.9M1259.9 699.9L1248.9 692.8M1047.1 679.3L1063.3 683.3M1046.5 650.2L1037.7 659.3M1169.9 398.6L1180.6 421.6M1313.5 594.2L1319.3 617.3M1277.6 675.5L1288.8 666.4M1325.0 484.3L1305.1 483.8M1074.7 670.4L1088.3 676.1M1330.3 559.8L1332.8 575.5M1252.4 676.1L1257.3 687.4M1005.8 561.8L1019.4 566.5M1071.5 696.5L1079.2 686.1M1290.4 684.2L1277.6 675.5M1019.4 566.5L1031.8 571.7M1012.0 657.9L1008.5 647.1M1191.5 714.1L1195.4 700.8M1051.5 637.9L1039.8 631.6M1119.5 713.1L1106.7 719.3M1135.0 392.0L1152.6 394.2M1295.4 552.9L1309.7 539.6M1315.5 510.2L1299.2 498.4M1047.1 679.3L1047.0 665.4M1235.8 672.4L1229.1 676.2M1227.0 715.0L1221.8 707.2M1321.0 525.3L1315.5 510.2M1258.5 476.3L1279.3 476.7M1237.1 459.4L1255.9 451.5M1259.9 699.9L1250.8 703.7M1070.2 491.6L1079.5 480.3M1309.7 539.6L1326.1 542.5M1183.7 703.3L1170.9 704.6M1002.8 601.8L1022.0 599.1M1186.0 689.6L1195.4 700.8M1087.3 700.9L1075.8 710.8M1283.2 650.8L1288.8 666.4M1242.5 707.5L1239.9 698.7M1250.8 703.7L1242.5 707.5M1004.0 575.8L1005.8 561.8M1122.4 734.0L1133.6 718.3M1346.3 553.8L1330.3 559.8M1239.1 425.6L1250.8 430.9M1154.3 590.5L1168.5 593.4M1103.1 670.5L1103.6 657.8M1097.7 578.4L1106.4 586.9M1215.2 448.6L1226.3 471.6M1258.1 655.1L1250.4 662.1M1234.4 569.9L1214.7 566.1M1048.1 542.8L1051.3 529.5M1073.1 606.8L1082.3 603.5M1274.8 559.7L1280.6 575.6M1168.9 499.7L1156.2 512.2M1192.9 520.4L1205.1 509.6M1135.0 485.0L1149.3 474.4M1090.5 567.1L1106.0 569.0M1185.7 551.6L1183.7 569.5M1156.2 512.2L1148.2 532.9M1143.4 663.6L1152.2 669.0M1051.3 529.5L1056.1 516.4M1051.3 529.5L1066.0 536.9M1226.3 471.6L1209.9 475.4M1248.7 578.5L1256.2 562.3M1062.3 590.9L1059.4 579.3M1144.2 443.4L1159.8 457.8M1187.7 503.0L1196.9 488.5M1274.8 559.7L1260.2 545.0M1099.8 643.9L1088.5 645.7M1216.2 682.0L1209.5 684.4M1126.5 601.3L1116.3 606.8M1073.1 606.8L1065.3 611.7M1198.8 669.4L1206.3 676.3M1190.0 662.1L1189.9 671.4M1147.2 578.2L1153.2 563.5M1199.9 577.7L1208.8 592.7M1209.5 684.4L1202.4 686.5M1190.4 472.6L1196.9 488.5M1102.2 461.1L1115.3 453.6M1248.0 467.0L1241.5 482.8M1079.5 480.3L1088.9 495.8M1210.8 547.2L1226.0 539.5M1136.9 607.2L1123.9 613.2M1261.2 593.8L1248.7 578.5M1196.0 678.6L1206.3 676.3M1115.3 453.6L1129.4 447.6M1296.0 565.5L1280.6 575.6M1226.3 471.6L1225.0 488.3M1061.0 565.5L1076.4 565.3M1124.4 590.2L1113.7 596.3M1275.7 497.2L1255.0 495.3M1139.1 593.2L1136.9 607.2M1062.4 503.7L1078.2 508.4M1086.1 616.2L1095.1 616.5M1260.2 545.0L1256.2 562.3M1140.1 519.4L1123.0 518.2M1190.0 662.1L1198.8 669.4M1221.4 600.9L1232.5 587.9M1167.3 656.8L1178.3 660.3M1144.9 687.7L1134.0 684.9M1152.1 642.5L1142.1 651.5M1170.5 669.4L1180.7 670.4M1099.8 643.9L1095.4 652.3M1200.8 661.1L1211.3 660.8M1126.7 635.1L1136.5 628.7M1215.2 448.6L1226.3 453.4M1107.8 522.9L1107.6 503.1M1218.9 580.9L1199.9 577.7M1142.0 460.2L1149.3 474.4M1102.5 598.0L1113.7 596.3M1102.2 461.1L1111.3 472.5M1135.0 485.0L1139.6 503.5M1098.2 625.3L1103.7 617.3M1113.7 596.3L1106.4 586.9M1094.3 553.8L1100.3 539.7M1185.7 551.6L1172.0 543.8M1210.8 547.2L1214.7 566.1M1136.8 565.1L1131.7 579.4M1147.8 678.1L1161.2 678.5M1090.1 526.3L1072.9 522.9M1144.2 443.4L1142.0 460.2M1236.7 606.1L1232.5 587.9M1090.5 567.1L1076.4 565.3M1113.2 662.9L1120.8 655.0M1139.1 593.2L1151.5 604.5M1057.2 617.1L1065.3 611.7M1169.7 560.7L1185.7 551.6M1151.5 604.5L1158.7 618.9M1131.1 534.7L1140.1 519.4M1152.2 669.0L1161.2 678.5M1098.2 625.3L1095.1 616.5M1296.0 565.5L1274.8 559.7M1209.5 684.4L1206.3 676.3M1102.5 598.0L1107.4 607.7M1111.3 472.5L1099.6 485.2M1222.2 641.1L1218.3 627.7M1113.7 596.3L1126.5 601.3M1201.8 607.6L1193.7 594.5M1265.9 646.9L1255.4 638.1M1170.5 669.4L1161.2 678.5M1293.2 591.7L1276.4 592.5M1082.2 639.4L1086.5 630.7M1140.1 519.4L1156.2 512.2M1196.0 678.6L1198.8 669.4M1155.7 689.6L1144.9 687.7M1235.8 672.4L1236.8 658.0M1222.2 641.1L1226.8 653.7M1089.5 608.8L1095.1 616.5M1203.2 444.7L1215.2 448.6M1202.3 622.9L1214.1 614.4M1113.0 676.2L1124.0 668.3M1181.5 603.6L1168.5 593.4M1184.7 680.3L1189.9 671.4M1222.4 507.6L1224.0 524.0M1046.4 556.0L1063.4 551.7M1144.9 687.7L1147.8 678.1M1077.6 648.6L1082.2 639.4M1107.6 503.1L1099.6 485.2M1090.5 567.1L1084.9 580.0M1205.1 509.6L1210.9 494.0M1085.2 656.4L1077.6 648.6M1141.4 549.4L1153.2 563.5M1201.8 607.6L1202.3 622.9M1206.5 653.4L1212.0 644.6M1102.5 598.0L1094.4 589.4M1139.2 639.7L1152.1 642.5M1095.1 616.5L1089.9 623.7M1175.0 515.4L1192.9 520.4M1193.7 594.5L1181.5 603.6M1077.6 648.6L1071.0 640.6M1295.4 552.9L1277.6 543.9M1261.2 593.8L1276.4 592.5M1275.7 497.2L1281.7 507.5M1248.0 467.0L1226.3 471.6M1163.5 528.4L1181.5 531.9M1222.6 679.3L1217.2 671.3M1190.0 662.1L1180.7 670.4M1293.2 591.7L1289.9 604.2M1135.8 673.0L1143.4 663.6M1281.7 507.5L1286.5 517.8M1242.9 635.6L1243.9 621.8M1086.1 616.2L1089.5 608.8M1108.0 626.5L1113.2 617.5M1171.9 469.3L1180.0 486.3M1113.0 676.2L1113.2 662.9M1194.6 688.2L1184.7 680.3M1217.4 652.3L1211.3 660.8M1158.7 618.9L1163.5 632.0M1051.3 529.5L1072.9 522.9M1277.6 543.9L1271.9 528.4M1289.9 604.2L1285.3 616.1M1221.4 600.9L1201.8 607.6M1124.4 590.2L1131.7 579.4M1234.4 569.9L1242.8 552.7M1289.9 604.2L1270.6 609.7M1248.7 578.5L1246.4 594.7M1051.0 600.5L1048.6 591.0M1134.0 684.9L1135.8 673.0M1237.5 500.3L1225.0 488.3M1048.6 591.0L1046.9 580.4M1092.2 599.8L1098.5 607.9M1109.7 649.8L1120.8 655.0M1274.8 559.7L1256.2 562.3M1106.4 586.9L1116.1 580.1M1163.5 482.6L1149.3 474.4M1115.9 538.1L1109.9 554.6M1185.7 551.6L1196.6 539.3M1124.0 668.3L1113.2 662.9M1132.1 659.6L1124.0 668.3M1201.2 644.5L1206.5 653.4M1107.4 607.7L1113.7 596.3M1153.2 563.5L1136.8 565.1M1121.1 624.7L1131.8 619.4M1221.4 600.9L1208.8 592.7M1094.3 553.8L1082.7 539.2M1242.8 667.8L1235.8 672.4M1163.5 528.4L1175.0 515.4M1099.8 643.9L1109.7 649.8M1107.6 503.1L1124.5 501.4M1094.4 589.4L1097.7 578.4M1086.1 616.2L1078.7 613.4M1073.1 606.8L1063.2 601.6M1154.4 655.4L1152.1 642.5M1098.2 625.3L1092.4 636.9M1241.5 482.8L1225.0 488.3M1174.6 621.4L1167.0 608.2M1201.8 607.6L1181.5 603.6M1062.4 503.7L1070.2 491.6M1152.2 669.0L1161.2 666.1M1121.1 567.2L1106.0 569.0M1115.4 632.8L1108.3 639.1M1210.8 547.2L1209.3 528.0M1203.2 444.7L1201.3 460.6M1147.2 578.2L1136.8 565.1M1199.9 577.7L1214.7 566.1M1118.6 643.4L1120.8 655.0M1109.7 649.8L1103.6 657.8M1170.5 669.4L1161.2 666.1M1115.9 538.1L1125.7 551.9M1149.6 630.1L1144.9 617.5M1209.3 528.0L1196.6 539.3M1168.9 499.7L1163.5 482.6M1202.3 622.9L1187.5 628.8M1139.1 593.2L1124.4 590.2M1226.3 471.6L1241.5 482.8M1176.3 636.2L1175.9 648.1M1215.2 448.6L1201.3 460.6M1121.1 624.7L1108.0 626.5M1106.0 569.0L1109.9 554.6M1147.2 578.2L1165.5 576.9M1109.9 554.6L1100.3 539.7M1084.1 592.7L1092.2 599.8M1106.0 569.0L1116.1 580.1M1123.0 518.2L1107.6 503.1M1180.7 670.4L1178.3 660.3M1190.4 472.6L1201.3 460.6M1230.9 631.3L1222.2 641.1M1171.9 469.3L1163.5 482.6M1260.2 545.0L1271.9 528.4M1163.5 528.4L1172.0 543.8M1154.4 655.4L1161.2 666.1M1071.0 640.6L1077.3 632.4M1250.4 662.1L1242.8 667.8M1062.3 590.9L1074.2 586.9M1094.5 512.0L1107.6 503.1M1167.3 656.8L1175.9 648.1M1079.0 552.6L1066.0 536.9M1193.7 594.5L1208.8 592.7M1233.5 645.1L1226.8 653.7M1074.2 586.9L1071.9 576.3M1088.5 645.7L1095.4 652.3M1056.1 516.4L1062.4 503.7M1147.2 578.2L1139.1 593.2M1139.1 593.2L1154.3 590.5M1131.8 619.4L1123.9 613.2M1201.2 644.5L1195.6 652.7M1185.5 652.4L1188.6 642.2M1046.9 580.4L1059.4 579.3M1131.1 534.7L1148.2 532.9M1092.4 636.9L1100.8 633.5M1281.7 507.5L1265.9 511.8M1192.9 520.4L1209.3 528.0M1082.3 603.5L1092.2 599.8M1190.4 472.6L1180.0 486.3M1202.4 686.5L1194.6 688.2M1121.1 624.7L1113.2 617.5M1072.9 522.9L1078.2 508.4M1135.8 673.0L1124.0 668.3M1200.8 661.1L1198.8 669.4M1222.2 641.1L1212.0 644.6M1142.0 460.2L1127.5 468.3M1136.5 628.7L1139.2 639.7M1129.4 447.6L1144.2 443.4M1129.8 647.2L1142.1 651.5M1082.2 639.4L1077.3 632.4M1226.8 653.7L1219.9 662.1M1077.6 648.6L1088.5 645.7M1166.4 690.4L1173.2 679.8M1265.3 576.8L1248.7 578.5M1121.1 624.7L1136.5 628.7M1102.5 598.0L1092.2 599.8M1074.2 586.9L1059.4 579.3M1144.2 443.4L1159.4 441.0M1141.4 549.4L1125.7 551.9M1147.2 578.2L1154.3 590.5M1080.4 623.1L1078.7 613.4M1217.4 652.3L1222.2 641.1M1134.0 684.9L1123.3 681.1M1094.4 589.4L1084.1 592.7M1255.7 527.6L1271.9 528.4M1234.4 569.9L1248.7 578.5M1187.5 628.8L1176.3 636.2M1205.1 509.6L1187.7 503.0M1123.3 681.1L1113.0 676.2M1226.3 453.4L1237.1 459.4M1178.3 660.3L1175.9 648.1M1222.4 507.6L1237.5 500.3M1199.3 559.9L1183.7 569.5M1226.3 453.4L1226.3 471.6M1222.4 507.6L1210.9 494.0M1090.2 470.1L1099.6 485.2M1159.4 441.0L1159.8 457.8M1261.5 624.4L1255.4 638.1M1237.1 459.4L1248.0 467.0M1236.8 658.0L1227.9 665.4M1295.4 552.9L1274.8 559.7M1118.6 643.4L1108.3 639.1M1141.4 549.4L1136.8 565.1M1123.0 518.2L1124.5 501.4M1258.5 476.3L1255.0 495.3M1071.0 640.6L1065.6 632.6M1176.3 636.2L1163.5 632.0M1234.4 569.9L1226.5 555.5M1201.8 607.6L1214.1 614.4M1065.6 632.6L1061.0 624.9M1086.5 630.7L1092.4 636.9M1082.7 539.2L1100.3 539.7M1165.5 576.9L1153.2 563.5M1094.3 553.8L1090.5 567.1M1202.3 622.9L1209.9 634.6M1255.7 527.6L1265.9 511.8M1136.9 607.2L1131.8 619.4M1142.0 460.2L1159.8 457.8M1248.7 578.5L1232.5 587.9M1265.3 576.8L1280.6 575.6M1076.4 565.3L1079.0 552.6M1131.1 534.7L1123.0 518.2M1139.1 593.2L1126.5 601.3M1198.8 669.4L1189.9 671.4M1290.4 528.6L1293.4 540.3M1157.4 547.0L1148.2 532.9M1295.3 578.7L1280.6 575.6M1258.5 476.3L1241.5 482.8M1151.5 604.5L1168.5 593.4M1135.8 673.0L1132.1 659.6M1171.9 469.3L1149.3 474.4M1236.7 606.1L1253.7 609.9M1185.7 551.6L1199.3 559.9M1129.8 647.2L1120.8 655.0M1200.8 661.1L1206.5 653.4M1279.7 627.2L1273.1 637.5M1236.8 658.0L1245.5 649.2M1199.9 577.7L1183.7 569.5M1094.5 512.0L1088.9 495.8M1180.0 486.3L1196.9 488.5M1093.8 663.8L1103.6 657.8M1228.4 617.3L1214.1 614.4M1121.1 567.2L1109.9 554.6M1196.0 678.6L1189.9 671.4M1290.4 528.6L1277.6 543.9M1198.1 634.5L1188.6 642.2M1121.1 567.2L1116.1 580.1M1208.2 668.2L1206.3 676.3M1151.6 493.5L1163.5 482.6M1279.7 627.2L1261.5 624.4M1070.2 491.6L1078.2 508.4M1102.5 598.0L1098.5 607.9M1242.9 635.6L1245.5 649.2M1217.2 671.3L1227.9 665.4M1163.5 528.4L1157.4 547.0M1062.3 590.9L1073.6 597.1M1201.2 644.5L1188.6 642.2M1094.3 553.8L1106.0 569.0M1151.5 604.5L1144.9 617.5M1071.0 640.6L1082.2 639.4M1217.4 652.3L1219.9 662.1M1126.7 635.1L1115.4 632.8M1250.4 662.1L1236.8 658.0M1169.7 560.7L1153.2 563.5M1126.7 635.1L1129.8 647.2M1265.3 576.8L1274.8 559.7M1180.0 486.3L1163.5 482.6M1121.1 567.2L1125.7 551.9M1184.7 680.3L1173.2 679.8M1135.0 485.0L1117.5 486.9M1286.5 517.8L1290.4 528.6M1210.8 547.2L1226.5 555.5M1253.7 609.9L1246.4 594.7M1061.0 565.5L1071.9 576.3M1216.2 682.0L1217.2 671.3M1285.3 616.1L1279.7 627.2M1082.7 539.2L1066.0 536.9M1209.9 634.6L1198.1 634.5M1071.9 576.3L1084.9 580.0M1116.3 606.8L1123.9 613.2M1233.5 645.1L1236.8 658.0M1095.4 652.3L1103.6 657.8M1111.3 472.5L1117.5 486.9M1186.0 689.6L1184.7 680.3M1242.8 552.7L1226.5 555.5M1202.4 686.5L1206.3 676.3M1190.0 662.1L1185.5 652.4M1046.9 580.4L1046.0 568.6M1210.9 494.0L1209.9 475.4M1261.2 593.8L1246.4 594.7M1113.2 617.5L1123.9 613.2M1082.3 603.5L1089.5 608.8M1121.1 567.2L1136.8 565.1M1255.7 527.6L1238.1 519.1M1168.9 499.7L1180.0 486.3M1051.0 600.5L1062.3 590.9M1199.9 577.7L1181.9 585.0M1200.8 661.1L1195.6 652.7M1255.0 495.3L1237.5 500.3M1094.4 589.4L1084.9 580.0M1228.4 617.3L1230.9 631.3M1187.5 628.8L1188.6 642.2M1235.8 672.4L1229.1 676.2M1208.2 668.2L1198.8 669.4M1236.7 606.1L1243.9 621.8M1271.9 528.4L1265.9 511.8M1115.3 453.6L1111.3 472.5M1106.0 569.0L1106.4 586.9M1136.9 607.2L1151.5 604.5M1094.5 512.0L1078.2 508.4M1107.4 607.7L1116.3 606.8M1065.6 632.6L1071.8 626.4M1107.6 503.1L1117.5 486.9M1217.2 671.3L1206.3 676.3M1103.7 617.3L1098.5 607.9M1061.0 565.5L1059.4 579.3M1117.5 486.9L1099.6 485.2M1168.5 593.4L1181.9 585.0M1181.5 603.6L1181.9 585.0M1070.2 491.6L1079.5 480.3M1245.5 649.2L1255.4 638.1M1143.4 663.6L1132.1 659.6M1238.1 519.1L1242.2 536.2M1134.0 684.9L1147.8 678.1M1171.9 469.3L1182.1 456.7M1151.5 604.5L1167.0 608.2M1115.3 453.6L1127.5 468.3M1217.4 652.3L1206.5 653.4M1210.9 494.0L1225.0 488.3M1136.5 628.7L1131.8 619.4M1061.0 624.9L1070.8 618.5M1209.9 634.6L1218.3 627.7M1053.8 609.1L1065.3 611.7M1139.6 503.5L1124.5 501.4M1255.7 527.6L1242.2 536.2M1103.1 670.5L1113.2 662.9M1186.0 689.6L1176.6 690.4M1082.3 603.5L1078.7 613.4M1174.7 440.6L1182.1 456.7M1224.0 524.0L1226.0 539.5M1113.7 596.3L1116.3 606.8M1258.1 655.1L1245.5 649.2M1211.3 660.8L1208.2 668.2M1175.0 515.4L1187.7 503.0M1258.1 655.1L1255.4 638.1M1289.9 604.2L1276.4 592.5M1235.8 672.4L1227.9 665.4M1209.3 528.0L1226.0 539.5M1187.5 628.8L1189.0 615.6M1174.6 621.4L1187.5 628.8M1151.6 493.5L1149.3 474.4M1082.2 639.4L1092.4 636.9M1056.1 516.4L1072.9 522.9M1202.4 686.5L1196.0 678.6M1107.4 607.7L1098.5 607.9M1285.3 616.1L1270.6 609.7M1190.0 662.1L1195.6 652.7M1199.3 559.9L1196.6 539.3M1224.0 524.0L1242.2 536.2M1170.5 669.4L1178.3 660.3M1107.8 522.9L1100.3 539.7M1094.5 512.0L1090.1 526.3M1063.4 551.7L1061.0 565.5M1099.8 643.9L1103.6 657.8M1070.8 618.5L1078.7 613.4M1201.3 460.6L1209.9 475.4M1174.6 621.4L1163.5 632.0M1076.4 565.3L1084.9 580.0M1062.4 503.7L1072.9 522.9M1080.4 623.1L1086.5 630.7M1135.0 485.0L1127.5 468.3M1255.4 638.1L1243.9 621.8M1163.5 528.4L1148.2 532.9M1189.6 441.9L1201.3 460.6M1063.2 601.6L1065.3 611.7M1143.4 663.6L1154.4 655.4M1117.5 486.9L1124.5 501.4M1217.2 671.3L1208.2 668.2M1155.7 689.6L1161.2 678.5M1111.3 472.5L1127.5 468.3M1164.1 644.9L1175.9 648.1M1090.5 567.1L1097.7 578.4M1201.2 644.5L1212.0 644.6M1086.1 616.2L1089.9 623.7M1265.3 576.8L1256.2 562.3M1159.4 441.0L1174.7 440.6M1167.3 656.8L1154.4 655.4M1233.5 645.1L1245.5 649.2M1098.2 625.3L1100.8 633.5M1218.9 580.9L1232.5 587.9M1174.6 621.4L1181.5 603.6M1222.2 641.1L1209.9 634.6M1123.0 518.2L1139.6 503.5M1221.4 600.9L1236.7 606.1M1141.4 549.4L1157.4 547.0M1090.1 526.3L1078.2 508.4M1165.5 576.9L1183.7 569.5M1238.1 519.1L1250.7 511.1M1234.4 569.9L1256.2 562.3M1202.3 622.9L1218.3 627.7M1123.3 681.1L1135.8 673.0M1127.5 468.3L1149.3 474.4M1094.3 553.8L1109.9 554.6M1222.4 507.6L1225.0 488.3M1093.8 663.8L1095.4 652.3M1151.6 493.5L1139.6 503.5M1048.1 542.8L1066.0 536.9M1046.0 568.6L1061.0 565.5M1255.7 527.6L1250.7 511.1M1234.4 569.9L1218.9 580.9M1131.7 579.4L1116.1 580.1M1286.5 517.8L1271.9 528.4M1230.9 631.3L1218.3 627.7M1089.5 608.8L1078.7 613.4M1132.1 659.6L1142.1 651.5M1265.9 646.9L1258.1 655.1M1196.9 488.5L1210.9 494.0M1152.1 642.5L1163.5 632.0M1222.4 507.6L1205.1 509.6M1113.0 676.2L1103.1 670.5M1178.3 660.3L1185.5 652.4M1165.5 576.9L1168.5 593.4M1048.6 591.0L1059.4 579.3M1190.4 472.6L1182.1 456.7M1193.7 594.5L1199.9 577.7M1098.2 625.3L1089.9 623.7M1073.1 606.8L1078.7 613.4M1070.2 491.6L1088.9 495.8M1221.4 600.9L1228.4 617.3M1194.6 688.2L1186.0 689.6M1215.2 448.6L1209.9 475.4M1139.1 593.2L1131.7 579.4M1070.8 618.5L1065.3 611.7M1109.7 649.8L1108.3 639.1M1167.0 608.2L1168.5 593.4M1276.4 592.5L1270.6 609.7M1072.9 522.9L1066.0 536.9M1086.1 616.2L1080.4 623.1M1124.0 668.3L1120.8 655.0M1175.0 515.4L1168.9 499.7M1217.2 671.3L1211.3 660.8M1092.2 599.8L1089.5 608.8M1149.6 630.1L1152.1 642.5M1190.4 472.6L1209.9 475.4M1082.2 639.4L1088.5 645.7M1260.2 545.0L1242.8 552.7M1225.0 488.3L1209.9 475.4M1149.6 630.1L1163.5 632.0M1169.7 560.7L1183.7 569.5M1201.2 644.5L1198.1 634.5M1190.0 662.1L1178.3 660.3M1173.2 679.8L1180.7 670.4M1159.8 457.8L1149.3 474.4M1236.7 606.1L1228.4 617.3M1167.3 656.8L1170.5 669.4M1152.2 669.0L1147.8 678.1M1136.5 628.7L1149.6 630.1M1201.8 607.6L1208.8 592.7M1161.2 666.1L1161.2 678.5M1136.9 607.2L1144.9 617.5M1169.7 560.7L1165.5 576.9M1165.5 576.9L1181.9 585.0M1088.9 495.8L1107.6 503.1M1154.4 655.4L1142.1 651.5M1124.4 590.2L1116.1 580.1M1180.0 486.3L1187.7 503.0M1147.2 578.2L1131.7 579.4M1065.6 632.6L1077.3 632.4M1129.4 447.6L1142.0 460.2M1070.8 618.5L1073.1 606.8M1082.7 539.2L1079.0 552.6M1248.0 467.0L1258.5 476.3M1230.9 631.3L1243.9 621.8M1132.1 659.6L1120.8 655.0M1115.9 538.1L1100.3 539.7M1250.7 511.1L1265.9 511.8M1121.1 624.7L1115.4 632.8M1202.3 622.9L1189.0 615.6M1164.1 644.9L1152.1 642.5M1080.4 623.1L1089.9 623.7M1103.7 617.3L1108.0 626.5M1242.8 552.7L1256.2 562.3M1072.9 522.9L1082.7 539.2M1164.1 644.9L1163.5 632.0M1171.9 469.3L1159.8 457.8M1217.4 652.3L1226.8 653.7M1073.6 597.1L1063.2 601.6M1088.9 495.8L1099.6 485.2M1084.1 592.7L1073.6 597.1M1222.4 507.6L1238.1 519.1M1268.0 486.6L1255.0 495.3M1061.0 624.9L1057.2 617.1M1261.5 624.4L1253.7 609.9M1216.2 682.0L1206.3 676.3M1046.0 568.6L1059.4 579.3M1053.8 609.1L1063.2 601.6M1209.9 634.6L1212.0 644.6M1115.4 632.8L1118.6 643.4M1094.3 553.8L1079.0 552.6M1221.4 600.9L1218.9 580.9M1237.5 500.3L1241.5 482.8M1174.7 440.6L1159.8 457.8M1181.5 531.9L1192.9 520.4M1187.5 628.8L1198.1 634.5M1205.1 509.6L1209.3 528.0M1224.0 524.0L1209.3 528.0M1173.2 679.8L1161.2 678.5M1226.0 539.5L1226.5 555.5M1293.4 540.3L1295.4 552.9M1163.5 528.4L1156.2 512.2M1242.9 635.6L1230.9 631.3M1127.5 468.3L1117.5 486.9M1169.7 560.7L1172.0 543.8M1273.1 637.5L1265.9 646.9M1097.7 578.4L1084.9 580.0M1260.2 545.0L1277.6 543.9M1193.7 594.5L1181.9 585.0M1141.4 549.4L1148.2 532.9M1176.3 636.2L1188.6 642.2M1074.2 586.9L1073.6 597.1M1253.7 609.9L1243.9 621.8M1046.4 556.0L1048.1 542.8M1108.0 626.5L1108.3 639.1M1255.0 495.3L1265.9 511.8M1242.8 552.7L1226.0 539.5M1218.9 580.9L1208.8 592.7M1242.9 635.6L1255.4 638.1M1108.0 626.5L1100.8 633.5M1173.2 679.8L1170.5 669.4M1175.0 515.4L1156.2 512.2M1293.2 591.7L1280.6 575.6M1103.7 617.3L1113.2 617.5M1082.3 603.5L1073.6 597.1M1094.4 589.4L1106.4 586.9M1237.5 500.3L1250.7 511.1M1108.3 639.1L1100.8 633.5M1195.6 652.7L1185.5 652.4M1135.8 673.0L1147.8 678.1M1205.1 509.6L1196.9 488.5M1210.8 547.2L1196.6 539.3M1226.8 653.7L1236.8 658.0M1080.4 623.1L1077.3 632.4M1151.6 493.5L1168.9 499.7M1167.3 656.8L1161.2 666.1M1109.7 649.8L1113.2 662.9M1237.1 459.4L1226.3 471.6M1260.2 545.0L1242.2 536.2M1265.3 576.8L1276.4 592.5M1229.1 676.2L1217.2 671.3M1273.1 637.5L1255.4 638.1M1126.7 635.1L1139.2 639.7M1149.6 630.1L1139.2 639.7M1159.8 457.8L1182.1 456.7M1126.7 635.1L1118.6 643.4M1063.4 551.7L1079.0 552.6M1242.8 667.8L1236.8 658.0M1199.9 577.7L1199.3 559.9M1158.7 618.9L1144.9 617.5M1136.9 607.2L1126.5 601.3M1167.3 656.8L1164.1 644.9M1174.6 621.4L1176.3 636.2M1115.9 538.1L1107.8 522.9M1232.5 587.9L1246.4 594.7M1086.5 630.7L1089.9 623.7M1157.4 547.0L1172.0 543.8M1123.3 681.1L1124.0 668.3M1131.1 534.7L1115.9 538.1M1062.3 590.9L1063.2 601.6M1107.4 607.7L1113.2 617.5M1070.8 618.5L1071.8 626.4M1181.5 531.9L1175.0 515.4M1238.1 519.1L1237.5 500.3M1175.9 648.1L1188.6 642.2M1136.5 628.7L1144.9 617.5M1098.5 607.9L1095.1 616.5M1046.0 568.6L1046.4 556.0M1168.9 499.7L1187.7 503.0M1077.3 632.4L1086.5 630.7M1261.5 624.4L1243.9 621.8M1167.0 608.2L1181.5 603.6M1109.7 649.8L1118.6 643.4M1090.2 470.1L1111.3 472.5M1074.2 586.9L1084.1 592.7M1077.3 632.4L1071.8 626.4M1253.7 609.9L1270.6 609.7M1155.7 689.6L1147.8 678.1M1098.2 625.3L1086.5 630.7M1185.5 652.4L1175.9 648.1M1048.1 542.8L1063.4 551.7M1293.4 540.3L1277.6 543.9M1088.5 645.7L1092.4 636.9M1229.1 676.2L1222.6 679.3M1171.9 469.3L1190.4 472.6M1157.4 547.0L1153.2 563.5M1082.3 603.5L1084.1 592.7M1273.1 637.5L1261.5 624.4M1296.0 565.5L1295.4 552.9M1261.2 593.8L1270.6 609.7M1222.6 679.3L1216.2 682.0M1123.0 518.2L1107.8 522.9M1174.6 621.4L1158.7 618.9M1079.5 480.3L1090.2 470.1M1192.9 520.4L1196.6 539.3M1103.7 617.3L1095.1 616.5M1094.4 589.4L1092.2 599.8M1196.9 488.5L1209.9 475.4M1143.4 663.6L1142.1 651.5M1090.2 470.1L1102.2 461.1M1242.2 536.2L1242.8 552.7M1094.5 512.0L1107.8 522.9M1214.7 566.1L1226.5 555.5M1226.8 653.7L1227.9 665.4M1176.6 690.4L1166.4 690.4M1090.1 526.3L1100.3 539.7M1121.1 624.7L1126.7 635.1M1071.9 576.3L1059.4 579.3M1107.4 607.7L1103.7 617.3M1181.5 531.9L1172.0 543.8M1184.7 680.3L1196.0 678.6M1201.2 644.5L1209.9 634.6M1201.3 460.6L1182.1 456.7M1158.7 618.9L1167.0 608.2M1190.0 662.1L1200.8 661.1M1166.4 690.4L1155.7 689.6M1211.3 660.8L1219.9 662.1M1113.7 596.3L1116.1 580.1M1174.7 440.6L1189.6 441.9M1135.0 485.0L1124.5 501.4M1151.6 493.5L1156.2 512.2M1073.1 606.8L1073.6 597.1M1129.4 447.6L1127.5 468.3M1154.4 655.4L1152.2 669.0M1063.4 551.7L1066.0 536.9M1057.2 617.1L1070.8 618.5M1154.3 590.5L1151.5 604.5M1143.4 663.6L1147.8 678.1M1123.0 518.2L1115.9 538.1M1219.9 662.1L1227.9 665.4M1228.4 617.3L1218.3 627.7M1189.6 441.9L1203.2 444.7M1202.3 622.9L1198.1 634.5M1206.5 653.4L1195.6 652.7M1274.8 559.7L1277.6 543.9M1176.6 690.4L1184.7 680.3M1140.1 519.4L1139.6 503.5M1121.1 624.7L1123.9 613.2M1261.5 624.4L1270.6 609.7M1169.7 560.7L1157.4 547.0M1103.1 670.5L1093.8 663.8M1279.7 627.2L1270.6 609.7M1199.3 559.9L1214.7 566.1M1250.4 662.1L1245.5 649.2M1217.4 652.3L1212.0 644.6M1164.1 644.9L1154.4 655.4M1265.3 576.8L1261.2 593.8M1048.6 591.0L1062.3 590.9M1080.4 623.1L1071.8 626.4M1126.5 601.3L1123.9 613.2M1093.8 663.8L1085.2 656.4M1063.4 551.7L1076.4 565.3M1088.9 495.8L1078.2 508.4M1233.5 645.1L1230.9 631.3M1275.7 497.2L1265.9 511.8M1236.7 606.1L1246.4 594.7M1131.1 534.7L1125.7 551.9M1268.0 486.6L1275.7 497.2M1217.2 671.3L1219.9 662.1M1116.3 606.8L1113.2 617.5M1238.1 519.1L1224.0 524.0M1076.4 565.3L1071.9 576.3M1166.4 690.4L1161.2 678.5M1061.0 624.9L1071.8 626.4M1295.3 578.7L1293.2 591.7M1099.8 643.9L1092.4 636.9M1084.1 592.7L1084.9 580.0M1085.2 656.4L1088.5 645.7M1098.5 607.9L1089.5 608.8M1151.6 493.5L1135.0 485.0M1176.6 690.4L1173.2 679.8M1164.1 644.9L1176.3 636.2M1121.1 567.2L1131.7 579.4M1125.7 551.9L1109.9 554.6M1181.9 585.0L1183.7 569.5M1276.4 592.5L1280.6 575.6M1149.6 630.1L1158.7 618.9M1131.8 619.4L1144.9 617.5M1255.0 495.3L1241.5 482.8M1139.2 639.7L1142.1 651.5M1221.4 600.9L1214.1 614.4M1211.3 660.8L1206.5 653.4M1242.2 536.2L1226.0 539.5M1189.6 441.9L1182.1 456.7M1189.0 615.6L1181.5 603.6M1201.8 607.6L1189.0 615.6M1233.5 645.1L1222.2 641.1M1136.8 565.1L1125.7 551.9M1214.1 614.4L1218.3 627.7M1102.5 598.0L1106.4 586.9M1124.4 590.2L1126.5 601.3M1192.9 520.4L1187.7 503.0M1115.4 632.8L1108.0 626.5M1090.1 526.3L1107.8 522.9M1229.1 676.2L1227.9 665.4M1228.4 617.3L1243.9 621.8M1218.9 580.9L1214.7 566.1M1210.8 547.2L1199.3 559.9M1205.1 509.6L1224.0 524.0M1074.2 586.9L1084.9 580.0M1194.6 688.2L1196.0 678.6M1046.4 556.0L1061.0 565.5M1079.5 480.3L1099.6 485.2M1290.4 528.6L1271.9 528.4M1255.7 527.6L1260.2 545.0M1099.8 643.9L1108.3 639.1M1242.9 635.6L1233.5 645.1M1180.7 670.4L1189.9 671.4M1099.8 643.9L1100.8 633.5M1195.6 652.7L1188.6 642.2M1258.5 476.3L1268.0 486.6M1085.2 656.4L1095.4 652.3M1255.0 495.3L1250.7 511.1M1296.0 565.5L1295.3 578.7M1234.4 569.9L1232.5 587.9M1181.5 531.9L1196.6 539.3M1106.0 569.0L1097.7 578.4M1103.6 657.8L1113.2 662.9M1184.7 680.3L1180.7 670.4M1261.2 593.8L1253.7 609.9M1286.5 517.8L1265.9 511.8M1140.1 519.4L1148.2 532.9M1174.6 621.4L1189.0 615.6M1098.2 625.3L1108.0 626.5M1090.1 526.3L1082.7 539.2M1070.8 618.5L1080.4 623.1M1057.2 617.1L1053.8 609.1M1154.3 590.5L1165.5 576.9M1090.5 567.1L1079.0 552.6M1053.8 609.1L1051.0 600.5M1051.0 600.5L1063.2 601.6M1185.7 551.6L1181.5 531.9M1131.1 534.7L1141.4 549.4M1129.8 647.2L1132.1 659.6M1129.8 647.2L1139.2 639.7M1200.8 661.1L1208.2 668.2M1129.8 647.2L1118.6 643.4M1139.6 503.5L1156.2 512.2" stroke="#111" stroke-width="0.95" fill="none"/><path d="M1135.0 392.0L1136.6 392.0L1138.1 391.9L1139.5 391.9L1140.9 392.0L1142.2 392.1L1143.7 392.3L1145.4 392.6L1147.3 392.9L1149.5 393.4L1152.0 394.0L1154.9 394.7L1158.1 395.5L1161.5 396.3L1165.1 397.3L1168.9 398.3L1172.9 399.4L1177.1 400.7L1181.3 402.0L1185.6 403.5L1190.0 405.0L1194.6 406.7L1199.4 408.6L1204.4 410.6L1209.6 412.7L1214.9 414.9L1220.1 417.2L1225.4 419.5L1230.4 421.7L1235.4 423.9L1240.0 426.0L1244.4 428.0L1248.7 429.9L1252.8 431.8L1256.8 433.7L1260.8 435.6L1264.6 437.5L1268.5 439.4L1272.3 441.5L1276.1 443.7L1280.0 446.0L1284.0 448.5L1288.1 451.1L1292.4 453.9L1296.6 456.7L1300.8 459.6L1304.8 462.6L1308.6 465.5L1312.1 468.4L1315.3 471.2L1318.0 474.0L1320.2 476.5L1322.0 478.8L1323.3 480.9L1324.4 482.9L1325.2 485.0L1326.0 487.2L1326.8 489.8L1327.6 492.7L1328.7 496.0L1330.0 500.0L1331.6 504.8L1333.5 510.5L1335.4 516.8L1337.5 523.5L1339.6 530.4L1341.6 537.2L1343.5 543.9L1345.3 550.0L1346.8 555.5L1348.0 560.0L1348.9 563.6L1349.7 566.5L1350.2 568.8L1350.6 570.7L1350.8 572.2L1351.0 573.6L1351.0 575.0L1351.0 576.4L1351.0 578.0L1351.0 580.0L1351.0 582.2L1351.0 584.3L1351.0 586.3L1351.0 588.4L1350.8 590.6L1350.6 592.9L1350.2 595.4L1349.7 598.0L1348.9 600.9L1348.0 604.0L1346.9 607.5L1345.7 611.3L1344.5 615.3L1343.0 619.6L1341.4 624.0L1339.6 628.5L1337.6 633.0L1335.4 637.4L1332.8 641.8L1330.0 646.0L1326.8 650.2L1323.1 654.5L1319.0 658.8L1314.7 663.2L1310.2 667.5L1305.7 671.7L1301.1 675.7L1296.5 679.4L1292.1 682.9L1288.0 686.0L1284.0 688.7L1280.2 691.0L1276.4 693.0L1272.6 694.8L1268.9 696.4L1265.2 697.9L1261.4 699.3L1257.7 700.8L1253.9 702.3L1250.0 704.0L1246.1 705.8L1242.1 707.7L1238.1 709.7L1234.1 711.6L1230.1 713.6L1226.1 715.4L1222.1 717.3L1218.0 719.0L1214.0 720.6L1210.0 722.0L1206.0 723.3L1202.2 724.5L1198.3 725.6L1194.5 726.5L1190.6 727.4L1186.7 728.3L1182.7 729.0L1178.6 729.7L1174.4 730.4L1170.0 731.0L1165.3 731.6L1160.3 732.1L1155.1 732.6L1149.8 733.0L1144.4 733.3L1139.0 733.6L1133.8 733.8L1128.9 733.9L1124.2 734.0L1120.0 734.0L1116.2 733.9L1112.8 733.8L1109.6 733.6L1106.7 733.3L1103.9 732.9L1101.2 732.5L1098.5 732.0L1095.8 731.4L1093.0 730.8L1090.0 730.0L1086.8 729.1L1083.5 728.1L1080.0 727.1L1076.6 725.9L1073.1 724.6L1069.7 723.3L1066.5 722.0L1063.4 720.7L1060.6 719.3L1058.0 718.0L1055.8 716.7L1053.8 715.5L1052.1 714.3L1050.6 713.1L1049.2 711.9L1047.9 710.6L1046.6 709.1L1045.2 707.6L1043.7 705.9L1042.0 704.0L1040.1 701.9L1038.1 699.6L1036.0 697.1L1033.9 694.5L1031.8 691.8L1029.6 689.0L1027.5 686.2L1025.6 683.4L1023.7 680.7L1022.0 678.0L1020.5 675.4L1019.0 672.9L1017.6 670.4L1016.4 667.9L1015.1 665.4L1014.0 662.8L1012.9 660.2L1011.9 657.6L1010.9 654.8L1010.0 652.0L1009.1 649.1L1008.3 646.1L1007.5 643.1L1006.7 640.0L1006.0 636.9L1005.4 633.7L1004.9 630.4L1004.4 627.0L1004.0 623.6L1003.6 620.0L1003.3 616.3L1003.1 612.4L1002.9 608.5L1002.8 604.4L1002.8 600.2L1002.8 596.1L1002.9 592.0L1003.1 587.9L1003.3 583.9L1003.6 580.0L1003.9 576.2L1004.3 572.5L1004.8 568.8L1005.3 565.2L1005.9 561.6L1006.5 558.0L1007.2 554.5L1008.1 550.9L1009.0 547.5L1010.0 544.0L1011.1 540.6L1012.3 537.2L1013.6 533.9L1014.9 530.7L1016.3 527.4L1017.9 524.2L1019.5 521.0L1021.2 517.7L1023.1 514.4L1025.0 511.0L1027.1 507.6L1029.3 504.1L1031.7 500.6L1034.2 497.1L1036.8 493.6L1039.4 490.0L1042.1 486.5L1044.8 483.0L1047.4 479.5L1050.0 476.0L1052.6 472.6L1055.2 469.1L1057.8 465.7L1060.4 462.3L1063.0 458.9L1065.6 455.6L1068.2 452.2L1070.8 448.8L1073.4 445.4L1076.0 442.0L1078.6 438.5L1081.2 434.9L1083.9 431.1L1086.5 427.4L1089.1 423.7L1091.7 420.1L1094.2 416.7L1096.6 413.5L1098.9 410.5L1101.0 408.0L1103.0 405.8L1104.7 403.9L1106.4 402.2L1108.0 400.8L1109.4 399.6L1110.9 398.5L1112.3 397.5L1113.8 396.6L1115.4 395.8L1117.0 395.0L1118.7 394.3L1120.5 393.7L1122.3 393.2L1124.1 392.8L1125.9 392.6L1127.8 392.4L1129.6 392.2L1131.4 392.1L1133.2 392.1Z" fill="none" stroke="#111" stroke-width="1.1"/></svg>
<div class="a" style="left:1638px;top:114px;width:240px;height:156px;border:1px solid #a9d3e3;border-radius:4px;background:rgba(245,245,245,0.85)"></div>
<svg class="a" style="left:1651px;top:129px;" width="9" height="9" viewBox="0 0 9 9"><rect x="0.5" y="0.5" width="8" height="8" rx="2" fill="url(#eg)" stroke="#6d74c4" stroke-width="1"/><rect x="2" y="4" width="5" height="1.3" fill="#2222dd"/></svg>
<div class="t" style="left:1662.23px;top:126.69px;font-size:11px;line-height:11px;color:#5f8ea8;font-weight:normal;font-style:normal;">Scene</div>
<svg class="a" style="left:1667px;top:148px;" width="9" height="9" viewBox="0 0 9 9"><rect x="0.5" y="0.5" width="8" height="8" rx="2" fill="url(#eg)" stroke="#6d74c4" stroke-width="1"/><rect x="2" y="4" width="5" height="1.3" fill="#2222dd"/></svg>
<div class="t" style="left:1678.23px;top:145.69px;font-size:11px;line-height:11px;color:#5e9cc0;font-weight:normal;font-style:normal;">hip_joint_prosthesis mesh</div>
<svg class="a" style="left:1683px;top:168px;" width="9" height="9" viewBox="0 0 9 9"><rect x="0.5" y="0.5" width="8" height="8" rx="2" fill="url(#eg)" stroke="#6d74c4" stroke-width="1"/><rect x="2" y="4" width="5" height="1.3" fill="#2222dd"/><rect x="3.85" y="2" width="1.3" height="5" fill="#2222dd"/></svg>
<svg class="a" style="left:1697px;top:168px;" width="12" height="9" viewBox="0 0 12 9"><path d="M0.3 4.5 Q6 -1.8 11.7 4.5 Q6 10.8 0.3 4.5Z" fill="#7a7a7a"/><circle cx="6" cy="4.5" r="2.4" fill="#d8d8d8"/><circle cx="6" cy="4.5" r="1.5" fill="#6a6a6a"/></svg>
<div class="t" style="left:1712.23px;top:166.19px;font-size:11px;line-height:11px;color:#5e9cc0;font-weight:normal;font-style:normal;">volumeOnGeoVolumes_0</div>
<svg class="a" style="left:1683px;top:188px;" width="9" height="9" viewBox="0 0 9 9"><rect x="0.5" y="0.5" width="8" height="8" rx="2" fill="url(#eg)" stroke="#6d74c4" stroke-width="1"/><rect x="2" y="4" width="5" height="1.3" fill="#2222dd"/><rect x="3.85" y="2" width="1.3" height="5" fill="#2222dd"/></svg>
<svg class="a" style="left:1697px;top:188px;" width="12" height="9" viewBox="0 0 12 9"><path d="M0.3 4.5 Q6 -1.8 11.7 4.5 Q6 10.8 0.3 4.5Z" fill="#7a7a7a"/><circle cx="6" cy="4.5" r="2.4" fill="#d8d8d8"/><circle cx="6" cy="4.5" r="1.5" fill="#6a6a6a"/></svg>
<div class="t" style="left:1712.23px;top:186.19px;font-size:11px;line-height:11px;color:#5e9cc0;font-weight:normal;font-style:normal;">volumeOnGeoVolumes_1</div>
<svg class="a" style="left:1683px;top:208px;" width="9" height="9" viewBox="0 0 9 9"><rect x="0.5" y="0.5" width="8" height="8" rx="2" fill="url(#eg)" stroke="#6d74c4" stroke-width="1"/><rect x="2" y="4" width="5" height="1.3" fill="#2222dd"/><rect x="3.85" y="2" width="1.3" height="5" fill="#2222dd"/></svg>
<svg class="a" style="left:1697px;top:208px;" width="12" height="9" viewBox="0 0 12 9"><path d="M0.3 4.5 Q6 -1.8 11.7 4.5 Q6 10.8 0.3 4.5Z" fill="#7a7a7a"/><circle cx="6" cy="4.5" r="2.4" fill="#d8d8d8"/><circle cx="6" cy="4.5" r="1.5" fill="#6a6a6a"/></svg>
<div class="t" style="left:1712.23px;top:206.19px;font-size:11px;line-height:11px;color:#5e9cc0;font-weight:normal;font-style:normal;">volumeOnGeoVolumes_2</div>
<svg class="a" style="left:1683px;top:228px;" width="9" height="9" viewBox="0 0 9 9"><rect x="0.5" y="0.5" width="8" height="8" rx="2" fill="url(#eg)" stroke="#6d74c4" stroke-width="1"/><rect x="2" y="4" width="5" height="1.3" fill="#2222dd"/><rect x="3.85" y="2" width="1.3" height="5" fill="#2222dd"/></svg>
<svg class="a" style="left:1697px;top:228px;" width="12" height="9" viewBox="0 0 12 9"><path d="M0.3 4.5 Q6 -1.8 11.7 4.5 Q6 10.8 0.3 4.5Z" fill="#7a7a7a"/><circle cx="6" cy="4.5" r="2.4" fill="#d8d8d8"/><circle cx="6" cy="4.5" r="1.5" fill="#6a6a6a"/></svg>
<div class="t" style="left:1712.23px;top:226.19px;font-size:11px;line-height:11px;color:#5e9cc0;font-weight:normal;font-style:normal;">volumeOnGeoVolumes_3</div>
<svg class="a" style="left:1683px;top:248px;" width="9" height="9" viewBox="0 0 9 9"><rect x="0.5" y="0.5" width="8" height="8" rx="2" fill="url(#eg)" stroke="#6d74c4" stroke-width="1"/><rect x="2" y="4" width="5" height="1.3" fill="#2222dd"/><rect x="3.85" y="2" width="1.3" height="5" fill="#2222dd"/></svg>
<svg class="a" style="left:1697px;top:248px;" width="12" height="9" viewBox="0 0 12 9"><path d="M0.3 4.5 Q6 -1.8 11.7 4.5 Q6 10.8 0.3 4.5Z" fill="#7a7a7a"/><circle cx="6" cy="4.5" r="2.4" fill="#d8d8d8"/><circle cx="6" cy="4.5" r="1.5" fill="#6a6a6a"/></svg>
<div class="t" style="left:1712.23px;top:246.19px;font-size:11px;line-height:11px;color:#5e9cc0;font-weight:normal;font-style:normal;">volumeOnGeoVolumes_4</div>
<svg class="a" style="left:1866px;top:258px;" width="9" height="9" viewBox="0 0 9 9"><path d="M1 8 L8 1 M4.5 8 L8 4.5" stroke="#555" stroke-width="0.9"/></svg>
<svg class="a" style="left:880px;top:960px" width="75" height="75" viewBox="0 0 75 75"><path d="M15 60 V31" stroke="#3aa83a" stroke-width="1.6"/><path d="M11.3 33.5 L15 27 L18.7 33.5Z" fill="#2d8a2d"/><path d="M18 64.5 H50" stroke="#e01010" stroke-width="1.6"/><path d="M49 60.5 L54 64.5 L49 68.5Z" fill="#a01010"/><text x="7" y="22" font-family="Liberation Sans" font-size="20" font-weight="bold" font-style="italic" fill="#3cb83c" transform="translate(7 22) scale(0.95 1) translate(-7 -22)">Y</text><text x="53" y="69" font-family="Liberation Sans" font-size="21" font-weight="bold" font-style="italic" fill="#e01515">X</text><text x="3" y="71" font-family="Liberation Sans" font-size="29" font-weight="bold" font-style="italic" fill="#7777f7" transform="translate(3 71) scale(1.05 0.82) translate(-3 -71)">Z</text></svg>
<div class="a" style="left:824px;top:1071px;width:199px;height:28px;border:1px solid #c5dbe3;border-radius:4px;background:rgba(235,235,235,0.6)"></div>
<div class="t" style="left:832.23px;top:1078.69px;font-size:11px;line-height:11px;color:#9ab4c2;font-weight:normal;font-style:normal;">faceGroupOnGeoFaces_34</div>
<svg class="a" style="left:1013px;top:1088px;" width="9" height="9" viewBox="0 0 9 9"><path d="M1 8 L8 1 M4.5 8 L8 4.5" stroke="#777" stroke-width="0.9"/></svg>
<div class="a" style="left:1750px;top:1077px;width:139px;height:33px;background:#0b5e9e;border-radius:4px 4px 0 0"></div>
<svg class="a" style="left:1759px;top:1085px;" width="25" height="17" viewBox="0 0 25 17"><ellipse cx="12" cy="8" rx="11.5" ry="7.8" fill="#fff"/><path d="M16 13 L22 17 L19 11Z" fill="#fff"/><rect x="6" y="4" width="12" height="8" rx="1" fill="#0b5e9e"/><rect x="13" y="2.6" width="4" height="2" fill="#0b5e9e"/><circle cx="12" cy="8" r="2.6" fill="#fff"/><circle cx="12" cy="8" r="1.5" fill="#0b5e9e"/></svg>
<div class="t" style="left:1794.66px;top:1087.84px;font-size:12px;line-height:12px;color:#fff;font-weight:normal;font-style:normal;">Report an issue</div>
</body></html>
